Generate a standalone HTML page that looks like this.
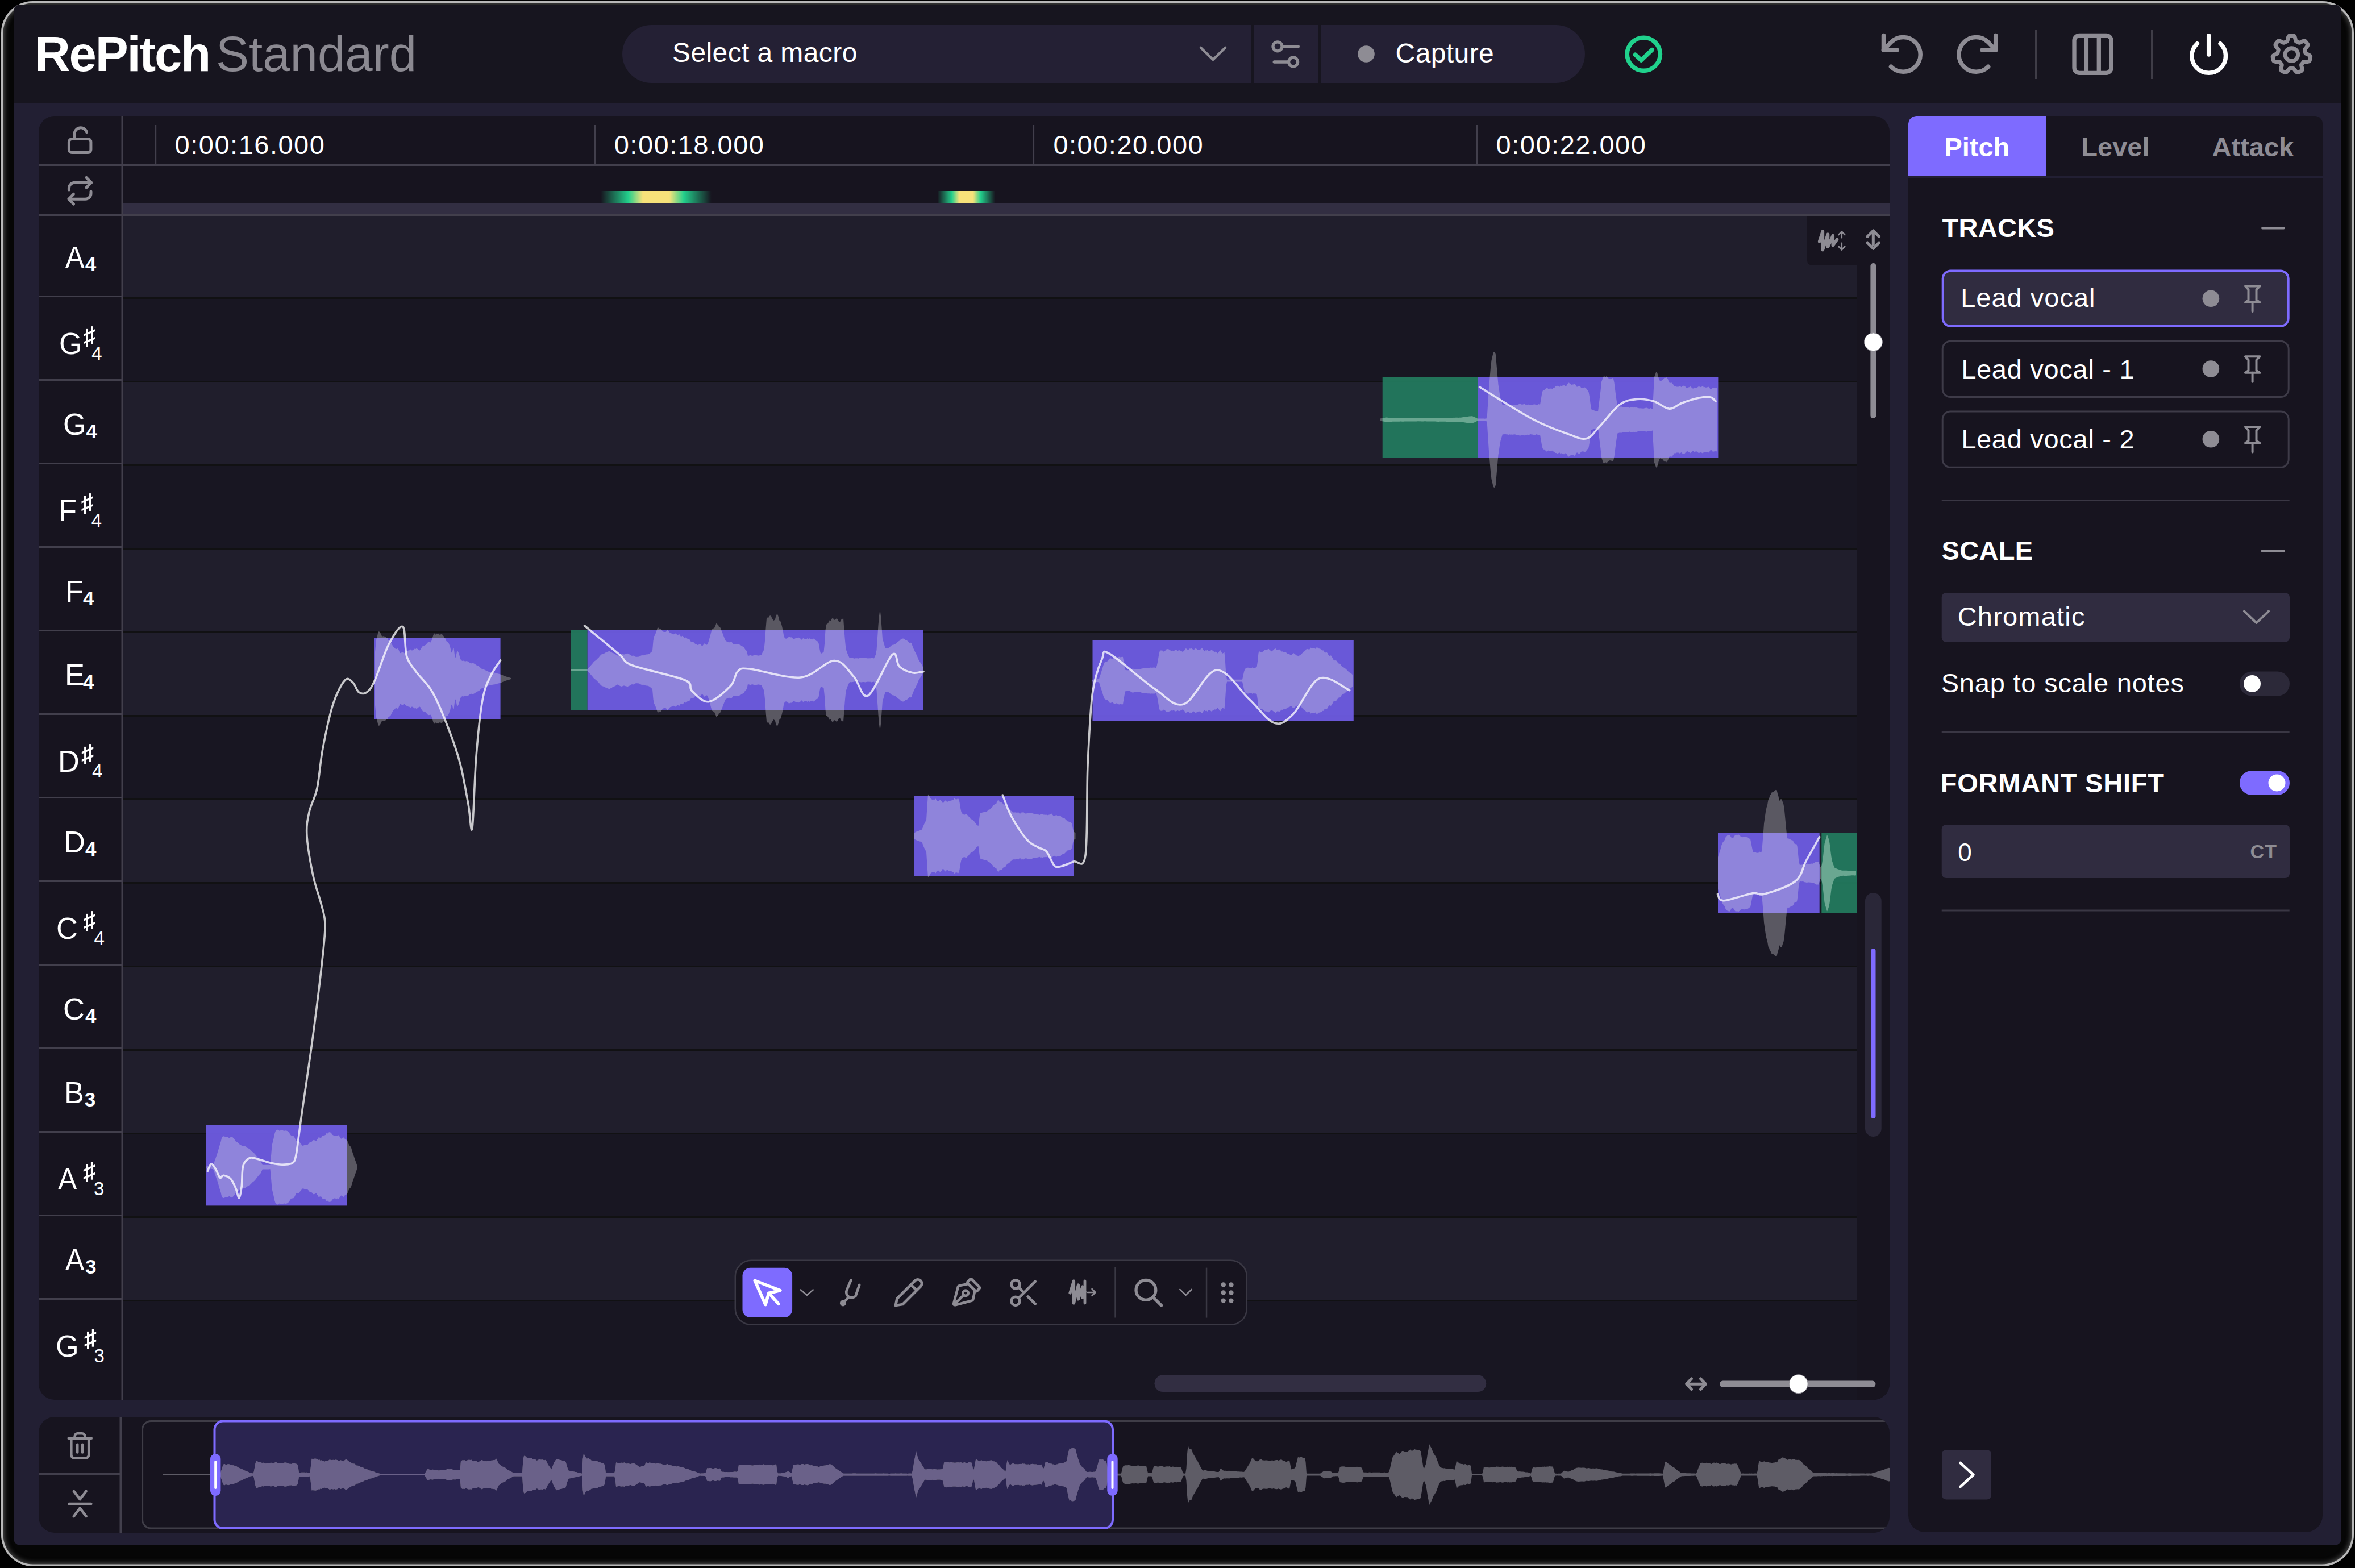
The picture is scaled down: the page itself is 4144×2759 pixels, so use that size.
<!DOCTYPE html><html><head><meta charset="utf-8"><title>RePitch Standard</title><style>
html,body{margin:0;padding:0;background:#000;width:4144px;height:2759px;overflow:hidden;font-family:"Liberation Sans", sans-serif}
.t{position:absolute;white-space:pre;font-family:"Liberation Sans", sans-serif}
svg{position:absolute;left:0;top:0}
</style></head><body>
<div style="position:absolute;left:2px;top:2px;width:4140px;height:2754px;border-radius:56px;background:#060606;box-shadow:inset 0 0 0 3.5px #b8b8b8, inset 0 0 10px 5px rgba(150,150,150,0.55)"></div>
<svg width="4144" height="2759" viewBox="0 0 4144 2759">
<rect x="24" y="8" width="4096" height="2711" rx="12" fill="#221f33" />
<path d="M24,20 a12,12 0 0 1 12,-12 H4108 a12,12 0 0 1 12,12 V182 H24 Z" fill="#17151f"/>
<path d="M1146,44 H2202 V146 H1146 A51,51 0 0 1 1146,44 Z" fill="#242034"/>
<rect x="2202" y="44" width="4" height="102" rx="0" fill="#17151f" />
<rect x="2206" y="44" width="114" height="102" rx="0" fill="#242034" />
<rect x="2320" y="44" width="4" height="102" rx="0" fill="#17151f" />
<path d="M2324,44 H2738 A51,51 0 0 1 2738,146 H2324 Z" fill="#242034"/>
<path d="M2113,84 L2134.5,105 L2156,84" fill="none" stroke="#8e8c94" stroke-width="4.5" stroke-linecap="round" stroke-linejoin="round"/>
<g fill="none" stroke="#8e8c94" stroke-width="5.3" stroke-linecap="round"><circle cx="2248" cy="81.8" r="8"/><line x1="2258.8" y1="81.8" x2="2284.3" y2="81.8"/><circle cx="2275.6" cy="109" r="8"/><line x1="2242.2" y1="109" x2="2265" y2="109"/></g>
<circle cx="2404" cy="95" r="14.8" fill="#8e8c94"/>
<g fill="none" stroke="#20d18c" stroke-width="7.6" stroke-linecap="round" stroke-linejoin="round"><circle cx="2892.3" cy="95.3" r="29.1"/><path d="M2877.6,96.3 L2888,106 L2907.1,87.7"/></g>
<path d="M3327.5,117.3 A30.3,30.3 0 1 0 3328,74 L3314.5,88" fill="none" stroke="#8e8c94" stroke-width="7.5" stroke-linecap="round" stroke-linejoin="round"/><path d="M3314.5,62.5 V88 H3338" fill="none" stroke="#8e8c94" stroke-width="7.5" stroke-linecap="round" stroke-linejoin="round"/>
<g transform="translate(6826.2,0) scale(-1,1)"><path d="M3327.5,117.3 A30.3,30.3 0 1 0 3328,74 L3314.5,88" fill="none" stroke="#8e8c94" stroke-width="7.5" stroke-linecap="round" stroke-linejoin="round"/><path d="M3314.5,62.5 V88 H3338" fill="none" stroke="#8e8c94" stroke-width="7.5" stroke-linecap="round" stroke-linejoin="round"/></g>
<rect x="3581" y="52" width="3.5" height="87" rx="0" fill="#3f3d47" />
<g fill="none" stroke="#8e8c94" stroke-width="7.3"><rect x="3650" y="62.5" width="65.2" height="65.8" rx="9"/><line x1="3671.4" y1="62" x2="3671.4" y2="128"/><line x1="3693.3" y1="62" x2="3693.3" y2="128"/></g>
<rect x="3785" y="52" width="3.5" height="87" rx="0" fill="#3f3d47" />
<g fill="none" stroke="#ffffff" stroke-width="7.5" stroke-linecap="round"><path d="M3866.3,76.8 A29.8,29.8 0 1 0 3907.1,76.8"/><line x1="3886.7" y1="62.8" x2="3886.7" y2="96"/></g>
<path d="M4032.40,62.50 L4033.65,62.52 L4034.90,62.59 L4036.15,62.74 L4037.29,63.57 L4038.20,65.33 L4038.85,67.73 L4039.33,70.12 L4039.83,71.92 L4040.50,72.84 L4041.35,73.19 L4042.20,73.54 L4043.03,73.93 L4043.85,74.34 L4044.65,74.78 L4045.45,75.23 L4046.60,75.18 L4048.31,74.44 L4050.48,73.33 L4052.76,72.34 L4054.71,71.96 L4056.07,72.33 L4056.96,73.21 L4057.79,74.15 L4058.59,75.11 L4059.35,76.11 L4060.08,77.13 L4060.74,78.19 L4060.81,79.60 L4059.99,81.42 L4058.53,83.42 L4056.95,85.29 L4055.86,86.79 L4055.56,87.90 L4055.81,88.78 L4056.07,89.66 L4056.29,90.55 L4056.47,91.45 L4056.63,92.35 L4056.78,93.25 L4057.53,94.12 L4059.17,95.00 L4061.40,96.00 L4063.59,97.17 L4065.11,98.45 L4065.66,99.75 L4065.53,100.99 L4065.32,102.23 L4065.06,103.45 L4064.76,104.67 L4064.41,105.87 L4063.99,107.05 L4062.93,107.98 L4061.01,108.48 L4058.53,108.58 L4056.09,108.52 L4054.22,108.60 L4053.17,109.05 L4052.64,109.80 L4052.11,110.55 L4051.55,111.28 L4050.97,111.98 L4050.36,112.66 L4049.75,113.35 L4049.54,114.47 L4049.87,116.31 L4050.48,118.67 L4050.93,121.11 L4050.88,123.10 L4050.21,124.34 L4049.15,125.01 L4048.05,125.62 L4046.94,126.18 L4045.80,126.70 L4044.64,127.18 L4043.45,127.59 L4042.07,127.34 L4040.48,126.15 L4038.85,124.27 L4037.38,122.32 L4036.16,120.92 L4035.15,120.38 L4034.23,120.43 L4033.32,120.48 L4032.40,120.50 L4031.48,120.48 L4030.57,120.43 L4029.65,120.38 L4028.64,120.92 L4027.42,122.32 L4025.95,124.27 L4024.32,126.15 L4022.73,127.34 L4021.35,127.59 L4020.16,127.18 L4019.00,126.70 L4017.86,126.18 L4016.75,125.62 L4015.65,125.01 L4014.59,124.34 L4013.92,123.10 L4013.87,121.11 L4014.32,118.67 L4014.93,116.31 L4015.26,114.47 L4015.05,113.35 L4014.44,112.66 L4013.83,111.98 L4013.25,111.28 L4012.69,110.55 L4012.16,109.80 L4011.63,109.05 L4010.58,108.60 L4008.71,108.52 L4006.27,108.58 L4003.79,108.48 L4001.87,107.98 L4000.81,107.05 L4000.39,105.87 L4000.04,104.67 L3999.74,103.45 L3999.48,102.23 L3999.27,100.99 L3999.14,99.75 L3999.69,98.45 L4001.21,97.17 L4003.40,96.00 L4005.63,95.00 L4007.27,94.12 L4008.02,93.25 L4008.17,92.35 L4008.33,91.45 L4008.51,90.55 L4008.73,89.66 L4008.99,88.78 L4009.24,87.90 L4008.94,86.79 L4007.85,85.29 L4006.27,83.42 L4004.81,81.42 L4003.99,79.60 L4004.06,78.19 L4004.72,77.13 L4005.45,76.11 L4006.21,75.11 L4007.01,74.15 L4007.84,73.21 L4008.73,72.33 L4010.09,71.96 L4012.04,72.34 L4014.32,73.33 L4016.49,74.44 L4018.20,75.18 L4019.35,75.23 L4020.15,74.78 L4020.95,74.34 L4021.77,73.93 L4022.60,73.54 L4023.45,73.19 L4024.30,72.84 L4024.97,71.92 L4025.47,70.12 L4025.95,67.73 L4026.60,65.33 L4027.51,63.57 L4028.65,62.74 L4029.90,62.59 L4031.15,62.52 L4032.40,62.50Z" fill="none" stroke="#8e8c94" stroke-width="7" stroke-linejoin="round"/>
<circle cx="4032.4" cy="96" r="11.3" fill="none" stroke="#8e8c94" stroke-width="7"/>
<defs><clipPath id="ed"><rect x="68" y="204" width="3257" height="2259" rx="28"/></clipPath><clipPath id="grid"><rect x="217" y="380" width="3050" height="2083"/></clipPath></defs>
<g clip-path="url(#ed)">
<rect x="68" y="204" width="3257" height="2259" rx="0" fill="#17141f" />
<rect x="217" y="358" width="3108" height="18" rx="0" fill="#322e42" />
<rect x="217" y="380" width="3050" height="143" rx="0" fill="#201e2c" />
<rect x="217" y="523" width="3050" height="147" rx="0" fill="#181622" />
<rect x="217" y="523" width="3050" height="3" rx="0" fill="#111113" />
<rect x="68" y="520" width="146" height="3" rx="0" fill="#423f4c" />
<rect x="217" y="670" width="3050" height="147" rx="0" fill="#201e2c" />
<rect x="217" y="670" width="3050" height="3" rx="0" fill="#111113" />
<rect x="68" y="667" width="146" height="3" rx="0" fill="#423f4c" />
<rect x="217" y="817" width="3050" height="147" rx="0" fill="#181622" />
<rect x="217" y="817" width="3050" height="3" rx="0" fill="#111113" />
<rect x="68" y="814" width="146" height="3" rx="0" fill="#423f4c" />
<rect x="217" y="964" width="3050" height="147" rx="0" fill="#201e2c" />
<rect x="217" y="964" width="3050" height="3" rx="0" fill="#111113" />
<rect x="68" y="961" width="146" height="3" rx="0" fill="#423f4c" />
<rect x="217" y="1111" width="3050" height="147" rx="0" fill="#201e2c" />
<rect x="217" y="1111" width="3050" height="3" rx="0" fill="#111113" />
<rect x="68" y="1108" width="146" height="3" rx="0" fill="#423f4c" />
<rect x="217" y="1258" width="3050" height="147" rx="0" fill="#181622" />
<rect x="217" y="1258" width="3050" height="3" rx="0" fill="#111113" />
<rect x="68" y="1255" width="146" height="3" rx="0" fill="#423f4c" />
<rect x="217" y="1405" width="3050" height="147" rx="0" fill="#201e2c" />
<rect x="217" y="1405" width="3050" height="3" rx="0" fill="#111113" />
<rect x="68" y="1402" width="146" height="3" rx="0" fill="#423f4c" />
<rect x="217" y="1552" width="3050" height="147" rx="0" fill="#181622" />
<rect x="217" y="1552" width="3050" height="3" rx="0" fill="#111113" />
<rect x="68" y="1549" width="146" height="3" rx="0" fill="#423f4c" />
<rect x="217" y="1699" width="3050" height="147" rx="0" fill="#201e2c" />
<rect x="217" y="1699" width="3050" height="3" rx="0" fill="#111113" />
<rect x="68" y="1696" width="146" height="3" rx="0" fill="#423f4c" />
<rect x="217" y="1846" width="3050" height="147" rx="0" fill="#201e2c" />
<rect x="217" y="1846" width="3050" height="3" rx="0" fill="#111113" />
<rect x="68" y="1843" width="146" height="3" rx="0" fill="#423f4c" />
<rect x="217" y="1993" width="3050" height="147" rx="0" fill="#181622" />
<rect x="217" y="1993" width="3050" height="3" rx="0" fill="#111113" />
<rect x="68" y="1990" width="146" height="3" rx="0" fill="#423f4c" />
<rect x="217" y="2140" width="3050" height="147" rx="0" fill="#201e2c" />
<rect x="217" y="2140" width="3050" height="3" rx="0" fill="#111113" />
<rect x="68" y="2137" width="146" height="3" rx="0" fill="#423f4c" />
<rect x="217" y="2287" width="3050" height="176" rx="0" fill="#181622" />
<rect x="217" y="2287" width="3050" height="3" rx="0" fill="#111113" />
<rect x="68" y="2284" width="146" height="3" rx="0" fill="#423f4c" />
<rect x="3267" y="380" width="58" height="2083" rx="0" fill="#17141f" />
<path d="M3180,380 H3325 V466.6 H3188 A8,8 0 0 1 3180,458.6 Z" fill="#17141f"/>
<rect x="68" y="288.5" width="3257" height="3.5" rx="0" fill="#423f4c" />
<rect x="68" y="376" width="3257" height="4" rx="0" fill="#423f4c" />
<rect x="213.5" y="204" width="3.5" height="2259" rx="0" fill="#423f4c" />
<rect x="272.2" y="220" width="3" height="70" rx="0" fill="#423f4c" />
<rect x="1045.0" y="220" width="3" height="70" rx="0" fill="#423f4c" />
<rect x="1817.1" y="220" width="3" height="70" rx="0" fill="#423f4c" />
<rect x="2597.1" y="220" width="3" height="70" rx="0" fill="#423f4c" />
<defs><linearGradient id="mk" x1="0" x2="1"><stop offset="0" stop-color="#17141f"/><stop offset="0.25" stop-color="#23cf8c"/><stop offset="0.38" stop-color="#f7e27a"/><stop offset="0.62" stop-color="#f7e27a"/><stop offset="0.75" stop-color="#23cf8c"/><stop offset="1" stop-color="#17141f"/></linearGradient></defs>
<rect x="1057" y="336" width="195" height="22" rx="0" fill="url(#mk)" />
<rect x="1649.5" y="336" width="101.5" height="22" rx="0" fill="url(#mk)" />
<g fill="none" stroke="#8e8c94" stroke-width="5" stroke-linecap="round" stroke-linejoin="round"><rect x="121.4" y="244.5" width="38.5" height="24" rx="5"/><path d="M131,244 V236 A11,11 0 0 1 152.5,232.5"/><path d="M121.4,334 V331 A10,10 0 0 1 131.4,321.2 H160.5"/><path d="M152,312.5 L160.5,321.2 L152,330"/><path d="M160,337 V340 A10,10 0 0 1 150,350.3 H121"/><path d="M129.5,341.5 L121,350.3 L129.5,359"/></g>
<g fill="none" stroke="#8e8c94" stroke-linecap="round" stroke-linejoin="round"><path d="M3201.6,424.8 L3207.4,406.9 L3207.4,439.7 L3216.5,412.1 L3216.5,434.5 L3225.3,414.6 L3225.3,431.7 L3232.5,421.5" stroke-width="5.5"/><path d="M3240.8,418.2 V407.7 M3235.3,413.2 L3240.8,407.5 L3246.3,413.2 M3240.8,427.9 V439.2 M3235.3,433.7 L3240.8,439.5 L3246.3,433.7" stroke-width="2.6"/><path d="M3296.3,411.6 V430.3 M3286,416.3 L3296.3,406 L3306.5,416.3 M3286,427 L3296.3,437.3 L3306.5,427" stroke-width="5"/></g>
<rect x="3291.4" y="463" width="10" height="273" rx="5" fill="#8e8c94" />
<circle cx="3296.4" cy="601.8" r="16" fill="#fff" stroke="#8e8c94" stroke-width="1"/>
<rect x="3282" y="1571" width="28.7" height="429" rx="14.35" fill="#2a2738" />
<rect x="3292.5" y="1669" width="8" height="299" rx="4" fill="#7e6bff" />
<g clip-path="url(#grid)">
<path d="M363.0,2052.7 L364.5,2052.3 L366.0,2051.9 L367.5,2051.6 L369.0,2051.1 L370.5,2050.8 L372.0,2050.5 L373.5,2050.3 L375.0,2049.9 L376.5,2046.1 L378.0,2041.9 L379.5,2037.8 L381.0,2033.5 L382.5,2029.1 L384.0,2024.1 L385.5,2019.0 L387.0,2013.8 L388.5,2009.1 L390.0,2002.8 L391.5,2000.0 L393.0,1999.2 L394.5,1999.4 L396.0,2000.1 L397.5,2000.9 L399.0,2000.3 L400.5,2000.3 L402.0,2001.5 L403.5,2002.9 L405.0,2001.6 L406.5,2000.0 L408.0,2000.1 L409.5,2001.3 L411.0,2002.7 L412.5,2004.5 L414.0,2007.5 L415.5,2009.0 L417.0,2009.6 L418.5,2010.1 L420.0,2012.1 L421.5,2013.4 L423.0,2014.2 L424.5,2015.2 L426.0,2016.4 L427.5,2017.0 L429.0,2016.4 L430.5,2016.4 L432.0,2017.3 L433.5,2018.9 L435.0,2019.7 L436.5,2020.3 L438.0,2021.0 L439.5,2021.8 L441.0,2023.7 L442.5,2024.9 L444.0,2026.8 L445.5,2027.6 L447.0,2029.0 L448.5,2030.4 L450.0,2032.2 L451.5,2034.3 L453.0,2036.1 L454.5,2038.1 L456.0,2039.6 L457.5,2041.6 L459.0,2043.2 L460.5,2046.7 L462.0,2049.9 L463.5,2049.8 L465.0,2049.8 L466.5,2049.7 L468.0,2049.8 L469.5,2049.7 L471.0,2049.7 L472.5,2049.7 L474.0,2049.9 L475.5,2049.9 L477.0,2033.9 L478.5,2015.5 L480.0,2009.1 L481.5,2003.0 L483.0,1995.5 L484.5,1991.0 L486.0,1988.5 L487.5,1988.4 L489.0,1987.4 L490.5,1988.5 L492.0,1990.0 L493.5,1989.0 L495.0,1988.9 L496.5,1987.6 L498.0,1989.3 L499.5,1989.5 L501.0,1989.7 L502.5,1989.3 L504.0,1989.4 L505.5,1989.9 L507.0,1991.1 L508.5,1992.4 L510.0,1995.0 L511.5,1997.3 L513.0,1998.6 L514.5,1998.8 L516.0,1998.6 L517.5,2000.1 L519.0,2002.7 L520.5,2006.4 L522.0,2008.2 L523.5,2008.2 L525.0,2007.6 L526.5,2008.6 L528.0,2010.6 L529.5,2012.7 L531.0,2014.3 L532.5,2016.0 L534.0,2015.6 L535.5,2015.1 L537.0,2014.2 L538.5,2014.4 L540.0,2014.8 L541.5,2013.9 L543.0,2012.5 L544.5,2010.5 L546.0,2009.1 L547.5,2009.4 L549.0,2008.6 L550.5,2006.8 L552.0,2005.7 L553.5,2006.3 L555.0,2007.8 L556.5,2008.0 L558.0,2005.1 L559.5,2003.2 L561.0,2000.5 L562.5,2001.8 L564.0,2001.9 L565.5,2001.5 L567.0,1998.7 L568.5,1997.5 L570.0,1998.3 L571.5,1997.5 L573.0,1996.7 L574.5,1993.7 L576.0,1994.9 L577.5,1992.7 L579.0,1992.6 L580.5,1991.6 L582.0,1993.3 L583.5,1994.4 L585.0,1996.8 L586.5,1997.6 L588.0,1999.1 L589.5,1997.6 L591.0,1998.6 L592.5,1997.9 L594.0,1998.7 L595.5,1997.2 L597.0,1999.1 L598.5,2001.3 L600.0,2003.8 L601.5,2003.2 L603.0,2001.9 L604.5,2001.3 L606.0,2002.8 L607.5,2005.1 L609.0,2005.4 L610.5,2005.7 L612.0,2008.9 L613.5,2012.9 L615.0,2015.6 L616.5,2016.9 L618.0,2019.4 L619.5,2024.8 L621.0,2029.7 L622.5,2033.8 L624.0,2038.3 L625.5,2042.4 L627.0,2046.8 L628.5,2051.2 L628.5,2056.0 L627.0,2060.4 L625.5,2064.8 L624.0,2068.9 L622.5,2073.4 L621.0,2077.5 L619.5,2082.4 L618.0,2087.8 L616.5,2090.3 L615.0,2091.6 L613.5,2094.3 L612.0,2098.3 L610.5,2101.5 L609.0,2101.8 L607.5,2102.1 L606.0,2104.4 L604.5,2105.9 L603.0,2105.3 L601.5,2104.0 L600.0,2103.4 L598.5,2105.9 L597.0,2108.1 L595.5,2110.0 L594.0,2108.5 L592.5,2109.3 L591.0,2108.6 L589.5,2109.6 L588.0,2108.1 L586.5,2109.6 L585.0,2110.4 L583.5,2112.8 L582.0,2113.9 L580.5,2115.6 L579.0,2114.6 L577.5,2114.5 L576.0,2112.3 L574.5,2113.5 L573.0,2110.5 L571.5,2109.7 L570.0,2108.9 L568.5,2109.7 L567.0,2108.5 L565.5,2105.7 L564.0,2105.3 L562.5,2105.4 L561.0,2106.7 L559.5,2104.0 L558.0,2102.1 L556.5,2099.2 L555.0,2099.4 L553.5,2100.9 L552.0,2101.5 L550.5,2100.4 L549.0,2098.6 L547.5,2097.8 L546.0,2098.1 L544.5,2096.7 L543.0,2094.7 L541.5,2093.3 L540.0,2092.4 L538.5,2092.8 L537.0,2093.0 L535.5,2092.1 L534.0,2091.6 L532.5,2091.2 L531.0,2092.9 L529.5,2094.5 L528.0,2096.6 L526.5,2098.6 L525.0,2099.6 L523.5,2099.0 L522.0,2099.0 L520.5,2100.8 L519.0,2104.5 L517.5,2107.1 L516.0,2108.6 L514.5,2108.4 L513.0,2108.6 L511.5,2109.9 L510.0,2112.2 L508.5,2114.8 L507.0,2116.1 L505.5,2117.3 L504.0,2117.8 L502.5,2117.9 L501.0,2117.5 L499.5,2117.7 L498.0,2117.9 L496.5,2119.6 L495.0,2118.3 L493.5,2118.2 L492.0,2117.2 L490.5,2118.7 L489.0,2119.8 L487.5,2118.8 L486.0,2118.7 L484.5,2116.2 L483.0,2111.7 L481.5,2104.2 L480.0,2098.1 L478.5,2091.7 L477.0,2073.3 L475.5,2057.3 L474.0,2057.3 L472.5,2057.5 L471.0,2057.5 L469.5,2057.5 L468.0,2057.4 L466.5,2057.5 L465.0,2057.4 L463.5,2057.4 L462.0,2057.3 L460.5,2060.5 L459.0,2064.0 L457.5,2065.6 L456.0,2067.6 L454.5,2069.1 L453.0,2071.1 L451.5,2072.9 L450.0,2075.0 L448.5,2076.8 L447.0,2078.2 L445.5,2079.6 L444.0,2080.4 L442.5,2082.3 L441.0,2083.5 L439.5,2085.4 L438.0,2086.2 L436.5,2086.9 L435.0,2087.5 L433.5,2088.3 L432.0,2089.9 L430.5,2090.8 L429.0,2090.8 L427.5,2090.2 L426.0,2090.8 L424.5,2092.0 L423.0,2093.0 L421.5,2093.8 L420.0,2095.1 L418.5,2097.1 L417.0,2097.6 L415.5,2098.2 L414.0,2099.7 L412.5,2102.7 L411.0,2104.5 L409.5,2105.9 L408.0,2107.1 L406.5,2107.2 L405.0,2105.6 L403.5,2104.3 L402.0,2105.7 L400.5,2106.9 L399.0,2106.9 L397.5,2106.3 L396.0,2107.1 L394.5,2107.8 L393.0,2108.0 L391.5,2107.2 L390.0,2104.4 L388.5,2098.1 L387.0,2093.4 L385.5,2088.2 L384.0,2083.1 L382.5,2078.1 L381.0,2073.7 L379.5,2069.4 L378.0,2065.3 L376.5,2061.1 L375.0,2057.3 L373.5,2056.9 L372.0,2056.7 L370.5,2056.4 L369.0,2056.1 L367.5,2055.6 L366.0,2055.3 L364.5,2054.9 L363.0,2054.5 Z" fill="#5a5862"/>
<g opacity="0.92">
<rect x="362.8" y="1979.6" width="247.59999999999997" height="141.80000000000018" rx="0" fill="#705de7" />
<clipPath id="n1"><rect x="362.8" y="1979.6" width="247.59999999999997" height="141.80000000000018"/></clipPath>
<path d="M363.0,2052.7 L364.5,2052.3 L366.0,2051.9 L367.5,2051.6 L369.0,2051.1 L370.5,2050.8 L372.0,2050.5 L373.5,2050.3 L375.0,2049.9 L376.5,2046.1 L378.0,2041.9 L379.5,2037.8 L381.0,2033.5 L382.5,2029.1 L384.0,2024.1 L385.5,2019.0 L387.0,2013.8 L388.5,2009.1 L390.0,2002.8 L391.5,2000.0 L393.0,1999.2 L394.5,1999.4 L396.0,2000.1 L397.5,2000.9 L399.0,2000.3 L400.5,2000.3 L402.0,2001.5 L403.5,2002.9 L405.0,2001.6 L406.5,2000.0 L408.0,2000.1 L409.5,2001.3 L411.0,2002.7 L412.5,2004.5 L414.0,2007.5 L415.5,2009.0 L417.0,2009.6 L418.5,2010.1 L420.0,2012.1 L421.5,2013.4 L423.0,2014.2 L424.5,2015.2 L426.0,2016.4 L427.5,2017.0 L429.0,2016.4 L430.5,2016.4 L432.0,2017.3 L433.5,2018.9 L435.0,2019.7 L436.5,2020.3 L438.0,2021.0 L439.5,2021.8 L441.0,2023.7 L442.5,2024.9 L444.0,2026.8 L445.5,2027.6 L447.0,2029.0 L448.5,2030.4 L450.0,2032.2 L451.5,2034.3 L453.0,2036.1 L454.5,2038.1 L456.0,2039.6 L457.5,2041.6 L459.0,2043.2 L460.5,2046.7 L462.0,2049.9 L463.5,2049.8 L465.0,2049.8 L466.5,2049.7 L468.0,2049.8 L469.5,2049.7 L471.0,2049.7 L472.5,2049.7 L474.0,2049.9 L475.5,2049.9 L477.0,2033.9 L478.5,2015.5 L480.0,2009.1 L481.5,2003.0 L483.0,1995.5 L484.5,1991.0 L486.0,1988.5 L487.5,1988.4 L489.0,1987.4 L490.5,1988.5 L492.0,1990.0 L493.5,1989.0 L495.0,1988.9 L496.5,1987.6 L498.0,1989.3 L499.5,1989.5 L501.0,1989.7 L502.5,1989.3 L504.0,1989.4 L505.5,1989.9 L507.0,1991.1 L508.5,1992.4 L510.0,1995.0 L511.5,1997.3 L513.0,1998.6 L514.5,1998.8 L516.0,1998.6 L517.5,2000.1 L519.0,2002.7 L520.5,2006.4 L522.0,2008.2 L523.5,2008.2 L525.0,2007.6 L526.5,2008.6 L528.0,2010.6 L529.5,2012.7 L531.0,2014.3 L532.5,2016.0 L534.0,2015.6 L535.5,2015.1 L537.0,2014.2 L538.5,2014.4 L540.0,2014.8 L541.5,2013.9 L543.0,2012.5 L544.5,2010.5 L546.0,2009.1 L547.5,2009.4 L549.0,2008.6 L550.5,2006.8 L552.0,2005.7 L553.5,2006.3 L555.0,2007.8 L556.5,2008.0 L558.0,2005.1 L559.5,2003.2 L561.0,2000.5 L562.5,2001.8 L564.0,2001.9 L565.5,2001.5 L567.0,1998.7 L568.5,1997.5 L570.0,1998.3 L571.5,1997.5 L573.0,1996.7 L574.5,1993.7 L576.0,1994.9 L577.5,1992.7 L579.0,1992.6 L580.5,1991.6 L582.0,1993.3 L583.5,1994.4 L585.0,1996.8 L586.5,1997.6 L588.0,1999.1 L589.5,1997.6 L591.0,1998.6 L592.5,1997.9 L594.0,1998.7 L595.5,1997.2 L597.0,1999.1 L598.5,2001.3 L600.0,2003.8 L601.5,2003.2 L603.0,2001.9 L604.5,2001.3 L606.0,2002.8 L607.5,2005.1 L609.0,2005.4 L610.5,2005.7 L612.0,2008.9 L613.5,2012.9 L615.0,2015.6 L616.5,2016.9 L618.0,2019.4 L619.5,2024.8 L621.0,2029.7 L622.5,2033.8 L624.0,2038.3 L625.5,2042.4 L627.0,2046.8 L628.5,2051.2 L628.5,2056.0 L627.0,2060.4 L625.5,2064.8 L624.0,2068.9 L622.5,2073.4 L621.0,2077.5 L619.5,2082.4 L618.0,2087.8 L616.5,2090.3 L615.0,2091.6 L613.5,2094.3 L612.0,2098.3 L610.5,2101.5 L609.0,2101.8 L607.5,2102.1 L606.0,2104.4 L604.5,2105.9 L603.0,2105.3 L601.5,2104.0 L600.0,2103.4 L598.5,2105.9 L597.0,2108.1 L595.5,2110.0 L594.0,2108.5 L592.5,2109.3 L591.0,2108.6 L589.5,2109.6 L588.0,2108.1 L586.5,2109.6 L585.0,2110.4 L583.5,2112.8 L582.0,2113.9 L580.5,2115.6 L579.0,2114.6 L577.5,2114.5 L576.0,2112.3 L574.5,2113.5 L573.0,2110.5 L571.5,2109.7 L570.0,2108.9 L568.5,2109.7 L567.0,2108.5 L565.5,2105.7 L564.0,2105.3 L562.5,2105.4 L561.0,2106.7 L559.5,2104.0 L558.0,2102.1 L556.5,2099.2 L555.0,2099.4 L553.5,2100.9 L552.0,2101.5 L550.5,2100.4 L549.0,2098.6 L547.5,2097.8 L546.0,2098.1 L544.5,2096.7 L543.0,2094.7 L541.5,2093.3 L540.0,2092.4 L538.5,2092.8 L537.0,2093.0 L535.5,2092.1 L534.0,2091.6 L532.5,2091.2 L531.0,2092.9 L529.5,2094.5 L528.0,2096.6 L526.5,2098.6 L525.0,2099.6 L523.5,2099.0 L522.0,2099.0 L520.5,2100.8 L519.0,2104.5 L517.5,2107.1 L516.0,2108.6 L514.5,2108.4 L513.0,2108.6 L511.5,2109.9 L510.0,2112.2 L508.5,2114.8 L507.0,2116.1 L505.5,2117.3 L504.0,2117.8 L502.5,2117.9 L501.0,2117.5 L499.5,2117.7 L498.0,2117.9 L496.5,2119.6 L495.0,2118.3 L493.5,2118.2 L492.0,2117.2 L490.5,2118.7 L489.0,2119.8 L487.5,2118.8 L486.0,2118.7 L484.5,2116.2 L483.0,2111.7 L481.5,2104.2 L480.0,2098.1 L478.5,2091.7 L477.0,2073.3 L475.5,2057.3 L474.0,2057.3 L472.5,2057.5 L471.0,2057.5 L469.5,2057.5 L468.0,2057.4 L466.5,2057.5 L465.0,2057.4 L463.5,2057.4 L462.0,2057.3 L460.5,2060.5 L459.0,2064.0 L457.5,2065.6 L456.0,2067.6 L454.5,2069.1 L453.0,2071.1 L451.5,2072.9 L450.0,2075.0 L448.5,2076.8 L447.0,2078.2 L445.5,2079.6 L444.0,2080.4 L442.5,2082.3 L441.0,2083.5 L439.5,2085.4 L438.0,2086.2 L436.5,2086.9 L435.0,2087.5 L433.5,2088.3 L432.0,2089.9 L430.5,2090.8 L429.0,2090.8 L427.5,2090.2 L426.0,2090.8 L424.5,2092.0 L423.0,2093.0 L421.5,2093.8 L420.0,2095.1 L418.5,2097.1 L417.0,2097.6 L415.5,2098.2 L414.0,2099.7 L412.5,2102.7 L411.0,2104.5 L409.5,2105.9 L408.0,2107.1 L406.5,2107.2 L405.0,2105.6 L403.5,2104.3 L402.0,2105.7 L400.5,2106.9 L399.0,2106.9 L397.5,2106.3 L396.0,2107.1 L394.5,2107.8 L393.0,2108.0 L391.5,2107.2 L390.0,2104.4 L388.5,2098.1 L387.0,2093.4 L385.5,2088.2 L384.0,2083.1 L382.5,2078.1 L381.0,2073.7 L379.5,2069.4 L378.0,2065.3 L376.5,2061.1 L375.0,2057.3 L373.5,2056.9 L372.0,2056.7 L370.5,2056.4 L369.0,2056.1 L367.5,2055.6 L366.0,2055.3 L364.5,2054.9 L363.0,2054.5 Z" fill="#9488e6" clip-path="url(#n1)"/>
</g>
<path d="M659.0,1156.7 L660.5,1142.2 L662.0,1125.7 L663.5,1121.2 L665.0,1113.9 L666.5,1111.0 L668.0,1111.8 L669.5,1114.1 L671.0,1117.4 L672.5,1120.0 L674.0,1119.3 L675.5,1119.3 L677.0,1119.9 L678.5,1120.4 L680.0,1122.0 L681.5,1122.0 L683.0,1125.8 L684.5,1126.6 L686.0,1128.1 L687.5,1129.2 L689.0,1132.4 L690.5,1135.3 L692.0,1137.9 L693.5,1139.0 L695.0,1140.7 L696.5,1142.2 L698.0,1141.8 L699.5,1141.0 L701.0,1142.3 L702.5,1146.0 L704.0,1149.1 L705.5,1149.2 L707.0,1147.7 L708.5,1147.8 L710.0,1147.8 L711.5,1149.4 L713.0,1147.9 L714.5,1147.5 L716.0,1144.9 L717.5,1145.1 L719.0,1144.4 L720.5,1144.3 L722.0,1142.3 L723.5,1144.0 L725.0,1144.6 L726.5,1144.1 L728.0,1142.8 L729.5,1141.6 L731.0,1142.3 L732.5,1141.0 L734.0,1141.5 L735.5,1142.5 L737.0,1144.0 L738.5,1144.4 L740.0,1143.2 L741.5,1140.1 L743.0,1138.0 L744.5,1135.7 L746.0,1136.2 L747.5,1135.5 L749.0,1134.8 L750.5,1133.1 L752.0,1131.5 L753.5,1129.4 L755.0,1130.0 L756.5,1129.8 L758.0,1130.5 L759.5,1127.1 L761.0,1121.9 L762.5,1117.2 L764.0,1114.0 L765.5,1116.5 L767.0,1116.5 L768.5,1114.8 L770.0,1115.6 L771.5,1114.8 L773.0,1116.7 L774.5,1116.6 L776.0,1116.2 L777.5,1115.2 L779.0,1117.8 L780.5,1118.9 L782.0,1121.9 L783.5,1123.2 L785.0,1127.4 L786.5,1129.3 L788.0,1129.0 L789.5,1131.6 L791.0,1135.6 L792.5,1140.0 L794.0,1147.6 L795.5,1148.9 L797.0,1141.8 L798.5,1139.9 L800.0,1152.1 L801.5,1157.8 L803.0,1151.7 L804.5,1144.3 L806.0,1146.7 L807.5,1150.1 L809.0,1155.6 L810.5,1160.3 L812.0,1162.1 L813.5,1163.1 L815.0,1162.5 L816.5,1162.8 L818.0,1163.4 L819.5,1163.5 L821.0,1163.1 L822.5,1163.5 L824.0,1164.0 L825.5,1165.4 L827.0,1166.3 L828.5,1167.3 L830.0,1167.3 L831.5,1166.8 L833.0,1167.1 L834.5,1167.7 L836.0,1168.7 L837.5,1169.8 L839.0,1170.7 L840.5,1171.5 L842.0,1172.0 L843.5,1173.1 L845.0,1174.6 L846.5,1176.0 L848.0,1176.9 L849.5,1177.4 L851.0,1177.7 L852.5,1178.6 L854.0,1179.3 L855.5,1180.0 L857.0,1180.7 L858.5,1181.3 L860.0,1182.0 L861.5,1182.5 L863.0,1182.4 L864.5,1182.8 L866.0,1183.1 L867.5,1183.5 L869.0,1183.5 L870.5,1183.7 L872.0,1184.0 L873.5,1184.7 L875.0,1184.9 L876.5,1185.5 L878.0,1185.7 L879.5,1186.2 L881.0,1186.7 L882.5,1187.0 L884.0,1187.8 L885.5,1188.4 L887.0,1189.1 L888.5,1189.6 L890.0,1190.2 L891.5,1190.8 L893.0,1191.2 L894.5,1191.7 L896.0,1192.1 L897.5,1192.6 L899.0,1193.1 L899.0,1194.9 L897.5,1195.4 L896.0,1195.9 L894.5,1196.3 L893.0,1196.8 L891.5,1197.2 L890.0,1197.8 L888.5,1198.4 L887.0,1198.9 L885.5,1199.6 L884.0,1200.2 L882.5,1201.0 L881.0,1201.3 L879.5,1201.8 L878.0,1202.3 L876.5,1202.5 L875.0,1203.1 L873.5,1203.3 L872.0,1204.0 L870.5,1204.3 L869.0,1204.5 L867.5,1204.5 L866.0,1204.9 L864.5,1205.2 L863.0,1205.6 L861.5,1205.5 L860.0,1206.0 L858.5,1206.7 L857.0,1207.3 L855.5,1208.0 L854.0,1208.7 L852.5,1209.4 L851.0,1210.3 L849.5,1210.6 L848.0,1211.1 L846.5,1212.0 L845.0,1213.4 L843.5,1214.9 L842.0,1216.0 L840.5,1216.5 L839.0,1217.3 L837.5,1218.2 L836.0,1219.3 L834.5,1220.3 L833.0,1220.9 L831.5,1221.2 L830.0,1220.7 L828.5,1220.7 L827.0,1221.7 L825.5,1222.6 L824.0,1224.0 L822.5,1224.5 L821.0,1224.9 L819.5,1224.5 L818.0,1224.6 L816.5,1225.2 L815.0,1225.5 L813.5,1224.9 L812.0,1225.9 L810.5,1227.7 L809.0,1232.4 L807.5,1237.9 L806.0,1241.3 L804.5,1243.7 L803.0,1236.3 L801.5,1230.2 L800.0,1235.9 L798.5,1248.1 L797.0,1246.2 L795.5,1239.1 L794.0,1240.4 L792.5,1248.0 L791.0,1252.4 L789.5,1256.4 L788.0,1259.0 L786.5,1258.7 L785.0,1260.6 L783.5,1264.8 L782.0,1266.1 L780.5,1269.1 L779.0,1270.2 L777.5,1272.8 L776.0,1271.8 L774.5,1271.4 L773.0,1271.3 L771.5,1273.2 L770.0,1272.4 L768.5,1273.2 L767.0,1271.5 L765.5,1271.5 L764.0,1274.0 L762.5,1270.8 L761.0,1266.1 L759.5,1260.9 L758.0,1257.5 L756.5,1258.2 L755.0,1258.0 L753.5,1258.6 L752.0,1256.5 L750.5,1254.9 L749.0,1253.2 L747.5,1252.5 L746.0,1251.8 L744.5,1252.3 L743.0,1250.0 L741.5,1247.9 L740.0,1244.8 L738.5,1243.6 L737.0,1244.0 L735.5,1245.5 L734.0,1246.5 L732.5,1247.0 L731.0,1245.7 L729.5,1246.4 L728.0,1245.2 L726.5,1243.9 L725.0,1243.4 L723.5,1244.0 L722.0,1245.7 L720.5,1243.7 L719.0,1243.6 L717.5,1242.9 L716.0,1243.1 L714.5,1240.5 L713.0,1240.1 L711.5,1238.6 L710.0,1240.2 L708.5,1240.2 L707.0,1240.3 L705.5,1238.8 L704.0,1238.9 L702.5,1242.0 L701.0,1245.7 L699.5,1247.0 L698.0,1246.2 L696.5,1245.8 L695.0,1247.3 L693.5,1249.0 L692.0,1250.1 L690.5,1252.7 L689.0,1255.6 L687.5,1258.8 L686.0,1259.9 L684.5,1261.4 L683.0,1262.2 L681.5,1266.0 L680.0,1266.0 L678.5,1267.6 L677.0,1268.1 L675.5,1268.7 L674.0,1268.7 L672.5,1268.0 L671.0,1270.6 L669.5,1273.9 L668.0,1276.2 L666.5,1277.0 L665.0,1274.1 L663.5,1266.8 L662.0,1262.3 L660.5,1245.8 L659.0,1231.3 Z" fill="#5a5862"/>
<g opacity="0.92">
<rect x="658" y="1123" width="222.60000000000002" height="142" rx="0" fill="#705de7" />
<clipPath id="n2"><rect x="658" y="1123" width="222.60000000000002" height="142"/></clipPath>
<path d="M659.0,1156.7 L660.5,1142.2 L662.0,1125.7 L663.5,1121.2 L665.0,1113.9 L666.5,1111.0 L668.0,1111.8 L669.5,1114.1 L671.0,1117.4 L672.5,1120.0 L674.0,1119.3 L675.5,1119.3 L677.0,1119.9 L678.5,1120.4 L680.0,1122.0 L681.5,1122.0 L683.0,1125.8 L684.5,1126.6 L686.0,1128.1 L687.5,1129.2 L689.0,1132.4 L690.5,1135.3 L692.0,1137.9 L693.5,1139.0 L695.0,1140.7 L696.5,1142.2 L698.0,1141.8 L699.5,1141.0 L701.0,1142.3 L702.5,1146.0 L704.0,1149.1 L705.5,1149.2 L707.0,1147.7 L708.5,1147.8 L710.0,1147.8 L711.5,1149.4 L713.0,1147.9 L714.5,1147.5 L716.0,1144.9 L717.5,1145.1 L719.0,1144.4 L720.5,1144.3 L722.0,1142.3 L723.5,1144.0 L725.0,1144.6 L726.5,1144.1 L728.0,1142.8 L729.5,1141.6 L731.0,1142.3 L732.5,1141.0 L734.0,1141.5 L735.5,1142.5 L737.0,1144.0 L738.5,1144.4 L740.0,1143.2 L741.5,1140.1 L743.0,1138.0 L744.5,1135.7 L746.0,1136.2 L747.5,1135.5 L749.0,1134.8 L750.5,1133.1 L752.0,1131.5 L753.5,1129.4 L755.0,1130.0 L756.5,1129.8 L758.0,1130.5 L759.5,1127.1 L761.0,1121.9 L762.5,1117.2 L764.0,1114.0 L765.5,1116.5 L767.0,1116.5 L768.5,1114.8 L770.0,1115.6 L771.5,1114.8 L773.0,1116.7 L774.5,1116.6 L776.0,1116.2 L777.5,1115.2 L779.0,1117.8 L780.5,1118.9 L782.0,1121.9 L783.5,1123.2 L785.0,1127.4 L786.5,1129.3 L788.0,1129.0 L789.5,1131.6 L791.0,1135.6 L792.5,1140.0 L794.0,1147.6 L795.5,1148.9 L797.0,1141.8 L798.5,1139.9 L800.0,1152.1 L801.5,1157.8 L803.0,1151.7 L804.5,1144.3 L806.0,1146.7 L807.5,1150.1 L809.0,1155.6 L810.5,1160.3 L812.0,1162.1 L813.5,1163.1 L815.0,1162.5 L816.5,1162.8 L818.0,1163.4 L819.5,1163.5 L821.0,1163.1 L822.5,1163.5 L824.0,1164.0 L825.5,1165.4 L827.0,1166.3 L828.5,1167.3 L830.0,1167.3 L831.5,1166.8 L833.0,1167.1 L834.5,1167.7 L836.0,1168.7 L837.5,1169.8 L839.0,1170.7 L840.5,1171.5 L842.0,1172.0 L843.5,1173.1 L845.0,1174.6 L846.5,1176.0 L848.0,1176.9 L849.5,1177.4 L851.0,1177.7 L852.5,1178.6 L854.0,1179.3 L855.5,1180.0 L857.0,1180.7 L858.5,1181.3 L860.0,1182.0 L861.5,1182.5 L863.0,1182.4 L864.5,1182.8 L866.0,1183.1 L867.5,1183.5 L869.0,1183.5 L870.5,1183.7 L872.0,1184.0 L873.5,1184.7 L875.0,1184.9 L876.5,1185.5 L878.0,1185.7 L879.5,1186.2 L881.0,1186.7 L882.5,1187.0 L884.0,1187.8 L885.5,1188.4 L887.0,1189.1 L888.5,1189.6 L890.0,1190.2 L891.5,1190.8 L893.0,1191.2 L894.5,1191.7 L896.0,1192.1 L897.5,1192.6 L899.0,1193.1 L899.0,1194.9 L897.5,1195.4 L896.0,1195.9 L894.5,1196.3 L893.0,1196.8 L891.5,1197.2 L890.0,1197.8 L888.5,1198.4 L887.0,1198.9 L885.5,1199.6 L884.0,1200.2 L882.5,1201.0 L881.0,1201.3 L879.5,1201.8 L878.0,1202.3 L876.5,1202.5 L875.0,1203.1 L873.5,1203.3 L872.0,1204.0 L870.5,1204.3 L869.0,1204.5 L867.5,1204.5 L866.0,1204.9 L864.5,1205.2 L863.0,1205.6 L861.5,1205.5 L860.0,1206.0 L858.5,1206.7 L857.0,1207.3 L855.5,1208.0 L854.0,1208.7 L852.5,1209.4 L851.0,1210.3 L849.5,1210.6 L848.0,1211.1 L846.5,1212.0 L845.0,1213.4 L843.5,1214.9 L842.0,1216.0 L840.5,1216.5 L839.0,1217.3 L837.5,1218.2 L836.0,1219.3 L834.5,1220.3 L833.0,1220.9 L831.5,1221.2 L830.0,1220.7 L828.5,1220.7 L827.0,1221.7 L825.5,1222.6 L824.0,1224.0 L822.5,1224.5 L821.0,1224.9 L819.5,1224.5 L818.0,1224.6 L816.5,1225.2 L815.0,1225.5 L813.5,1224.9 L812.0,1225.9 L810.5,1227.7 L809.0,1232.4 L807.5,1237.9 L806.0,1241.3 L804.5,1243.7 L803.0,1236.3 L801.5,1230.2 L800.0,1235.9 L798.5,1248.1 L797.0,1246.2 L795.5,1239.1 L794.0,1240.4 L792.5,1248.0 L791.0,1252.4 L789.5,1256.4 L788.0,1259.0 L786.5,1258.7 L785.0,1260.6 L783.5,1264.8 L782.0,1266.1 L780.5,1269.1 L779.0,1270.2 L777.5,1272.8 L776.0,1271.8 L774.5,1271.4 L773.0,1271.3 L771.5,1273.2 L770.0,1272.4 L768.5,1273.2 L767.0,1271.5 L765.5,1271.5 L764.0,1274.0 L762.5,1270.8 L761.0,1266.1 L759.5,1260.9 L758.0,1257.5 L756.5,1258.2 L755.0,1258.0 L753.5,1258.6 L752.0,1256.5 L750.5,1254.9 L749.0,1253.2 L747.5,1252.5 L746.0,1251.8 L744.5,1252.3 L743.0,1250.0 L741.5,1247.9 L740.0,1244.8 L738.5,1243.6 L737.0,1244.0 L735.5,1245.5 L734.0,1246.5 L732.5,1247.0 L731.0,1245.7 L729.5,1246.4 L728.0,1245.2 L726.5,1243.9 L725.0,1243.4 L723.5,1244.0 L722.0,1245.7 L720.5,1243.7 L719.0,1243.6 L717.5,1242.9 L716.0,1243.1 L714.5,1240.5 L713.0,1240.1 L711.5,1238.6 L710.0,1240.2 L708.5,1240.2 L707.0,1240.3 L705.5,1238.8 L704.0,1238.9 L702.5,1242.0 L701.0,1245.7 L699.5,1247.0 L698.0,1246.2 L696.5,1245.8 L695.0,1247.3 L693.5,1249.0 L692.0,1250.1 L690.5,1252.7 L689.0,1255.6 L687.5,1258.8 L686.0,1259.9 L684.5,1261.4 L683.0,1262.2 L681.5,1266.0 L680.0,1266.0 L678.5,1267.6 L677.0,1268.1 L675.5,1268.7 L674.0,1268.7 L672.5,1268.0 L671.0,1270.6 L669.5,1273.9 L668.0,1276.2 L666.5,1277.0 L665.0,1274.1 L663.5,1266.8 L662.0,1262.3 L660.5,1245.8 L659.0,1231.3 Z" fill="#9488e6" clip-path="url(#n2)"/>
</g>
<path d="M1004.0,1177.2 L1005.5,1177.1 L1007.0,1177.1 L1008.5,1177.0 L1010.0,1177.0 L1011.5,1177.0 L1013.0,1177.1 L1014.5,1177.2 L1016.0,1177.2 L1017.5,1177.1 L1019.0,1177.0 L1020.5,1177.1 L1022.0,1177.1 L1023.5,1177.2 L1025.0,1177.1 L1026.5,1177.1 L1028.0,1177.1 L1029.5,1177.1 L1031.0,1177.1 L1032.5,1177.1 L1034.0,1177.1 L1035.5,1175.6 L1037.0,1174.0 L1038.5,1172.2 L1040.0,1170.5 L1041.5,1168.8 L1043.0,1167.1 L1044.5,1165.0 L1046.0,1163.5 L1047.5,1162.5 L1049.0,1161.2 L1050.5,1159.9 L1052.0,1158.2 L1053.5,1156.9 L1055.0,1155.0 L1056.5,1153.2 L1058.0,1151.8 L1059.5,1150.7 L1061.0,1150.5 L1062.5,1149.7 L1064.0,1149.5 L1065.5,1148.3 L1067.0,1147.9 L1068.5,1147.1 L1070.0,1146.4 L1071.5,1145.7 L1073.0,1145.3 L1074.5,1147.0 L1076.0,1147.2 L1077.5,1148.7 L1079.0,1149.1 L1080.5,1150.1 L1082.0,1150.7 L1083.5,1151.5 L1085.0,1153.1 L1086.5,1153.5 L1088.0,1152.9 L1089.5,1152.0 L1091.0,1151.0 L1092.5,1150.5 L1094.0,1150.0 L1095.5,1150.7 L1097.0,1151.5 L1098.5,1151.4 L1100.0,1151.0 L1101.5,1150.4 L1103.0,1150.2 L1104.5,1149.8 L1106.0,1150.8 L1107.5,1151.3 L1109.0,1152.7 L1110.5,1153.2 L1112.0,1154.1 L1113.5,1153.6 L1115.0,1153.8 L1116.5,1154.5 L1118.0,1155.4 L1119.5,1155.9 L1121.0,1155.7 L1122.5,1155.7 L1124.0,1155.4 L1125.5,1155.0 L1127.0,1154.0 L1128.5,1153.3 L1130.0,1153.0 L1131.5,1153.2 L1133.0,1153.0 L1134.5,1152.3 L1136.0,1151.8 L1137.5,1151.6 L1139.0,1151.3 L1140.5,1151.5 L1142.0,1150.2 L1143.5,1149.9 L1145.0,1148.0 L1146.5,1146.9 L1148.0,1144.9 L1149.5,1127.4 L1151.0,1119.4 L1152.5,1117.8 L1154.0,1113.5 L1155.5,1109.3 L1157.0,1104.4 L1158.5,1104.6 L1160.0,1106.1 L1161.5,1105.9 L1163.0,1105.9 L1164.5,1108.8 L1166.0,1110.5 L1167.5,1111.8 L1169.0,1112.0 L1170.5,1111.9 L1172.0,1111.7 L1173.5,1109.3 L1175.0,1108.3 L1176.5,1110.3 L1178.0,1112.6 L1179.5,1113.9 L1181.0,1114.3 L1182.5,1114.9 L1184.0,1115.7 L1185.5,1116.2 L1187.0,1114.9 L1188.5,1114.6 L1190.0,1115.6 L1191.5,1117.0 L1193.0,1117.7 L1194.5,1115.4 L1196.0,1116.8 L1197.5,1119.3 L1199.0,1120.1 L1200.5,1118.8 L1202.0,1119.4 L1203.5,1121.4 L1205.0,1122.6 L1206.5,1121.4 L1208.0,1122.8 L1209.5,1123.7 L1211.0,1124.4 L1212.5,1124.1 L1214.0,1126.1 L1215.5,1128.8 L1217.0,1130.1 L1218.5,1129.1 L1220.0,1129.7 L1221.5,1131.0 L1223.0,1132.8 L1224.5,1133.3 L1226.0,1133.6 L1227.5,1135.0 L1229.0,1134.4 L1230.5,1133.7 L1232.0,1133.3 L1233.5,1134.8 L1235.0,1136.2 L1236.5,1136.1 L1238.0,1134.0 L1239.5,1132.2 L1241.0,1132.7 L1242.5,1134.5 L1244.0,1134.6 L1245.5,1132.8 L1247.0,1128.0 L1248.5,1122.8 L1250.0,1117.5 L1251.5,1111.7 L1253.0,1107.3 L1254.5,1107.0 L1256.0,1105.1 L1257.5,1104.2 L1259.0,1100.8 L1260.5,1096.5 L1262.0,1098.9 L1263.5,1098.1 L1265.0,1102.9 L1266.5,1103.0 L1268.0,1105.3 L1269.5,1109.3 L1271.0,1113.1 L1272.5,1117.1 L1274.0,1121.1 L1275.5,1124.9 L1277.0,1127.7 L1278.5,1128.6 L1280.0,1130.0 L1281.5,1130.0 L1283.0,1130.4 L1284.5,1129.5 L1286.0,1128.9 L1287.5,1129.7 L1289.0,1131.5 L1290.5,1133.5 L1292.0,1133.1 L1293.5,1133.8 L1295.0,1133.6 L1296.5,1133.0 L1298.0,1133.2 L1299.5,1133.4 L1301.0,1134.6 L1302.5,1134.3 L1304.0,1136.0 L1305.5,1136.6 L1307.0,1137.8 L1308.5,1138.3 L1310.0,1140.8 L1311.5,1142.9 L1313.0,1144.3 L1314.5,1147.0 L1316.0,1154.2 L1317.5,1153.8 L1319.0,1153.3 L1320.5,1152.8 L1322.0,1153.2 L1323.5,1154.2 L1325.0,1153.4 L1326.5,1153.0 L1328.0,1152.1 L1329.5,1152.2 L1331.0,1152.9 L1332.5,1153.3 L1334.0,1153.8 L1335.5,1153.2 L1337.0,1153.3 L1338.5,1152.4 L1340.0,1152.4 L1341.5,1148.5 L1343.0,1146.3 L1344.5,1142.6 L1346.0,1127.6 L1347.5,1105.9 L1349.0,1087.7 L1350.5,1086.6 L1352.0,1087.6 L1353.5,1083.7 L1355.0,1083.4 L1356.5,1082.8 L1358.0,1086.9 L1359.5,1089.3 L1361.0,1092.0 L1362.5,1091.3 L1364.0,1089.4 L1365.5,1083.6 L1367.0,1080.7 L1368.5,1081.5 L1370.0,1086.1 L1371.5,1092.0 L1373.0,1092.5 L1374.5,1096.5 L1376.0,1101.9 L1377.5,1108.6 L1379.0,1117.4 L1380.5,1121.9 L1382.0,1123.6 L1383.5,1123.7 L1385.0,1123.2 L1386.5,1122.6 L1388.0,1120.2 L1389.5,1120.7 L1391.0,1121.5 L1392.5,1121.3 L1394.0,1122.7 L1395.5,1123.6 L1397.0,1124.4 L1398.5,1123.7 L1400.0,1122.9 L1401.5,1122.6 L1403.0,1122.8 L1404.5,1121.4 L1406.0,1122.1 L1407.5,1122.2 L1409.0,1124.6 L1410.5,1125.8 L1412.0,1124.0 L1413.5,1123.1 L1415.0,1123.5 L1416.5,1125.4 L1418.0,1124.1 L1419.5,1124.1 L1421.0,1122.9 L1422.5,1125.2 L1424.0,1123.1 L1425.5,1124.0 L1427.0,1124.4 L1428.5,1124.6 L1430.0,1125.2 L1431.5,1123.5 L1433.0,1124.7 L1434.5,1125.6 L1436.0,1127.4 L1437.5,1128.6 L1439.0,1128.5 L1440.5,1131.7 L1442.0,1140.6 L1443.5,1148.1 L1445.0,1150.3 L1446.5,1148.4 L1448.0,1148.5 L1449.5,1147.2 L1451.0,1132.4 L1452.5,1108.5 L1454.0,1098.4 L1455.5,1098.8 L1457.0,1095.9 L1458.5,1095.1 L1460.0,1090.7 L1461.5,1093.1 L1463.0,1089.6 L1464.5,1088.0 L1466.0,1088.0 L1467.5,1090.4 L1469.0,1090.7 L1470.5,1089.8 L1472.0,1088.1 L1473.5,1088.9 L1475.0,1092.5 L1476.5,1094.2 L1478.0,1094.5 L1479.5,1091.9 L1481.0,1088.7 L1482.5,1089.0 L1484.0,1087.5 L1485.5,1109.0 L1487.0,1127.0 L1488.5,1142.4 L1490.0,1145.9 L1491.5,1150.6 L1493.0,1154.1 L1494.5,1157.1 L1496.0,1158.1 L1497.5,1157.4 L1499.0,1157.8 L1500.5,1158.1 L1502.0,1158.2 L1503.5,1158.7 L1505.0,1157.9 L1506.5,1158.7 L1508.0,1158.0 L1509.5,1158.7 L1511.0,1158.4 L1512.5,1158.1 L1514.0,1157.8 L1515.5,1157.4 L1517.0,1157.7 L1518.5,1158.0 L1520.0,1157.9 L1521.5,1157.7 L1523.0,1157.6 L1524.5,1157.9 L1526.0,1158.6 L1527.5,1158.0 L1529.0,1158.5 L1530.5,1158.3 L1532.0,1158.2 L1533.5,1157.5 L1535.0,1157.9 L1536.5,1157.9 L1538.0,1158.4 L1539.5,1154.7 L1541.0,1152.3 L1542.5,1143.4 L1544.0,1122.2 L1545.5,1099.7 L1547.0,1083.5 L1548.5,1072.5 L1550.0,1084.2 L1551.5,1104.2 L1553.0,1124.4 L1554.5,1129.1 L1556.0,1134.3 L1557.5,1139.4 L1559.0,1141.0 L1560.5,1140.6 L1562.0,1140.7 L1563.5,1140.0 L1565.0,1139.3 L1566.5,1137.8 L1568.0,1136.1 L1569.5,1135.6 L1571.0,1134.6 L1572.5,1134.5 L1574.0,1133.6 L1575.5,1133.2 L1577.0,1131.5 L1578.5,1130.4 L1580.0,1128.8 L1581.5,1128.2 L1583.0,1127.2 L1584.5,1125.5 L1586.0,1125.1 L1587.5,1123.7 L1589.0,1123.5 L1590.5,1123.7 L1592.0,1124.2 L1593.5,1126.4 L1595.0,1126.1 L1596.5,1127.6 L1598.0,1128.7 L1599.5,1130.9 L1601.0,1131.1 L1602.5,1130.8 L1604.0,1131.7 L1605.5,1136.3 L1607.0,1140.5 L1608.5,1142.9 L1610.0,1146.7 L1611.5,1149.3 L1613.0,1152.8 L1614.5,1156.1 L1616.0,1160.0 L1617.5,1162.8 L1619.0,1164.9 L1620.5,1167.1 L1622.0,1169.6 L1623.5,1172.4 L1625.0,1175.2 L1625.0,1182.8 L1623.5,1185.6 L1622.0,1188.4 L1620.5,1190.9 L1619.0,1193.1 L1617.5,1195.2 L1616.0,1198.0 L1614.5,1201.9 L1613.0,1205.2 L1611.5,1208.7 L1610.0,1211.3 L1608.5,1215.1 L1607.0,1217.5 L1605.5,1221.7 L1604.0,1226.3 L1602.5,1227.2 L1601.0,1226.9 L1599.5,1227.1 L1598.0,1229.3 L1596.5,1230.4 L1595.0,1231.9 L1593.5,1231.6 L1592.0,1233.8 L1590.5,1234.3 L1589.0,1234.5 L1587.5,1234.3 L1586.0,1232.9 L1584.5,1232.5 L1583.0,1230.8 L1581.5,1229.8 L1580.0,1229.2 L1578.5,1227.6 L1577.0,1226.5 L1575.5,1224.8 L1574.0,1224.4 L1572.5,1223.5 L1571.0,1223.4 L1569.5,1222.4 L1568.0,1221.9 L1566.5,1220.2 L1565.0,1218.7 L1563.5,1218.0 L1562.0,1217.3 L1560.5,1217.4 L1559.0,1217.0 L1557.5,1218.6 L1556.0,1223.7 L1554.5,1228.9 L1553.0,1233.6 L1551.5,1253.8 L1550.0,1273.8 L1548.5,1285.5 L1547.0,1274.5 L1545.5,1258.3 L1544.0,1235.8 L1542.5,1214.6 L1541.0,1205.7 L1539.5,1203.3 L1538.0,1199.6 L1536.5,1200.1 L1535.0,1200.1 L1533.5,1200.5 L1532.0,1199.8 L1530.5,1199.7 L1529.0,1199.5 L1527.5,1200.0 L1526.0,1199.4 L1524.5,1200.1 L1523.0,1200.4 L1521.5,1200.3 L1520.0,1200.1 L1518.5,1200.0 L1517.0,1200.3 L1515.5,1200.6 L1514.0,1200.2 L1512.5,1199.9 L1511.0,1199.6 L1509.5,1199.3 L1508.0,1200.0 L1506.5,1199.3 L1505.0,1200.1 L1503.5,1199.3 L1502.0,1199.8 L1500.5,1199.9 L1499.0,1200.2 L1497.5,1200.6 L1496.0,1199.9 L1494.5,1200.9 L1493.0,1203.9 L1491.5,1207.4 L1490.0,1212.1 L1488.5,1215.6 L1487.0,1231.0 L1485.5,1249.0 L1484.0,1270.5 L1482.5,1269.0 L1481.0,1269.3 L1479.5,1266.1 L1478.0,1263.5 L1476.5,1263.8 L1475.0,1265.5 L1473.5,1269.1 L1472.0,1269.9 L1470.5,1268.2 L1469.0,1267.3 L1467.5,1267.6 L1466.0,1270.0 L1464.5,1270.0 L1463.0,1268.4 L1461.5,1264.9 L1460.0,1267.3 L1458.5,1262.9 L1457.0,1262.1 L1455.5,1259.2 L1454.0,1259.6 L1452.5,1249.5 L1451.0,1225.6 L1449.5,1210.8 L1448.0,1209.5 L1446.5,1209.6 L1445.0,1207.7 L1443.5,1209.9 L1442.0,1217.4 L1440.5,1226.3 L1439.0,1229.5 L1437.5,1229.4 L1436.0,1230.6 L1434.5,1232.4 L1433.0,1233.3 L1431.5,1234.5 L1430.0,1232.8 L1428.5,1233.4 L1427.0,1233.6 L1425.5,1234.0 L1424.0,1234.9 L1422.5,1232.8 L1421.0,1235.1 L1419.5,1233.9 L1418.0,1233.9 L1416.5,1232.6 L1415.0,1234.5 L1413.5,1234.9 L1412.0,1234.0 L1410.5,1232.2 L1409.0,1233.4 L1407.5,1235.8 L1406.0,1235.9 L1404.5,1236.6 L1403.0,1235.2 L1401.5,1235.4 L1400.0,1235.1 L1398.5,1234.3 L1397.0,1233.6 L1395.5,1234.4 L1394.0,1235.3 L1392.5,1236.7 L1391.0,1236.5 L1389.5,1237.3 L1388.0,1237.8 L1386.5,1235.4 L1385.0,1234.8 L1383.5,1234.3 L1382.0,1234.4 L1380.5,1236.1 L1379.0,1240.6 L1377.5,1249.4 L1376.0,1256.1 L1374.5,1261.5 L1373.0,1265.5 L1371.5,1266.0 L1370.0,1271.9 L1368.5,1276.5 L1367.0,1277.3 L1365.5,1274.4 L1364.0,1268.6 L1362.5,1266.7 L1361.0,1266.0 L1359.5,1268.7 L1358.0,1271.1 L1356.5,1275.2 L1355.0,1274.6 L1353.5,1274.3 L1352.0,1270.4 L1350.5,1271.4 L1349.0,1270.3 L1347.5,1252.1 L1346.0,1230.4 L1344.5,1215.4 L1343.0,1211.7 L1341.5,1209.5 L1340.0,1205.6 L1338.5,1205.6 L1337.0,1204.7 L1335.5,1204.8 L1334.0,1204.2 L1332.5,1204.7 L1331.0,1205.1 L1329.5,1205.8 L1328.0,1205.9 L1326.5,1205.0 L1325.0,1204.6 L1323.5,1203.8 L1322.0,1204.8 L1320.5,1205.2 L1319.0,1204.7 L1317.5,1204.2 L1316.0,1203.8 L1314.5,1211.0 L1313.0,1213.7 L1311.5,1215.1 L1310.0,1217.2 L1308.5,1219.7 L1307.0,1220.2 L1305.5,1221.4 L1304.0,1222.0 L1302.5,1223.7 L1301.0,1223.4 L1299.5,1224.6 L1298.0,1224.8 L1296.5,1225.0 L1295.0,1224.4 L1293.5,1224.2 L1292.0,1224.9 L1290.5,1224.5 L1289.0,1226.5 L1287.5,1228.3 L1286.0,1229.1 L1284.5,1228.5 L1283.0,1227.6 L1281.5,1228.0 L1280.0,1228.0 L1278.5,1229.4 L1277.0,1230.3 L1275.5,1233.1 L1274.0,1236.9 L1272.5,1240.9 L1271.0,1244.9 L1269.5,1248.7 L1268.0,1252.7 L1266.5,1255.0 L1265.0,1255.1 L1263.5,1259.9 L1262.0,1259.1 L1260.5,1261.5 L1259.0,1257.2 L1257.5,1253.8 L1256.0,1252.9 L1254.5,1251.0 L1253.0,1250.7 L1251.5,1246.3 L1250.0,1240.5 L1248.5,1235.2 L1247.0,1230.0 L1245.5,1225.2 L1244.0,1223.4 L1242.5,1223.5 L1241.0,1225.3 L1239.5,1225.8 L1238.0,1224.0 L1236.5,1221.9 L1235.0,1221.8 L1233.5,1223.2 L1232.0,1224.7 L1230.5,1224.3 L1229.0,1223.6 L1227.5,1223.0 L1226.0,1224.4 L1224.5,1224.7 L1223.0,1225.2 L1221.5,1227.0 L1220.0,1228.3 L1218.5,1228.9 L1217.0,1227.9 L1215.5,1229.2 L1214.0,1231.9 L1212.5,1233.9 L1211.0,1233.6 L1209.5,1234.3 L1208.0,1235.2 L1206.5,1236.6 L1205.0,1235.4 L1203.5,1236.6 L1202.0,1238.6 L1200.5,1239.2 L1199.0,1237.9 L1197.5,1238.7 L1196.0,1241.2 L1194.5,1242.6 L1193.0,1240.3 L1191.5,1241.0 L1190.0,1242.4 L1188.5,1243.4 L1187.0,1243.1 L1185.5,1241.8 L1184.0,1242.3 L1182.5,1243.1 L1181.0,1243.7 L1179.5,1244.1 L1178.0,1245.4 L1176.5,1247.7 L1175.0,1249.7 L1173.5,1248.7 L1172.0,1246.3 L1170.5,1246.1 L1169.0,1246.0 L1167.5,1246.2 L1166.0,1247.5 L1164.5,1249.2 L1163.0,1252.1 L1161.5,1252.1 L1160.0,1251.9 L1158.5,1253.4 L1157.0,1253.6 L1155.5,1248.7 L1154.0,1244.5 L1152.5,1240.2 L1151.0,1238.6 L1149.5,1230.6 L1148.0,1213.1 L1146.5,1211.1 L1145.0,1210.0 L1143.5,1208.1 L1142.0,1207.8 L1140.5,1206.5 L1139.0,1206.7 L1137.5,1206.4 L1136.0,1206.2 L1134.5,1205.7 L1133.0,1205.0 L1131.5,1204.8 L1130.0,1205.0 L1128.5,1204.7 L1127.0,1204.0 L1125.5,1203.0 L1124.0,1202.6 L1122.5,1202.3 L1121.0,1202.3 L1119.5,1202.1 L1118.0,1202.6 L1116.5,1203.5 L1115.0,1204.2 L1113.5,1204.4 L1112.0,1203.9 L1110.5,1204.8 L1109.0,1205.3 L1107.5,1206.7 L1106.0,1207.2 L1104.5,1208.2 L1103.0,1207.8 L1101.5,1207.6 L1100.0,1207.0 L1098.5,1206.6 L1097.0,1206.5 L1095.5,1207.3 L1094.0,1208.0 L1092.5,1207.5 L1091.0,1207.0 L1089.5,1206.0 L1088.0,1205.1 L1086.5,1204.5 L1085.0,1204.9 L1083.5,1206.5 L1082.0,1207.3 L1080.5,1207.9 L1079.0,1208.9 L1077.5,1209.3 L1076.0,1210.8 L1074.5,1211.0 L1073.0,1212.7 L1071.5,1212.3 L1070.0,1211.6 L1068.5,1210.9 L1067.0,1210.1 L1065.5,1209.7 L1064.0,1208.5 L1062.5,1208.3 L1061.0,1207.5 L1059.5,1207.3 L1058.0,1206.2 L1056.5,1204.8 L1055.0,1203.0 L1053.5,1201.1 L1052.0,1199.8 L1050.5,1198.1 L1049.0,1196.8 L1047.5,1195.5 L1046.0,1194.5 L1044.5,1193.0 L1043.0,1190.9 L1041.5,1189.2 L1040.0,1187.5 L1038.5,1185.8 L1037.0,1184.0 L1035.5,1182.4 L1034.0,1180.9 L1032.5,1180.9 L1031.0,1180.9 L1029.5,1180.9 L1028.0,1180.9 L1026.5,1180.9 L1025.0,1180.9 L1023.5,1180.8 L1022.0,1180.9 L1020.5,1180.9 L1019.0,1181.0 L1017.5,1180.9 L1016.0,1180.8 L1014.5,1180.8 L1013.0,1180.9 L1011.5,1181.0 L1010.0,1181.0 L1008.5,1181.0 L1007.0,1180.9 L1005.5,1180.9 L1004.0,1180.8 Z" fill="#5a5862"/>
<g opacity="0.92">
<rect x="1004.4" y="1108" width="29.199999999999932" height="142" rx="0" fill="#237c5f" />
<clipPath id="n3"><rect x="1004.4" y="1108" width="29.199999999999932" height="142"/></clipPath>
<path d="M1004.0,1177.2 L1005.5,1177.1 L1007.0,1177.1 L1008.5,1177.0 L1010.0,1177.0 L1011.5,1177.0 L1013.0,1177.1 L1014.5,1177.2 L1016.0,1177.2 L1017.5,1177.1 L1019.0,1177.0 L1020.5,1177.1 L1022.0,1177.1 L1023.5,1177.2 L1025.0,1177.1 L1026.5,1177.1 L1028.0,1177.1 L1029.5,1177.1 L1031.0,1177.1 L1032.5,1177.1 L1034.0,1177.1 L1035.5,1175.6 L1037.0,1174.0 L1038.5,1172.2 L1040.0,1170.5 L1041.5,1168.8 L1043.0,1167.1 L1044.5,1165.0 L1046.0,1163.5 L1047.5,1162.5 L1049.0,1161.2 L1050.5,1159.9 L1052.0,1158.2 L1053.5,1156.9 L1055.0,1155.0 L1056.5,1153.2 L1058.0,1151.8 L1059.5,1150.7 L1061.0,1150.5 L1062.5,1149.7 L1064.0,1149.5 L1065.5,1148.3 L1067.0,1147.9 L1068.5,1147.1 L1070.0,1146.4 L1071.5,1145.7 L1073.0,1145.3 L1074.5,1147.0 L1076.0,1147.2 L1077.5,1148.7 L1079.0,1149.1 L1080.5,1150.1 L1082.0,1150.7 L1083.5,1151.5 L1085.0,1153.1 L1086.5,1153.5 L1088.0,1152.9 L1089.5,1152.0 L1091.0,1151.0 L1092.5,1150.5 L1094.0,1150.0 L1095.5,1150.7 L1097.0,1151.5 L1098.5,1151.4 L1100.0,1151.0 L1101.5,1150.4 L1103.0,1150.2 L1104.5,1149.8 L1106.0,1150.8 L1107.5,1151.3 L1109.0,1152.7 L1110.5,1153.2 L1112.0,1154.1 L1113.5,1153.6 L1115.0,1153.8 L1116.5,1154.5 L1118.0,1155.4 L1119.5,1155.9 L1121.0,1155.7 L1122.5,1155.7 L1124.0,1155.4 L1125.5,1155.0 L1127.0,1154.0 L1128.5,1153.3 L1130.0,1153.0 L1131.5,1153.2 L1133.0,1153.0 L1134.5,1152.3 L1136.0,1151.8 L1137.5,1151.6 L1139.0,1151.3 L1140.5,1151.5 L1142.0,1150.2 L1143.5,1149.9 L1145.0,1148.0 L1146.5,1146.9 L1148.0,1144.9 L1149.5,1127.4 L1151.0,1119.4 L1152.5,1117.8 L1154.0,1113.5 L1155.5,1109.3 L1157.0,1104.4 L1158.5,1104.6 L1160.0,1106.1 L1161.5,1105.9 L1163.0,1105.9 L1164.5,1108.8 L1166.0,1110.5 L1167.5,1111.8 L1169.0,1112.0 L1170.5,1111.9 L1172.0,1111.7 L1173.5,1109.3 L1175.0,1108.3 L1176.5,1110.3 L1178.0,1112.6 L1179.5,1113.9 L1181.0,1114.3 L1182.5,1114.9 L1184.0,1115.7 L1185.5,1116.2 L1187.0,1114.9 L1188.5,1114.6 L1190.0,1115.6 L1191.5,1117.0 L1193.0,1117.7 L1194.5,1115.4 L1196.0,1116.8 L1197.5,1119.3 L1199.0,1120.1 L1200.5,1118.8 L1202.0,1119.4 L1203.5,1121.4 L1205.0,1122.6 L1206.5,1121.4 L1208.0,1122.8 L1209.5,1123.7 L1211.0,1124.4 L1212.5,1124.1 L1214.0,1126.1 L1215.5,1128.8 L1217.0,1130.1 L1218.5,1129.1 L1220.0,1129.7 L1221.5,1131.0 L1223.0,1132.8 L1224.5,1133.3 L1226.0,1133.6 L1227.5,1135.0 L1229.0,1134.4 L1230.5,1133.7 L1232.0,1133.3 L1233.5,1134.8 L1235.0,1136.2 L1236.5,1136.1 L1238.0,1134.0 L1239.5,1132.2 L1241.0,1132.7 L1242.5,1134.5 L1244.0,1134.6 L1245.5,1132.8 L1247.0,1128.0 L1248.5,1122.8 L1250.0,1117.5 L1251.5,1111.7 L1253.0,1107.3 L1254.5,1107.0 L1256.0,1105.1 L1257.5,1104.2 L1259.0,1100.8 L1260.5,1096.5 L1262.0,1098.9 L1263.5,1098.1 L1265.0,1102.9 L1266.5,1103.0 L1268.0,1105.3 L1269.5,1109.3 L1271.0,1113.1 L1272.5,1117.1 L1274.0,1121.1 L1275.5,1124.9 L1277.0,1127.7 L1278.5,1128.6 L1280.0,1130.0 L1281.5,1130.0 L1283.0,1130.4 L1284.5,1129.5 L1286.0,1128.9 L1287.5,1129.7 L1289.0,1131.5 L1290.5,1133.5 L1292.0,1133.1 L1293.5,1133.8 L1295.0,1133.6 L1296.5,1133.0 L1298.0,1133.2 L1299.5,1133.4 L1301.0,1134.6 L1302.5,1134.3 L1304.0,1136.0 L1305.5,1136.6 L1307.0,1137.8 L1308.5,1138.3 L1310.0,1140.8 L1311.5,1142.9 L1313.0,1144.3 L1314.5,1147.0 L1316.0,1154.2 L1317.5,1153.8 L1319.0,1153.3 L1320.5,1152.8 L1322.0,1153.2 L1323.5,1154.2 L1325.0,1153.4 L1326.5,1153.0 L1328.0,1152.1 L1329.5,1152.2 L1331.0,1152.9 L1332.5,1153.3 L1334.0,1153.8 L1335.5,1153.2 L1337.0,1153.3 L1338.5,1152.4 L1340.0,1152.4 L1341.5,1148.5 L1343.0,1146.3 L1344.5,1142.6 L1346.0,1127.6 L1347.5,1105.9 L1349.0,1087.7 L1350.5,1086.6 L1352.0,1087.6 L1353.5,1083.7 L1355.0,1083.4 L1356.5,1082.8 L1358.0,1086.9 L1359.5,1089.3 L1361.0,1092.0 L1362.5,1091.3 L1364.0,1089.4 L1365.5,1083.6 L1367.0,1080.7 L1368.5,1081.5 L1370.0,1086.1 L1371.5,1092.0 L1373.0,1092.5 L1374.5,1096.5 L1376.0,1101.9 L1377.5,1108.6 L1379.0,1117.4 L1380.5,1121.9 L1382.0,1123.6 L1383.5,1123.7 L1385.0,1123.2 L1386.5,1122.6 L1388.0,1120.2 L1389.5,1120.7 L1391.0,1121.5 L1392.5,1121.3 L1394.0,1122.7 L1395.5,1123.6 L1397.0,1124.4 L1398.5,1123.7 L1400.0,1122.9 L1401.5,1122.6 L1403.0,1122.8 L1404.5,1121.4 L1406.0,1122.1 L1407.5,1122.2 L1409.0,1124.6 L1410.5,1125.8 L1412.0,1124.0 L1413.5,1123.1 L1415.0,1123.5 L1416.5,1125.4 L1418.0,1124.1 L1419.5,1124.1 L1421.0,1122.9 L1422.5,1125.2 L1424.0,1123.1 L1425.5,1124.0 L1427.0,1124.4 L1428.5,1124.6 L1430.0,1125.2 L1431.5,1123.5 L1433.0,1124.7 L1434.5,1125.6 L1436.0,1127.4 L1437.5,1128.6 L1439.0,1128.5 L1440.5,1131.7 L1442.0,1140.6 L1443.5,1148.1 L1445.0,1150.3 L1446.5,1148.4 L1448.0,1148.5 L1449.5,1147.2 L1451.0,1132.4 L1452.5,1108.5 L1454.0,1098.4 L1455.5,1098.8 L1457.0,1095.9 L1458.5,1095.1 L1460.0,1090.7 L1461.5,1093.1 L1463.0,1089.6 L1464.5,1088.0 L1466.0,1088.0 L1467.5,1090.4 L1469.0,1090.7 L1470.5,1089.8 L1472.0,1088.1 L1473.5,1088.9 L1475.0,1092.5 L1476.5,1094.2 L1478.0,1094.5 L1479.5,1091.9 L1481.0,1088.7 L1482.5,1089.0 L1484.0,1087.5 L1485.5,1109.0 L1487.0,1127.0 L1488.5,1142.4 L1490.0,1145.9 L1491.5,1150.6 L1493.0,1154.1 L1494.5,1157.1 L1496.0,1158.1 L1497.5,1157.4 L1499.0,1157.8 L1500.5,1158.1 L1502.0,1158.2 L1503.5,1158.7 L1505.0,1157.9 L1506.5,1158.7 L1508.0,1158.0 L1509.5,1158.7 L1511.0,1158.4 L1512.5,1158.1 L1514.0,1157.8 L1515.5,1157.4 L1517.0,1157.7 L1518.5,1158.0 L1520.0,1157.9 L1521.5,1157.7 L1523.0,1157.6 L1524.5,1157.9 L1526.0,1158.6 L1527.5,1158.0 L1529.0,1158.5 L1530.5,1158.3 L1532.0,1158.2 L1533.5,1157.5 L1535.0,1157.9 L1536.5,1157.9 L1538.0,1158.4 L1539.5,1154.7 L1541.0,1152.3 L1542.5,1143.4 L1544.0,1122.2 L1545.5,1099.7 L1547.0,1083.5 L1548.5,1072.5 L1550.0,1084.2 L1551.5,1104.2 L1553.0,1124.4 L1554.5,1129.1 L1556.0,1134.3 L1557.5,1139.4 L1559.0,1141.0 L1560.5,1140.6 L1562.0,1140.7 L1563.5,1140.0 L1565.0,1139.3 L1566.5,1137.8 L1568.0,1136.1 L1569.5,1135.6 L1571.0,1134.6 L1572.5,1134.5 L1574.0,1133.6 L1575.5,1133.2 L1577.0,1131.5 L1578.5,1130.4 L1580.0,1128.8 L1581.5,1128.2 L1583.0,1127.2 L1584.5,1125.5 L1586.0,1125.1 L1587.5,1123.7 L1589.0,1123.5 L1590.5,1123.7 L1592.0,1124.2 L1593.5,1126.4 L1595.0,1126.1 L1596.5,1127.6 L1598.0,1128.7 L1599.5,1130.9 L1601.0,1131.1 L1602.5,1130.8 L1604.0,1131.7 L1605.5,1136.3 L1607.0,1140.5 L1608.5,1142.9 L1610.0,1146.7 L1611.5,1149.3 L1613.0,1152.8 L1614.5,1156.1 L1616.0,1160.0 L1617.5,1162.8 L1619.0,1164.9 L1620.5,1167.1 L1622.0,1169.6 L1623.5,1172.4 L1625.0,1175.2 L1625.0,1182.8 L1623.5,1185.6 L1622.0,1188.4 L1620.5,1190.9 L1619.0,1193.1 L1617.5,1195.2 L1616.0,1198.0 L1614.5,1201.9 L1613.0,1205.2 L1611.5,1208.7 L1610.0,1211.3 L1608.5,1215.1 L1607.0,1217.5 L1605.5,1221.7 L1604.0,1226.3 L1602.5,1227.2 L1601.0,1226.9 L1599.5,1227.1 L1598.0,1229.3 L1596.5,1230.4 L1595.0,1231.9 L1593.5,1231.6 L1592.0,1233.8 L1590.5,1234.3 L1589.0,1234.5 L1587.5,1234.3 L1586.0,1232.9 L1584.5,1232.5 L1583.0,1230.8 L1581.5,1229.8 L1580.0,1229.2 L1578.5,1227.6 L1577.0,1226.5 L1575.5,1224.8 L1574.0,1224.4 L1572.5,1223.5 L1571.0,1223.4 L1569.5,1222.4 L1568.0,1221.9 L1566.5,1220.2 L1565.0,1218.7 L1563.5,1218.0 L1562.0,1217.3 L1560.5,1217.4 L1559.0,1217.0 L1557.5,1218.6 L1556.0,1223.7 L1554.5,1228.9 L1553.0,1233.6 L1551.5,1253.8 L1550.0,1273.8 L1548.5,1285.5 L1547.0,1274.5 L1545.5,1258.3 L1544.0,1235.8 L1542.5,1214.6 L1541.0,1205.7 L1539.5,1203.3 L1538.0,1199.6 L1536.5,1200.1 L1535.0,1200.1 L1533.5,1200.5 L1532.0,1199.8 L1530.5,1199.7 L1529.0,1199.5 L1527.5,1200.0 L1526.0,1199.4 L1524.5,1200.1 L1523.0,1200.4 L1521.5,1200.3 L1520.0,1200.1 L1518.5,1200.0 L1517.0,1200.3 L1515.5,1200.6 L1514.0,1200.2 L1512.5,1199.9 L1511.0,1199.6 L1509.5,1199.3 L1508.0,1200.0 L1506.5,1199.3 L1505.0,1200.1 L1503.5,1199.3 L1502.0,1199.8 L1500.5,1199.9 L1499.0,1200.2 L1497.5,1200.6 L1496.0,1199.9 L1494.5,1200.9 L1493.0,1203.9 L1491.5,1207.4 L1490.0,1212.1 L1488.5,1215.6 L1487.0,1231.0 L1485.5,1249.0 L1484.0,1270.5 L1482.5,1269.0 L1481.0,1269.3 L1479.5,1266.1 L1478.0,1263.5 L1476.5,1263.8 L1475.0,1265.5 L1473.5,1269.1 L1472.0,1269.9 L1470.5,1268.2 L1469.0,1267.3 L1467.5,1267.6 L1466.0,1270.0 L1464.5,1270.0 L1463.0,1268.4 L1461.5,1264.9 L1460.0,1267.3 L1458.5,1262.9 L1457.0,1262.1 L1455.5,1259.2 L1454.0,1259.6 L1452.5,1249.5 L1451.0,1225.6 L1449.5,1210.8 L1448.0,1209.5 L1446.5,1209.6 L1445.0,1207.7 L1443.5,1209.9 L1442.0,1217.4 L1440.5,1226.3 L1439.0,1229.5 L1437.5,1229.4 L1436.0,1230.6 L1434.5,1232.4 L1433.0,1233.3 L1431.5,1234.5 L1430.0,1232.8 L1428.5,1233.4 L1427.0,1233.6 L1425.5,1234.0 L1424.0,1234.9 L1422.5,1232.8 L1421.0,1235.1 L1419.5,1233.9 L1418.0,1233.9 L1416.5,1232.6 L1415.0,1234.5 L1413.5,1234.9 L1412.0,1234.0 L1410.5,1232.2 L1409.0,1233.4 L1407.5,1235.8 L1406.0,1235.9 L1404.5,1236.6 L1403.0,1235.2 L1401.5,1235.4 L1400.0,1235.1 L1398.5,1234.3 L1397.0,1233.6 L1395.5,1234.4 L1394.0,1235.3 L1392.5,1236.7 L1391.0,1236.5 L1389.5,1237.3 L1388.0,1237.8 L1386.5,1235.4 L1385.0,1234.8 L1383.5,1234.3 L1382.0,1234.4 L1380.5,1236.1 L1379.0,1240.6 L1377.5,1249.4 L1376.0,1256.1 L1374.5,1261.5 L1373.0,1265.5 L1371.5,1266.0 L1370.0,1271.9 L1368.5,1276.5 L1367.0,1277.3 L1365.5,1274.4 L1364.0,1268.6 L1362.5,1266.7 L1361.0,1266.0 L1359.5,1268.7 L1358.0,1271.1 L1356.5,1275.2 L1355.0,1274.6 L1353.5,1274.3 L1352.0,1270.4 L1350.5,1271.4 L1349.0,1270.3 L1347.5,1252.1 L1346.0,1230.4 L1344.5,1215.4 L1343.0,1211.7 L1341.5,1209.5 L1340.0,1205.6 L1338.5,1205.6 L1337.0,1204.7 L1335.5,1204.8 L1334.0,1204.2 L1332.5,1204.7 L1331.0,1205.1 L1329.5,1205.8 L1328.0,1205.9 L1326.5,1205.0 L1325.0,1204.6 L1323.5,1203.8 L1322.0,1204.8 L1320.5,1205.2 L1319.0,1204.7 L1317.5,1204.2 L1316.0,1203.8 L1314.5,1211.0 L1313.0,1213.7 L1311.5,1215.1 L1310.0,1217.2 L1308.5,1219.7 L1307.0,1220.2 L1305.5,1221.4 L1304.0,1222.0 L1302.5,1223.7 L1301.0,1223.4 L1299.5,1224.6 L1298.0,1224.8 L1296.5,1225.0 L1295.0,1224.4 L1293.5,1224.2 L1292.0,1224.9 L1290.5,1224.5 L1289.0,1226.5 L1287.5,1228.3 L1286.0,1229.1 L1284.5,1228.5 L1283.0,1227.6 L1281.5,1228.0 L1280.0,1228.0 L1278.5,1229.4 L1277.0,1230.3 L1275.5,1233.1 L1274.0,1236.9 L1272.5,1240.9 L1271.0,1244.9 L1269.5,1248.7 L1268.0,1252.7 L1266.5,1255.0 L1265.0,1255.1 L1263.5,1259.9 L1262.0,1259.1 L1260.5,1261.5 L1259.0,1257.2 L1257.5,1253.8 L1256.0,1252.9 L1254.5,1251.0 L1253.0,1250.7 L1251.5,1246.3 L1250.0,1240.5 L1248.5,1235.2 L1247.0,1230.0 L1245.5,1225.2 L1244.0,1223.4 L1242.5,1223.5 L1241.0,1225.3 L1239.5,1225.8 L1238.0,1224.0 L1236.5,1221.9 L1235.0,1221.8 L1233.5,1223.2 L1232.0,1224.7 L1230.5,1224.3 L1229.0,1223.6 L1227.5,1223.0 L1226.0,1224.4 L1224.5,1224.7 L1223.0,1225.2 L1221.5,1227.0 L1220.0,1228.3 L1218.5,1228.9 L1217.0,1227.9 L1215.5,1229.2 L1214.0,1231.9 L1212.5,1233.9 L1211.0,1233.6 L1209.5,1234.3 L1208.0,1235.2 L1206.5,1236.6 L1205.0,1235.4 L1203.5,1236.6 L1202.0,1238.6 L1200.5,1239.2 L1199.0,1237.9 L1197.5,1238.7 L1196.0,1241.2 L1194.5,1242.6 L1193.0,1240.3 L1191.5,1241.0 L1190.0,1242.4 L1188.5,1243.4 L1187.0,1243.1 L1185.5,1241.8 L1184.0,1242.3 L1182.5,1243.1 L1181.0,1243.7 L1179.5,1244.1 L1178.0,1245.4 L1176.5,1247.7 L1175.0,1249.7 L1173.5,1248.7 L1172.0,1246.3 L1170.5,1246.1 L1169.0,1246.0 L1167.5,1246.2 L1166.0,1247.5 L1164.5,1249.2 L1163.0,1252.1 L1161.5,1252.1 L1160.0,1251.9 L1158.5,1253.4 L1157.0,1253.6 L1155.5,1248.7 L1154.0,1244.5 L1152.5,1240.2 L1151.0,1238.6 L1149.5,1230.6 L1148.0,1213.1 L1146.5,1211.1 L1145.0,1210.0 L1143.5,1208.1 L1142.0,1207.8 L1140.5,1206.5 L1139.0,1206.7 L1137.5,1206.4 L1136.0,1206.2 L1134.5,1205.7 L1133.0,1205.0 L1131.5,1204.8 L1130.0,1205.0 L1128.5,1204.7 L1127.0,1204.0 L1125.5,1203.0 L1124.0,1202.6 L1122.5,1202.3 L1121.0,1202.3 L1119.5,1202.1 L1118.0,1202.6 L1116.5,1203.5 L1115.0,1204.2 L1113.5,1204.4 L1112.0,1203.9 L1110.5,1204.8 L1109.0,1205.3 L1107.5,1206.7 L1106.0,1207.2 L1104.5,1208.2 L1103.0,1207.8 L1101.5,1207.6 L1100.0,1207.0 L1098.5,1206.6 L1097.0,1206.5 L1095.5,1207.3 L1094.0,1208.0 L1092.5,1207.5 L1091.0,1207.0 L1089.5,1206.0 L1088.0,1205.1 L1086.5,1204.5 L1085.0,1204.9 L1083.5,1206.5 L1082.0,1207.3 L1080.5,1207.9 L1079.0,1208.9 L1077.5,1209.3 L1076.0,1210.8 L1074.5,1211.0 L1073.0,1212.7 L1071.5,1212.3 L1070.0,1211.6 L1068.5,1210.9 L1067.0,1210.1 L1065.5,1209.7 L1064.0,1208.5 L1062.5,1208.3 L1061.0,1207.5 L1059.5,1207.3 L1058.0,1206.2 L1056.5,1204.8 L1055.0,1203.0 L1053.5,1201.1 L1052.0,1199.8 L1050.5,1198.1 L1049.0,1196.8 L1047.5,1195.5 L1046.0,1194.5 L1044.5,1193.0 L1043.0,1190.9 L1041.5,1189.2 L1040.0,1187.5 L1038.5,1185.8 L1037.0,1184.0 L1035.5,1182.4 L1034.0,1180.9 L1032.5,1180.9 L1031.0,1180.9 L1029.5,1180.9 L1028.0,1180.9 L1026.5,1180.9 L1025.0,1180.9 L1023.5,1180.8 L1022.0,1180.9 L1020.5,1180.9 L1019.0,1181.0 L1017.5,1180.9 L1016.0,1180.8 L1014.5,1180.8 L1013.0,1180.9 L1011.5,1181.0 L1010.0,1181.0 L1008.5,1181.0 L1007.0,1180.9 L1005.5,1180.9 L1004.0,1180.8 Z" fill="#6cae95" clip-path="url(#n3)"/>
<rect x="1033.6" y="1108" width="590.4000000000001" height="142" rx="0" fill="#705de7" />
<clipPath id="n4"><rect x="1033.6" y="1108" width="590.4000000000001" height="142"/></clipPath>
<path d="M1004.0,1177.2 L1005.5,1177.1 L1007.0,1177.1 L1008.5,1177.0 L1010.0,1177.0 L1011.5,1177.0 L1013.0,1177.1 L1014.5,1177.2 L1016.0,1177.2 L1017.5,1177.1 L1019.0,1177.0 L1020.5,1177.1 L1022.0,1177.1 L1023.5,1177.2 L1025.0,1177.1 L1026.5,1177.1 L1028.0,1177.1 L1029.5,1177.1 L1031.0,1177.1 L1032.5,1177.1 L1034.0,1177.1 L1035.5,1175.6 L1037.0,1174.0 L1038.5,1172.2 L1040.0,1170.5 L1041.5,1168.8 L1043.0,1167.1 L1044.5,1165.0 L1046.0,1163.5 L1047.5,1162.5 L1049.0,1161.2 L1050.5,1159.9 L1052.0,1158.2 L1053.5,1156.9 L1055.0,1155.0 L1056.5,1153.2 L1058.0,1151.8 L1059.5,1150.7 L1061.0,1150.5 L1062.5,1149.7 L1064.0,1149.5 L1065.5,1148.3 L1067.0,1147.9 L1068.5,1147.1 L1070.0,1146.4 L1071.5,1145.7 L1073.0,1145.3 L1074.5,1147.0 L1076.0,1147.2 L1077.5,1148.7 L1079.0,1149.1 L1080.5,1150.1 L1082.0,1150.7 L1083.5,1151.5 L1085.0,1153.1 L1086.5,1153.5 L1088.0,1152.9 L1089.5,1152.0 L1091.0,1151.0 L1092.5,1150.5 L1094.0,1150.0 L1095.5,1150.7 L1097.0,1151.5 L1098.5,1151.4 L1100.0,1151.0 L1101.5,1150.4 L1103.0,1150.2 L1104.5,1149.8 L1106.0,1150.8 L1107.5,1151.3 L1109.0,1152.7 L1110.5,1153.2 L1112.0,1154.1 L1113.5,1153.6 L1115.0,1153.8 L1116.5,1154.5 L1118.0,1155.4 L1119.5,1155.9 L1121.0,1155.7 L1122.5,1155.7 L1124.0,1155.4 L1125.5,1155.0 L1127.0,1154.0 L1128.5,1153.3 L1130.0,1153.0 L1131.5,1153.2 L1133.0,1153.0 L1134.5,1152.3 L1136.0,1151.8 L1137.5,1151.6 L1139.0,1151.3 L1140.5,1151.5 L1142.0,1150.2 L1143.5,1149.9 L1145.0,1148.0 L1146.5,1146.9 L1148.0,1144.9 L1149.5,1127.4 L1151.0,1119.4 L1152.5,1117.8 L1154.0,1113.5 L1155.5,1109.3 L1157.0,1104.4 L1158.5,1104.6 L1160.0,1106.1 L1161.5,1105.9 L1163.0,1105.9 L1164.5,1108.8 L1166.0,1110.5 L1167.5,1111.8 L1169.0,1112.0 L1170.5,1111.9 L1172.0,1111.7 L1173.5,1109.3 L1175.0,1108.3 L1176.5,1110.3 L1178.0,1112.6 L1179.5,1113.9 L1181.0,1114.3 L1182.5,1114.9 L1184.0,1115.7 L1185.5,1116.2 L1187.0,1114.9 L1188.5,1114.6 L1190.0,1115.6 L1191.5,1117.0 L1193.0,1117.7 L1194.5,1115.4 L1196.0,1116.8 L1197.5,1119.3 L1199.0,1120.1 L1200.5,1118.8 L1202.0,1119.4 L1203.5,1121.4 L1205.0,1122.6 L1206.5,1121.4 L1208.0,1122.8 L1209.5,1123.7 L1211.0,1124.4 L1212.5,1124.1 L1214.0,1126.1 L1215.5,1128.8 L1217.0,1130.1 L1218.5,1129.1 L1220.0,1129.7 L1221.5,1131.0 L1223.0,1132.8 L1224.5,1133.3 L1226.0,1133.6 L1227.5,1135.0 L1229.0,1134.4 L1230.5,1133.7 L1232.0,1133.3 L1233.5,1134.8 L1235.0,1136.2 L1236.5,1136.1 L1238.0,1134.0 L1239.5,1132.2 L1241.0,1132.7 L1242.5,1134.5 L1244.0,1134.6 L1245.5,1132.8 L1247.0,1128.0 L1248.5,1122.8 L1250.0,1117.5 L1251.5,1111.7 L1253.0,1107.3 L1254.5,1107.0 L1256.0,1105.1 L1257.5,1104.2 L1259.0,1100.8 L1260.5,1096.5 L1262.0,1098.9 L1263.5,1098.1 L1265.0,1102.9 L1266.5,1103.0 L1268.0,1105.3 L1269.5,1109.3 L1271.0,1113.1 L1272.5,1117.1 L1274.0,1121.1 L1275.5,1124.9 L1277.0,1127.7 L1278.5,1128.6 L1280.0,1130.0 L1281.5,1130.0 L1283.0,1130.4 L1284.5,1129.5 L1286.0,1128.9 L1287.5,1129.7 L1289.0,1131.5 L1290.5,1133.5 L1292.0,1133.1 L1293.5,1133.8 L1295.0,1133.6 L1296.5,1133.0 L1298.0,1133.2 L1299.5,1133.4 L1301.0,1134.6 L1302.5,1134.3 L1304.0,1136.0 L1305.5,1136.6 L1307.0,1137.8 L1308.5,1138.3 L1310.0,1140.8 L1311.5,1142.9 L1313.0,1144.3 L1314.5,1147.0 L1316.0,1154.2 L1317.5,1153.8 L1319.0,1153.3 L1320.5,1152.8 L1322.0,1153.2 L1323.5,1154.2 L1325.0,1153.4 L1326.5,1153.0 L1328.0,1152.1 L1329.5,1152.2 L1331.0,1152.9 L1332.5,1153.3 L1334.0,1153.8 L1335.5,1153.2 L1337.0,1153.3 L1338.5,1152.4 L1340.0,1152.4 L1341.5,1148.5 L1343.0,1146.3 L1344.5,1142.6 L1346.0,1127.6 L1347.5,1105.9 L1349.0,1087.7 L1350.5,1086.6 L1352.0,1087.6 L1353.5,1083.7 L1355.0,1083.4 L1356.5,1082.8 L1358.0,1086.9 L1359.5,1089.3 L1361.0,1092.0 L1362.5,1091.3 L1364.0,1089.4 L1365.5,1083.6 L1367.0,1080.7 L1368.5,1081.5 L1370.0,1086.1 L1371.5,1092.0 L1373.0,1092.5 L1374.5,1096.5 L1376.0,1101.9 L1377.5,1108.6 L1379.0,1117.4 L1380.5,1121.9 L1382.0,1123.6 L1383.5,1123.7 L1385.0,1123.2 L1386.5,1122.6 L1388.0,1120.2 L1389.5,1120.7 L1391.0,1121.5 L1392.5,1121.3 L1394.0,1122.7 L1395.5,1123.6 L1397.0,1124.4 L1398.5,1123.7 L1400.0,1122.9 L1401.5,1122.6 L1403.0,1122.8 L1404.5,1121.4 L1406.0,1122.1 L1407.5,1122.2 L1409.0,1124.6 L1410.5,1125.8 L1412.0,1124.0 L1413.5,1123.1 L1415.0,1123.5 L1416.5,1125.4 L1418.0,1124.1 L1419.5,1124.1 L1421.0,1122.9 L1422.5,1125.2 L1424.0,1123.1 L1425.5,1124.0 L1427.0,1124.4 L1428.5,1124.6 L1430.0,1125.2 L1431.5,1123.5 L1433.0,1124.7 L1434.5,1125.6 L1436.0,1127.4 L1437.5,1128.6 L1439.0,1128.5 L1440.5,1131.7 L1442.0,1140.6 L1443.5,1148.1 L1445.0,1150.3 L1446.5,1148.4 L1448.0,1148.5 L1449.5,1147.2 L1451.0,1132.4 L1452.5,1108.5 L1454.0,1098.4 L1455.5,1098.8 L1457.0,1095.9 L1458.5,1095.1 L1460.0,1090.7 L1461.5,1093.1 L1463.0,1089.6 L1464.5,1088.0 L1466.0,1088.0 L1467.5,1090.4 L1469.0,1090.7 L1470.5,1089.8 L1472.0,1088.1 L1473.5,1088.9 L1475.0,1092.5 L1476.5,1094.2 L1478.0,1094.5 L1479.5,1091.9 L1481.0,1088.7 L1482.5,1089.0 L1484.0,1087.5 L1485.5,1109.0 L1487.0,1127.0 L1488.5,1142.4 L1490.0,1145.9 L1491.5,1150.6 L1493.0,1154.1 L1494.5,1157.1 L1496.0,1158.1 L1497.5,1157.4 L1499.0,1157.8 L1500.5,1158.1 L1502.0,1158.2 L1503.5,1158.7 L1505.0,1157.9 L1506.5,1158.7 L1508.0,1158.0 L1509.5,1158.7 L1511.0,1158.4 L1512.5,1158.1 L1514.0,1157.8 L1515.5,1157.4 L1517.0,1157.7 L1518.5,1158.0 L1520.0,1157.9 L1521.5,1157.7 L1523.0,1157.6 L1524.5,1157.9 L1526.0,1158.6 L1527.5,1158.0 L1529.0,1158.5 L1530.5,1158.3 L1532.0,1158.2 L1533.5,1157.5 L1535.0,1157.9 L1536.5,1157.9 L1538.0,1158.4 L1539.5,1154.7 L1541.0,1152.3 L1542.5,1143.4 L1544.0,1122.2 L1545.5,1099.7 L1547.0,1083.5 L1548.5,1072.5 L1550.0,1084.2 L1551.5,1104.2 L1553.0,1124.4 L1554.5,1129.1 L1556.0,1134.3 L1557.5,1139.4 L1559.0,1141.0 L1560.5,1140.6 L1562.0,1140.7 L1563.5,1140.0 L1565.0,1139.3 L1566.5,1137.8 L1568.0,1136.1 L1569.5,1135.6 L1571.0,1134.6 L1572.5,1134.5 L1574.0,1133.6 L1575.5,1133.2 L1577.0,1131.5 L1578.5,1130.4 L1580.0,1128.8 L1581.5,1128.2 L1583.0,1127.2 L1584.5,1125.5 L1586.0,1125.1 L1587.5,1123.7 L1589.0,1123.5 L1590.5,1123.7 L1592.0,1124.2 L1593.5,1126.4 L1595.0,1126.1 L1596.5,1127.6 L1598.0,1128.7 L1599.5,1130.9 L1601.0,1131.1 L1602.5,1130.8 L1604.0,1131.7 L1605.5,1136.3 L1607.0,1140.5 L1608.5,1142.9 L1610.0,1146.7 L1611.5,1149.3 L1613.0,1152.8 L1614.5,1156.1 L1616.0,1160.0 L1617.5,1162.8 L1619.0,1164.9 L1620.5,1167.1 L1622.0,1169.6 L1623.5,1172.4 L1625.0,1175.2 L1625.0,1182.8 L1623.5,1185.6 L1622.0,1188.4 L1620.5,1190.9 L1619.0,1193.1 L1617.5,1195.2 L1616.0,1198.0 L1614.5,1201.9 L1613.0,1205.2 L1611.5,1208.7 L1610.0,1211.3 L1608.5,1215.1 L1607.0,1217.5 L1605.5,1221.7 L1604.0,1226.3 L1602.5,1227.2 L1601.0,1226.9 L1599.5,1227.1 L1598.0,1229.3 L1596.5,1230.4 L1595.0,1231.9 L1593.5,1231.6 L1592.0,1233.8 L1590.5,1234.3 L1589.0,1234.5 L1587.5,1234.3 L1586.0,1232.9 L1584.5,1232.5 L1583.0,1230.8 L1581.5,1229.8 L1580.0,1229.2 L1578.5,1227.6 L1577.0,1226.5 L1575.5,1224.8 L1574.0,1224.4 L1572.5,1223.5 L1571.0,1223.4 L1569.5,1222.4 L1568.0,1221.9 L1566.5,1220.2 L1565.0,1218.7 L1563.5,1218.0 L1562.0,1217.3 L1560.5,1217.4 L1559.0,1217.0 L1557.5,1218.6 L1556.0,1223.7 L1554.5,1228.9 L1553.0,1233.6 L1551.5,1253.8 L1550.0,1273.8 L1548.5,1285.5 L1547.0,1274.5 L1545.5,1258.3 L1544.0,1235.8 L1542.5,1214.6 L1541.0,1205.7 L1539.5,1203.3 L1538.0,1199.6 L1536.5,1200.1 L1535.0,1200.1 L1533.5,1200.5 L1532.0,1199.8 L1530.5,1199.7 L1529.0,1199.5 L1527.5,1200.0 L1526.0,1199.4 L1524.5,1200.1 L1523.0,1200.4 L1521.5,1200.3 L1520.0,1200.1 L1518.5,1200.0 L1517.0,1200.3 L1515.5,1200.6 L1514.0,1200.2 L1512.5,1199.9 L1511.0,1199.6 L1509.5,1199.3 L1508.0,1200.0 L1506.5,1199.3 L1505.0,1200.1 L1503.5,1199.3 L1502.0,1199.8 L1500.5,1199.9 L1499.0,1200.2 L1497.5,1200.6 L1496.0,1199.9 L1494.5,1200.9 L1493.0,1203.9 L1491.5,1207.4 L1490.0,1212.1 L1488.5,1215.6 L1487.0,1231.0 L1485.5,1249.0 L1484.0,1270.5 L1482.5,1269.0 L1481.0,1269.3 L1479.5,1266.1 L1478.0,1263.5 L1476.5,1263.8 L1475.0,1265.5 L1473.5,1269.1 L1472.0,1269.9 L1470.5,1268.2 L1469.0,1267.3 L1467.5,1267.6 L1466.0,1270.0 L1464.5,1270.0 L1463.0,1268.4 L1461.5,1264.9 L1460.0,1267.3 L1458.5,1262.9 L1457.0,1262.1 L1455.5,1259.2 L1454.0,1259.6 L1452.5,1249.5 L1451.0,1225.6 L1449.5,1210.8 L1448.0,1209.5 L1446.5,1209.6 L1445.0,1207.7 L1443.5,1209.9 L1442.0,1217.4 L1440.5,1226.3 L1439.0,1229.5 L1437.5,1229.4 L1436.0,1230.6 L1434.5,1232.4 L1433.0,1233.3 L1431.5,1234.5 L1430.0,1232.8 L1428.5,1233.4 L1427.0,1233.6 L1425.5,1234.0 L1424.0,1234.9 L1422.5,1232.8 L1421.0,1235.1 L1419.5,1233.9 L1418.0,1233.9 L1416.5,1232.6 L1415.0,1234.5 L1413.5,1234.9 L1412.0,1234.0 L1410.5,1232.2 L1409.0,1233.4 L1407.5,1235.8 L1406.0,1235.9 L1404.5,1236.6 L1403.0,1235.2 L1401.5,1235.4 L1400.0,1235.1 L1398.5,1234.3 L1397.0,1233.6 L1395.5,1234.4 L1394.0,1235.3 L1392.5,1236.7 L1391.0,1236.5 L1389.5,1237.3 L1388.0,1237.8 L1386.5,1235.4 L1385.0,1234.8 L1383.5,1234.3 L1382.0,1234.4 L1380.5,1236.1 L1379.0,1240.6 L1377.5,1249.4 L1376.0,1256.1 L1374.5,1261.5 L1373.0,1265.5 L1371.5,1266.0 L1370.0,1271.9 L1368.5,1276.5 L1367.0,1277.3 L1365.5,1274.4 L1364.0,1268.6 L1362.5,1266.7 L1361.0,1266.0 L1359.5,1268.7 L1358.0,1271.1 L1356.5,1275.2 L1355.0,1274.6 L1353.5,1274.3 L1352.0,1270.4 L1350.5,1271.4 L1349.0,1270.3 L1347.5,1252.1 L1346.0,1230.4 L1344.5,1215.4 L1343.0,1211.7 L1341.5,1209.5 L1340.0,1205.6 L1338.5,1205.6 L1337.0,1204.7 L1335.5,1204.8 L1334.0,1204.2 L1332.5,1204.7 L1331.0,1205.1 L1329.5,1205.8 L1328.0,1205.9 L1326.5,1205.0 L1325.0,1204.6 L1323.5,1203.8 L1322.0,1204.8 L1320.5,1205.2 L1319.0,1204.7 L1317.5,1204.2 L1316.0,1203.8 L1314.5,1211.0 L1313.0,1213.7 L1311.5,1215.1 L1310.0,1217.2 L1308.5,1219.7 L1307.0,1220.2 L1305.5,1221.4 L1304.0,1222.0 L1302.5,1223.7 L1301.0,1223.4 L1299.5,1224.6 L1298.0,1224.8 L1296.5,1225.0 L1295.0,1224.4 L1293.5,1224.2 L1292.0,1224.9 L1290.5,1224.5 L1289.0,1226.5 L1287.5,1228.3 L1286.0,1229.1 L1284.5,1228.5 L1283.0,1227.6 L1281.5,1228.0 L1280.0,1228.0 L1278.5,1229.4 L1277.0,1230.3 L1275.5,1233.1 L1274.0,1236.9 L1272.5,1240.9 L1271.0,1244.9 L1269.5,1248.7 L1268.0,1252.7 L1266.5,1255.0 L1265.0,1255.1 L1263.5,1259.9 L1262.0,1259.1 L1260.5,1261.5 L1259.0,1257.2 L1257.5,1253.8 L1256.0,1252.9 L1254.5,1251.0 L1253.0,1250.7 L1251.5,1246.3 L1250.0,1240.5 L1248.5,1235.2 L1247.0,1230.0 L1245.5,1225.2 L1244.0,1223.4 L1242.5,1223.5 L1241.0,1225.3 L1239.5,1225.8 L1238.0,1224.0 L1236.5,1221.9 L1235.0,1221.8 L1233.5,1223.2 L1232.0,1224.7 L1230.5,1224.3 L1229.0,1223.6 L1227.5,1223.0 L1226.0,1224.4 L1224.5,1224.7 L1223.0,1225.2 L1221.5,1227.0 L1220.0,1228.3 L1218.5,1228.9 L1217.0,1227.9 L1215.5,1229.2 L1214.0,1231.9 L1212.5,1233.9 L1211.0,1233.6 L1209.5,1234.3 L1208.0,1235.2 L1206.5,1236.6 L1205.0,1235.4 L1203.5,1236.6 L1202.0,1238.6 L1200.5,1239.2 L1199.0,1237.9 L1197.5,1238.7 L1196.0,1241.2 L1194.5,1242.6 L1193.0,1240.3 L1191.5,1241.0 L1190.0,1242.4 L1188.5,1243.4 L1187.0,1243.1 L1185.5,1241.8 L1184.0,1242.3 L1182.5,1243.1 L1181.0,1243.7 L1179.5,1244.1 L1178.0,1245.4 L1176.5,1247.7 L1175.0,1249.7 L1173.5,1248.7 L1172.0,1246.3 L1170.5,1246.1 L1169.0,1246.0 L1167.5,1246.2 L1166.0,1247.5 L1164.5,1249.2 L1163.0,1252.1 L1161.5,1252.1 L1160.0,1251.9 L1158.5,1253.4 L1157.0,1253.6 L1155.5,1248.7 L1154.0,1244.5 L1152.5,1240.2 L1151.0,1238.6 L1149.5,1230.6 L1148.0,1213.1 L1146.5,1211.1 L1145.0,1210.0 L1143.5,1208.1 L1142.0,1207.8 L1140.5,1206.5 L1139.0,1206.7 L1137.5,1206.4 L1136.0,1206.2 L1134.5,1205.7 L1133.0,1205.0 L1131.5,1204.8 L1130.0,1205.0 L1128.5,1204.7 L1127.0,1204.0 L1125.5,1203.0 L1124.0,1202.6 L1122.5,1202.3 L1121.0,1202.3 L1119.5,1202.1 L1118.0,1202.6 L1116.5,1203.5 L1115.0,1204.2 L1113.5,1204.4 L1112.0,1203.9 L1110.5,1204.8 L1109.0,1205.3 L1107.5,1206.7 L1106.0,1207.2 L1104.5,1208.2 L1103.0,1207.8 L1101.5,1207.6 L1100.0,1207.0 L1098.5,1206.6 L1097.0,1206.5 L1095.5,1207.3 L1094.0,1208.0 L1092.5,1207.5 L1091.0,1207.0 L1089.5,1206.0 L1088.0,1205.1 L1086.5,1204.5 L1085.0,1204.9 L1083.5,1206.5 L1082.0,1207.3 L1080.5,1207.9 L1079.0,1208.9 L1077.5,1209.3 L1076.0,1210.8 L1074.5,1211.0 L1073.0,1212.7 L1071.5,1212.3 L1070.0,1211.6 L1068.5,1210.9 L1067.0,1210.1 L1065.5,1209.7 L1064.0,1208.5 L1062.5,1208.3 L1061.0,1207.5 L1059.5,1207.3 L1058.0,1206.2 L1056.5,1204.8 L1055.0,1203.0 L1053.5,1201.1 L1052.0,1199.8 L1050.5,1198.1 L1049.0,1196.8 L1047.5,1195.5 L1046.0,1194.5 L1044.5,1193.0 L1043.0,1190.9 L1041.5,1189.2 L1040.0,1187.5 L1038.5,1185.8 L1037.0,1184.0 L1035.5,1182.4 L1034.0,1180.9 L1032.5,1180.9 L1031.0,1180.9 L1029.5,1180.9 L1028.0,1180.9 L1026.5,1180.9 L1025.0,1180.9 L1023.5,1180.8 L1022.0,1180.9 L1020.5,1180.9 L1019.0,1181.0 L1017.5,1180.9 L1016.0,1180.8 L1014.5,1180.8 L1013.0,1180.9 L1011.5,1181.0 L1010.0,1181.0 L1008.5,1181.0 L1007.0,1180.9 L1005.5,1180.9 L1004.0,1180.8 Z" fill="#9488e6" clip-path="url(#n4)"/>
</g>
<path d="M1609.0,1465.5 L1610.5,1464.5 L1612.0,1463.6 L1613.5,1463.0 L1615.0,1462.5 L1616.5,1461.9 L1618.0,1461.3 L1619.5,1460.9 L1621.0,1460.4 L1622.5,1459.1 L1624.0,1455.4 L1625.5,1451.5 L1627.0,1448.4 L1628.5,1445.4 L1630.0,1442.8 L1631.5,1419.3 L1633.0,1397.4 L1634.5,1399.4 L1636.0,1402.0 L1637.5,1405.0 L1639.0,1406.3 L1640.5,1407.1 L1642.0,1407.1 L1643.5,1406.5 L1645.0,1406.9 L1646.5,1405.3 L1648.0,1408.4 L1649.5,1409.7 L1651.0,1410.1 L1652.5,1408.7 L1654.0,1407.8 L1655.5,1408.0 L1657.0,1409.9 L1658.5,1412.4 L1660.0,1413.0 L1661.5,1410.1 L1663.0,1407.9 L1664.5,1409.4 L1666.0,1410.6 L1667.5,1410.7 L1669.0,1409.8 L1670.5,1409.4 L1672.0,1409.6 L1673.5,1407.9 L1675.0,1408.6 L1676.5,1407.2 L1678.0,1407.4 L1679.5,1404.2 L1681.0,1406.2 L1682.5,1405.9 L1684.0,1406.6 L1685.5,1404.5 L1687.0,1406.4 L1688.5,1411.5 L1690.0,1421.4 L1691.5,1428.4 L1693.0,1431.5 L1694.5,1432.1 L1696.0,1433.6 L1697.5,1433.4 L1699.0,1432.7 L1700.5,1432.4 L1702.0,1434.1 L1703.5,1434.9 L1705.0,1437.6 L1706.5,1438.6 L1708.0,1441.1 L1709.5,1441.6 L1711.0,1442.6 L1712.5,1443.5 L1714.0,1445.0 L1715.5,1447.0 L1717.0,1449.1 L1718.5,1450.9 L1720.0,1452.0 L1721.5,1453.4 L1723.0,1442.1 L1724.5,1431.1 L1726.0,1430.7 L1727.5,1429.9 L1729.0,1429.4 L1730.5,1429.3 L1732.0,1428.3 L1733.5,1428.8 L1735.0,1428.8 L1736.5,1428.3 L1738.0,1426.2 L1739.5,1424.7 L1741.0,1424.7 L1742.5,1423.3 L1744.0,1421.6 L1745.5,1420.2 L1747.0,1419.0 L1748.5,1416.5 L1750.0,1415.4 L1751.5,1413.9 L1753.0,1414.5 L1754.5,1410.4 L1756.0,1408.1 L1757.5,1408.0 L1759.0,1411.2 L1760.5,1411.2 L1762.0,1410.9 L1763.5,1411.5 L1765.0,1414.9 L1766.5,1415.4 L1768.0,1415.7 L1769.5,1416.9 L1771.0,1419.5 L1772.5,1421.9 L1774.0,1422.0 L1775.5,1423.9 L1777.0,1423.9 L1778.5,1426.4 L1780.0,1427.1 L1781.5,1429.0 L1783.0,1429.2 L1784.5,1430.3 L1786.0,1429.1 L1787.5,1430.3 L1789.0,1429.6 L1790.5,1429.8 L1792.0,1429.1 L1793.5,1431.2 L1795.0,1431.4 L1796.5,1430.9 L1798.0,1429.0 L1799.5,1429.6 L1801.0,1429.0 L1802.5,1430.6 L1804.0,1431.2 L1805.5,1431.8 L1807.0,1431.0 L1808.5,1430.2 L1810.0,1429.9 L1811.5,1430.0 L1813.0,1430.2 L1814.5,1430.4 L1816.0,1430.7 L1817.5,1431.6 L1819.0,1431.8 L1820.5,1432.8 L1822.0,1432.0 L1823.5,1432.7 L1825.0,1432.5 L1826.5,1433.8 L1828.0,1433.1 L1829.5,1433.9 L1831.0,1432.5 L1832.5,1433.1 L1834.0,1432.3 L1835.5,1432.7 L1837.0,1433.7 L1838.5,1432.9 L1840.0,1434.0 L1841.5,1433.4 L1843.0,1434.4 L1844.5,1433.4 L1846.0,1433.7 L1847.5,1432.7 L1849.0,1432.4 L1850.5,1431.5 L1852.0,1433.6 L1853.5,1435.2 L1855.0,1436.2 L1856.5,1434.8 L1858.0,1434.4 L1859.5,1434.3 L1861.0,1435.9 L1862.5,1435.3 L1864.0,1435.2 L1865.5,1434.5 L1867.0,1436.4 L1868.5,1438.2 L1870.0,1438.7 L1871.5,1439.1 L1873.0,1439.6 L1874.5,1441.2 L1876.0,1442.8 L1877.5,1444.1 L1879.0,1445.6 L1880.5,1445.5 L1882.0,1446.9 L1883.5,1446.4 L1885.0,1447.6 L1886.5,1450.3 L1888.0,1458.6 L1889.5,1463.7 L1891.0,1464.6 L1892.5,1465.7 L1892.5,1476.0 L1891.0,1477.1 L1889.5,1478.0 L1888.0,1483.1 L1886.5,1491.4 L1885.0,1494.1 L1883.5,1495.3 L1882.0,1494.8 L1880.5,1496.2 L1879.0,1496.1 L1877.5,1497.6 L1876.0,1498.9 L1874.5,1500.5 L1873.0,1502.1 L1871.5,1502.6 L1870.0,1503.0 L1868.5,1503.5 L1867.0,1505.3 L1865.5,1507.2 L1864.0,1506.5 L1862.5,1506.4 L1861.0,1505.8 L1859.5,1507.4 L1858.0,1507.3 L1856.5,1506.9 L1855.0,1505.5 L1853.5,1506.5 L1852.0,1508.1 L1850.5,1510.2 L1849.0,1509.3 L1847.5,1509.0 L1846.0,1508.0 L1844.5,1508.3 L1843.0,1507.3 L1841.5,1508.3 L1840.0,1507.7 L1838.5,1508.8 L1837.0,1508.0 L1835.5,1509.0 L1834.0,1509.4 L1832.5,1508.6 L1831.0,1509.2 L1829.5,1507.8 L1828.0,1508.6 L1826.5,1507.9 L1825.0,1509.2 L1823.5,1509.0 L1822.0,1509.7 L1820.5,1508.9 L1819.0,1509.9 L1817.5,1510.1 L1816.0,1511.0 L1814.5,1511.3 L1813.0,1511.5 L1811.5,1511.7 L1810.0,1511.8 L1808.5,1511.5 L1807.0,1510.7 L1805.5,1509.9 L1804.0,1510.5 L1802.5,1511.1 L1801.0,1512.7 L1799.5,1512.1 L1798.0,1512.7 L1796.5,1510.8 L1795.0,1510.3 L1793.5,1510.5 L1792.0,1512.6 L1790.5,1511.9 L1789.0,1512.1 L1787.5,1511.4 L1786.0,1512.6 L1784.5,1511.4 L1783.0,1512.5 L1781.5,1512.7 L1780.0,1514.6 L1778.5,1515.3 L1777.0,1517.8 L1775.5,1517.8 L1774.0,1519.7 L1772.5,1519.8 L1771.0,1522.2 L1769.5,1524.8 L1768.0,1526.0 L1766.5,1526.3 L1765.0,1526.8 L1763.5,1530.2 L1762.0,1530.8 L1760.5,1530.5 L1759.0,1530.5 L1757.5,1533.7 L1756.0,1533.6 L1754.5,1531.3 L1753.0,1527.2 L1751.5,1527.8 L1750.0,1526.3 L1748.5,1525.2 L1747.0,1522.7 L1745.5,1521.5 L1744.0,1520.1 L1742.5,1518.4 L1741.0,1517.0 L1739.5,1517.0 L1738.0,1515.5 L1736.5,1513.4 L1735.0,1512.9 L1733.5,1512.9 L1732.0,1513.4 L1730.5,1512.4 L1729.0,1512.3 L1727.5,1511.8 L1726.0,1511.0 L1724.5,1510.6 L1723.0,1499.6 L1721.5,1488.3 L1720.0,1489.7 L1718.5,1490.8 L1717.0,1492.6 L1715.5,1494.7 L1714.0,1496.7 L1712.5,1498.2 L1711.0,1499.1 L1709.5,1500.1 L1708.0,1500.6 L1706.5,1503.1 L1705.0,1504.1 L1703.5,1506.8 L1702.0,1507.6 L1700.5,1509.3 L1699.0,1509.0 L1697.5,1508.3 L1696.0,1508.1 L1694.5,1509.6 L1693.0,1510.2 L1691.5,1513.3 L1690.0,1520.3 L1688.5,1530.2 L1687.0,1535.3 L1685.5,1537.2 L1684.0,1535.1 L1682.5,1535.8 L1681.0,1535.5 L1679.5,1537.5 L1678.0,1534.3 L1676.5,1534.5 L1675.0,1533.1 L1673.5,1533.8 L1672.0,1532.1 L1670.5,1532.3 L1669.0,1531.9 L1667.5,1531.0 L1666.0,1531.1 L1664.5,1532.3 L1663.0,1533.8 L1661.5,1531.6 L1660.0,1528.7 L1658.5,1529.3 L1657.0,1531.8 L1655.5,1533.7 L1654.0,1533.9 L1652.5,1533.0 L1651.0,1531.6 L1649.5,1532.0 L1648.0,1533.3 L1646.5,1536.4 L1645.0,1534.8 L1643.5,1535.2 L1642.0,1534.6 L1640.5,1534.6 L1639.0,1535.4 L1637.5,1536.7 L1636.0,1539.7 L1634.5,1542.3 L1633.0,1544.3 L1631.5,1522.4 L1630.0,1498.9 L1628.5,1496.3 L1627.0,1493.3 L1625.5,1490.2 L1624.0,1486.3 L1622.5,1482.6 L1621.0,1481.3 L1619.5,1480.8 L1618.0,1480.4 L1616.5,1479.8 L1615.0,1479.2 L1613.5,1478.7 L1612.0,1478.1 L1610.5,1477.2 L1609.0,1476.2 Z" fill="#5a5862"/>
<g opacity="0.92">
<rect x="1609" y="1400" width="280.70000000000005" height="141.70000000000005" rx="0" fill="#705de7" />
<clipPath id="n5"><rect x="1609" y="1400" width="280.70000000000005" height="141.70000000000005"/></clipPath>
<path d="M1609.0,1465.5 L1610.5,1464.5 L1612.0,1463.6 L1613.5,1463.0 L1615.0,1462.5 L1616.5,1461.9 L1618.0,1461.3 L1619.5,1460.9 L1621.0,1460.4 L1622.5,1459.1 L1624.0,1455.4 L1625.5,1451.5 L1627.0,1448.4 L1628.5,1445.4 L1630.0,1442.8 L1631.5,1419.3 L1633.0,1397.4 L1634.5,1399.4 L1636.0,1402.0 L1637.5,1405.0 L1639.0,1406.3 L1640.5,1407.1 L1642.0,1407.1 L1643.5,1406.5 L1645.0,1406.9 L1646.5,1405.3 L1648.0,1408.4 L1649.5,1409.7 L1651.0,1410.1 L1652.5,1408.7 L1654.0,1407.8 L1655.5,1408.0 L1657.0,1409.9 L1658.5,1412.4 L1660.0,1413.0 L1661.5,1410.1 L1663.0,1407.9 L1664.5,1409.4 L1666.0,1410.6 L1667.5,1410.7 L1669.0,1409.8 L1670.5,1409.4 L1672.0,1409.6 L1673.5,1407.9 L1675.0,1408.6 L1676.5,1407.2 L1678.0,1407.4 L1679.5,1404.2 L1681.0,1406.2 L1682.5,1405.9 L1684.0,1406.6 L1685.5,1404.5 L1687.0,1406.4 L1688.5,1411.5 L1690.0,1421.4 L1691.5,1428.4 L1693.0,1431.5 L1694.5,1432.1 L1696.0,1433.6 L1697.5,1433.4 L1699.0,1432.7 L1700.5,1432.4 L1702.0,1434.1 L1703.5,1434.9 L1705.0,1437.6 L1706.5,1438.6 L1708.0,1441.1 L1709.5,1441.6 L1711.0,1442.6 L1712.5,1443.5 L1714.0,1445.0 L1715.5,1447.0 L1717.0,1449.1 L1718.5,1450.9 L1720.0,1452.0 L1721.5,1453.4 L1723.0,1442.1 L1724.5,1431.1 L1726.0,1430.7 L1727.5,1429.9 L1729.0,1429.4 L1730.5,1429.3 L1732.0,1428.3 L1733.5,1428.8 L1735.0,1428.8 L1736.5,1428.3 L1738.0,1426.2 L1739.5,1424.7 L1741.0,1424.7 L1742.5,1423.3 L1744.0,1421.6 L1745.5,1420.2 L1747.0,1419.0 L1748.5,1416.5 L1750.0,1415.4 L1751.5,1413.9 L1753.0,1414.5 L1754.5,1410.4 L1756.0,1408.1 L1757.5,1408.0 L1759.0,1411.2 L1760.5,1411.2 L1762.0,1410.9 L1763.5,1411.5 L1765.0,1414.9 L1766.5,1415.4 L1768.0,1415.7 L1769.5,1416.9 L1771.0,1419.5 L1772.5,1421.9 L1774.0,1422.0 L1775.5,1423.9 L1777.0,1423.9 L1778.5,1426.4 L1780.0,1427.1 L1781.5,1429.0 L1783.0,1429.2 L1784.5,1430.3 L1786.0,1429.1 L1787.5,1430.3 L1789.0,1429.6 L1790.5,1429.8 L1792.0,1429.1 L1793.5,1431.2 L1795.0,1431.4 L1796.5,1430.9 L1798.0,1429.0 L1799.5,1429.6 L1801.0,1429.0 L1802.5,1430.6 L1804.0,1431.2 L1805.5,1431.8 L1807.0,1431.0 L1808.5,1430.2 L1810.0,1429.9 L1811.5,1430.0 L1813.0,1430.2 L1814.5,1430.4 L1816.0,1430.7 L1817.5,1431.6 L1819.0,1431.8 L1820.5,1432.8 L1822.0,1432.0 L1823.5,1432.7 L1825.0,1432.5 L1826.5,1433.8 L1828.0,1433.1 L1829.5,1433.9 L1831.0,1432.5 L1832.5,1433.1 L1834.0,1432.3 L1835.5,1432.7 L1837.0,1433.7 L1838.5,1432.9 L1840.0,1434.0 L1841.5,1433.4 L1843.0,1434.4 L1844.5,1433.4 L1846.0,1433.7 L1847.5,1432.7 L1849.0,1432.4 L1850.5,1431.5 L1852.0,1433.6 L1853.5,1435.2 L1855.0,1436.2 L1856.5,1434.8 L1858.0,1434.4 L1859.5,1434.3 L1861.0,1435.9 L1862.5,1435.3 L1864.0,1435.2 L1865.5,1434.5 L1867.0,1436.4 L1868.5,1438.2 L1870.0,1438.7 L1871.5,1439.1 L1873.0,1439.6 L1874.5,1441.2 L1876.0,1442.8 L1877.5,1444.1 L1879.0,1445.6 L1880.5,1445.5 L1882.0,1446.9 L1883.5,1446.4 L1885.0,1447.6 L1886.5,1450.3 L1888.0,1458.6 L1889.5,1463.7 L1891.0,1464.6 L1892.5,1465.7 L1892.5,1476.0 L1891.0,1477.1 L1889.5,1478.0 L1888.0,1483.1 L1886.5,1491.4 L1885.0,1494.1 L1883.5,1495.3 L1882.0,1494.8 L1880.5,1496.2 L1879.0,1496.1 L1877.5,1497.6 L1876.0,1498.9 L1874.5,1500.5 L1873.0,1502.1 L1871.5,1502.6 L1870.0,1503.0 L1868.5,1503.5 L1867.0,1505.3 L1865.5,1507.2 L1864.0,1506.5 L1862.5,1506.4 L1861.0,1505.8 L1859.5,1507.4 L1858.0,1507.3 L1856.5,1506.9 L1855.0,1505.5 L1853.5,1506.5 L1852.0,1508.1 L1850.5,1510.2 L1849.0,1509.3 L1847.5,1509.0 L1846.0,1508.0 L1844.5,1508.3 L1843.0,1507.3 L1841.5,1508.3 L1840.0,1507.7 L1838.5,1508.8 L1837.0,1508.0 L1835.5,1509.0 L1834.0,1509.4 L1832.5,1508.6 L1831.0,1509.2 L1829.5,1507.8 L1828.0,1508.6 L1826.5,1507.9 L1825.0,1509.2 L1823.5,1509.0 L1822.0,1509.7 L1820.5,1508.9 L1819.0,1509.9 L1817.5,1510.1 L1816.0,1511.0 L1814.5,1511.3 L1813.0,1511.5 L1811.5,1511.7 L1810.0,1511.8 L1808.5,1511.5 L1807.0,1510.7 L1805.5,1509.9 L1804.0,1510.5 L1802.5,1511.1 L1801.0,1512.7 L1799.5,1512.1 L1798.0,1512.7 L1796.5,1510.8 L1795.0,1510.3 L1793.5,1510.5 L1792.0,1512.6 L1790.5,1511.9 L1789.0,1512.1 L1787.5,1511.4 L1786.0,1512.6 L1784.5,1511.4 L1783.0,1512.5 L1781.5,1512.7 L1780.0,1514.6 L1778.5,1515.3 L1777.0,1517.8 L1775.5,1517.8 L1774.0,1519.7 L1772.5,1519.8 L1771.0,1522.2 L1769.5,1524.8 L1768.0,1526.0 L1766.5,1526.3 L1765.0,1526.8 L1763.5,1530.2 L1762.0,1530.8 L1760.5,1530.5 L1759.0,1530.5 L1757.5,1533.7 L1756.0,1533.6 L1754.5,1531.3 L1753.0,1527.2 L1751.5,1527.8 L1750.0,1526.3 L1748.5,1525.2 L1747.0,1522.7 L1745.5,1521.5 L1744.0,1520.1 L1742.5,1518.4 L1741.0,1517.0 L1739.5,1517.0 L1738.0,1515.5 L1736.5,1513.4 L1735.0,1512.9 L1733.5,1512.9 L1732.0,1513.4 L1730.5,1512.4 L1729.0,1512.3 L1727.5,1511.8 L1726.0,1511.0 L1724.5,1510.6 L1723.0,1499.6 L1721.5,1488.3 L1720.0,1489.7 L1718.5,1490.8 L1717.0,1492.6 L1715.5,1494.7 L1714.0,1496.7 L1712.5,1498.2 L1711.0,1499.1 L1709.5,1500.1 L1708.0,1500.6 L1706.5,1503.1 L1705.0,1504.1 L1703.5,1506.8 L1702.0,1507.6 L1700.5,1509.3 L1699.0,1509.0 L1697.5,1508.3 L1696.0,1508.1 L1694.5,1509.6 L1693.0,1510.2 L1691.5,1513.3 L1690.0,1520.3 L1688.5,1530.2 L1687.0,1535.3 L1685.5,1537.2 L1684.0,1535.1 L1682.5,1535.8 L1681.0,1535.5 L1679.5,1537.5 L1678.0,1534.3 L1676.5,1534.5 L1675.0,1533.1 L1673.5,1533.8 L1672.0,1532.1 L1670.5,1532.3 L1669.0,1531.9 L1667.5,1531.0 L1666.0,1531.1 L1664.5,1532.3 L1663.0,1533.8 L1661.5,1531.6 L1660.0,1528.7 L1658.5,1529.3 L1657.0,1531.8 L1655.5,1533.7 L1654.0,1533.9 L1652.5,1533.0 L1651.0,1531.6 L1649.5,1532.0 L1648.0,1533.3 L1646.5,1536.4 L1645.0,1534.8 L1643.5,1535.2 L1642.0,1534.6 L1640.5,1534.6 L1639.0,1535.4 L1637.5,1536.7 L1636.0,1539.7 L1634.5,1542.3 L1633.0,1544.3 L1631.5,1522.4 L1630.0,1498.9 L1628.5,1496.3 L1627.0,1493.3 L1625.5,1490.2 L1624.0,1486.3 L1622.5,1482.6 L1621.0,1481.3 L1619.5,1480.8 L1618.0,1480.4 L1616.5,1479.8 L1615.0,1479.2 L1613.5,1478.7 L1612.0,1478.1 L1610.5,1477.2 L1609.0,1476.2 Z" fill="#9488e6" clip-path="url(#n5)"/>
</g>
<path d="M1922.0,1195.9 L1923.5,1195.7 L1925.0,1195.5 L1926.5,1195.3 L1928.0,1195.2 L1929.5,1195.2 L1931.0,1195.1 L1932.5,1194.9 L1934.0,1194.6 L1935.5,1189.6 L1937.0,1185.3 L1938.5,1180.5 L1940.0,1175.6 L1941.5,1170.8 L1943.0,1166.4 L1944.5,1164.8 L1946.0,1164.2 L1947.5,1164.2 L1949.0,1163.2 L1950.5,1161.1 L1952.0,1159.3 L1953.5,1158.2 L1955.0,1158.5 L1956.5,1159.4 L1958.0,1159.4 L1959.5,1157.7 L1961.0,1156.4 L1962.5,1156.7 L1964.0,1157.4 L1965.5,1158.1 L1967.0,1156.3 L1968.5,1155.9 L1970.0,1155.6 L1971.5,1156.5 L1973.0,1156.2 L1974.5,1155.4 L1976.0,1156.1 L1977.5,1165.6 L1979.0,1173.7 L1980.5,1179.1 L1982.0,1178.9 L1983.5,1179.6 L1985.0,1179.2 L1986.5,1179.4 L1988.0,1179.1 L1989.5,1178.4 L1991.0,1177.4 L1992.5,1176.7 L1994.0,1176.8 L1995.5,1177.0 L1997.0,1177.4 L1998.5,1177.8 L2000.0,1177.9 L2001.5,1177.4 L2003.0,1177.4 L2004.5,1177.8 L2006.0,1177.6 L2007.5,1177.2 L2009.0,1176.3 L2010.5,1176.2 L2012.0,1175.4 L2013.5,1175.6 L2015.0,1176.0 L2016.5,1176.1 L2018.0,1175.5 L2019.5,1175.0 L2021.0,1174.9 L2022.5,1175.0 L2024.0,1174.5 L2025.5,1175.0 L2027.0,1174.8 L2028.5,1174.7 L2030.0,1174.6 L2031.5,1174.6 L2033.0,1175.3 L2034.5,1175.1 L2036.0,1170.1 L2037.5,1162.4 L2039.0,1153.3 L2040.5,1146.5 L2042.0,1144.6 L2043.5,1144.5 L2045.0,1144.6 L2046.5,1145.3 L2048.0,1147.0 L2049.5,1145.8 L2051.0,1144.2 L2052.5,1142.4 L2054.0,1142.1 L2055.5,1142.6 L2057.0,1142.6 L2058.5,1144.7 L2060.0,1144.2 L2061.5,1145.3 L2063.0,1144.5 L2064.5,1145.8 L2066.0,1145.0 L2067.5,1144.2 L2069.0,1143.4 L2070.5,1144.1 L2072.0,1145.4 L2073.5,1144.5 L2075.0,1144.5 L2076.5,1143.7 L2078.0,1146.0 L2079.5,1146.0 L2081.0,1147.0 L2082.5,1146.1 L2084.0,1144.8 L2085.5,1141.8 L2087.0,1140.9 L2088.5,1142.2 L2090.0,1143.2 L2091.5,1143.1 L2093.0,1141.2 L2094.5,1141.5 L2096.0,1140.5 L2097.5,1141.8 L2099.0,1142.5 L2100.5,1143.8 L2102.0,1142.3 L2103.5,1141.1 L2105.0,1141.3 L2106.5,1142.8 L2108.0,1143.2 L2109.5,1143.5 L2111.0,1143.5 L2112.5,1142.6 L2114.0,1141.3 L2115.5,1140.5 L2117.0,1143.3 L2118.5,1144.7 L2120.0,1146.3 L2121.5,1144.0 L2123.0,1144.9 L2124.5,1143.3 L2126.0,1145.6 L2127.5,1145.4 L2129.0,1145.5 L2130.5,1144.5 L2132.0,1143.1 L2133.5,1144.6 L2135.0,1145.8 L2136.5,1146.7 L2138.0,1146.9 L2139.5,1146.2 L2141.0,1148.1 L2142.5,1149.4 L2144.0,1148.2 L2145.5,1146.0 L2147.0,1143.7 L2148.5,1145.5 L2150.0,1148.4 L2151.5,1149.7 L2153.0,1148.8 L2154.5,1147.2 L2156.0,1164.4 L2157.5,1188.2 L2159.0,1195.8 L2160.5,1195.8 L2162.0,1195.7 L2163.5,1195.7 L2165.0,1195.6 L2166.5,1195.7 L2168.0,1195.7 L2169.5,1195.7 L2171.0,1195.6 L2172.5,1195.7 L2174.0,1195.7 L2175.5,1195.7 L2177.0,1195.7 L2178.5,1195.8 L2180.0,1195.8 L2181.5,1195.7 L2183.0,1195.7 L2184.5,1195.7 L2186.0,1195.7 L2187.5,1189.1 L2189.0,1181.9 L2190.5,1177.4 L2192.0,1176.1 L2193.5,1176.1 L2195.0,1174.8 L2196.5,1174.8 L2198.0,1175.3 L2199.5,1176.0 L2201.0,1175.6 L2202.5,1175.3 L2204.0,1174.3 L2205.5,1175.2 L2207.0,1175.0 L2208.5,1174.9 L2210.0,1174.6 L2211.5,1173.8 L2213.0,1163.8 L2214.5,1149.1 L2216.0,1145.6 L2217.5,1148.1 L2219.0,1147.7 L2220.5,1148.3 L2222.0,1146.5 L2223.5,1145.5 L2225.0,1143.8 L2226.5,1143.6 L2228.0,1143.8 L2229.5,1142.6 L2231.0,1142.7 L2232.5,1141.7 L2234.0,1143.4 L2235.5,1144.5 L2237.0,1146.4 L2238.5,1144.9 L2240.0,1144.5 L2241.5,1142.6 L2243.0,1142.1 L2244.5,1141.0 L2246.0,1142.9 L2247.5,1143.7 L2249.0,1144.1 L2250.5,1141.7 L2252.0,1143.6 L2253.5,1144.6 L2255.0,1146.5 L2256.5,1146.2 L2258.0,1146.9 L2259.5,1147.8 L2261.0,1147.8 L2262.5,1147.5 L2264.0,1149.0 L2265.5,1150.3 L2267.0,1151.0 L2268.5,1150.5 L2270.0,1152.1 L2271.5,1153.0 L2273.0,1152.0 L2274.5,1150.2 L2276.0,1148.9 L2277.5,1149.9 L2279.0,1151.6 L2280.5,1152.1 L2282.0,1153.7 L2283.5,1153.8 L2285.0,1155.2 L2286.5,1153.3 L2288.0,1152.7 L2289.5,1151.9 L2291.0,1149.8 L2292.5,1148.2 L2294.0,1146.6 L2295.5,1146.0 L2297.0,1144.4 L2298.5,1142.6 L2300.0,1141.7 L2301.5,1142.5 L2303.0,1142.5 L2304.5,1142.4 L2306.0,1139.6 L2307.5,1140.2 L2309.0,1140.6 L2310.5,1140.1 L2312.0,1141.0 L2313.5,1140.9 L2315.0,1141.8 L2316.5,1139.2 L2318.0,1139.5 L2319.5,1139.8 L2321.0,1141.6 L2322.5,1140.7 L2324.0,1142.6 L2325.5,1143.0 L2327.0,1144.4 L2328.5,1144.3 L2330.0,1146.5 L2331.5,1148.3 L2333.0,1148.3 L2334.5,1147.7 L2336.0,1149.2 L2337.5,1152.2 L2339.0,1154.1 L2340.5,1153.7 L2342.0,1153.2 L2343.5,1155.4 L2345.0,1158.0 L2346.5,1160.9 L2348.0,1161.9 L2349.5,1162.3 L2351.0,1161.9 L2352.5,1163.8 L2354.0,1165.9 L2355.5,1167.6 L2357.0,1167.6 L2358.5,1168.8 L2360.0,1170.9 L2361.5,1173.1 L2363.0,1173.4 L2364.5,1174.4 L2366.0,1175.3 L2367.5,1176.6 L2369.0,1178.1 L2370.5,1179.1 L2372.0,1181.0 L2373.5,1182.3 L2375.0,1183.4 L2376.5,1184.2 L2378.0,1185.2 L2379.5,1186.7 L2381.0,1188.5 L2381.0,1206.7 L2379.5,1208.5 L2378.0,1210.0 L2376.5,1211.0 L2375.0,1211.8 L2373.5,1212.9 L2372.0,1214.2 L2370.5,1216.1 L2369.0,1217.1 L2367.5,1218.6 L2366.0,1219.9 L2364.5,1220.8 L2363.0,1221.8 L2361.5,1222.1 L2360.0,1224.3 L2358.5,1226.4 L2357.0,1227.6 L2355.5,1227.6 L2354.0,1229.3 L2352.5,1231.4 L2351.0,1233.3 L2349.5,1232.9 L2348.0,1233.3 L2346.5,1234.3 L2345.0,1237.2 L2343.5,1239.8 L2342.0,1242.0 L2340.5,1241.5 L2339.0,1241.1 L2337.5,1243.0 L2336.0,1246.0 L2334.5,1247.5 L2333.0,1246.9 L2331.5,1246.9 L2330.0,1248.7 L2328.5,1250.9 L2327.0,1250.8 L2325.5,1252.2 L2324.0,1252.6 L2322.5,1254.5 L2321.0,1253.6 L2319.5,1255.4 L2318.0,1255.7 L2316.5,1256.0 L2315.0,1253.4 L2313.5,1254.3 L2312.0,1254.2 L2310.5,1255.1 L2309.0,1254.6 L2307.5,1255.0 L2306.0,1255.6 L2304.5,1252.8 L2303.0,1252.7 L2301.5,1252.7 L2300.0,1253.5 L2298.5,1252.6 L2297.0,1250.8 L2295.5,1249.2 L2294.0,1248.6 L2292.5,1247.0 L2291.0,1245.4 L2289.5,1243.3 L2288.0,1242.5 L2286.5,1241.9 L2285.0,1240.0 L2283.5,1241.4 L2282.0,1241.5 L2280.5,1243.1 L2279.0,1243.6 L2277.5,1245.3 L2276.0,1246.3 L2274.5,1245.0 L2273.0,1243.2 L2271.5,1242.2 L2270.0,1243.1 L2268.5,1244.7 L2267.0,1244.2 L2265.5,1244.9 L2264.0,1246.2 L2262.5,1247.7 L2261.0,1247.4 L2259.5,1247.4 L2258.0,1248.3 L2256.5,1249.0 L2255.0,1248.7 L2253.5,1250.6 L2252.0,1251.6 L2250.5,1253.5 L2249.0,1251.1 L2247.5,1251.5 L2246.0,1252.3 L2244.5,1254.2 L2243.0,1253.1 L2241.5,1252.6 L2240.0,1250.7 L2238.5,1250.3 L2237.0,1248.8 L2235.5,1250.7 L2234.0,1251.8 L2232.5,1253.5 L2231.0,1252.5 L2229.5,1252.6 L2228.0,1251.4 L2226.5,1251.6 L2225.0,1251.4 L2223.5,1249.7 L2222.0,1248.7 L2220.5,1246.9 L2219.0,1247.5 L2217.5,1247.1 L2216.0,1249.6 L2214.5,1246.1 L2213.0,1231.4 L2211.5,1221.4 L2210.0,1220.6 L2208.5,1220.3 L2207.0,1220.2 L2205.5,1220.0 L2204.0,1220.9 L2202.5,1219.9 L2201.0,1219.6 L2199.5,1219.2 L2198.0,1219.9 L2196.5,1220.4 L2195.0,1220.4 L2193.5,1219.1 L2192.0,1219.1 L2190.5,1217.8 L2189.0,1213.3 L2187.5,1206.1 L2186.0,1199.5 L2184.5,1199.5 L2183.0,1199.5 L2181.5,1199.5 L2180.0,1199.4 L2178.5,1199.4 L2177.0,1199.5 L2175.5,1199.5 L2174.0,1199.5 L2172.5,1199.5 L2171.0,1199.6 L2169.5,1199.5 L2168.0,1199.5 L2166.5,1199.5 L2165.0,1199.6 L2163.5,1199.5 L2162.0,1199.5 L2160.5,1199.4 L2159.0,1199.4 L2157.5,1207.0 L2156.0,1230.8 L2154.5,1248.0 L2153.0,1246.4 L2151.5,1245.5 L2150.0,1246.8 L2148.5,1249.7 L2147.0,1251.5 L2145.5,1249.2 L2144.0,1247.0 L2142.5,1245.8 L2141.0,1247.1 L2139.5,1249.0 L2138.0,1248.3 L2136.5,1248.5 L2135.0,1249.4 L2133.5,1250.6 L2132.0,1252.1 L2130.5,1250.7 L2129.0,1249.7 L2127.5,1249.8 L2126.0,1249.6 L2124.5,1251.9 L2123.0,1250.3 L2121.5,1251.2 L2120.0,1248.9 L2118.5,1250.5 L2117.0,1251.9 L2115.5,1254.7 L2114.0,1253.9 L2112.5,1252.6 L2111.0,1251.7 L2109.5,1251.7 L2108.0,1252.0 L2106.5,1252.4 L2105.0,1253.9 L2103.5,1254.1 L2102.0,1252.9 L2100.5,1251.4 L2099.0,1252.7 L2097.5,1253.4 L2096.0,1254.7 L2094.5,1253.7 L2093.0,1254.0 L2091.5,1252.1 L2090.0,1252.0 L2088.5,1253.0 L2087.0,1254.3 L2085.5,1253.4 L2084.0,1250.4 L2082.5,1249.1 L2081.0,1248.2 L2079.5,1249.2 L2078.0,1249.2 L2076.5,1251.5 L2075.0,1250.7 L2073.5,1250.7 L2072.0,1249.8 L2070.5,1251.1 L2069.0,1251.8 L2067.5,1251.0 L2066.0,1250.2 L2064.5,1249.4 L2063.0,1250.7 L2061.5,1249.9 L2060.0,1251.0 L2058.5,1250.5 L2057.0,1252.6 L2055.5,1252.6 L2054.0,1253.1 L2052.5,1252.8 L2051.0,1251.0 L2049.5,1249.4 L2048.0,1248.2 L2046.5,1249.9 L2045.0,1250.6 L2043.5,1250.7 L2042.0,1250.6 L2040.5,1248.7 L2039.0,1241.9 L2037.5,1232.8 L2036.0,1225.1 L2034.5,1220.1 L2033.0,1219.9 L2031.5,1220.6 L2030.0,1220.6 L2028.5,1220.5 L2027.0,1220.4 L2025.5,1220.2 L2024.0,1220.7 L2022.5,1220.2 L2021.0,1220.3 L2019.5,1220.2 L2018.0,1219.7 L2016.5,1219.1 L2015.0,1219.2 L2013.5,1219.6 L2012.0,1219.8 L2010.5,1219.0 L2009.0,1218.9 L2007.5,1218.0 L2006.0,1217.6 L2004.5,1217.4 L2003.0,1217.8 L2001.5,1217.8 L2000.0,1217.3 L1998.5,1217.4 L1997.0,1217.8 L1995.5,1218.2 L1994.0,1218.4 L1992.5,1218.5 L1991.0,1217.8 L1989.5,1216.8 L1988.0,1216.1 L1986.5,1215.8 L1985.0,1216.0 L1983.5,1215.6 L1982.0,1216.3 L1980.5,1216.1 L1979.0,1221.5 L1977.5,1229.6 L1976.0,1239.1 L1974.5,1239.8 L1973.0,1239.0 L1971.5,1238.7 L1970.0,1239.6 L1968.5,1239.3 L1967.0,1238.9 L1965.5,1237.1 L1964.0,1237.8 L1962.5,1238.5 L1961.0,1238.8 L1959.5,1237.5 L1958.0,1235.8 L1956.5,1235.8 L1955.0,1236.7 L1953.5,1237.0 L1952.0,1235.9 L1950.5,1234.1 L1949.0,1232.0 L1947.5,1231.0 L1946.0,1231.0 L1944.5,1230.4 L1943.0,1228.8 L1941.5,1224.4 L1940.0,1219.6 L1938.5,1214.7 L1937.0,1209.9 L1935.5,1205.6 L1934.0,1200.6 L1932.5,1200.3 L1931.0,1200.1 L1929.5,1200.0 L1928.0,1200.0 L1926.5,1199.9 L1925.0,1199.7 L1923.5,1199.5 L1922.0,1199.3 Z" fill="#5a5862"/>
<g opacity="0.92">
<rect x="1922.5" y="1126.4" width="459.3000000000002" height="142.39999999999986" rx="0" fill="#705de7" />
<clipPath id="n6"><rect x="1922.5" y="1126.4" width="459.3000000000002" height="142.39999999999986"/></clipPath>
<path d="M1922.0,1195.9 L1923.5,1195.7 L1925.0,1195.5 L1926.5,1195.3 L1928.0,1195.2 L1929.5,1195.2 L1931.0,1195.1 L1932.5,1194.9 L1934.0,1194.6 L1935.5,1189.6 L1937.0,1185.3 L1938.5,1180.5 L1940.0,1175.6 L1941.5,1170.8 L1943.0,1166.4 L1944.5,1164.8 L1946.0,1164.2 L1947.5,1164.2 L1949.0,1163.2 L1950.5,1161.1 L1952.0,1159.3 L1953.5,1158.2 L1955.0,1158.5 L1956.5,1159.4 L1958.0,1159.4 L1959.5,1157.7 L1961.0,1156.4 L1962.5,1156.7 L1964.0,1157.4 L1965.5,1158.1 L1967.0,1156.3 L1968.5,1155.9 L1970.0,1155.6 L1971.5,1156.5 L1973.0,1156.2 L1974.5,1155.4 L1976.0,1156.1 L1977.5,1165.6 L1979.0,1173.7 L1980.5,1179.1 L1982.0,1178.9 L1983.5,1179.6 L1985.0,1179.2 L1986.5,1179.4 L1988.0,1179.1 L1989.5,1178.4 L1991.0,1177.4 L1992.5,1176.7 L1994.0,1176.8 L1995.5,1177.0 L1997.0,1177.4 L1998.5,1177.8 L2000.0,1177.9 L2001.5,1177.4 L2003.0,1177.4 L2004.5,1177.8 L2006.0,1177.6 L2007.5,1177.2 L2009.0,1176.3 L2010.5,1176.2 L2012.0,1175.4 L2013.5,1175.6 L2015.0,1176.0 L2016.5,1176.1 L2018.0,1175.5 L2019.5,1175.0 L2021.0,1174.9 L2022.5,1175.0 L2024.0,1174.5 L2025.5,1175.0 L2027.0,1174.8 L2028.5,1174.7 L2030.0,1174.6 L2031.5,1174.6 L2033.0,1175.3 L2034.5,1175.1 L2036.0,1170.1 L2037.5,1162.4 L2039.0,1153.3 L2040.5,1146.5 L2042.0,1144.6 L2043.5,1144.5 L2045.0,1144.6 L2046.5,1145.3 L2048.0,1147.0 L2049.5,1145.8 L2051.0,1144.2 L2052.5,1142.4 L2054.0,1142.1 L2055.5,1142.6 L2057.0,1142.6 L2058.5,1144.7 L2060.0,1144.2 L2061.5,1145.3 L2063.0,1144.5 L2064.5,1145.8 L2066.0,1145.0 L2067.5,1144.2 L2069.0,1143.4 L2070.5,1144.1 L2072.0,1145.4 L2073.5,1144.5 L2075.0,1144.5 L2076.5,1143.7 L2078.0,1146.0 L2079.5,1146.0 L2081.0,1147.0 L2082.5,1146.1 L2084.0,1144.8 L2085.5,1141.8 L2087.0,1140.9 L2088.5,1142.2 L2090.0,1143.2 L2091.5,1143.1 L2093.0,1141.2 L2094.5,1141.5 L2096.0,1140.5 L2097.5,1141.8 L2099.0,1142.5 L2100.5,1143.8 L2102.0,1142.3 L2103.5,1141.1 L2105.0,1141.3 L2106.5,1142.8 L2108.0,1143.2 L2109.5,1143.5 L2111.0,1143.5 L2112.5,1142.6 L2114.0,1141.3 L2115.5,1140.5 L2117.0,1143.3 L2118.5,1144.7 L2120.0,1146.3 L2121.5,1144.0 L2123.0,1144.9 L2124.5,1143.3 L2126.0,1145.6 L2127.5,1145.4 L2129.0,1145.5 L2130.5,1144.5 L2132.0,1143.1 L2133.5,1144.6 L2135.0,1145.8 L2136.5,1146.7 L2138.0,1146.9 L2139.5,1146.2 L2141.0,1148.1 L2142.5,1149.4 L2144.0,1148.2 L2145.5,1146.0 L2147.0,1143.7 L2148.5,1145.5 L2150.0,1148.4 L2151.5,1149.7 L2153.0,1148.8 L2154.5,1147.2 L2156.0,1164.4 L2157.5,1188.2 L2159.0,1195.8 L2160.5,1195.8 L2162.0,1195.7 L2163.5,1195.7 L2165.0,1195.6 L2166.5,1195.7 L2168.0,1195.7 L2169.5,1195.7 L2171.0,1195.6 L2172.5,1195.7 L2174.0,1195.7 L2175.5,1195.7 L2177.0,1195.7 L2178.5,1195.8 L2180.0,1195.8 L2181.5,1195.7 L2183.0,1195.7 L2184.5,1195.7 L2186.0,1195.7 L2187.5,1189.1 L2189.0,1181.9 L2190.5,1177.4 L2192.0,1176.1 L2193.5,1176.1 L2195.0,1174.8 L2196.5,1174.8 L2198.0,1175.3 L2199.5,1176.0 L2201.0,1175.6 L2202.5,1175.3 L2204.0,1174.3 L2205.5,1175.2 L2207.0,1175.0 L2208.5,1174.9 L2210.0,1174.6 L2211.5,1173.8 L2213.0,1163.8 L2214.5,1149.1 L2216.0,1145.6 L2217.5,1148.1 L2219.0,1147.7 L2220.5,1148.3 L2222.0,1146.5 L2223.5,1145.5 L2225.0,1143.8 L2226.5,1143.6 L2228.0,1143.8 L2229.5,1142.6 L2231.0,1142.7 L2232.5,1141.7 L2234.0,1143.4 L2235.5,1144.5 L2237.0,1146.4 L2238.5,1144.9 L2240.0,1144.5 L2241.5,1142.6 L2243.0,1142.1 L2244.5,1141.0 L2246.0,1142.9 L2247.5,1143.7 L2249.0,1144.1 L2250.5,1141.7 L2252.0,1143.6 L2253.5,1144.6 L2255.0,1146.5 L2256.5,1146.2 L2258.0,1146.9 L2259.5,1147.8 L2261.0,1147.8 L2262.5,1147.5 L2264.0,1149.0 L2265.5,1150.3 L2267.0,1151.0 L2268.5,1150.5 L2270.0,1152.1 L2271.5,1153.0 L2273.0,1152.0 L2274.5,1150.2 L2276.0,1148.9 L2277.5,1149.9 L2279.0,1151.6 L2280.5,1152.1 L2282.0,1153.7 L2283.5,1153.8 L2285.0,1155.2 L2286.5,1153.3 L2288.0,1152.7 L2289.5,1151.9 L2291.0,1149.8 L2292.5,1148.2 L2294.0,1146.6 L2295.5,1146.0 L2297.0,1144.4 L2298.5,1142.6 L2300.0,1141.7 L2301.5,1142.5 L2303.0,1142.5 L2304.5,1142.4 L2306.0,1139.6 L2307.5,1140.2 L2309.0,1140.6 L2310.5,1140.1 L2312.0,1141.0 L2313.5,1140.9 L2315.0,1141.8 L2316.5,1139.2 L2318.0,1139.5 L2319.5,1139.8 L2321.0,1141.6 L2322.5,1140.7 L2324.0,1142.6 L2325.5,1143.0 L2327.0,1144.4 L2328.5,1144.3 L2330.0,1146.5 L2331.5,1148.3 L2333.0,1148.3 L2334.5,1147.7 L2336.0,1149.2 L2337.5,1152.2 L2339.0,1154.1 L2340.5,1153.7 L2342.0,1153.2 L2343.5,1155.4 L2345.0,1158.0 L2346.5,1160.9 L2348.0,1161.9 L2349.5,1162.3 L2351.0,1161.9 L2352.5,1163.8 L2354.0,1165.9 L2355.5,1167.6 L2357.0,1167.6 L2358.5,1168.8 L2360.0,1170.9 L2361.5,1173.1 L2363.0,1173.4 L2364.5,1174.4 L2366.0,1175.3 L2367.5,1176.6 L2369.0,1178.1 L2370.5,1179.1 L2372.0,1181.0 L2373.5,1182.3 L2375.0,1183.4 L2376.5,1184.2 L2378.0,1185.2 L2379.5,1186.7 L2381.0,1188.5 L2381.0,1206.7 L2379.5,1208.5 L2378.0,1210.0 L2376.5,1211.0 L2375.0,1211.8 L2373.5,1212.9 L2372.0,1214.2 L2370.5,1216.1 L2369.0,1217.1 L2367.5,1218.6 L2366.0,1219.9 L2364.5,1220.8 L2363.0,1221.8 L2361.5,1222.1 L2360.0,1224.3 L2358.5,1226.4 L2357.0,1227.6 L2355.5,1227.6 L2354.0,1229.3 L2352.5,1231.4 L2351.0,1233.3 L2349.5,1232.9 L2348.0,1233.3 L2346.5,1234.3 L2345.0,1237.2 L2343.5,1239.8 L2342.0,1242.0 L2340.5,1241.5 L2339.0,1241.1 L2337.5,1243.0 L2336.0,1246.0 L2334.5,1247.5 L2333.0,1246.9 L2331.5,1246.9 L2330.0,1248.7 L2328.5,1250.9 L2327.0,1250.8 L2325.5,1252.2 L2324.0,1252.6 L2322.5,1254.5 L2321.0,1253.6 L2319.5,1255.4 L2318.0,1255.7 L2316.5,1256.0 L2315.0,1253.4 L2313.5,1254.3 L2312.0,1254.2 L2310.5,1255.1 L2309.0,1254.6 L2307.5,1255.0 L2306.0,1255.6 L2304.5,1252.8 L2303.0,1252.7 L2301.5,1252.7 L2300.0,1253.5 L2298.5,1252.6 L2297.0,1250.8 L2295.5,1249.2 L2294.0,1248.6 L2292.5,1247.0 L2291.0,1245.4 L2289.5,1243.3 L2288.0,1242.5 L2286.5,1241.9 L2285.0,1240.0 L2283.5,1241.4 L2282.0,1241.5 L2280.5,1243.1 L2279.0,1243.6 L2277.5,1245.3 L2276.0,1246.3 L2274.5,1245.0 L2273.0,1243.2 L2271.5,1242.2 L2270.0,1243.1 L2268.5,1244.7 L2267.0,1244.2 L2265.5,1244.9 L2264.0,1246.2 L2262.5,1247.7 L2261.0,1247.4 L2259.5,1247.4 L2258.0,1248.3 L2256.5,1249.0 L2255.0,1248.7 L2253.5,1250.6 L2252.0,1251.6 L2250.5,1253.5 L2249.0,1251.1 L2247.5,1251.5 L2246.0,1252.3 L2244.5,1254.2 L2243.0,1253.1 L2241.5,1252.6 L2240.0,1250.7 L2238.5,1250.3 L2237.0,1248.8 L2235.5,1250.7 L2234.0,1251.8 L2232.5,1253.5 L2231.0,1252.5 L2229.5,1252.6 L2228.0,1251.4 L2226.5,1251.6 L2225.0,1251.4 L2223.5,1249.7 L2222.0,1248.7 L2220.5,1246.9 L2219.0,1247.5 L2217.5,1247.1 L2216.0,1249.6 L2214.5,1246.1 L2213.0,1231.4 L2211.5,1221.4 L2210.0,1220.6 L2208.5,1220.3 L2207.0,1220.2 L2205.5,1220.0 L2204.0,1220.9 L2202.5,1219.9 L2201.0,1219.6 L2199.5,1219.2 L2198.0,1219.9 L2196.5,1220.4 L2195.0,1220.4 L2193.5,1219.1 L2192.0,1219.1 L2190.5,1217.8 L2189.0,1213.3 L2187.5,1206.1 L2186.0,1199.5 L2184.5,1199.5 L2183.0,1199.5 L2181.5,1199.5 L2180.0,1199.4 L2178.5,1199.4 L2177.0,1199.5 L2175.5,1199.5 L2174.0,1199.5 L2172.5,1199.5 L2171.0,1199.6 L2169.5,1199.5 L2168.0,1199.5 L2166.5,1199.5 L2165.0,1199.6 L2163.5,1199.5 L2162.0,1199.5 L2160.5,1199.4 L2159.0,1199.4 L2157.5,1207.0 L2156.0,1230.8 L2154.5,1248.0 L2153.0,1246.4 L2151.5,1245.5 L2150.0,1246.8 L2148.5,1249.7 L2147.0,1251.5 L2145.5,1249.2 L2144.0,1247.0 L2142.5,1245.8 L2141.0,1247.1 L2139.5,1249.0 L2138.0,1248.3 L2136.5,1248.5 L2135.0,1249.4 L2133.5,1250.6 L2132.0,1252.1 L2130.5,1250.7 L2129.0,1249.7 L2127.5,1249.8 L2126.0,1249.6 L2124.5,1251.9 L2123.0,1250.3 L2121.5,1251.2 L2120.0,1248.9 L2118.5,1250.5 L2117.0,1251.9 L2115.5,1254.7 L2114.0,1253.9 L2112.5,1252.6 L2111.0,1251.7 L2109.5,1251.7 L2108.0,1252.0 L2106.5,1252.4 L2105.0,1253.9 L2103.5,1254.1 L2102.0,1252.9 L2100.5,1251.4 L2099.0,1252.7 L2097.5,1253.4 L2096.0,1254.7 L2094.5,1253.7 L2093.0,1254.0 L2091.5,1252.1 L2090.0,1252.0 L2088.5,1253.0 L2087.0,1254.3 L2085.5,1253.4 L2084.0,1250.4 L2082.5,1249.1 L2081.0,1248.2 L2079.5,1249.2 L2078.0,1249.2 L2076.5,1251.5 L2075.0,1250.7 L2073.5,1250.7 L2072.0,1249.8 L2070.5,1251.1 L2069.0,1251.8 L2067.5,1251.0 L2066.0,1250.2 L2064.5,1249.4 L2063.0,1250.7 L2061.5,1249.9 L2060.0,1251.0 L2058.5,1250.5 L2057.0,1252.6 L2055.5,1252.6 L2054.0,1253.1 L2052.5,1252.8 L2051.0,1251.0 L2049.5,1249.4 L2048.0,1248.2 L2046.5,1249.9 L2045.0,1250.6 L2043.5,1250.7 L2042.0,1250.6 L2040.5,1248.7 L2039.0,1241.9 L2037.5,1232.8 L2036.0,1225.1 L2034.5,1220.1 L2033.0,1219.9 L2031.5,1220.6 L2030.0,1220.6 L2028.5,1220.5 L2027.0,1220.4 L2025.5,1220.2 L2024.0,1220.7 L2022.5,1220.2 L2021.0,1220.3 L2019.5,1220.2 L2018.0,1219.7 L2016.5,1219.1 L2015.0,1219.2 L2013.5,1219.6 L2012.0,1219.8 L2010.5,1219.0 L2009.0,1218.9 L2007.5,1218.0 L2006.0,1217.6 L2004.5,1217.4 L2003.0,1217.8 L2001.5,1217.8 L2000.0,1217.3 L1998.5,1217.4 L1997.0,1217.8 L1995.5,1218.2 L1994.0,1218.4 L1992.5,1218.5 L1991.0,1217.8 L1989.5,1216.8 L1988.0,1216.1 L1986.5,1215.8 L1985.0,1216.0 L1983.5,1215.6 L1982.0,1216.3 L1980.5,1216.1 L1979.0,1221.5 L1977.5,1229.6 L1976.0,1239.1 L1974.5,1239.8 L1973.0,1239.0 L1971.5,1238.7 L1970.0,1239.6 L1968.5,1239.3 L1967.0,1238.9 L1965.5,1237.1 L1964.0,1237.8 L1962.5,1238.5 L1961.0,1238.8 L1959.5,1237.5 L1958.0,1235.8 L1956.5,1235.8 L1955.0,1236.7 L1953.5,1237.0 L1952.0,1235.9 L1950.5,1234.1 L1949.0,1232.0 L1947.5,1231.0 L1946.0,1231.0 L1944.5,1230.4 L1943.0,1228.8 L1941.5,1224.4 L1940.0,1219.6 L1938.5,1214.7 L1937.0,1209.9 L1935.5,1205.6 L1934.0,1200.6 L1932.5,1200.3 L1931.0,1200.1 L1929.5,1200.0 L1928.0,1200.0 L1926.5,1199.9 L1925.0,1199.7 L1923.5,1199.5 L1922.0,1199.3 Z" fill="#9488e6" clip-path="url(#n6)"/>
</g>
<path d="M2428.0,736.6 L2429.5,736.3 L2431.0,736.1 L2432.5,735.7 L2434.0,735.5 L2435.5,735.3 L2437.0,735.1 L2438.5,734.8 L2440.0,734.6 L2441.5,734.8 L2443.0,734.9 L2444.5,735.1 L2446.0,735.0 L2447.5,735.1 L2449.0,735.1 L2450.5,735.2 L2452.0,735.2 L2453.5,735.3 L2455.0,735.3 L2456.5,735.3 L2458.0,735.2 L2459.5,735.3 L2461.0,735.3 L2462.5,735.3 L2464.0,735.4 L2465.5,735.4 L2467.0,735.3 L2468.5,735.3 L2470.0,735.3 L2471.5,735.4 L2473.0,735.4 L2474.5,735.4 L2476.0,735.5 L2477.5,735.4 L2479.0,735.4 L2480.5,735.5 L2482.0,735.5 L2483.5,735.6 L2485.0,735.5 L2486.5,735.5 L2488.0,735.6 L2489.5,735.5 L2491.0,735.5 L2492.5,735.6 L2494.0,735.7 L2495.5,735.7 L2497.0,735.7 L2498.5,735.6 L2500.0,735.7 L2501.5,735.6 L2503.0,735.6 L2504.5,735.6 L2506.0,735.7 L2507.5,735.7 L2509.0,735.7 L2510.5,735.5 L2512.0,735.5 L2513.5,735.4 L2515.0,735.5 L2516.5,735.5 L2518.0,735.5 L2519.5,735.4 L2521.0,735.4 L2522.5,735.4 L2524.0,735.5 L2525.5,735.4 L2527.0,735.3 L2528.5,735.2 L2530.0,735.1 L2531.5,735.1 L2533.0,735.3 L2534.5,735.2 L2536.0,735.2 L2537.5,735.2 L2539.0,735.2 L2540.5,735.2 L2542.0,735.2 L2543.5,735.2 L2545.0,735.1 L2546.5,735.0 L2548.0,735.0 L2549.5,735.0 L2551.0,735.0 L2552.5,735.0 L2554.0,735.0 L2555.5,735.0 L2557.0,735.0 L2558.5,734.8 L2560.0,734.9 L2561.5,734.7 L2563.0,734.8 L2564.5,734.8 L2566.0,734.9 L2567.5,734.8 L2569.0,734.8 L2570.5,734.7 L2572.0,734.6 L2573.5,734.3 L2575.0,734.0 L2576.5,733.7 L2578.0,733.4 L2579.5,733.2 L2581.0,733.1 L2582.5,732.9 L2584.0,732.8 L2585.5,732.4 L2587.0,732.4 L2588.5,732.2 L2590.0,732.2 L2591.5,732.6 L2593.0,733.2 L2594.5,733.8 L2596.0,734.5 L2597.5,735.2 L2599.0,736.1 L2600.5,736.7 L2602.0,736.6 L2603.5,736.6 L2605.0,736.6 L2606.5,736.6 L2608.0,736.6 L2609.5,736.5 L2611.0,736.6 L2612.5,736.7 L2614.0,736.6 L2615.5,736.6 L2617.0,728.9 L2618.5,705.9 L2620.0,682.6 L2621.5,664.5 L2623.0,647.1 L2624.5,634.1 L2626.0,627.7 L2627.5,620.9 L2629.0,619.1 L2630.5,619.5 L2632.0,624.0 L2633.5,642.4 L2635.0,659.7 L2636.5,676.4 L2638.0,686.3 L2639.5,697.0 L2641.0,703.5 L2642.5,708.1 L2644.0,713.1 L2645.5,712.7 L2647.0,713.0 L2648.5,712.8 L2650.0,713.0 L2651.5,712.3 L2653.0,712.7 L2654.5,712.1 L2656.0,712.8 L2657.5,712.2 L2659.0,712.6 L2660.5,712.3 L2662.0,712.3 L2663.5,712.5 L2665.0,712.8 L2666.5,712.4 L2668.0,712.0 L2669.5,712.0 L2671.0,712.0 L2672.5,711.3 L2674.0,710.4 L2675.5,710.6 L2677.0,711.7 L2678.5,711.5 L2680.0,711.7 L2681.5,710.6 L2683.0,711.1 L2684.5,711.9 L2686.0,711.8 L2687.5,712.3 L2689.0,711.4 L2690.5,712.3 L2692.0,712.2 L2693.5,713.0 L2695.0,712.5 L2696.5,712.4 L2698.0,711.7 L2699.5,711.4 L2701.0,711.5 L2702.5,712.2 L2704.0,712.9 L2705.5,712.2 L2707.0,711.1 L2708.5,711.4 L2710.0,711.8 L2711.5,703.3 L2713.0,693.9 L2714.5,687.9 L2716.0,686.2 L2717.5,686.2 L2719.0,684.4 L2720.5,684.0 L2722.0,682.0 L2723.5,683.3 L2725.0,684.8 L2726.5,683.8 L2728.0,684.1 L2729.5,683.0 L2731.0,684.2 L2732.5,683.7 L2734.0,681.9 L2735.5,682.0 L2737.0,680.1 L2738.5,680.1 L2740.0,678.4 L2741.5,679.8 L2743.0,679.7 L2744.5,680.7 L2746.0,678.0 L2747.5,679.8 L2749.0,678.2 L2750.5,678.9 L2752.0,677.5 L2753.5,678.8 L2755.0,679.7 L2756.5,678.7 L2758.0,676.0 L2759.5,673.7 L2761.0,673.5 L2762.5,675.5 L2764.0,675.8 L2765.5,677.0 L2767.0,676.6 L2768.5,676.4 L2770.0,674.9 L2771.5,675.6 L2773.0,678.1 L2774.5,680.5 L2776.0,680.4 L2777.5,679.0 L2779.0,679.0 L2780.5,679.3 L2782.0,681.9 L2783.5,682.5 L2785.0,682.8 L2786.5,682.5 L2788.0,681.6 L2789.5,681.9 L2791.0,683.1 L2792.5,686.0 L2794.0,687.1 L2795.5,689.4 L2797.0,697.8 L2798.5,709.1 L2800.0,719.9 L2801.5,721.1 L2803.0,721.4 L2804.5,721.9 L2806.0,722.5 L2807.5,723.0 L2809.0,723.1 L2810.5,723.7 L2812.0,724.0 L2813.5,711.9 L2815.0,699.3 L2816.5,687.5 L2818.0,672.0 L2819.5,667.9 L2821.0,662.4 L2822.5,663.7 L2824.0,661.7 L2825.5,663.8 L2827.0,661.6 L2828.5,663.7 L2830.0,665.5 L2831.5,666.1 L2833.0,667.2 L2834.5,666.1 L2836.0,666.4 L2837.5,665.0 L2839.0,666.5 L2840.5,673.1 L2842.0,684.8 L2843.5,697.0 L2845.0,706.9 L2846.5,714.7 L2848.0,714.9 L2849.5,715.4 L2851.0,715.6 L2852.5,715.5 L2854.0,715.5 L2855.5,716.2 L2857.0,716.3 L2858.5,716.5 L2860.0,716.4 L2861.5,716.5 L2863.0,716.7 L2864.5,717.0 L2866.0,717.1 L2867.5,717.6 L2869.0,716.9 L2870.5,716.7 L2872.0,716.6 L2873.5,716.7 L2875.0,717.2 L2876.5,716.7 L2878.0,717.2 L2879.5,716.9 L2881.0,717.6 L2882.5,717.9 L2884.0,718.3 L2885.5,718.4 L2887.0,718.2 L2888.5,718.5 L2890.0,718.6 L2891.5,719.0 L2893.0,718.5 L2894.5,718.1 L2896.0,717.8 L2897.5,717.5 L2899.0,718.1 L2900.5,718.8 L2902.0,718.9 L2903.5,718.7 L2905.0,718.1 L2906.5,718.9 L2908.0,719.4 L2909.5,692.1 L2911.0,663.3 L2912.5,659.5 L2914.0,655.0 L2915.5,653.5 L2917.0,658.8 L2918.5,664.4 L2920.0,668.7 L2921.5,670.8 L2923.0,670.3 L2924.5,669.1 L2926.0,668.7 L2927.5,666.2 L2929.0,664.5 L2930.5,664.9 L2932.0,663.3 L2933.5,665.7 L2935.0,667.1 L2936.5,671.8 L2938.0,673.8 L2939.5,673.7 L2941.0,673.0 L2942.5,674.4 L2944.0,676.1 L2945.5,678.6 L2947.0,680.0 L2948.5,679.5 L2950.0,680.4 L2951.5,680.5 L2953.0,680.9 L2954.5,679.2 L2956.0,679.5 L2957.5,680.2 L2959.0,681.2 L2960.5,678.9 L2962.0,678.9 L2963.5,678.3 L2965.0,679.6 L2966.5,681.5 L2968.0,682.4 L2969.5,683.0 L2971.0,681.5 L2972.5,681.3 L2974.0,679.6 L2975.5,680.9 L2977.0,682.1 L2978.5,683.4 L2980.0,683.5 L2981.5,681.7 L2983.0,682.5 L2984.5,682.3 L2986.0,682.7 L2987.5,681.1 L2989.0,679.9 L2990.5,680.2 L2992.0,681.3 L2993.5,680.5 L2995.0,680.3 L2996.5,679.0 L2998.0,681.5 L2999.5,681.1 L3001.0,681.7 L3002.5,681.7 L3004.0,681.4 L3005.5,680.8 L3007.0,680.7 L3008.5,682.8 L3010.0,685.6 L3011.5,684.9 L3013.0,683.2 L3014.5,681.6 L3016.0,682.7 L3017.5,682.4 L3019.0,683.3 L3020.5,682.4 L3022.0,685.1 L3022.0,791.9 L3020.5,794.6 L3019.0,793.7 L3017.5,794.6 L3016.0,794.3 L3014.5,795.4 L3013.0,793.8 L3011.5,792.1 L3010.0,791.4 L3008.5,794.2 L3007.0,796.3 L3005.5,796.2 L3004.0,795.6 L3002.5,795.3 L3001.0,795.3 L2999.5,795.9 L2998.0,795.5 L2996.5,798.0 L2995.0,796.7 L2993.5,796.5 L2992.0,795.7 L2990.5,796.8 L2989.0,797.1 L2987.5,795.9 L2986.0,794.3 L2984.5,794.7 L2983.0,794.5 L2981.5,795.3 L2980.0,793.5 L2978.5,793.6 L2977.0,794.9 L2975.5,796.1 L2974.0,797.4 L2972.5,795.7 L2971.0,795.5 L2969.5,794.0 L2968.0,794.6 L2966.5,795.5 L2965.0,797.4 L2963.5,798.7 L2962.0,798.1 L2960.5,798.1 L2959.0,795.8 L2957.5,796.8 L2956.0,797.5 L2954.5,797.8 L2953.0,796.1 L2951.5,796.5 L2950.0,796.6 L2948.5,797.5 L2947.0,797.0 L2945.5,798.4 L2944.0,800.9 L2942.5,802.6 L2941.0,804.0 L2939.5,803.3 L2938.0,803.2 L2936.5,805.2 L2935.0,809.9 L2933.5,811.3 L2932.0,813.7 L2930.5,812.1 L2929.0,812.5 L2927.5,810.8 L2926.0,808.3 L2924.5,807.9 L2923.0,806.7 L2921.5,806.2 L2920.0,808.3 L2918.5,812.6 L2917.0,818.2 L2915.5,823.5 L2914.0,822.0 L2912.5,817.5 L2911.0,813.7 L2909.5,784.9 L2908.0,757.6 L2906.5,758.1 L2905.0,758.9 L2903.5,758.3 L2902.0,758.1 L2900.5,758.2 L2899.0,758.9 L2897.5,759.5 L2896.0,759.2 L2894.5,758.9 L2893.0,758.5 L2891.5,758.0 L2890.0,758.4 L2888.5,758.5 L2887.0,758.8 L2885.5,758.6 L2884.0,758.7 L2882.5,759.1 L2881.0,759.4 L2879.5,760.1 L2878.0,759.8 L2876.5,760.3 L2875.0,759.8 L2873.5,760.3 L2872.0,760.4 L2870.5,760.3 L2869.0,760.1 L2867.5,759.4 L2866.0,759.9 L2864.5,760.0 L2863.0,760.3 L2861.5,760.5 L2860.0,760.6 L2858.5,760.5 L2857.0,760.7 L2855.5,760.8 L2854.0,761.5 L2852.5,761.5 L2851.0,761.4 L2849.5,761.6 L2848.0,762.1 L2846.5,762.3 L2845.0,770.1 L2843.5,780.0 L2842.0,792.2 L2840.5,803.9 L2839.0,810.5 L2837.5,812.0 L2836.0,810.6 L2834.5,810.9 L2833.0,809.8 L2831.5,810.9 L2830.0,811.5 L2828.5,813.3 L2827.0,815.4 L2825.5,813.2 L2824.0,815.3 L2822.5,813.3 L2821.0,814.6 L2819.5,809.1 L2818.0,805.0 L2816.5,789.5 L2815.0,777.7 L2813.5,765.1 L2812.0,753.0 L2810.5,753.3 L2809.0,753.9 L2807.5,754.0 L2806.0,754.5 L2804.5,755.1 L2803.0,755.6 L2801.5,755.9 L2800.0,757.1 L2798.5,767.9 L2797.0,779.2 L2795.5,787.6 L2794.0,789.9 L2792.5,791.0 L2791.0,793.9 L2789.5,795.1 L2788.0,795.4 L2786.5,794.5 L2785.0,794.2 L2783.5,794.5 L2782.0,795.1 L2780.5,797.7 L2779.0,798.0 L2777.5,798.0 L2776.0,796.6 L2774.5,796.5 L2773.0,798.9 L2771.5,801.4 L2770.0,802.1 L2768.5,800.6 L2767.0,800.4 L2765.5,800.0 L2764.0,801.2 L2762.5,801.5 L2761.0,803.5 L2759.5,803.3 L2758.0,801.0 L2756.5,798.3 L2755.0,797.3 L2753.5,798.2 L2752.0,799.5 L2750.5,798.1 L2749.0,798.8 L2747.5,797.2 L2746.0,799.0 L2744.5,796.3 L2743.0,797.3 L2741.5,797.2 L2740.0,798.6 L2738.5,796.9 L2737.0,796.9 L2735.5,795.0 L2734.0,795.1 L2732.5,793.3 L2731.0,792.8 L2729.5,794.0 L2728.0,792.9 L2726.5,793.2 L2725.0,792.2 L2723.5,793.7 L2722.0,795.0 L2720.5,793.0 L2719.0,792.6 L2717.5,790.8 L2716.0,790.8 L2714.5,789.1 L2713.0,783.1 L2711.5,773.7 L2710.0,765.2 L2708.5,765.6 L2707.0,765.9 L2705.5,764.8 L2704.0,764.1 L2702.5,764.8 L2701.0,765.5 L2699.5,765.6 L2698.0,765.3 L2696.5,764.6 L2695.0,764.5 L2693.5,764.0 L2692.0,764.8 L2690.5,764.7 L2689.0,765.6 L2687.5,764.7 L2686.0,765.2 L2684.5,765.1 L2683.0,765.9 L2681.5,766.4 L2680.0,765.3 L2678.5,765.5 L2677.0,765.3 L2675.5,766.4 L2674.0,766.6 L2672.5,765.7 L2671.0,765.0 L2669.5,765.0 L2668.0,765.0 L2666.5,764.6 L2665.0,764.2 L2663.5,764.5 L2662.0,764.7 L2660.5,764.7 L2659.0,764.4 L2657.5,764.8 L2656.0,764.2 L2654.5,764.9 L2653.0,764.3 L2651.5,764.7 L2650.0,764.0 L2648.5,764.2 L2647.0,764.0 L2645.5,764.3 L2644.0,763.9 L2642.5,768.9 L2641.0,773.5 L2639.5,780.0 L2638.0,790.7 L2636.5,800.6 L2635.0,817.3 L2633.5,834.6 L2632.0,853.0 L2630.5,857.5 L2629.0,857.9 L2627.5,856.1 L2626.0,849.3 L2624.5,842.9 L2623.0,829.9 L2621.5,812.5 L2620.0,794.4 L2618.5,771.1 L2617.0,748.1 L2615.5,740.4 L2614.0,740.4 L2612.5,740.3 L2611.0,740.4 L2609.5,740.5 L2608.0,740.4 L2606.5,740.4 L2605.0,740.4 L2603.5,740.4 L2602.0,740.4 L2600.5,740.3 L2599.0,740.9 L2597.5,741.8 L2596.0,742.5 L2594.5,743.2 L2593.0,743.8 L2591.5,744.4 L2590.0,744.8 L2588.5,744.8 L2587.0,744.6 L2585.5,744.6 L2584.0,744.2 L2582.5,744.1 L2581.0,743.9 L2579.5,743.8 L2578.0,743.6 L2576.5,743.3 L2575.0,743.0 L2573.5,742.7 L2572.0,742.4 L2570.5,742.3 L2569.0,742.2 L2567.5,742.2 L2566.0,742.1 L2564.5,742.2 L2563.0,742.2 L2561.5,742.3 L2560.0,742.1 L2558.5,742.2 L2557.0,742.0 L2555.5,742.0 L2554.0,742.0 L2552.5,742.0 L2551.0,742.0 L2549.5,742.0 L2548.0,742.0 L2546.5,742.0 L2545.0,741.9 L2543.5,741.8 L2542.0,741.8 L2540.5,741.8 L2539.0,741.8 L2537.5,741.8 L2536.0,741.8 L2534.5,741.8 L2533.0,741.7 L2531.5,741.9 L2530.0,741.9 L2528.5,741.8 L2527.0,741.7 L2525.5,741.6 L2524.0,741.5 L2522.5,741.6 L2521.0,741.6 L2519.5,741.6 L2518.0,741.5 L2516.5,741.5 L2515.0,741.5 L2513.5,741.6 L2512.0,741.5 L2510.5,741.5 L2509.0,741.3 L2507.5,741.3 L2506.0,741.3 L2504.5,741.4 L2503.0,741.4 L2501.5,741.4 L2500.0,741.3 L2498.5,741.4 L2497.0,741.3 L2495.5,741.3 L2494.0,741.3 L2492.5,741.4 L2491.0,741.5 L2489.5,741.5 L2488.0,741.4 L2486.5,741.5 L2485.0,741.5 L2483.5,741.4 L2482.0,741.5 L2480.5,741.5 L2479.0,741.6 L2477.5,741.6 L2476.0,741.5 L2474.5,741.6 L2473.0,741.6 L2471.5,741.6 L2470.0,741.7 L2468.5,741.7 L2467.0,741.7 L2465.5,741.6 L2464.0,741.6 L2462.5,741.7 L2461.0,741.7 L2459.5,741.7 L2458.0,741.8 L2456.5,741.7 L2455.0,741.7 L2453.5,741.7 L2452.0,741.8 L2450.5,741.8 L2449.0,741.9 L2447.5,741.9 L2446.0,742.0 L2444.5,741.9 L2443.0,742.1 L2441.5,742.2 L2440.0,742.4 L2438.5,742.2 L2437.0,741.9 L2435.5,741.7 L2434.0,741.5 L2432.5,741.3 L2431.0,740.9 L2429.5,740.7 L2428.0,740.4 Z" fill="#5a5862"/>
<g opacity="0.92">
<rect x="2432.7" y="664" width="168.0" height="142" rx="0" fill="#237c5f" />
<clipPath id="n7"><rect x="2432.7" y="664" width="168.0" height="142"/></clipPath>
<path d="M2428.0,736.6 L2429.5,736.3 L2431.0,736.1 L2432.5,735.7 L2434.0,735.5 L2435.5,735.3 L2437.0,735.1 L2438.5,734.8 L2440.0,734.6 L2441.5,734.8 L2443.0,734.9 L2444.5,735.1 L2446.0,735.0 L2447.5,735.1 L2449.0,735.1 L2450.5,735.2 L2452.0,735.2 L2453.5,735.3 L2455.0,735.3 L2456.5,735.3 L2458.0,735.2 L2459.5,735.3 L2461.0,735.3 L2462.5,735.3 L2464.0,735.4 L2465.5,735.4 L2467.0,735.3 L2468.5,735.3 L2470.0,735.3 L2471.5,735.4 L2473.0,735.4 L2474.5,735.4 L2476.0,735.5 L2477.5,735.4 L2479.0,735.4 L2480.5,735.5 L2482.0,735.5 L2483.5,735.6 L2485.0,735.5 L2486.5,735.5 L2488.0,735.6 L2489.5,735.5 L2491.0,735.5 L2492.5,735.6 L2494.0,735.7 L2495.5,735.7 L2497.0,735.7 L2498.5,735.6 L2500.0,735.7 L2501.5,735.6 L2503.0,735.6 L2504.5,735.6 L2506.0,735.7 L2507.5,735.7 L2509.0,735.7 L2510.5,735.5 L2512.0,735.5 L2513.5,735.4 L2515.0,735.5 L2516.5,735.5 L2518.0,735.5 L2519.5,735.4 L2521.0,735.4 L2522.5,735.4 L2524.0,735.5 L2525.5,735.4 L2527.0,735.3 L2528.5,735.2 L2530.0,735.1 L2531.5,735.1 L2533.0,735.3 L2534.5,735.2 L2536.0,735.2 L2537.5,735.2 L2539.0,735.2 L2540.5,735.2 L2542.0,735.2 L2543.5,735.2 L2545.0,735.1 L2546.5,735.0 L2548.0,735.0 L2549.5,735.0 L2551.0,735.0 L2552.5,735.0 L2554.0,735.0 L2555.5,735.0 L2557.0,735.0 L2558.5,734.8 L2560.0,734.9 L2561.5,734.7 L2563.0,734.8 L2564.5,734.8 L2566.0,734.9 L2567.5,734.8 L2569.0,734.8 L2570.5,734.7 L2572.0,734.6 L2573.5,734.3 L2575.0,734.0 L2576.5,733.7 L2578.0,733.4 L2579.5,733.2 L2581.0,733.1 L2582.5,732.9 L2584.0,732.8 L2585.5,732.4 L2587.0,732.4 L2588.5,732.2 L2590.0,732.2 L2591.5,732.6 L2593.0,733.2 L2594.5,733.8 L2596.0,734.5 L2597.5,735.2 L2599.0,736.1 L2600.5,736.7 L2602.0,736.6 L2603.5,736.6 L2605.0,736.6 L2606.5,736.6 L2608.0,736.6 L2609.5,736.5 L2611.0,736.6 L2612.5,736.7 L2614.0,736.6 L2615.5,736.6 L2617.0,728.9 L2618.5,705.9 L2620.0,682.6 L2621.5,664.5 L2623.0,647.1 L2624.5,634.1 L2626.0,627.7 L2627.5,620.9 L2629.0,619.1 L2630.5,619.5 L2632.0,624.0 L2633.5,642.4 L2635.0,659.7 L2636.5,676.4 L2638.0,686.3 L2639.5,697.0 L2641.0,703.5 L2642.5,708.1 L2644.0,713.1 L2645.5,712.7 L2647.0,713.0 L2648.5,712.8 L2650.0,713.0 L2651.5,712.3 L2653.0,712.7 L2654.5,712.1 L2656.0,712.8 L2657.5,712.2 L2659.0,712.6 L2660.5,712.3 L2662.0,712.3 L2663.5,712.5 L2665.0,712.8 L2666.5,712.4 L2668.0,712.0 L2669.5,712.0 L2671.0,712.0 L2672.5,711.3 L2674.0,710.4 L2675.5,710.6 L2677.0,711.7 L2678.5,711.5 L2680.0,711.7 L2681.5,710.6 L2683.0,711.1 L2684.5,711.9 L2686.0,711.8 L2687.5,712.3 L2689.0,711.4 L2690.5,712.3 L2692.0,712.2 L2693.5,713.0 L2695.0,712.5 L2696.5,712.4 L2698.0,711.7 L2699.5,711.4 L2701.0,711.5 L2702.5,712.2 L2704.0,712.9 L2705.5,712.2 L2707.0,711.1 L2708.5,711.4 L2710.0,711.8 L2711.5,703.3 L2713.0,693.9 L2714.5,687.9 L2716.0,686.2 L2717.5,686.2 L2719.0,684.4 L2720.5,684.0 L2722.0,682.0 L2723.5,683.3 L2725.0,684.8 L2726.5,683.8 L2728.0,684.1 L2729.5,683.0 L2731.0,684.2 L2732.5,683.7 L2734.0,681.9 L2735.5,682.0 L2737.0,680.1 L2738.5,680.1 L2740.0,678.4 L2741.5,679.8 L2743.0,679.7 L2744.5,680.7 L2746.0,678.0 L2747.5,679.8 L2749.0,678.2 L2750.5,678.9 L2752.0,677.5 L2753.5,678.8 L2755.0,679.7 L2756.5,678.7 L2758.0,676.0 L2759.5,673.7 L2761.0,673.5 L2762.5,675.5 L2764.0,675.8 L2765.5,677.0 L2767.0,676.6 L2768.5,676.4 L2770.0,674.9 L2771.5,675.6 L2773.0,678.1 L2774.5,680.5 L2776.0,680.4 L2777.5,679.0 L2779.0,679.0 L2780.5,679.3 L2782.0,681.9 L2783.5,682.5 L2785.0,682.8 L2786.5,682.5 L2788.0,681.6 L2789.5,681.9 L2791.0,683.1 L2792.5,686.0 L2794.0,687.1 L2795.5,689.4 L2797.0,697.8 L2798.5,709.1 L2800.0,719.9 L2801.5,721.1 L2803.0,721.4 L2804.5,721.9 L2806.0,722.5 L2807.5,723.0 L2809.0,723.1 L2810.5,723.7 L2812.0,724.0 L2813.5,711.9 L2815.0,699.3 L2816.5,687.5 L2818.0,672.0 L2819.5,667.9 L2821.0,662.4 L2822.5,663.7 L2824.0,661.7 L2825.5,663.8 L2827.0,661.6 L2828.5,663.7 L2830.0,665.5 L2831.5,666.1 L2833.0,667.2 L2834.5,666.1 L2836.0,666.4 L2837.5,665.0 L2839.0,666.5 L2840.5,673.1 L2842.0,684.8 L2843.5,697.0 L2845.0,706.9 L2846.5,714.7 L2848.0,714.9 L2849.5,715.4 L2851.0,715.6 L2852.5,715.5 L2854.0,715.5 L2855.5,716.2 L2857.0,716.3 L2858.5,716.5 L2860.0,716.4 L2861.5,716.5 L2863.0,716.7 L2864.5,717.0 L2866.0,717.1 L2867.5,717.6 L2869.0,716.9 L2870.5,716.7 L2872.0,716.6 L2873.5,716.7 L2875.0,717.2 L2876.5,716.7 L2878.0,717.2 L2879.5,716.9 L2881.0,717.6 L2882.5,717.9 L2884.0,718.3 L2885.5,718.4 L2887.0,718.2 L2888.5,718.5 L2890.0,718.6 L2891.5,719.0 L2893.0,718.5 L2894.5,718.1 L2896.0,717.8 L2897.5,717.5 L2899.0,718.1 L2900.5,718.8 L2902.0,718.9 L2903.5,718.7 L2905.0,718.1 L2906.5,718.9 L2908.0,719.4 L2909.5,692.1 L2911.0,663.3 L2912.5,659.5 L2914.0,655.0 L2915.5,653.5 L2917.0,658.8 L2918.5,664.4 L2920.0,668.7 L2921.5,670.8 L2923.0,670.3 L2924.5,669.1 L2926.0,668.7 L2927.5,666.2 L2929.0,664.5 L2930.5,664.9 L2932.0,663.3 L2933.5,665.7 L2935.0,667.1 L2936.5,671.8 L2938.0,673.8 L2939.5,673.7 L2941.0,673.0 L2942.5,674.4 L2944.0,676.1 L2945.5,678.6 L2947.0,680.0 L2948.5,679.5 L2950.0,680.4 L2951.5,680.5 L2953.0,680.9 L2954.5,679.2 L2956.0,679.5 L2957.5,680.2 L2959.0,681.2 L2960.5,678.9 L2962.0,678.9 L2963.5,678.3 L2965.0,679.6 L2966.5,681.5 L2968.0,682.4 L2969.5,683.0 L2971.0,681.5 L2972.5,681.3 L2974.0,679.6 L2975.5,680.9 L2977.0,682.1 L2978.5,683.4 L2980.0,683.5 L2981.5,681.7 L2983.0,682.5 L2984.5,682.3 L2986.0,682.7 L2987.5,681.1 L2989.0,679.9 L2990.5,680.2 L2992.0,681.3 L2993.5,680.5 L2995.0,680.3 L2996.5,679.0 L2998.0,681.5 L2999.5,681.1 L3001.0,681.7 L3002.5,681.7 L3004.0,681.4 L3005.5,680.8 L3007.0,680.7 L3008.5,682.8 L3010.0,685.6 L3011.5,684.9 L3013.0,683.2 L3014.5,681.6 L3016.0,682.7 L3017.5,682.4 L3019.0,683.3 L3020.5,682.4 L3022.0,685.1 L3022.0,791.9 L3020.5,794.6 L3019.0,793.7 L3017.5,794.6 L3016.0,794.3 L3014.5,795.4 L3013.0,793.8 L3011.5,792.1 L3010.0,791.4 L3008.5,794.2 L3007.0,796.3 L3005.5,796.2 L3004.0,795.6 L3002.5,795.3 L3001.0,795.3 L2999.5,795.9 L2998.0,795.5 L2996.5,798.0 L2995.0,796.7 L2993.5,796.5 L2992.0,795.7 L2990.5,796.8 L2989.0,797.1 L2987.5,795.9 L2986.0,794.3 L2984.5,794.7 L2983.0,794.5 L2981.5,795.3 L2980.0,793.5 L2978.5,793.6 L2977.0,794.9 L2975.5,796.1 L2974.0,797.4 L2972.5,795.7 L2971.0,795.5 L2969.5,794.0 L2968.0,794.6 L2966.5,795.5 L2965.0,797.4 L2963.5,798.7 L2962.0,798.1 L2960.5,798.1 L2959.0,795.8 L2957.5,796.8 L2956.0,797.5 L2954.5,797.8 L2953.0,796.1 L2951.5,796.5 L2950.0,796.6 L2948.5,797.5 L2947.0,797.0 L2945.5,798.4 L2944.0,800.9 L2942.5,802.6 L2941.0,804.0 L2939.5,803.3 L2938.0,803.2 L2936.5,805.2 L2935.0,809.9 L2933.5,811.3 L2932.0,813.7 L2930.5,812.1 L2929.0,812.5 L2927.5,810.8 L2926.0,808.3 L2924.5,807.9 L2923.0,806.7 L2921.5,806.2 L2920.0,808.3 L2918.5,812.6 L2917.0,818.2 L2915.5,823.5 L2914.0,822.0 L2912.5,817.5 L2911.0,813.7 L2909.5,784.9 L2908.0,757.6 L2906.5,758.1 L2905.0,758.9 L2903.5,758.3 L2902.0,758.1 L2900.5,758.2 L2899.0,758.9 L2897.5,759.5 L2896.0,759.2 L2894.5,758.9 L2893.0,758.5 L2891.5,758.0 L2890.0,758.4 L2888.5,758.5 L2887.0,758.8 L2885.5,758.6 L2884.0,758.7 L2882.5,759.1 L2881.0,759.4 L2879.5,760.1 L2878.0,759.8 L2876.5,760.3 L2875.0,759.8 L2873.5,760.3 L2872.0,760.4 L2870.5,760.3 L2869.0,760.1 L2867.5,759.4 L2866.0,759.9 L2864.5,760.0 L2863.0,760.3 L2861.5,760.5 L2860.0,760.6 L2858.5,760.5 L2857.0,760.7 L2855.5,760.8 L2854.0,761.5 L2852.5,761.5 L2851.0,761.4 L2849.5,761.6 L2848.0,762.1 L2846.5,762.3 L2845.0,770.1 L2843.5,780.0 L2842.0,792.2 L2840.5,803.9 L2839.0,810.5 L2837.5,812.0 L2836.0,810.6 L2834.5,810.9 L2833.0,809.8 L2831.5,810.9 L2830.0,811.5 L2828.5,813.3 L2827.0,815.4 L2825.5,813.2 L2824.0,815.3 L2822.5,813.3 L2821.0,814.6 L2819.5,809.1 L2818.0,805.0 L2816.5,789.5 L2815.0,777.7 L2813.5,765.1 L2812.0,753.0 L2810.5,753.3 L2809.0,753.9 L2807.5,754.0 L2806.0,754.5 L2804.5,755.1 L2803.0,755.6 L2801.5,755.9 L2800.0,757.1 L2798.5,767.9 L2797.0,779.2 L2795.5,787.6 L2794.0,789.9 L2792.5,791.0 L2791.0,793.9 L2789.5,795.1 L2788.0,795.4 L2786.5,794.5 L2785.0,794.2 L2783.5,794.5 L2782.0,795.1 L2780.5,797.7 L2779.0,798.0 L2777.5,798.0 L2776.0,796.6 L2774.5,796.5 L2773.0,798.9 L2771.5,801.4 L2770.0,802.1 L2768.5,800.6 L2767.0,800.4 L2765.5,800.0 L2764.0,801.2 L2762.5,801.5 L2761.0,803.5 L2759.5,803.3 L2758.0,801.0 L2756.5,798.3 L2755.0,797.3 L2753.5,798.2 L2752.0,799.5 L2750.5,798.1 L2749.0,798.8 L2747.5,797.2 L2746.0,799.0 L2744.5,796.3 L2743.0,797.3 L2741.5,797.2 L2740.0,798.6 L2738.5,796.9 L2737.0,796.9 L2735.5,795.0 L2734.0,795.1 L2732.5,793.3 L2731.0,792.8 L2729.5,794.0 L2728.0,792.9 L2726.5,793.2 L2725.0,792.2 L2723.5,793.7 L2722.0,795.0 L2720.5,793.0 L2719.0,792.6 L2717.5,790.8 L2716.0,790.8 L2714.5,789.1 L2713.0,783.1 L2711.5,773.7 L2710.0,765.2 L2708.5,765.6 L2707.0,765.9 L2705.5,764.8 L2704.0,764.1 L2702.5,764.8 L2701.0,765.5 L2699.5,765.6 L2698.0,765.3 L2696.5,764.6 L2695.0,764.5 L2693.5,764.0 L2692.0,764.8 L2690.5,764.7 L2689.0,765.6 L2687.5,764.7 L2686.0,765.2 L2684.5,765.1 L2683.0,765.9 L2681.5,766.4 L2680.0,765.3 L2678.5,765.5 L2677.0,765.3 L2675.5,766.4 L2674.0,766.6 L2672.5,765.7 L2671.0,765.0 L2669.5,765.0 L2668.0,765.0 L2666.5,764.6 L2665.0,764.2 L2663.5,764.5 L2662.0,764.7 L2660.5,764.7 L2659.0,764.4 L2657.5,764.8 L2656.0,764.2 L2654.5,764.9 L2653.0,764.3 L2651.5,764.7 L2650.0,764.0 L2648.5,764.2 L2647.0,764.0 L2645.5,764.3 L2644.0,763.9 L2642.5,768.9 L2641.0,773.5 L2639.5,780.0 L2638.0,790.7 L2636.5,800.6 L2635.0,817.3 L2633.5,834.6 L2632.0,853.0 L2630.5,857.5 L2629.0,857.9 L2627.5,856.1 L2626.0,849.3 L2624.5,842.9 L2623.0,829.9 L2621.5,812.5 L2620.0,794.4 L2618.5,771.1 L2617.0,748.1 L2615.5,740.4 L2614.0,740.4 L2612.5,740.3 L2611.0,740.4 L2609.5,740.5 L2608.0,740.4 L2606.5,740.4 L2605.0,740.4 L2603.5,740.4 L2602.0,740.4 L2600.5,740.3 L2599.0,740.9 L2597.5,741.8 L2596.0,742.5 L2594.5,743.2 L2593.0,743.8 L2591.5,744.4 L2590.0,744.8 L2588.5,744.8 L2587.0,744.6 L2585.5,744.6 L2584.0,744.2 L2582.5,744.1 L2581.0,743.9 L2579.5,743.8 L2578.0,743.6 L2576.5,743.3 L2575.0,743.0 L2573.5,742.7 L2572.0,742.4 L2570.5,742.3 L2569.0,742.2 L2567.5,742.2 L2566.0,742.1 L2564.5,742.2 L2563.0,742.2 L2561.5,742.3 L2560.0,742.1 L2558.5,742.2 L2557.0,742.0 L2555.5,742.0 L2554.0,742.0 L2552.5,742.0 L2551.0,742.0 L2549.5,742.0 L2548.0,742.0 L2546.5,742.0 L2545.0,741.9 L2543.5,741.8 L2542.0,741.8 L2540.5,741.8 L2539.0,741.8 L2537.5,741.8 L2536.0,741.8 L2534.5,741.8 L2533.0,741.7 L2531.5,741.9 L2530.0,741.9 L2528.5,741.8 L2527.0,741.7 L2525.5,741.6 L2524.0,741.5 L2522.5,741.6 L2521.0,741.6 L2519.5,741.6 L2518.0,741.5 L2516.5,741.5 L2515.0,741.5 L2513.5,741.6 L2512.0,741.5 L2510.5,741.5 L2509.0,741.3 L2507.5,741.3 L2506.0,741.3 L2504.5,741.4 L2503.0,741.4 L2501.5,741.4 L2500.0,741.3 L2498.5,741.4 L2497.0,741.3 L2495.5,741.3 L2494.0,741.3 L2492.5,741.4 L2491.0,741.5 L2489.5,741.5 L2488.0,741.4 L2486.5,741.5 L2485.0,741.5 L2483.5,741.4 L2482.0,741.5 L2480.5,741.5 L2479.0,741.6 L2477.5,741.6 L2476.0,741.5 L2474.5,741.6 L2473.0,741.6 L2471.5,741.6 L2470.0,741.7 L2468.5,741.7 L2467.0,741.7 L2465.5,741.6 L2464.0,741.6 L2462.5,741.7 L2461.0,741.7 L2459.5,741.7 L2458.0,741.8 L2456.5,741.7 L2455.0,741.7 L2453.5,741.7 L2452.0,741.8 L2450.5,741.8 L2449.0,741.9 L2447.5,741.9 L2446.0,742.0 L2444.5,741.9 L2443.0,742.1 L2441.5,742.2 L2440.0,742.4 L2438.5,742.2 L2437.0,741.9 L2435.5,741.7 L2434.0,741.5 L2432.5,741.3 L2431.0,740.9 L2429.5,740.7 L2428.0,740.4 Z" fill="#6cae95" clip-path="url(#n7)"/>
<rect x="2600.7" y="664" width="422.7000000000003" height="142" rx="0" fill="#705de7" />
<clipPath id="n8"><rect x="2600.7" y="664" width="422.7000000000003" height="142"/></clipPath>
<path d="M2428.0,736.6 L2429.5,736.3 L2431.0,736.1 L2432.5,735.7 L2434.0,735.5 L2435.5,735.3 L2437.0,735.1 L2438.5,734.8 L2440.0,734.6 L2441.5,734.8 L2443.0,734.9 L2444.5,735.1 L2446.0,735.0 L2447.5,735.1 L2449.0,735.1 L2450.5,735.2 L2452.0,735.2 L2453.5,735.3 L2455.0,735.3 L2456.5,735.3 L2458.0,735.2 L2459.5,735.3 L2461.0,735.3 L2462.5,735.3 L2464.0,735.4 L2465.5,735.4 L2467.0,735.3 L2468.5,735.3 L2470.0,735.3 L2471.5,735.4 L2473.0,735.4 L2474.5,735.4 L2476.0,735.5 L2477.5,735.4 L2479.0,735.4 L2480.5,735.5 L2482.0,735.5 L2483.5,735.6 L2485.0,735.5 L2486.5,735.5 L2488.0,735.6 L2489.5,735.5 L2491.0,735.5 L2492.5,735.6 L2494.0,735.7 L2495.5,735.7 L2497.0,735.7 L2498.5,735.6 L2500.0,735.7 L2501.5,735.6 L2503.0,735.6 L2504.5,735.6 L2506.0,735.7 L2507.5,735.7 L2509.0,735.7 L2510.5,735.5 L2512.0,735.5 L2513.5,735.4 L2515.0,735.5 L2516.5,735.5 L2518.0,735.5 L2519.5,735.4 L2521.0,735.4 L2522.5,735.4 L2524.0,735.5 L2525.5,735.4 L2527.0,735.3 L2528.5,735.2 L2530.0,735.1 L2531.5,735.1 L2533.0,735.3 L2534.5,735.2 L2536.0,735.2 L2537.5,735.2 L2539.0,735.2 L2540.5,735.2 L2542.0,735.2 L2543.5,735.2 L2545.0,735.1 L2546.5,735.0 L2548.0,735.0 L2549.5,735.0 L2551.0,735.0 L2552.5,735.0 L2554.0,735.0 L2555.5,735.0 L2557.0,735.0 L2558.5,734.8 L2560.0,734.9 L2561.5,734.7 L2563.0,734.8 L2564.5,734.8 L2566.0,734.9 L2567.5,734.8 L2569.0,734.8 L2570.5,734.7 L2572.0,734.6 L2573.5,734.3 L2575.0,734.0 L2576.5,733.7 L2578.0,733.4 L2579.5,733.2 L2581.0,733.1 L2582.5,732.9 L2584.0,732.8 L2585.5,732.4 L2587.0,732.4 L2588.5,732.2 L2590.0,732.2 L2591.5,732.6 L2593.0,733.2 L2594.5,733.8 L2596.0,734.5 L2597.5,735.2 L2599.0,736.1 L2600.5,736.7 L2602.0,736.6 L2603.5,736.6 L2605.0,736.6 L2606.5,736.6 L2608.0,736.6 L2609.5,736.5 L2611.0,736.6 L2612.5,736.7 L2614.0,736.6 L2615.5,736.6 L2617.0,728.9 L2618.5,705.9 L2620.0,682.6 L2621.5,664.5 L2623.0,647.1 L2624.5,634.1 L2626.0,627.7 L2627.5,620.9 L2629.0,619.1 L2630.5,619.5 L2632.0,624.0 L2633.5,642.4 L2635.0,659.7 L2636.5,676.4 L2638.0,686.3 L2639.5,697.0 L2641.0,703.5 L2642.5,708.1 L2644.0,713.1 L2645.5,712.7 L2647.0,713.0 L2648.5,712.8 L2650.0,713.0 L2651.5,712.3 L2653.0,712.7 L2654.5,712.1 L2656.0,712.8 L2657.5,712.2 L2659.0,712.6 L2660.5,712.3 L2662.0,712.3 L2663.5,712.5 L2665.0,712.8 L2666.5,712.4 L2668.0,712.0 L2669.5,712.0 L2671.0,712.0 L2672.5,711.3 L2674.0,710.4 L2675.5,710.6 L2677.0,711.7 L2678.5,711.5 L2680.0,711.7 L2681.5,710.6 L2683.0,711.1 L2684.5,711.9 L2686.0,711.8 L2687.5,712.3 L2689.0,711.4 L2690.5,712.3 L2692.0,712.2 L2693.5,713.0 L2695.0,712.5 L2696.5,712.4 L2698.0,711.7 L2699.5,711.4 L2701.0,711.5 L2702.5,712.2 L2704.0,712.9 L2705.5,712.2 L2707.0,711.1 L2708.5,711.4 L2710.0,711.8 L2711.5,703.3 L2713.0,693.9 L2714.5,687.9 L2716.0,686.2 L2717.5,686.2 L2719.0,684.4 L2720.5,684.0 L2722.0,682.0 L2723.5,683.3 L2725.0,684.8 L2726.5,683.8 L2728.0,684.1 L2729.5,683.0 L2731.0,684.2 L2732.5,683.7 L2734.0,681.9 L2735.5,682.0 L2737.0,680.1 L2738.5,680.1 L2740.0,678.4 L2741.5,679.8 L2743.0,679.7 L2744.5,680.7 L2746.0,678.0 L2747.5,679.8 L2749.0,678.2 L2750.5,678.9 L2752.0,677.5 L2753.5,678.8 L2755.0,679.7 L2756.5,678.7 L2758.0,676.0 L2759.5,673.7 L2761.0,673.5 L2762.5,675.5 L2764.0,675.8 L2765.5,677.0 L2767.0,676.6 L2768.5,676.4 L2770.0,674.9 L2771.5,675.6 L2773.0,678.1 L2774.5,680.5 L2776.0,680.4 L2777.5,679.0 L2779.0,679.0 L2780.5,679.3 L2782.0,681.9 L2783.5,682.5 L2785.0,682.8 L2786.5,682.5 L2788.0,681.6 L2789.5,681.9 L2791.0,683.1 L2792.5,686.0 L2794.0,687.1 L2795.5,689.4 L2797.0,697.8 L2798.5,709.1 L2800.0,719.9 L2801.5,721.1 L2803.0,721.4 L2804.5,721.9 L2806.0,722.5 L2807.5,723.0 L2809.0,723.1 L2810.5,723.7 L2812.0,724.0 L2813.5,711.9 L2815.0,699.3 L2816.5,687.5 L2818.0,672.0 L2819.5,667.9 L2821.0,662.4 L2822.5,663.7 L2824.0,661.7 L2825.5,663.8 L2827.0,661.6 L2828.5,663.7 L2830.0,665.5 L2831.5,666.1 L2833.0,667.2 L2834.5,666.1 L2836.0,666.4 L2837.5,665.0 L2839.0,666.5 L2840.5,673.1 L2842.0,684.8 L2843.5,697.0 L2845.0,706.9 L2846.5,714.7 L2848.0,714.9 L2849.5,715.4 L2851.0,715.6 L2852.5,715.5 L2854.0,715.5 L2855.5,716.2 L2857.0,716.3 L2858.5,716.5 L2860.0,716.4 L2861.5,716.5 L2863.0,716.7 L2864.5,717.0 L2866.0,717.1 L2867.5,717.6 L2869.0,716.9 L2870.5,716.7 L2872.0,716.6 L2873.5,716.7 L2875.0,717.2 L2876.5,716.7 L2878.0,717.2 L2879.5,716.9 L2881.0,717.6 L2882.5,717.9 L2884.0,718.3 L2885.5,718.4 L2887.0,718.2 L2888.5,718.5 L2890.0,718.6 L2891.5,719.0 L2893.0,718.5 L2894.5,718.1 L2896.0,717.8 L2897.5,717.5 L2899.0,718.1 L2900.5,718.8 L2902.0,718.9 L2903.5,718.7 L2905.0,718.1 L2906.5,718.9 L2908.0,719.4 L2909.5,692.1 L2911.0,663.3 L2912.5,659.5 L2914.0,655.0 L2915.5,653.5 L2917.0,658.8 L2918.5,664.4 L2920.0,668.7 L2921.5,670.8 L2923.0,670.3 L2924.5,669.1 L2926.0,668.7 L2927.5,666.2 L2929.0,664.5 L2930.5,664.9 L2932.0,663.3 L2933.5,665.7 L2935.0,667.1 L2936.5,671.8 L2938.0,673.8 L2939.5,673.7 L2941.0,673.0 L2942.5,674.4 L2944.0,676.1 L2945.5,678.6 L2947.0,680.0 L2948.5,679.5 L2950.0,680.4 L2951.5,680.5 L2953.0,680.9 L2954.5,679.2 L2956.0,679.5 L2957.5,680.2 L2959.0,681.2 L2960.5,678.9 L2962.0,678.9 L2963.5,678.3 L2965.0,679.6 L2966.5,681.5 L2968.0,682.4 L2969.5,683.0 L2971.0,681.5 L2972.5,681.3 L2974.0,679.6 L2975.5,680.9 L2977.0,682.1 L2978.5,683.4 L2980.0,683.5 L2981.5,681.7 L2983.0,682.5 L2984.5,682.3 L2986.0,682.7 L2987.5,681.1 L2989.0,679.9 L2990.5,680.2 L2992.0,681.3 L2993.5,680.5 L2995.0,680.3 L2996.5,679.0 L2998.0,681.5 L2999.5,681.1 L3001.0,681.7 L3002.5,681.7 L3004.0,681.4 L3005.5,680.8 L3007.0,680.7 L3008.5,682.8 L3010.0,685.6 L3011.5,684.9 L3013.0,683.2 L3014.5,681.6 L3016.0,682.7 L3017.5,682.4 L3019.0,683.3 L3020.5,682.4 L3022.0,685.1 L3022.0,791.9 L3020.5,794.6 L3019.0,793.7 L3017.5,794.6 L3016.0,794.3 L3014.5,795.4 L3013.0,793.8 L3011.5,792.1 L3010.0,791.4 L3008.5,794.2 L3007.0,796.3 L3005.5,796.2 L3004.0,795.6 L3002.5,795.3 L3001.0,795.3 L2999.5,795.9 L2998.0,795.5 L2996.5,798.0 L2995.0,796.7 L2993.5,796.5 L2992.0,795.7 L2990.5,796.8 L2989.0,797.1 L2987.5,795.9 L2986.0,794.3 L2984.5,794.7 L2983.0,794.5 L2981.5,795.3 L2980.0,793.5 L2978.5,793.6 L2977.0,794.9 L2975.5,796.1 L2974.0,797.4 L2972.5,795.7 L2971.0,795.5 L2969.5,794.0 L2968.0,794.6 L2966.5,795.5 L2965.0,797.4 L2963.5,798.7 L2962.0,798.1 L2960.5,798.1 L2959.0,795.8 L2957.5,796.8 L2956.0,797.5 L2954.5,797.8 L2953.0,796.1 L2951.5,796.5 L2950.0,796.6 L2948.5,797.5 L2947.0,797.0 L2945.5,798.4 L2944.0,800.9 L2942.5,802.6 L2941.0,804.0 L2939.5,803.3 L2938.0,803.2 L2936.5,805.2 L2935.0,809.9 L2933.5,811.3 L2932.0,813.7 L2930.5,812.1 L2929.0,812.5 L2927.5,810.8 L2926.0,808.3 L2924.5,807.9 L2923.0,806.7 L2921.5,806.2 L2920.0,808.3 L2918.5,812.6 L2917.0,818.2 L2915.5,823.5 L2914.0,822.0 L2912.5,817.5 L2911.0,813.7 L2909.5,784.9 L2908.0,757.6 L2906.5,758.1 L2905.0,758.9 L2903.5,758.3 L2902.0,758.1 L2900.5,758.2 L2899.0,758.9 L2897.5,759.5 L2896.0,759.2 L2894.5,758.9 L2893.0,758.5 L2891.5,758.0 L2890.0,758.4 L2888.5,758.5 L2887.0,758.8 L2885.5,758.6 L2884.0,758.7 L2882.5,759.1 L2881.0,759.4 L2879.5,760.1 L2878.0,759.8 L2876.5,760.3 L2875.0,759.8 L2873.5,760.3 L2872.0,760.4 L2870.5,760.3 L2869.0,760.1 L2867.5,759.4 L2866.0,759.9 L2864.5,760.0 L2863.0,760.3 L2861.5,760.5 L2860.0,760.6 L2858.5,760.5 L2857.0,760.7 L2855.5,760.8 L2854.0,761.5 L2852.5,761.5 L2851.0,761.4 L2849.5,761.6 L2848.0,762.1 L2846.5,762.3 L2845.0,770.1 L2843.5,780.0 L2842.0,792.2 L2840.5,803.9 L2839.0,810.5 L2837.5,812.0 L2836.0,810.6 L2834.5,810.9 L2833.0,809.8 L2831.5,810.9 L2830.0,811.5 L2828.5,813.3 L2827.0,815.4 L2825.5,813.2 L2824.0,815.3 L2822.5,813.3 L2821.0,814.6 L2819.5,809.1 L2818.0,805.0 L2816.5,789.5 L2815.0,777.7 L2813.5,765.1 L2812.0,753.0 L2810.5,753.3 L2809.0,753.9 L2807.5,754.0 L2806.0,754.5 L2804.5,755.1 L2803.0,755.6 L2801.5,755.9 L2800.0,757.1 L2798.5,767.9 L2797.0,779.2 L2795.5,787.6 L2794.0,789.9 L2792.5,791.0 L2791.0,793.9 L2789.5,795.1 L2788.0,795.4 L2786.5,794.5 L2785.0,794.2 L2783.5,794.5 L2782.0,795.1 L2780.5,797.7 L2779.0,798.0 L2777.5,798.0 L2776.0,796.6 L2774.5,796.5 L2773.0,798.9 L2771.5,801.4 L2770.0,802.1 L2768.5,800.6 L2767.0,800.4 L2765.5,800.0 L2764.0,801.2 L2762.5,801.5 L2761.0,803.5 L2759.5,803.3 L2758.0,801.0 L2756.5,798.3 L2755.0,797.3 L2753.5,798.2 L2752.0,799.5 L2750.5,798.1 L2749.0,798.8 L2747.5,797.2 L2746.0,799.0 L2744.5,796.3 L2743.0,797.3 L2741.5,797.2 L2740.0,798.6 L2738.5,796.9 L2737.0,796.9 L2735.5,795.0 L2734.0,795.1 L2732.5,793.3 L2731.0,792.8 L2729.5,794.0 L2728.0,792.9 L2726.5,793.2 L2725.0,792.2 L2723.5,793.7 L2722.0,795.0 L2720.5,793.0 L2719.0,792.6 L2717.5,790.8 L2716.0,790.8 L2714.5,789.1 L2713.0,783.1 L2711.5,773.7 L2710.0,765.2 L2708.5,765.6 L2707.0,765.9 L2705.5,764.8 L2704.0,764.1 L2702.5,764.8 L2701.0,765.5 L2699.5,765.6 L2698.0,765.3 L2696.5,764.6 L2695.0,764.5 L2693.5,764.0 L2692.0,764.8 L2690.5,764.7 L2689.0,765.6 L2687.5,764.7 L2686.0,765.2 L2684.5,765.1 L2683.0,765.9 L2681.5,766.4 L2680.0,765.3 L2678.5,765.5 L2677.0,765.3 L2675.5,766.4 L2674.0,766.6 L2672.5,765.7 L2671.0,765.0 L2669.5,765.0 L2668.0,765.0 L2666.5,764.6 L2665.0,764.2 L2663.5,764.5 L2662.0,764.7 L2660.5,764.7 L2659.0,764.4 L2657.5,764.8 L2656.0,764.2 L2654.5,764.9 L2653.0,764.3 L2651.5,764.7 L2650.0,764.0 L2648.5,764.2 L2647.0,764.0 L2645.5,764.3 L2644.0,763.9 L2642.5,768.9 L2641.0,773.5 L2639.5,780.0 L2638.0,790.7 L2636.5,800.6 L2635.0,817.3 L2633.5,834.6 L2632.0,853.0 L2630.5,857.5 L2629.0,857.9 L2627.5,856.1 L2626.0,849.3 L2624.5,842.9 L2623.0,829.9 L2621.5,812.5 L2620.0,794.4 L2618.5,771.1 L2617.0,748.1 L2615.5,740.4 L2614.0,740.4 L2612.5,740.3 L2611.0,740.4 L2609.5,740.5 L2608.0,740.4 L2606.5,740.4 L2605.0,740.4 L2603.5,740.4 L2602.0,740.4 L2600.5,740.3 L2599.0,740.9 L2597.5,741.8 L2596.0,742.5 L2594.5,743.2 L2593.0,743.8 L2591.5,744.4 L2590.0,744.8 L2588.5,744.8 L2587.0,744.6 L2585.5,744.6 L2584.0,744.2 L2582.5,744.1 L2581.0,743.9 L2579.5,743.8 L2578.0,743.6 L2576.5,743.3 L2575.0,743.0 L2573.5,742.7 L2572.0,742.4 L2570.5,742.3 L2569.0,742.2 L2567.5,742.2 L2566.0,742.1 L2564.5,742.2 L2563.0,742.2 L2561.5,742.3 L2560.0,742.1 L2558.5,742.2 L2557.0,742.0 L2555.5,742.0 L2554.0,742.0 L2552.5,742.0 L2551.0,742.0 L2549.5,742.0 L2548.0,742.0 L2546.5,742.0 L2545.0,741.9 L2543.5,741.8 L2542.0,741.8 L2540.5,741.8 L2539.0,741.8 L2537.5,741.8 L2536.0,741.8 L2534.5,741.8 L2533.0,741.7 L2531.5,741.9 L2530.0,741.9 L2528.5,741.8 L2527.0,741.7 L2525.5,741.6 L2524.0,741.5 L2522.5,741.6 L2521.0,741.6 L2519.5,741.6 L2518.0,741.5 L2516.5,741.5 L2515.0,741.5 L2513.5,741.6 L2512.0,741.5 L2510.5,741.5 L2509.0,741.3 L2507.5,741.3 L2506.0,741.3 L2504.5,741.4 L2503.0,741.4 L2501.5,741.4 L2500.0,741.3 L2498.5,741.4 L2497.0,741.3 L2495.5,741.3 L2494.0,741.3 L2492.5,741.4 L2491.0,741.5 L2489.5,741.5 L2488.0,741.4 L2486.5,741.5 L2485.0,741.5 L2483.5,741.4 L2482.0,741.5 L2480.5,741.5 L2479.0,741.6 L2477.5,741.6 L2476.0,741.5 L2474.5,741.6 L2473.0,741.6 L2471.5,741.6 L2470.0,741.7 L2468.5,741.7 L2467.0,741.7 L2465.5,741.6 L2464.0,741.6 L2462.5,741.7 L2461.0,741.7 L2459.5,741.7 L2458.0,741.8 L2456.5,741.7 L2455.0,741.7 L2453.5,741.7 L2452.0,741.8 L2450.5,741.8 L2449.0,741.9 L2447.5,741.9 L2446.0,742.0 L2444.5,741.9 L2443.0,742.1 L2441.5,742.2 L2440.0,742.4 L2438.5,742.2 L2437.0,741.9 L2435.5,741.7 L2434.0,741.5 L2432.5,741.3 L2431.0,740.9 L2429.5,740.7 L2428.0,740.4 Z" fill="#9488e6" clip-path="url(#n8)"/>
</g>
<path d="M3023.0,1508.4 L3024.5,1503.3 L3026.0,1499.3 L3027.5,1494.2 L3029.0,1488.2 L3030.5,1484.1 L3032.0,1481.4 L3033.5,1480.0 L3035.0,1477.7 L3036.5,1473.2 L3038.0,1471.7 L3039.5,1470.0 L3041.0,1470.1 L3042.5,1468.2 L3044.0,1469.7 L3045.5,1471.9 L3047.0,1474.3 L3048.5,1474.7 L3050.0,1474.5 L3051.5,1471.2 L3053.0,1470.0 L3054.5,1468.0 L3056.0,1469.6 L3057.5,1469.1 L3059.0,1468.3 L3060.5,1469.6 L3062.0,1470.2 L3063.5,1473.3 L3065.0,1472.3 L3066.5,1473.2 L3068.0,1472.4 L3069.5,1472.4 L3071.0,1472.6 L3072.5,1472.7 L3074.0,1473.2 L3075.5,1473.5 L3077.0,1474.6 L3078.5,1475.8 L3080.0,1476.3 L3081.5,1483.9 L3083.0,1491.4 L3084.5,1498.6 L3086.0,1499.6 L3087.5,1499.9 L3089.0,1499.2 L3090.5,1500.5 L3092.0,1500.7 L3093.5,1500.6 L3095.0,1500.2 L3096.5,1498.6 L3098.0,1499.4 L3099.5,1500.1 L3101.0,1488.5 L3102.5,1470.1 L3104.0,1449.3 L3105.5,1438.8 L3107.0,1428.3 L3108.5,1421.1 L3110.0,1416.2 L3111.5,1407.2 L3113.0,1404.9 L3114.5,1399.3 L3116.0,1398.0 L3117.5,1394.4 L3119.0,1394.0 L3120.5,1393.6 L3122.0,1392.3 L3123.5,1390.7 L3125.0,1389.8 L3126.5,1390.1 L3128.0,1396.7 L3129.5,1401.4 L3131.0,1409.6 L3132.5,1407.2 L3134.0,1406.0 L3135.5,1406.9 L3137.0,1411.6 L3138.5,1415.8 L3140.0,1425.7 L3141.5,1441.5 L3143.0,1457.5 L3144.5,1472.6 L3146.0,1476.0 L3147.5,1475.5 L3149.0,1476.2 L3150.5,1477.0 L3152.0,1478.5 L3153.5,1477.6 L3155.0,1479.6 L3156.5,1481.9 L3158.0,1485.1 L3159.5,1485.3 L3161.0,1484.7 L3162.5,1488.7 L3164.0,1502.2 L3165.5,1517.1 L3167.0,1521.9 L3168.5,1521.7 L3170.0,1521.4 L3171.5,1521.5 L3173.0,1521.4 L3174.5,1521.0 L3176.0,1520.1 L3177.5,1520.1 L3179.0,1519.7 L3180.5,1519.8 L3182.0,1520.0 L3183.5,1520.0 L3185.0,1519.9 L3186.5,1519.8 L3188.0,1519.5 L3189.5,1519.7 L3191.0,1518.9 L3192.5,1518.4 L3194.0,1517.2 L3195.5,1516.2 L3197.0,1516.2 L3198.5,1516.2 L3200.0,1516.2 L3201.5,1520.8 L3203.0,1525.4 L3204.5,1526.5 L3206.0,1520.5 L3207.5,1511.6 L3209.0,1498.4 L3210.5,1484.7 L3212.0,1478.9 L3213.5,1474.4 L3215.0,1468.8 L3216.5,1472.2 L3218.0,1476.5 L3219.5,1483.5 L3221.0,1495.7 L3222.5,1507.6 L3224.0,1515.3 L3225.5,1519.4 L3227.0,1523.9 L3228.5,1526.9 L3230.0,1527.6 L3231.5,1528.3 L3233.0,1529.0 L3234.5,1529.5 L3236.0,1530.0 L3237.5,1530.4 L3239.0,1531.0 L3240.5,1531.6 L3242.0,1531.7 L3243.5,1531.8 L3245.0,1531.7 L3246.5,1531.7 L3248.0,1531.7 L3249.5,1531.7 L3251.0,1531.9 L3252.5,1531.9 L3254.0,1531.9 L3255.5,1532.0 L3257.0,1532.2 L3258.5,1532.4 L3260.0,1532.4 L3261.5,1532.3 L3263.0,1532.2 L3264.5,1532.2 L3266.0,1532.4 L3266.0,1540.2 L3264.5,1540.4 L3263.0,1540.4 L3261.5,1540.3 L3260.0,1540.2 L3258.5,1540.2 L3257.0,1540.4 L3255.5,1540.6 L3254.0,1540.7 L3252.5,1540.7 L3251.0,1540.7 L3249.5,1540.9 L3248.0,1540.9 L3246.5,1540.9 L3245.0,1540.9 L3243.5,1540.8 L3242.0,1540.9 L3240.5,1541.0 L3239.0,1541.6 L3237.5,1542.2 L3236.0,1542.6 L3234.5,1543.1 L3233.0,1543.6 L3231.5,1544.3 L3230.0,1545.0 L3228.5,1545.7 L3227.0,1548.7 L3225.5,1553.2 L3224.0,1557.3 L3222.5,1565.0 L3221.0,1576.9 L3219.5,1589.1 L3218.0,1596.1 L3216.5,1600.4 L3215.0,1603.8 L3213.5,1598.2 L3212.0,1593.7 L3210.5,1587.9 L3209.0,1574.2 L3207.5,1561.0 L3206.0,1552.1 L3204.5,1546.1 L3203.0,1547.2 L3201.5,1551.8 L3200.0,1556.4 L3198.5,1556.4 L3197.0,1556.4 L3195.5,1556.4 L3194.0,1555.4 L3192.5,1554.2 L3191.0,1553.7 L3189.5,1552.9 L3188.0,1553.1 L3186.5,1552.8 L3185.0,1552.7 L3183.5,1552.6 L3182.0,1552.6 L3180.5,1552.8 L3179.0,1552.9 L3177.5,1552.5 L3176.0,1552.5 L3174.5,1551.6 L3173.0,1551.2 L3171.5,1551.1 L3170.0,1551.2 L3168.5,1550.9 L3167.0,1550.7 L3165.5,1555.5 L3164.0,1570.4 L3162.5,1583.9 L3161.0,1587.9 L3159.5,1587.3 L3158.0,1587.5 L3156.5,1590.7 L3155.0,1593.0 L3153.5,1595.0 L3152.0,1594.1 L3150.5,1595.6 L3149.0,1596.4 L3147.5,1597.1 L3146.0,1596.6 L3144.5,1600.0 L3143.0,1615.1 L3141.5,1631.1 L3140.0,1646.9 L3138.5,1656.8 L3137.0,1661.0 L3135.5,1665.7 L3134.0,1666.6 L3132.5,1665.4 L3131.0,1663.0 L3129.5,1671.2 L3128.0,1675.9 L3126.5,1682.5 L3125.0,1682.8 L3123.5,1681.9 L3122.0,1680.3 L3120.5,1679.0 L3119.0,1678.6 L3117.5,1678.2 L3116.0,1674.6 L3114.5,1673.3 L3113.0,1667.7 L3111.5,1665.4 L3110.0,1656.4 L3108.5,1651.5 L3107.0,1644.3 L3105.5,1633.8 L3104.0,1623.3 L3102.5,1602.5 L3101.0,1584.1 L3099.5,1572.5 L3098.0,1573.2 L3096.5,1574.0 L3095.0,1572.4 L3093.5,1572.0 L3092.0,1571.9 L3090.5,1572.1 L3089.0,1573.4 L3087.5,1572.7 L3086.0,1573.0 L3084.5,1574.0 L3083.0,1581.2 L3081.5,1588.7 L3080.0,1596.3 L3078.5,1596.8 L3077.0,1598.0 L3075.5,1599.1 L3074.0,1599.4 L3072.5,1599.9 L3071.0,1600.0 L3069.5,1600.2 L3068.0,1600.2 L3066.5,1599.4 L3065.0,1600.3 L3063.5,1599.3 L3062.0,1602.4 L3060.5,1603.0 L3059.0,1604.3 L3057.5,1603.5 L3056.0,1603.0 L3054.5,1604.6 L3053.0,1602.6 L3051.5,1601.4 L3050.0,1598.1 L3048.5,1597.9 L3047.0,1598.3 L3045.5,1600.7 L3044.0,1602.9 L3042.5,1604.4 L3041.0,1602.5 L3039.5,1602.6 L3038.0,1600.9 L3036.5,1599.4 L3035.0,1594.9 L3033.5,1592.6 L3032.0,1591.2 L3030.5,1588.5 L3029.0,1584.4 L3027.5,1578.4 L3026.0,1573.3 L3024.5,1569.3 L3023.0,1564.2 Z" fill="#5a5862"/>
<g opacity="0.92">
<rect x="3023" y="1465.6" width="178.69999999999982" height="141.4000000000001" rx="0" fill="#705de7" />
<clipPath id="n9"><rect x="3023" y="1465.6" width="178.69999999999982" height="141.4000000000001"/></clipPath>
<path d="M3023.0,1508.4 L3024.5,1503.3 L3026.0,1499.3 L3027.5,1494.2 L3029.0,1488.2 L3030.5,1484.1 L3032.0,1481.4 L3033.5,1480.0 L3035.0,1477.7 L3036.5,1473.2 L3038.0,1471.7 L3039.5,1470.0 L3041.0,1470.1 L3042.5,1468.2 L3044.0,1469.7 L3045.5,1471.9 L3047.0,1474.3 L3048.5,1474.7 L3050.0,1474.5 L3051.5,1471.2 L3053.0,1470.0 L3054.5,1468.0 L3056.0,1469.6 L3057.5,1469.1 L3059.0,1468.3 L3060.5,1469.6 L3062.0,1470.2 L3063.5,1473.3 L3065.0,1472.3 L3066.5,1473.2 L3068.0,1472.4 L3069.5,1472.4 L3071.0,1472.6 L3072.5,1472.7 L3074.0,1473.2 L3075.5,1473.5 L3077.0,1474.6 L3078.5,1475.8 L3080.0,1476.3 L3081.5,1483.9 L3083.0,1491.4 L3084.5,1498.6 L3086.0,1499.6 L3087.5,1499.9 L3089.0,1499.2 L3090.5,1500.5 L3092.0,1500.7 L3093.5,1500.6 L3095.0,1500.2 L3096.5,1498.6 L3098.0,1499.4 L3099.5,1500.1 L3101.0,1488.5 L3102.5,1470.1 L3104.0,1449.3 L3105.5,1438.8 L3107.0,1428.3 L3108.5,1421.1 L3110.0,1416.2 L3111.5,1407.2 L3113.0,1404.9 L3114.5,1399.3 L3116.0,1398.0 L3117.5,1394.4 L3119.0,1394.0 L3120.5,1393.6 L3122.0,1392.3 L3123.5,1390.7 L3125.0,1389.8 L3126.5,1390.1 L3128.0,1396.7 L3129.5,1401.4 L3131.0,1409.6 L3132.5,1407.2 L3134.0,1406.0 L3135.5,1406.9 L3137.0,1411.6 L3138.5,1415.8 L3140.0,1425.7 L3141.5,1441.5 L3143.0,1457.5 L3144.5,1472.6 L3146.0,1476.0 L3147.5,1475.5 L3149.0,1476.2 L3150.5,1477.0 L3152.0,1478.5 L3153.5,1477.6 L3155.0,1479.6 L3156.5,1481.9 L3158.0,1485.1 L3159.5,1485.3 L3161.0,1484.7 L3162.5,1488.7 L3164.0,1502.2 L3165.5,1517.1 L3167.0,1521.9 L3168.5,1521.7 L3170.0,1521.4 L3171.5,1521.5 L3173.0,1521.4 L3174.5,1521.0 L3176.0,1520.1 L3177.5,1520.1 L3179.0,1519.7 L3180.5,1519.8 L3182.0,1520.0 L3183.5,1520.0 L3185.0,1519.9 L3186.5,1519.8 L3188.0,1519.5 L3189.5,1519.7 L3191.0,1518.9 L3192.5,1518.4 L3194.0,1517.2 L3195.5,1516.2 L3197.0,1516.2 L3198.5,1516.2 L3200.0,1516.2 L3201.5,1520.8 L3203.0,1525.4 L3204.5,1526.5 L3206.0,1520.5 L3207.5,1511.6 L3209.0,1498.4 L3210.5,1484.7 L3212.0,1478.9 L3213.5,1474.4 L3215.0,1468.8 L3216.5,1472.2 L3218.0,1476.5 L3219.5,1483.5 L3221.0,1495.7 L3222.5,1507.6 L3224.0,1515.3 L3225.5,1519.4 L3227.0,1523.9 L3228.5,1526.9 L3230.0,1527.6 L3231.5,1528.3 L3233.0,1529.0 L3234.5,1529.5 L3236.0,1530.0 L3237.5,1530.4 L3239.0,1531.0 L3240.5,1531.6 L3242.0,1531.7 L3243.5,1531.8 L3245.0,1531.7 L3246.5,1531.7 L3248.0,1531.7 L3249.5,1531.7 L3251.0,1531.9 L3252.5,1531.9 L3254.0,1531.9 L3255.5,1532.0 L3257.0,1532.2 L3258.5,1532.4 L3260.0,1532.4 L3261.5,1532.3 L3263.0,1532.2 L3264.5,1532.2 L3266.0,1532.4 L3266.0,1540.2 L3264.5,1540.4 L3263.0,1540.4 L3261.5,1540.3 L3260.0,1540.2 L3258.5,1540.2 L3257.0,1540.4 L3255.5,1540.6 L3254.0,1540.7 L3252.5,1540.7 L3251.0,1540.7 L3249.5,1540.9 L3248.0,1540.9 L3246.5,1540.9 L3245.0,1540.9 L3243.5,1540.8 L3242.0,1540.9 L3240.5,1541.0 L3239.0,1541.6 L3237.5,1542.2 L3236.0,1542.6 L3234.5,1543.1 L3233.0,1543.6 L3231.5,1544.3 L3230.0,1545.0 L3228.5,1545.7 L3227.0,1548.7 L3225.5,1553.2 L3224.0,1557.3 L3222.5,1565.0 L3221.0,1576.9 L3219.5,1589.1 L3218.0,1596.1 L3216.5,1600.4 L3215.0,1603.8 L3213.5,1598.2 L3212.0,1593.7 L3210.5,1587.9 L3209.0,1574.2 L3207.5,1561.0 L3206.0,1552.1 L3204.5,1546.1 L3203.0,1547.2 L3201.5,1551.8 L3200.0,1556.4 L3198.5,1556.4 L3197.0,1556.4 L3195.5,1556.4 L3194.0,1555.4 L3192.5,1554.2 L3191.0,1553.7 L3189.5,1552.9 L3188.0,1553.1 L3186.5,1552.8 L3185.0,1552.7 L3183.5,1552.6 L3182.0,1552.6 L3180.5,1552.8 L3179.0,1552.9 L3177.5,1552.5 L3176.0,1552.5 L3174.5,1551.6 L3173.0,1551.2 L3171.5,1551.1 L3170.0,1551.2 L3168.5,1550.9 L3167.0,1550.7 L3165.5,1555.5 L3164.0,1570.4 L3162.5,1583.9 L3161.0,1587.9 L3159.5,1587.3 L3158.0,1587.5 L3156.5,1590.7 L3155.0,1593.0 L3153.5,1595.0 L3152.0,1594.1 L3150.5,1595.6 L3149.0,1596.4 L3147.5,1597.1 L3146.0,1596.6 L3144.5,1600.0 L3143.0,1615.1 L3141.5,1631.1 L3140.0,1646.9 L3138.5,1656.8 L3137.0,1661.0 L3135.5,1665.7 L3134.0,1666.6 L3132.5,1665.4 L3131.0,1663.0 L3129.5,1671.2 L3128.0,1675.9 L3126.5,1682.5 L3125.0,1682.8 L3123.5,1681.9 L3122.0,1680.3 L3120.5,1679.0 L3119.0,1678.6 L3117.5,1678.2 L3116.0,1674.6 L3114.5,1673.3 L3113.0,1667.7 L3111.5,1665.4 L3110.0,1656.4 L3108.5,1651.5 L3107.0,1644.3 L3105.5,1633.8 L3104.0,1623.3 L3102.5,1602.5 L3101.0,1584.1 L3099.5,1572.5 L3098.0,1573.2 L3096.5,1574.0 L3095.0,1572.4 L3093.5,1572.0 L3092.0,1571.9 L3090.5,1572.1 L3089.0,1573.4 L3087.5,1572.7 L3086.0,1573.0 L3084.5,1574.0 L3083.0,1581.2 L3081.5,1588.7 L3080.0,1596.3 L3078.5,1596.8 L3077.0,1598.0 L3075.5,1599.1 L3074.0,1599.4 L3072.5,1599.9 L3071.0,1600.0 L3069.5,1600.2 L3068.0,1600.2 L3066.5,1599.4 L3065.0,1600.3 L3063.5,1599.3 L3062.0,1602.4 L3060.5,1603.0 L3059.0,1604.3 L3057.5,1603.5 L3056.0,1603.0 L3054.5,1604.6 L3053.0,1602.6 L3051.5,1601.4 L3050.0,1598.1 L3048.5,1597.9 L3047.0,1598.3 L3045.5,1600.7 L3044.0,1602.9 L3042.5,1604.4 L3041.0,1602.5 L3039.5,1602.6 L3038.0,1600.9 L3036.5,1599.4 L3035.0,1594.9 L3033.5,1592.6 L3032.0,1591.2 L3030.5,1588.5 L3029.0,1584.4 L3027.5,1578.4 L3026.0,1573.3 L3024.5,1569.3 L3023.0,1564.2 Z" fill="#9488e6" clip-path="url(#n9)"/>
<rect x="3205.3" y="1465.6" width="61.69999999999982" height="141.4000000000001" rx="0" fill="#237c5f" />
<clipPath id="n10"><rect x="3205.3" y="1465.6" width="61.69999999999982" height="141.4000000000001"/></clipPath>
<path d="M3023.0,1508.4 L3024.5,1503.3 L3026.0,1499.3 L3027.5,1494.2 L3029.0,1488.2 L3030.5,1484.1 L3032.0,1481.4 L3033.5,1480.0 L3035.0,1477.7 L3036.5,1473.2 L3038.0,1471.7 L3039.5,1470.0 L3041.0,1470.1 L3042.5,1468.2 L3044.0,1469.7 L3045.5,1471.9 L3047.0,1474.3 L3048.5,1474.7 L3050.0,1474.5 L3051.5,1471.2 L3053.0,1470.0 L3054.5,1468.0 L3056.0,1469.6 L3057.5,1469.1 L3059.0,1468.3 L3060.5,1469.6 L3062.0,1470.2 L3063.5,1473.3 L3065.0,1472.3 L3066.5,1473.2 L3068.0,1472.4 L3069.5,1472.4 L3071.0,1472.6 L3072.5,1472.7 L3074.0,1473.2 L3075.5,1473.5 L3077.0,1474.6 L3078.5,1475.8 L3080.0,1476.3 L3081.5,1483.9 L3083.0,1491.4 L3084.5,1498.6 L3086.0,1499.6 L3087.5,1499.9 L3089.0,1499.2 L3090.5,1500.5 L3092.0,1500.7 L3093.5,1500.6 L3095.0,1500.2 L3096.5,1498.6 L3098.0,1499.4 L3099.5,1500.1 L3101.0,1488.5 L3102.5,1470.1 L3104.0,1449.3 L3105.5,1438.8 L3107.0,1428.3 L3108.5,1421.1 L3110.0,1416.2 L3111.5,1407.2 L3113.0,1404.9 L3114.5,1399.3 L3116.0,1398.0 L3117.5,1394.4 L3119.0,1394.0 L3120.5,1393.6 L3122.0,1392.3 L3123.5,1390.7 L3125.0,1389.8 L3126.5,1390.1 L3128.0,1396.7 L3129.5,1401.4 L3131.0,1409.6 L3132.5,1407.2 L3134.0,1406.0 L3135.5,1406.9 L3137.0,1411.6 L3138.5,1415.8 L3140.0,1425.7 L3141.5,1441.5 L3143.0,1457.5 L3144.5,1472.6 L3146.0,1476.0 L3147.5,1475.5 L3149.0,1476.2 L3150.5,1477.0 L3152.0,1478.5 L3153.5,1477.6 L3155.0,1479.6 L3156.5,1481.9 L3158.0,1485.1 L3159.5,1485.3 L3161.0,1484.7 L3162.5,1488.7 L3164.0,1502.2 L3165.5,1517.1 L3167.0,1521.9 L3168.5,1521.7 L3170.0,1521.4 L3171.5,1521.5 L3173.0,1521.4 L3174.5,1521.0 L3176.0,1520.1 L3177.5,1520.1 L3179.0,1519.7 L3180.5,1519.8 L3182.0,1520.0 L3183.5,1520.0 L3185.0,1519.9 L3186.5,1519.8 L3188.0,1519.5 L3189.5,1519.7 L3191.0,1518.9 L3192.5,1518.4 L3194.0,1517.2 L3195.5,1516.2 L3197.0,1516.2 L3198.5,1516.2 L3200.0,1516.2 L3201.5,1520.8 L3203.0,1525.4 L3204.5,1526.5 L3206.0,1520.5 L3207.5,1511.6 L3209.0,1498.4 L3210.5,1484.7 L3212.0,1478.9 L3213.5,1474.4 L3215.0,1468.8 L3216.5,1472.2 L3218.0,1476.5 L3219.5,1483.5 L3221.0,1495.7 L3222.5,1507.6 L3224.0,1515.3 L3225.5,1519.4 L3227.0,1523.9 L3228.5,1526.9 L3230.0,1527.6 L3231.5,1528.3 L3233.0,1529.0 L3234.5,1529.5 L3236.0,1530.0 L3237.5,1530.4 L3239.0,1531.0 L3240.5,1531.6 L3242.0,1531.7 L3243.5,1531.8 L3245.0,1531.7 L3246.5,1531.7 L3248.0,1531.7 L3249.5,1531.7 L3251.0,1531.9 L3252.5,1531.9 L3254.0,1531.9 L3255.5,1532.0 L3257.0,1532.2 L3258.5,1532.4 L3260.0,1532.4 L3261.5,1532.3 L3263.0,1532.2 L3264.5,1532.2 L3266.0,1532.4 L3266.0,1540.2 L3264.5,1540.4 L3263.0,1540.4 L3261.5,1540.3 L3260.0,1540.2 L3258.5,1540.2 L3257.0,1540.4 L3255.5,1540.6 L3254.0,1540.7 L3252.5,1540.7 L3251.0,1540.7 L3249.5,1540.9 L3248.0,1540.9 L3246.5,1540.9 L3245.0,1540.9 L3243.5,1540.8 L3242.0,1540.9 L3240.5,1541.0 L3239.0,1541.6 L3237.5,1542.2 L3236.0,1542.6 L3234.5,1543.1 L3233.0,1543.6 L3231.5,1544.3 L3230.0,1545.0 L3228.5,1545.7 L3227.0,1548.7 L3225.5,1553.2 L3224.0,1557.3 L3222.5,1565.0 L3221.0,1576.9 L3219.5,1589.1 L3218.0,1596.1 L3216.5,1600.4 L3215.0,1603.8 L3213.5,1598.2 L3212.0,1593.7 L3210.5,1587.9 L3209.0,1574.2 L3207.5,1561.0 L3206.0,1552.1 L3204.5,1546.1 L3203.0,1547.2 L3201.5,1551.8 L3200.0,1556.4 L3198.5,1556.4 L3197.0,1556.4 L3195.5,1556.4 L3194.0,1555.4 L3192.5,1554.2 L3191.0,1553.7 L3189.5,1552.9 L3188.0,1553.1 L3186.5,1552.8 L3185.0,1552.7 L3183.5,1552.6 L3182.0,1552.6 L3180.5,1552.8 L3179.0,1552.9 L3177.5,1552.5 L3176.0,1552.5 L3174.5,1551.6 L3173.0,1551.2 L3171.5,1551.1 L3170.0,1551.2 L3168.5,1550.9 L3167.0,1550.7 L3165.5,1555.5 L3164.0,1570.4 L3162.5,1583.9 L3161.0,1587.9 L3159.5,1587.3 L3158.0,1587.5 L3156.5,1590.7 L3155.0,1593.0 L3153.5,1595.0 L3152.0,1594.1 L3150.5,1595.6 L3149.0,1596.4 L3147.5,1597.1 L3146.0,1596.6 L3144.5,1600.0 L3143.0,1615.1 L3141.5,1631.1 L3140.0,1646.9 L3138.5,1656.8 L3137.0,1661.0 L3135.5,1665.7 L3134.0,1666.6 L3132.5,1665.4 L3131.0,1663.0 L3129.5,1671.2 L3128.0,1675.9 L3126.5,1682.5 L3125.0,1682.8 L3123.5,1681.9 L3122.0,1680.3 L3120.5,1679.0 L3119.0,1678.6 L3117.5,1678.2 L3116.0,1674.6 L3114.5,1673.3 L3113.0,1667.7 L3111.5,1665.4 L3110.0,1656.4 L3108.5,1651.5 L3107.0,1644.3 L3105.5,1633.8 L3104.0,1623.3 L3102.5,1602.5 L3101.0,1584.1 L3099.5,1572.5 L3098.0,1573.2 L3096.5,1574.0 L3095.0,1572.4 L3093.5,1572.0 L3092.0,1571.9 L3090.5,1572.1 L3089.0,1573.4 L3087.5,1572.7 L3086.0,1573.0 L3084.5,1574.0 L3083.0,1581.2 L3081.5,1588.7 L3080.0,1596.3 L3078.5,1596.8 L3077.0,1598.0 L3075.5,1599.1 L3074.0,1599.4 L3072.5,1599.9 L3071.0,1600.0 L3069.5,1600.2 L3068.0,1600.2 L3066.5,1599.4 L3065.0,1600.3 L3063.5,1599.3 L3062.0,1602.4 L3060.5,1603.0 L3059.0,1604.3 L3057.5,1603.5 L3056.0,1603.0 L3054.5,1604.6 L3053.0,1602.6 L3051.5,1601.4 L3050.0,1598.1 L3048.5,1597.9 L3047.0,1598.3 L3045.5,1600.7 L3044.0,1602.9 L3042.5,1604.4 L3041.0,1602.5 L3039.5,1602.6 L3038.0,1600.9 L3036.5,1599.4 L3035.0,1594.9 L3033.5,1592.6 L3032.0,1591.2 L3030.5,1588.5 L3029.0,1584.4 L3027.5,1578.4 L3026.0,1573.3 L3024.5,1569.3 L3023.0,1564.2 Z" fill="#6cae95" clip-path="url(#n10)"/>
</g>
<path d="M365.3,2060.6 C366.4,2058.5 369.4,2048.5 371.7,2047.9 C374.0,2047.3 376.8,2052.8 379.3,2056.8 C381.9,2060.8 384.7,2070.1 387.0,2072.0 C389.3,2073.9 390.1,2067.9 393.3,2068.3 C396.5,2068.7 402.4,2070.8 406.0,2074.6 C409.6,2078.4 412.6,2085.7 415.0,2091.2 C417.4,2096.7 419.0,2108.4 420.7,2107.8 C422.4,2107.2 424.0,2096.8 425.2,2087.4 C426.4,2078.1 425.4,2060.0 427.7,2051.7 C430.0,2043.4 434.9,2039.8 439.0,2037.7 C443.1,2035.6 445.6,2037.5 452.0,2039.0 C458.4,2040.5 470.0,2044.9 477.4,2046.6 C484.8,2048.3 490.4,2049.2 496.5,2049.2 C502.6,2049.2 510.3,2049.1 514.3,2046.6 C518.3,2044.0 518.8,2042.0 520.7,2033.9 C522.6,2025.8 524.1,2010.5 525.8,1998.2 C527.5,1985.9 526.8,1989.4 531.0,1960.0 C535.2,1930.6 544.6,1868.5 550.8,1822.0 C557.0,1775.5 564.5,1713.8 568.0,1681.0 C571.5,1648.2 572.5,1640.2 572.0,1625.0 C571.5,1609.8 568.5,1604.0 565.0,1590.0 C561.5,1576.0 555.2,1560.8 551.0,1541.0 C546.8,1521.2 541.2,1489.7 540.0,1471.0 C538.8,1452.3 541.0,1443.0 544.0,1429.0 C547.0,1415.0 554.0,1405.7 558.0,1387.0 C562.0,1368.3 563.3,1341.7 568.0,1317.0 C572.7,1292.3 579.5,1259.0 586.0,1239.0 C592.5,1219.0 601.2,1203.3 607.0,1197.0 C612.8,1190.7 616.9,1197.5 621.0,1201.0 C625.1,1204.5 627.4,1215.2 631.5,1218.0 C635.6,1220.8 640.8,1221.5 645.5,1218.0 C650.2,1214.5 653.2,1211.0 659.6,1197.0 C666.0,1183.0 675.8,1149.7 684.0,1134.0 C692.2,1118.3 703.4,1099.1 708.7,1102.6 C714.0,1106.1 711.7,1141.6 715.7,1155.0 C719.8,1168.4 725.5,1172.5 733.0,1183.0 C740.5,1193.5 751.7,1201.6 761.0,1218.0 C770.3,1234.4 780.8,1260.4 789.0,1281.5 C797.2,1302.6 804.2,1322.5 810.0,1344.7 C815.8,1367.0 820.5,1396.3 824.0,1415.0 C827.5,1433.7 828.7,1471.1 831.0,1457.0 C833.3,1442.9 835.0,1368.1 838.0,1330.6 C841.0,1293.1 844.8,1255.4 849.0,1232.0 C853.2,1208.6 857.7,1201.7 863.0,1190.0 C868.3,1178.3 877.7,1166.7 880.6,1162.0" fill="none" stroke="#ffffff" stroke-opacity="0.76" stroke-width="3.6" stroke-linecap="round" stroke-linejoin="round"/>
<path d="M1028.6,1101.0 C1032.2,1103.9 1042.9,1112.8 1050.0,1118.6 C1057.1,1124.4 1064.0,1130.2 1071.0,1136.0 C1078.0,1141.8 1084.9,1147.6 1092.0,1153.4 C1099.1,1159.2 1094.7,1163.8 1113.5,1171.0 C1132.3,1178.2 1187.5,1189.1 1204.8,1196.5 C1222.1,1203.9 1210.5,1209.2 1217.5,1215.6 C1224.5,1222.0 1235.7,1236.1 1247.0,1234.7 C1258.3,1233.3 1277.0,1215.8 1285.5,1207.0 C1294.0,1198.2 1292.4,1186.6 1298.0,1181.6 C1303.6,1176.6 1300.6,1175.3 1319.0,1177.0 C1337.4,1178.7 1383.8,1194.4 1408.6,1192.0 C1433.4,1189.6 1452.4,1162.8 1468.0,1162.5 C1483.6,1162.2 1492.1,1179.8 1502.0,1190.0 C1511.9,1200.2 1516.2,1230.3 1527.5,1224.0 C1538.8,1217.7 1560.8,1160.5 1570.0,1152.0 C1579.2,1143.5 1576.7,1167.7 1582.7,1173.0 C1588.7,1178.3 1599.0,1182.4 1606.0,1183.8 C1613.0,1185.2 1621.8,1182.0 1625.0,1181.6" fill="none" stroke="#ffffff" stroke-opacity="0.76" stroke-width="3.6" stroke-linecap="round" stroke-linejoin="round"/>
<path d="M1764.3,1399.0 C1766.9,1405.3 1772.8,1423.9 1780.0,1437.0 C1787.2,1450.1 1799.4,1468.7 1807.4,1477.8 C1815.4,1486.9 1822.1,1488.0 1827.8,1491.4 C1833.5,1494.8 1836.9,1492.8 1841.4,1498.0 C1845.9,1503.2 1850.9,1518.2 1855.0,1522.7 C1859.1,1527.2 1860.1,1525.8 1865.8,1524.7 C1871.5,1523.6 1881.6,1519.3 1889.0,1516.0 C1896.4,1512.7 1905.8,1533.2 1910.0,1505.0 C1914.2,1476.8 1911.9,1394.5 1914.0,1347.0 C1916.1,1299.5 1918.2,1251.2 1922.4,1220.0 C1926.6,1188.8 1933.9,1171.6 1939.0,1160.0 C1944.1,1148.4 1937.4,1141.8 1953.0,1150.6 C1968.6,1159.3 2010.8,1197.8 2032.5,1212.5 C2054.2,1227.2 2065.0,1244.6 2083.0,1239.0 C2101.0,1233.4 2121.5,1180.5 2140.7,1179.0 C2159.9,1177.5 2181.1,1214.5 2198.0,1230.0 C2214.9,1245.5 2229.1,1267.6 2242.0,1272.0 C2254.9,1276.4 2262.1,1269.6 2275.4,1256.6 C2288.7,1243.5 2305.1,1200.7 2321.7,1193.7 C2338.2,1186.7 2365.9,1211.2 2374.7,1214.7" fill="none" stroke="#ffffff" stroke-opacity="0.76" stroke-width="3.6" stroke-linecap="round" stroke-linejoin="round"/>
<path d="M2603.6,681.0 C2619.2,690.4 2670.9,723.7 2697.0,737.5 C2723.1,751.3 2744.2,758.3 2760.0,764.0 C2775.8,769.7 2782.8,773.8 2792.0,771.5 C2801.2,769.2 2805.3,759.9 2815.0,750.0 C2824.7,740.1 2839.2,719.9 2850.0,712.0 C2860.8,704.1 2870.0,703.5 2880.0,702.5 C2890.0,701.5 2900.4,703.2 2910.0,706.0 C2919.6,708.8 2929.3,718.8 2937.6,719.3 C2945.9,719.8 2951.3,712.2 2960.0,709.0 C2968.7,705.8 2981.7,701.7 2990.0,700.0 C2998.3,698.3 3005.2,698.0 3010.0,699.0 C3014.8,700.0 3017.5,704.8 3019.0,706.0" fill="none" stroke="#ffffff" stroke-opacity="0.76" stroke-width="3.6" stroke-linecap="round" stroke-linejoin="round"/>
<path d="M3022.5,1573.0 C3024.2,1575.0 3022.8,1584.9 3033.0,1584.7 C3043.2,1584.5 3071.8,1573.7 3083.8,1571.7 C3095.8,1569.8 3092.4,1576.5 3105.0,1573.0 C3117.6,1569.5 3147.1,1560.2 3159.3,1550.5 C3171.5,1540.8 3170.9,1528.0 3178.0,1515.0 C3185.1,1502.0 3197.8,1479.8 3201.7,1472.7" fill="none" stroke="#ffffff" stroke-opacity="0.76" stroke-width="3.6" stroke-linecap="round" stroke-linejoin="round"/>
</g>
<rect x="1293.8" y="2217.8" width="900" height="113" rx="28" fill="#17141f" stroke="#3a3844" stroke-width="2.5"/>
<rect x="1306.5" y="2230.8" width="87.6" height="87.3" rx="14" fill="#7e6bff" />
<g fill="none" stroke="#fff" stroke-width="5.5" stroke-linecap="round" stroke-linejoin="round"><path d="M1328.2,2253.2 L1372.9,2270.5 L1352.7,2275.5 L1346.9,2295.7 Z"/><path d="M1353,2275.5 L1370,2294.3"/></g>
<g fill="none" stroke="#8e8c94" stroke-linecap="round" stroke-linejoin="round"><path d="M1409,2269.5 L1419.8,2279 L1430.7,2269.5" stroke-width="2.6"/><path d="M2076.3,2268.9 L2086.5,2278.7 L2096.8,2268.9" stroke-width="2.6"/><path d="M1497.5,2252.4 L1490,2270 A9.5,9.5 0 0 0 1505.5,2280.5 L1512.2,2261" stroke-width="4.6"/><path d="M1493,2283 L1484,2292.5" stroke-width="4.6"/><circle cx="1483.4" cy="2292.9" r="5.5" fill="#8e8c94" stroke="none"/><path d="M1576,2297 L1578.5,2285 L1610,2253.5 A7,7 0 0 1 1620,2263.5 L1588.5,2295 Z M1603,2260.5 L1613,2270.5" stroke-width="4.8"/><g transform="translate(1673.5,2245) scale(2.33) translate(0,24) scale(1,-1)"><path d="M15.707 21.293a1 1 0 0 1-1.414 0l-1.586-1.586a1 1 0 0 1 0-1.414l5.586-5.586a1 1 0 0 1 1.414 0l1.586 1.586a1 1 0 0 1 0 1.414z" stroke-width="2.05"/><path d="m18 13-1.375-6.874a1 1 0 0 0-.746-.776L3.235 2.028a1 1 0 0 0-1.207 1.207L5.35 15.879a1 1 0 0 0 .776.746L13 18" stroke-width="1.95"/><path d="m2.3 2.3 7.286 7.286" stroke-width="1.95"/><circle cx="11" cy="11" r="2" stroke-width="1.95"/></g><g transform="translate(1772.2,2244.9) scale(2.47)"><circle cx="6" cy="6" r="3" stroke-width="1.95"/><path d="M8.12 8.12 12 12" stroke-width="1.95"/><path d="M20 4 8.12 15.88" stroke-width="1.95"/><circle cx="6" cy="18" r="3" stroke-width="1.95"/><path d="M14.8 14.8 20 20" stroke-width="1.95"/></g><path d="M1883,2275 L1889.5,2254 L1889.5,2293 L1897.5,2261 L1897.5,2286 L1905,2264 L1905,2283 L1909,2273" stroke-width="5.2"/><path d="M1909,2254 V2293" stroke-width="4.8"/><path d="M1914,2274 H1927 M1921.5,2268 L1927.5,2274 L1921.5,2280" stroke-width="2.6"/><circle cx="2016.4" cy="2269.9" r="17.4" stroke-width="5.3"/><path d="M2029,2282.5 L2043.6,2297" stroke-width="5.3"/></g>
<rect x="1961.3" y="2230" width="2.5" height="88.5" rx="0" fill="#3a3844" />
<rect x="2121.8" y="2230.6" width="2.5" height="88" rx="0" fill="#3a3844" />
<circle cx="2152.7" cy="2260.5" r="4.2" fill="#8e8c94"/>
<circle cx="2152.7" cy="2274.5" r="4.2" fill="#8e8c94"/>
<circle cx="2152.7" cy="2288.6" r="4.2" fill="#8e8c94"/>
<circle cx="2166.4" cy="2260.5" r="4.2" fill="#8e8c94"/>
<circle cx="2166.4" cy="2274.5" r="4.2" fill="#8e8c94"/>
<circle cx="2166.4" cy="2288.6" r="4.2" fill="#8e8c94"/>
<rect x="2031.5" y="2419.6" width="583.7" height="29.4" rx="14.7" fill="#322e42" />
<path d="M2969,2435.2 H3000 M2976.5,2426 L2967.5,2435.2 L2976.5,2444.5 M2992.5,2426 L3001.5,2435.2 L2992.5,2444.5" fill="none" stroke="#8e8c94" stroke-width="5" stroke-linecap="round" stroke-linejoin="round"/>
<rect x="3026" y="2429.5" width="274.5" height="11.5" rx="5.75" fill="#8e8c94" />
<circle cx="3164.7" cy="2435.2" r="16.5" fill="#fff" stroke="#8e8c94" stroke-width="1"/>
</g>
<defs><clipPath id="ov"><rect x="68" y="2493" width="3257" height="204" rx="28"/></clipPath></defs>
<g clip-path="url(#ov)">
<rect x="68" y="2493" width="3257" height="204" rx="0" fill="#17141f" />
<rect x="210.5" y="2493" width="3.5" height="204" rx="0" fill="#423f4c" />
<rect x="68" y="2591.5" width="143" height="3.5" rx="0" fill="#423f4c" />
<rect x="250.6" y="2500.4" width="3300" height="188.6" rx="15" fill="none" stroke="#3f3d47" stroke-width="3"/>
<rect x="377.5" y="2500.4" width="1580.5" height="188.6" rx="15" fill="#2a2450" />
<path d="M286.0,2593.6 L287.5,2593.6 L289.0,2593.6 L290.5,2593.6 L292.0,2593.6 L293.5,2593.6 L295.0,2593.6 L296.5,2593.6 L298.0,2593.6 L299.5,2593.6 L301.0,2593.6 L302.5,2593.6 L304.0,2593.6 L305.5,2593.6 L307.0,2593.6 L308.5,2593.6 L310.0,2593.6 L311.5,2593.6 L313.0,2593.6 L314.5,2593.6 L316.0,2593.6 L317.5,2593.6 L319.0,2593.6 L320.5,2593.6 L322.0,2593.6 L323.5,2593.6 L325.0,2593.6 L326.5,2593.6 L328.0,2593.6 L329.5,2593.6 L331.0,2593.6 L332.5,2593.6 L334.0,2593.6 L335.5,2593.6 L337.0,2593.6 L338.5,2593.6 L340.0,2593.6 L341.5,2593.6 L343.0,2593.6 L344.5,2593.6 L346.0,2593.6 L347.5,2593.6 L349.0,2593.6 L350.5,2593.6 L352.0,2593.6 L353.5,2593.6 L355.0,2593.6 L356.5,2593.6 L358.0,2593.6 L359.5,2593.6 L361.0,2593.6 L362.5,2593.6 L364.0,2593.6 L365.5,2593.6 L367.0,2593.6 L368.5,2593.6 L370.0,2593.6 L371.5,2593.6 L373.0,2593.4 L374.5,2593.2 L376.0,2593.1 L377.5,2592.9 L379.0,2592.8 L380.5,2592.6 L382.0,2592.4 L383.5,2592.2 L385.0,2592.1 L386.5,2591.9 L388.0,2591.7 L389.5,2586.9 L391.0,2582.6 L392.5,2577.8 L394.0,2576.1 L395.5,2576.0 L397.0,2577.2 L398.5,2577.0 L400.0,2576.7 L401.5,2575.8 L403.0,2576.5 L404.5,2576.6 L406.0,2577.6 L407.5,2577.6 L409.0,2578.3 L410.5,2578.2 L412.0,2578.7 L413.5,2579.3 L415.0,2580.0 L416.5,2580.3 L418.0,2581.3 L419.5,2582.3 L421.0,2583.1 L422.5,2583.7 L424.0,2584.0 L425.5,2584.7 L427.0,2585.5 L428.5,2586.1 L430.0,2587.2 L431.5,2587.7 L433.0,2588.5 L434.5,2588.9 L436.0,2589.4 L437.5,2590.2 L439.0,2591.1 L440.5,2591.7 L442.0,2592.0 L443.5,2592.3 L445.0,2592.5 L446.5,2590.3 L448.0,2582.7 L449.5,2574.6 L451.0,2571.1 L452.5,2571.0 L454.0,2572.0 L455.5,2572.1 L457.0,2572.2 L458.5,2573.1 L460.0,2573.7 L461.5,2574.1 L463.0,2573.6 L464.5,2574.2 L466.0,2574.7 L467.5,2575.2 L469.0,2574.9 L470.5,2574.5 L472.0,2574.6 L473.5,2574.5 L475.0,2574.3 L476.5,2573.5 L478.0,2574.1 L479.5,2574.6 L481.0,2575.2 L482.5,2574.2 L484.0,2573.2 L485.5,2572.6 L487.0,2573.6 L488.5,2574.6 L490.0,2574.9 L491.5,2574.9 L493.0,2574.2 L494.5,2574.3 L496.0,2574.2 L497.5,2574.6 L499.0,2574.4 L500.5,2573.6 L502.0,2573.6 L503.5,2573.5 L505.0,2574.1 L506.5,2574.6 L508.0,2575.4 L509.5,2575.7 L511.0,2575.7 L512.5,2575.9 L514.0,2575.3 L515.5,2575.1 L517.0,2575.0 L518.5,2575.1 L520.0,2575.5 L521.5,2575.8 L523.0,2576.6 L524.5,2579.9 L526.0,2590.9 L527.5,2590.9 L529.0,2590.9 L530.5,2590.8 L532.0,2590.7 L533.5,2590.7 L535.0,2590.7 L536.5,2590.8 L538.0,2591.0 L539.5,2590.8 L541.0,2590.9 L542.5,2591.0 L544.0,2591.4 L545.5,2591.6 L547.0,2579.5 L548.5,2566.8 L550.0,2567.1 L551.5,2566.9 L553.0,2566.6 L554.5,2566.9 L556.0,2566.5 L557.5,2567.7 L559.0,2568.0 L560.5,2568.9 L562.0,2568.1 L563.5,2569.9 L565.0,2569.3 L566.5,2569.9 L568.0,2570.4 L569.5,2571.1 L571.0,2572.0 L572.5,2571.0 L574.0,2571.0 L575.5,2571.0 L577.0,2570.3 L578.5,2569.4 L580.0,2568.3 L581.5,2568.8 L583.0,2569.1 L584.5,2569.2 L586.0,2568.7 L587.5,2568.9 L589.0,2569.1 L590.5,2568.5 L592.0,2568.7 L593.5,2568.9 L595.0,2570.4 L596.5,2570.3 L598.0,2570.3 L599.5,2569.2 L601.0,2570.0 L602.5,2570.3 L604.0,2571.4 L605.5,2570.2 L607.0,2569.0 L608.5,2567.8 L610.0,2567.8 L611.5,2569.4 L613.0,2570.7 L614.5,2571.8 L616.0,2572.4 L617.5,2573.3 L619.0,2574.4 L620.5,2575.3 L622.0,2575.5 L623.5,2575.5 L625.0,2576.4 L626.5,2577.7 L628.0,2578.9 L629.5,2578.7 L631.0,2579.1 L632.5,2579.6 L634.0,2580.8 L635.5,2581.4 L637.0,2581.8 L638.5,2581.9 L640.0,2583.1 L641.5,2583.9 L643.0,2585.1 L644.5,2585.0 L646.0,2585.5 L647.5,2585.8 L649.0,2586.6 L650.5,2587.4 L652.0,2587.7 L653.5,2587.9 L655.0,2588.1 L656.5,2588.7 L658.0,2589.6 L659.5,2590.1 L661.0,2590.9 L662.5,2591.2 L664.0,2591.7 L665.5,2592.1 L667.0,2592.6 L668.5,2593.1 L670.0,2593.6 L671.5,2593.6 L673.0,2593.6 L674.5,2593.6 L676.0,2593.6 L677.5,2593.6 L679.0,2593.6 L680.5,2593.6 L682.0,2593.6 L683.5,2593.6 L685.0,2593.6 L686.5,2593.6 L688.0,2593.6 L689.5,2593.6 L691.0,2593.6 L692.5,2593.6 L694.0,2593.6 L695.5,2593.6 L697.0,2593.6 L698.5,2593.6 L700.0,2593.6 L701.5,2593.6 L703.0,2593.6 L704.5,2593.6 L706.0,2593.6 L707.5,2593.6 L709.0,2593.6 L710.5,2593.6 L712.0,2593.6 L713.5,2593.6 L715.0,2593.6 L716.5,2593.6 L718.0,2593.6 L719.5,2593.6 L721.0,2593.6 L722.5,2593.6 L724.0,2593.6 L725.5,2593.6 L727.0,2593.6 L728.5,2593.6 L730.0,2593.6 L731.5,2593.6 L733.0,2593.6 L734.5,2593.6 L736.0,2593.6 L737.5,2593.6 L739.0,2593.6 L740.5,2593.6 L742.0,2593.6 L743.5,2593.6 L745.0,2593.6 L746.5,2593.6 L748.0,2592.0 L749.5,2589.6 L751.0,2586.9 L752.5,2584.8 L754.0,2585.1 L755.5,2585.7 L757.0,2586.2 L758.5,2586.0 L760.0,2585.9 L761.5,2585.8 L763.0,2586.1 L764.5,2586.3 L766.0,2586.6 L767.5,2586.6 L769.0,2586.6 L770.5,2587.0 L772.0,2587.4 L773.5,2587.3 L775.0,2587.0 L776.5,2586.9 L778.0,2586.7 L779.5,2586.7 L781.0,2586.4 L782.5,2586.6 L784.0,2586.3 L785.5,2585.8 L787.0,2585.1 L788.5,2584.9 L790.0,2585.3 L791.5,2585.3 L793.0,2585.1 L794.5,2585.0 L796.0,2585.6 L797.5,2586.2 L799.0,2585.9 L800.5,2586.0 L802.0,2585.9 L803.5,2586.3 L805.0,2586.3 L806.5,2586.5 L808.0,2586.8 L809.5,2586.9 L811.0,2570.6 L812.5,2570.1 L814.0,2569.3 L815.5,2569.6 L817.0,2569.1 L818.5,2570.0 L820.0,2570.5 L821.5,2570.2 L823.0,2569.1 L824.5,2568.7 L826.0,2568.7 L827.5,2568.9 L829.0,2568.5 L830.5,2569.3 L832.0,2570.7 L833.5,2571.2 L835.0,2570.5 L836.5,2570.1 L838.0,2570.4 L839.5,2571.9 L841.0,2572.0 L842.5,2572.6 L844.0,2571.3 L845.5,2570.2 L847.0,2568.9 L848.5,2569.2 L850.0,2569.9 L851.5,2570.7 L853.0,2571.3 L854.5,2570.9 L856.0,2571.4 L857.5,2570.4 L859.0,2571.0 L860.5,2570.5 L862.0,2570.6 L863.5,2570.4 L865.0,2569.4 L866.5,2569.7 L868.0,2569.0 L869.5,2569.6 L871.0,2568.8 L872.5,2568.0 L874.0,2566.5 L875.5,2571.2 L877.0,2575.1 L878.5,2576.2 L880.0,2577.4 L881.5,2578.8 L883.0,2579.8 L884.5,2580.7 L886.0,2581.1 L887.5,2581.4 L889.0,2582.4 L890.5,2583.8 L892.0,2585.2 L893.5,2586.4 L895.0,2587.1 L896.5,2587.8 L898.0,2588.4 L899.5,2589.3 L901.0,2590.2 L902.5,2591.2 L904.0,2591.7 L905.5,2591.8 L907.0,2591.8 L908.5,2591.7 L910.0,2591.8 L911.5,2591.7 L913.0,2591.8 L914.5,2591.8 L916.0,2591.7 L917.5,2591.7 L919.0,2591.6 L920.5,2568.4 L922.0,2561.7 L923.5,2561.8 L925.0,2562.8 L926.5,2564.3 L928.0,2566.1 L929.5,2565.9 L931.0,2565.9 L932.5,2565.3 L934.0,2565.6 L935.5,2565.8 L937.0,2567.0 L938.5,2567.4 L940.0,2567.5 L941.5,2567.6 L943.0,2568.8 L944.5,2570.1 L946.0,2569.6 L947.5,2568.4 L949.0,2567.8 L950.5,2568.2 L952.0,2568.6 L953.5,2568.4 L955.0,2568.2 L956.5,2569.1 L958.0,2569.5 L959.5,2568.8 L961.0,2570.0 L962.5,2573.2 L964.0,2576.6 L965.5,2578.7 L967.0,2580.8 L968.5,2583.1 L970.0,2585.8 L971.5,2582.4 L973.0,2578.4 L974.5,2574.3 L976.0,2572.0 L977.5,2569.4 L979.0,2567.3 L980.5,2567.0 L982.0,2567.7 L983.5,2568.1 L985.0,2568.9 L986.5,2569.1 L988.0,2569.5 L989.5,2569.9 L991.0,2571.0 L992.5,2570.5 L994.0,2570.8 L995.5,2572.3 L997.0,2577.8 L998.5,2582.4 L1000.0,2587.3 L1001.5,2587.8 L1003.0,2588.0 L1004.5,2588.1 L1006.0,2588.4 L1007.5,2588.8 L1009.0,2589.3 L1010.5,2589.6 L1012.0,2589.9 L1013.5,2590.1 L1015.0,2590.3 L1016.5,2590.9 L1018.0,2591.3 L1019.5,2591.8 L1021.0,2592.0 L1022.5,2592.4 L1024.0,2592.7 L1025.5,2567.3 L1027.0,2558.0 L1028.5,2560.0 L1030.0,2563.1 L1031.5,2565.7 L1033.0,2566.8 L1034.5,2565.7 L1036.0,2566.1 L1037.5,2567.3 L1039.0,2568.1 L1040.5,2569.7 L1042.0,2569.7 L1043.5,2570.4 L1045.0,2570.4 L1046.5,2571.1 L1048.0,2571.1 L1049.5,2570.5 L1051.0,2571.3 L1052.5,2571.7 L1054.0,2573.0 L1055.5,2572.9 L1057.0,2573.6 L1058.5,2573.9 L1060.0,2574.2 L1061.5,2574.9 L1063.0,2575.8 L1064.5,2580.2 L1066.0,2591.8 L1067.5,2591.7 L1069.0,2591.6 L1070.5,2591.7 L1072.0,2591.7 L1073.5,2591.7 L1075.0,2591.7 L1076.5,2591.8 L1078.0,2591.8 L1079.5,2591.8 L1081.0,2591.8 L1082.5,2587.3 L1084.0,2573.3 L1085.5,2573.8 L1087.0,2574.0 L1088.5,2574.8 L1090.0,2574.4 L1091.5,2573.9 L1093.0,2573.5 L1094.5,2574.2 L1096.0,2573.7 L1097.5,2573.8 L1099.0,2573.2 L1100.5,2574.6 L1102.0,2575.5 L1103.5,2575.2 L1105.0,2575.2 L1106.5,2575.0 L1108.0,2576.1 L1109.5,2576.1 L1111.0,2575.6 L1112.5,2575.2 L1114.0,2574.4 L1115.5,2575.3 L1117.0,2575.3 L1118.5,2576.5 L1120.0,2577.4 L1121.5,2578.4 L1123.0,2579.7 L1124.5,2580.6 L1126.0,2581.2 L1127.5,2580.7 L1129.0,2580.1 L1130.5,2579.7 L1132.0,2579.6 L1133.5,2580.2 L1135.0,2576.9 L1136.5,2573.5 L1138.0,2573.6 L1139.5,2574.5 L1141.0,2574.5 L1142.5,2573.6 L1144.0,2573.6 L1145.5,2574.4 L1147.0,2575.0 L1148.5,2574.5 L1150.0,2574.2 L1151.5,2574.5 L1153.0,2575.4 L1154.5,2575.2 L1156.0,2575.1 L1157.5,2574.1 L1159.0,2575.2 L1160.5,2575.4 L1162.0,2575.5 L1163.5,2575.8 L1165.0,2576.3 L1166.5,2577.4 L1168.0,2577.7 L1169.5,2578.0 L1171.0,2577.7 L1172.5,2576.8 L1174.0,2576.3 L1175.5,2576.3 L1177.0,2577.7 L1178.5,2577.9 L1180.0,2578.2 L1181.5,2578.4 L1183.0,2579.0 L1184.5,2579.7 L1186.0,2579.3 L1187.5,2579.8 L1189.0,2580.1 L1190.5,2580.5 L1192.0,2580.0 L1193.5,2580.1 L1195.0,2580.6 L1196.5,2581.0 L1198.0,2581.3 L1199.5,2581.3 L1201.0,2581.9 L1202.5,2582.2 L1204.0,2582.7 L1205.5,2583.5 L1207.0,2584.4 L1208.5,2585.0 L1210.0,2585.1 L1211.5,2585.2 L1213.0,2585.8 L1214.5,2586.7 L1216.0,2587.6 L1217.5,2588.2 L1219.0,2588.5 L1220.5,2588.8 L1222.0,2589.0 L1223.5,2589.6 L1225.0,2590.0 L1226.5,2590.7 L1228.0,2591.3 L1229.5,2592.0 L1231.0,2592.6 L1232.5,2592.7 L1234.0,2592.5 L1235.5,2592.4 L1237.0,2592.4 L1238.5,2592.3 L1240.0,2592.1 L1241.5,2591.8 L1243.0,2587.5 L1244.5,2583.1 L1246.0,2583.5 L1247.5,2583.2 L1249.0,2583.0 L1250.5,2582.9 L1252.0,2583.4 L1253.5,2584.1 L1255.0,2584.3 L1256.5,2583.9 L1258.0,2583.3 L1259.5,2583.1 L1261.0,2583.6 L1262.5,2584.1 L1264.0,2583.9 L1265.5,2583.9 L1267.0,2583.7 L1268.5,2587.1 L1270.0,2589.9 L1271.5,2589.8 L1273.0,2589.7 L1274.5,2590.0 L1276.0,2590.2 L1277.5,2590.1 L1279.0,2590.1 L1280.5,2590.2 L1282.0,2590.3 L1283.5,2590.2 L1285.0,2590.0 L1286.5,2589.9 L1288.0,2590.0 L1289.5,2589.9 L1291.0,2589.8 L1292.5,2589.6 L1294.0,2589.6 L1295.5,2589.7 L1297.0,2589.7 L1298.5,2586.6 L1300.0,2577.2 L1301.5,2578.1 L1303.0,2577.8 L1304.5,2577.3 L1306.0,2577.2 L1307.5,2577.4 L1309.0,2577.3 L1310.5,2577.4 L1312.0,2577.7 L1313.5,2577.7 L1315.0,2577.8 L1316.5,2577.1 L1318.0,2577.6 L1319.5,2577.4 L1321.0,2578.3 L1322.5,2578.4 L1324.0,2578.7 L1325.5,2578.4 L1327.0,2578.2 L1328.5,2577.1 L1330.0,2577.1 L1331.5,2577.5 L1333.0,2577.4 L1334.5,2577.3 L1336.0,2576.7 L1337.5,2577.4 L1339.0,2577.3 L1340.5,2577.1 L1342.0,2576.9 L1343.5,2576.6 L1345.0,2576.9 L1346.5,2577.5 L1348.0,2578.3 L1349.5,2577.8 L1351.0,2577.4 L1352.5,2577.6 L1354.0,2577.7 L1355.5,2577.5 L1357.0,2577.2 L1358.5,2578.2 L1360.0,2578.5 L1361.5,2578.3 L1363.0,2577.4 L1364.5,2576.8 L1366.0,2576.5 L1367.5,2588.7 L1369.0,2592.6 L1370.5,2592.6 L1372.0,2592.5 L1373.5,2592.4 L1375.0,2592.1 L1376.5,2592.0 L1378.0,2591.8 L1379.5,2591.6 L1381.0,2591.2 L1382.5,2590.6 L1384.0,2590.1 L1385.5,2589.3 L1387.0,2589.0 L1388.5,2589.6 L1390.0,2590.6 L1391.5,2591.2 L1393.0,2591.9 L1394.5,2584.7 L1396.0,2577.8 L1397.5,2577.3 L1399.0,2577.2 L1400.5,2577.3 L1402.0,2576.7 L1403.5,2576.8 L1405.0,2576.5 L1406.5,2577.4 L1408.0,2577.4 L1409.5,2576.7 L1411.0,2576.1 L1412.5,2576.1 L1414.0,2576.3 L1415.5,2577.1 L1417.0,2576.6 L1418.5,2576.6 L1420.0,2576.0 L1421.5,2575.9 L1423.0,2576.8 L1424.5,2577.6 L1426.0,2578.5 L1427.5,2578.1 L1429.0,2578.3 L1430.5,2578.9 L1432.0,2579.6 L1433.5,2580.0 L1435.0,2579.8 L1436.5,2580.3 L1438.0,2580.1 L1439.5,2581.3 L1441.0,2581.0 L1442.5,2580.7 L1444.0,2579.5 L1445.5,2579.3 L1447.0,2579.3 L1448.5,2578.9 L1450.0,2578.7 L1451.5,2578.4 L1453.0,2578.6 L1454.5,2577.8 L1456.0,2577.8 L1457.5,2577.3 L1459.0,2576.5 L1460.5,2576.2 L1462.0,2576.8 L1463.5,2578.0 L1465.0,2578.6 L1466.5,2580.0 L1468.0,2581.5 L1469.5,2583.1 L1471.0,2584.0 L1472.5,2584.9 L1474.0,2585.9 L1475.5,2586.9 L1477.0,2588.1 L1478.5,2588.9 L1480.0,2590.1 L1481.5,2590.9 L1483.0,2592.1 L1484.5,2592.7 L1486.0,2592.8 L1487.5,2592.7 L1489.0,2592.7 L1490.5,2592.7 L1492.0,2592.8 L1493.5,2592.8 L1495.0,2592.8 L1496.5,2592.8 L1498.0,2592.7 L1499.5,2592.7 L1501.0,2592.6 L1502.5,2592.6 L1504.0,2592.6 L1505.5,2592.6 L1507.0,2592.7 L1508.5,2592.8 L1510.0,2592.8 L1511.5,2592.8 L1513.0,2592.8 L1514.5,2592.8 L1516.0,2592.7 L1517.5,2592.8 L1519.0,2592.8 L1520.5,2592.8 L1522.0,2592.8 L1523.5,2592.8 L1525.0,2592.8 L1526.5,2592.8 L1528.0,2592.8 L1529.5,2592.7 L1531.0,2592.7 L1532.5,2592.8 L1534.0,2592.8 L1535.5,2592.8 L1537.0,2592.7 L1538.5,2592.7 L1540.0,2592.6 L1541.5,2592.6 L1543.0,2592.7 L1544.5,2592.7 L1546.0,2592.7 L1547.5,2592.7 L1549.0,2592.7 L1550.5,2592.8 L1552.0,2592.8 L1553.5,2592.7 L1555.0,2592.6 L1556.5,2592.7 L1558.0,2592.7 L1559.5,2592.7 L1561.0,2592.7 L1562.5,2592.8 L1564.0,2592.9 L1565.5,2592.9 L1567.0,2592.8 L1568.5,2592.7 L1570.0,2592.7 L1571.5,2592.7 L1573.0,2592.7 L1574.5,2592.7 L1576.0,2592.6 L1577.5,2592.7 L1579.0,2592.7 L1580.5,2592.8 L1582.0,2592.8 L1583.5,2592.7 L1585.0,2592.6 L1586.5,2592.6 L1588.0,2592.7 L1589.5,2592.8 L1591.0,2592.8 L1592.5,2592.8 L1594.0,2592.8 L1595.5,2592.8 L1597.0,2592.9 L1598.5,2592.8 L1600.0,2592.7 L1601.5,2592.6 L1603.0,2592.7 L1604.5,2592.7 L1606.0,2587.0 L1607.5,2577.9 L1609.0,2569.1 L1610.5,2561.8 L1612.0,2554.1 L1613.5,2559.5 L1615.0,2564.3 L1616.5,2568.7 L1618.0,2569.7 L1619.5,2572.8 L1621.0,2574.9 L1622.5,2577.9 L1624.0,2579.8 L1625.5,2582.6 L1627.0,2585.2 L1628.5,2585.6 L1630.0,2585.5 L1631.5,2585.2 L1633.0,2584.6 L1634.5,2584.7 L1636.0,2584.8 L1637.5,2585.0 L1639.0,2585.0 L1640.5,2585.4 L1642.0,2585.2 L1643.5,2585.1 L1645.0,2584.7 L1646.5,2585.2 L1648.0,2585.4 L1649.5,2585.7 L1651.0,2585.6 L1652.5,2585.8 L1654.0,2585.6 L1655.5,2585.3 L1657.0,2585.2 L1658.5,2585.0 L1660.0,2579.2 L1661.5,2572.5 L1663.0,2573.0 L1664.5,2572.5 L1666.0,2572.0 L1667.5,2572.8 L1669.0,2572.8 L1670.5,2573.5 L1672.0,2572.3 L1673.5,2572.9 L1675.0,2572.5 L1676.5,2573.6 L1678.0,2573.6 L1679.5,2573.8 L1681.0,2573.8 L1682.5,2573.5 L1684.0,2573.3 L1685.5,2573.2 L1687.0,2573.2 L1688.5,2573.5 L1690.0,2573.0 L1691.5,2573.2 L1693.0,2574.0 L1694.5,2573.8 L1696.0,2573.4 L1697.5,2573.1 L1699.0,2574.1 L1700.5,2575.1 L1702.0,2574.4 L1703.5,2573.5 L1705.0,2572.5 L1706.5,2572.8 L1708.0,2573.5 L1709.5,2573.4 L1711.0,2578.8 L1712.5,2587.0 L1714.0,2584.6 L1715.5,2576.5 L1717.0,2568.2 L1718.5,2568.0 L1720.0,2569.2 L1721.5,2570.0 L1723.0,2571.6 L1724.5,2570.2 L1726.0,2569.7 L1727.5,2569.4 L1729.0,2570.8 L1730.5,2570.6 L1732.0,2570.1 L1733.5,2570.5 L1735.0,2571.6 L1736.5,2571.2 L1738.0,2570.4 L1739.5,2570.1 L1741.0,2570.0 L1742.5,2569.8 L1744.0,2569.2 L1745.5,2569.9 L1747.0,2570.1 L1748.5,2571.5 L1750.0,2571.4 L1751.5,2572.5 L1753.0,2572.8 L1754.5,2574.8 L1756.0,2576.2 L1757.5,2577.5 L1759.0,2578.9 L1760.5,2580.9 L1762.0,2582.7 L1763.5,2583.9 L1765.0,2585.3 L1766.5,2586.7 L1768.0,2588.0 L1769.5,2589.4 L1771.0,2578.1 L1772.5,2569.3 L1774.0,2571.9 L1775.5,2575.9 L1777.0,2577.0 L1778.5,2577.1 L1780.0,2576.0 L1781.5,2575.2 L1783.0,2574.8 L1784.5,2575.9 L1786.0,2576.3 L1787.5,2576.4 L1789.0,2576.2 L1790.5,2576.5 L1792.0,2576.6 L1793.5,2575.9 L1795.0,2576.0 L1796.5,2575.7 L1798.0,2576.1 L1799.5,2575.3 L1801.0,2575.8 L1802.5,2575.5 L1804.0,2576.3 L1805.5,2576.8 L1807.0,2576.7 L1808.5,2576.8 L1810.0,2576.6 L1811.5,2577.1 L1813.0,2576.7 L1814.5,2576.0 L1816.0,2576.0 L1817.5,2575.4 L1819.0,2576.4 L1820.5,2576.4 L1822.0,2576.5 L1823.5,2576.6 L1825.0,2576.9 L1826.5,2577.0 L1828.0,2577.1 L1829.5,2577.1 L1831.0,2577.5 L1832.5,2576.7 L1834.0,2580.1 L1835.5,2584.9 L1837.0,2582.8 L1838.5,2577.0 L1840.0,2571.8 L1841.5,2572.1 L1843.0,2572.7 L1844.5,2573.3 L1846.0,2575.0 L1847.5,2574.6 L1849.0,2575.8 L1850.5,2575.6 L1852.0,2576.7 L1853.5,2576.4 L1855.0,2577.7 L1856.5,2577.5 L1858.0,2577.5 L1859.5,2576.6 L1861.0,2576.4 L1862.5,2575.6 L1864.0,2575.5 L1865.5,2574.5 L1867.0,2574.5 L1868.5,2574.0 L1870.0,2574.2 L1871.5,2573.9 L1873.0,2573.3 L1874.5,2573.1 L1876.0,2572.5 L1877.5,2568.7 L1879.0,2560.1 L1880.5,2553.5 L1882.0,2548.3 L1883.5,2549.7 L1885.0,2548.9 L1886.5,2547.3 L1888.0,2548.2 L1889.5,2547.8 L1891.0,2549.1 L1892.5,2549.4 L1894.0,2556.5 L1895.5,2561.3 L1897.0,2566.8 L1898.5,2570.6 L1900.0,2576.4 L1901.5,2578.2 L1903.0,2580.3 L1904.5,2581.3 L1906.0,2582.6 L1907.5,2583.8 L1909.0,2585.8 L1910.5,2588.0 L1912.0,2589.9 L1913.5,2590.1 L1915.0,2589.9 L1916.5,2589.8 L1918.0,2589.8 L1919.5,2589.8 L1921.0,2590.0 L1922.5,2590.0 L1924.0,2589.8 L1925.5,2589.8 L1927.0,2589.8 L1928.5,2588.2 L1930.0,2583.1 L1931.5,2577.8 L1933.0,2572.2 L1934.5,2568.1 L1936.0,2567.6 L1937.5,2568.7 L1939.0,2568.0 L1940.5,2567.8 L1942.0,2569.1 L1943.5,2570.7 L1945.0,2570.6 L1946.5,2570.9 L1948.0,2577.7 L1949.5,2589.0 L1951.0,2592.7 L1952.5,2592.8 L1954.0,2592.8 L1955.5,2592.7 L1957.0,2592.6 L1958.5,2592.6 L1960.0,2592.7 L1961.5,2592.6 L1963.0,2592.7 L1964.5,2592.7 L1966.0,2592.8 L1967.5,2592.8 L1969.0,2592.8 L1970.5,2592.8 L1972.0,2592.8 L1973.5,2590.5 L1975.0,2583.8 L1976.5,2579.5 L1978.0,2579.0 L1979.5,2578.3 L1981.0,2578.2 L1982.5,2578.2 L1984.0,2578.3 L1985.5,2577.9 L1987.0,2577.9 L1988.5,2578.4 L1990.0,2578.7 L1991.5,2579.0 L1993.0,2579.2 L1994.5,2578.9 L1996.0,2578.9 L1997.5,2579.2 L1999.0,2579.3 L2000.5,2579.0 L2002.0,2578.6 L2003.5,2578.6 L2005.0,2579.5 L2006.5,2579.6 L2008.0,2580.1 L2009.5,2580.0 L2011.0,2579.6 L2012.5,2579.8 L2014.0,2579.1 L2015.5,2579.2 L2017.0,2579.2 L2018.5,2585.7 L2020.0,2591.8 L2021.5,2591.8 L2023.0,2591.7 L2024.5,2591.8 L2026.0,2591.9 L2027.5,2590.0 L2029.0,2584.0 L2030.5,2579.5 L2032.0,2579.3 L2033.5,2579.2 L2035.0,2580.0 L2036.5,2580.5 L2038.0,2580.5 L2039.5,2580.4 L2041.0,2579.7 L2042.5,2579.9 L2044.0,2579.3 L2045.5,2580.0 L2047.0,2580.4 L2048.5,2581.2 L2050.0,2580.8 L2051.5,2580.4 L2053.0,2580.3 L2054.5,2580.3 L2056.0,2580.4 L2057.5,2580.0 L2059.0,2580.7 L2060.5,2580.9 L2062.0,2581.0 L2063.5,2580.5 L2065.0,2580.8 L2066.5,2581.3 L2068.0,2581.5 L2069.5,2581.4 L2071.0,2580.7 L2072.5,2581.4 L2074.0,2581.6 L2075.5,2581.8 L2077.0,2581.3 L2078.5,2582.6 L2080.0,2587.1 L2081.5,2591.4 L2083.0,2592.8 L2084.5,2592.7 L2086.0,2592.7 L2087.5,2583.7 L2089.0,2558.2 L2090.5,2543.6 L2092.0,2547.7 L2093.5,2549.3 L2095.0,2549.5 L2096.5,2549.9 L2098.0,2554.2 L2099.5,2558.0 L2101.0,2560.3 L2102.5,2562.7 L2104.0,2565.5 L2105.5,2568.9 L2107.0,2570.2 L2108.5,2573.2 L2110.0,2576.0 L2111.5,2579.7 L2113.0,2581.6 L2114.5,2584.7 L2116.0,2587.1 L2117.5,2587.4 L2119.0,2587.1 L2120.5,2587.0 L2122.0,2587.0 L2123.5,2587.5 L2125.0,2588.0 L2126.5,2588.3 L2128.0,2588.4 L2129.5,2588.5 L2131.0,2588.8 L2132.5,2588.7 L2134.0,2588.8 L2135.5,2588.7 L2137.0,2589.1 L2138.5,2589.4 L2140.0,2589.7 L2141.5,2589.9 L2143.0,2590.0 L2144.5,2590.1 L2146.0,2587.8 L2147.5,2583.9 L2149.0,2584.1 L2150.5,2586.2 L2152.0,2587.3 L2153.5,2587.6 L2155.0,2587.9 L2156.5,2587.8 L2158.0,2587.9 L2159.5,2587.9 L2161.0,2587.9 L2162.5,2587.8 L2164.0,2587.9 L2165.5,2588.3 L2167.0,2588.5 L2168.5,2588.6 L2170.0,2588.4 L2171.5,2588.7 L2173.0,2588.6 L2174.5,2588.8 L2176.0,2589.0 L2177.5,2589.2 L2179.0,2589.3 L2180.5,2589.3 L2182.0,2589.6 L2183.5,2589.5 L2185.0,2589.5 L2186.5,2589.7 L2188.0,2590.0 L2189.5,2589.6 L2191.0,2587.5 L2192.5,2585.0 L2194.0,2582.7 L2195.5,2580.2 L2197.0,2578.0 L2198.5,2575.8 L2200.0,2572.6 L2201.5,2569.4 L2203.0,2565.5 L2204.5,2565.6 L2206.0,2567.0 L2207.5,2568.7 L2209.0,2570.9 L2210.5,2570.8 L2212.0,2571.2 L2213.5,2571.0 L2215.0,2570.0 L2216.5,2568.4 L2218.0,2567.7 L2219.5,2567.8 L2221.0,2569.0 L2222.5,2569.8 L2224.0,2569.6 L2225.5,2569.7 L2227.0,2569.4 L2228.5,2569.5 L2230.0,2569.8 L2231.5,2569.7 L2233.0,2571.1 L2234.5,2570.4 L2236.0,2570.0 L2237.5,2569.7 L2239.0,2569.5 L2240.5,2570.3 L2242.0,2569.8 L2243.5,2569.7 L2245.0,2568.9 L2246.5,2569.0 L2248.0,2569.1 L2249.5,2569.9 L2251.0,2569.3 L2252.5,2569.1 L2254.0,2568.1 L2255.5,2568.6 L2257.0,2569.8 L2258.5,2570.0 L2260.0,2571.0 L2261.5,2571.0 L2263.0,2572.3 L2264.5,2571.8 L2266.0,2570.9 L2267.5,2569.9 L2269.0,2569.5 L2270.5,2577.5 L2272.0,2585.3 L2273.5,2585.2 L2275.0,2584.5 L2276.5,2584.1 L2278.0,2583.5 L2279.5,2581.7 L2281.0,2575.3 L2282.5,2569.5 L2284.0,2563.4 L2285.5,2565.0 L2287.0,2564.3 L2288.5,2563.5 L2290.0,2563.4 L2291.5,2564.6 L2293.0,2565.5 L2294.5,2565.4 L2296.0,2565.2 L2297.5,2572.2 L2299.0,2592.7 L2300.5,2592.7 L2302.0,2592.8 L2303.5,2592.7 L2305.0,2592.7 L2306.5,2592.8 L2308.0,2592.8 L2309.5,2592.8 L2311.0,2592.7 L2312.5,2592.7 L2314.0,2592.7 L2315.5,2592.8 L2317.0,2592.8 L2318.5,2592.8 L2320.0,2592.7 L2321.5,2592.8 L2323.0,2592.7 L2324.5,2591.7 L2326.0,2590.6 L2327.5,2589.7 L2329.0,2588.6 L2330.5,2588.0 L2332.0,2588.1 L2333.5,2588.3 L2335.0,2588.3 L2336.5,2588.5 L2338.0,2588.9 L2339.5,2588.9 L2341.0,2588.9 L2342.5,2589.5 L2344.0,2590.9 L2345.5,2591.8 L2347.0,2591.8 L2348.5,2591.7 L2350.0,2591.9 L2351.5,2591.9 L2353.0,2592.0 L2354.5,2591.9 L2356.0,2587.9 L2357.5,2582.2 L2359.0,2580.5 L2360.5,2580.6 L2362.0,2580.3 L2363.5,2580.4 L2365.0,2580.3 L2366.5,2580.7 L2368.0,2581.0 L2369.5,2581.7 L2371.0,2581.6 L2372.5,2581.4 L2374.0,2581.1 L2375.5,2581.1 L2377.0,2581.4 L2378.5,2581.3 L2380.0,2581.3 L2381.5,2581.3 L2383.0,2581.8 L2384.5,2581.7 L2386.0,2581.1 L2387.5,2580.8 L2389.0,2580.9 L2390.5,2581.2 L2392.0,2581.1 L2393.5,2581.5 L2395.0,2582.0 L2396.5,2583.3 L2398.0,2587.8 L2399.5,2590.8 L2401.0,2590.8 L2402.5,2590.7 L2404.0,2590.8 L2405.5,2590.9 L2407.0,2590.9 L2408.5,2590.7 L2410.0,2590.6 L2411.5,2590.8 L2413.0,2590.9 L2414.5,2590.9 L2416.0,2590.7 L2417.5,2590.8 L2419.0,2590.8 L2420.5,2590.8 L2422.0,2590.7 L2423.5,2590.7 L2425.0,2590.7 L2426.5,2590.8 L2428.0,2590.8 L2429.5,2590.9 L2431.0,2591.0 L2432.5,2590.9 L2434.0,2590.9 L2435.5,2590.7 L2437.0,2590.8 L2438.5,2590.9 L2440.0,2591.1 L2441.5,2591.1 L2443.0,2591.1 L2444.5,2589.1 L2446.0,2583.4 L2447.5,2576.6 L2449.0,2570.2 L2450.5,2564.2 L2452.0,2561.9 L2453.5,2560.0 L2455.0,2557.7 L2456.5,2555.9 L2458.0,2554.6 L2459.5,2556.6 L2461.0,2557.2 L2462.5,2558.2 L2464.0,2556.7 L2465.5,2555.7 L2467.0,2554.1 L2468.5,2553.2 L2470.0,2554.4 L2471.5,2555.1 L2473.0,2555.1 L2474.5,2555.0 L2476.0,2555.0 L2477.5,2554.9 L2479.0,2552.1 L2480.5,2551.3 L2482.0,2550.1 L2483.5,2552.4 L2485.0,2552.5 L2486.5,2552.2 L2488.0,2550.6 L2489.5,2550.0 L2491.0,2550.7 L2492.5,2550.7 L2494.0,2552.1 L2495.5,2551.9 L2497.0,2551.8 L2498.5,2551.8 L2500.0,2553.8 L2501.5,2562.8 L2503.0,2572.3 L2504.5,2581.9 L2506.0,2583.4 L2507.5,2580.2 L2509.0,2576.3 L2510.5,2568.3 L2512.0,2558.0 L2513.5,2550.2 L2515.0,2540.9 L2516.5,2544.2 L2518.0,2546.6 L2519.5,2549.2 L2521.0,2553.5 L2522.5,2557.1 L2524.0,2559.3 L2525.5,2561.6 L2527.0,2564.0 L2528.5,2568.1 L2530.0,2572.3 L2531.5,2576.0 L2533.0,2579.0 L2534.5,2581.6 L2536.0,2582.6 L2537.5,2582.8 L2539.0,2583.2 L2540.5,2583.4 L2542.0,2583.2 L2543.5,2583.8 L2545.0,2584.4 L2546.5,2584.5 L2548.0,2584.6 L2549.5,2584.4 L2551.0,2585.0 L2552.5,2584.6 L2554.0,2585.1 L2555.5,2584.9 L2557.0,2585.2 L2558.5,2585.2 L2560.0,2585.7 L2561.5,2578.6 L2563.0,2570.5 L2564.5,2571.7 L2566.0,2573.1 L2567.5,2574.6 L2569.0,2575.6 L2570.5,2575.7 L2572.0,2575.9 L2573.5,2576.0 L2575.0,2576.7 L2576.5,2576.8 L2578.0,2576.1 L2579.5,2576.5 L2581.0,2577.6 L2582.5,2578.6 L2584.0,2577.9 L2585.5,2577.4 L2587.0,2577.4 L2588.5,2581.6 L2590.0,2593.2 L2591.5,2593.1 L2593.0,2593.2 L2594.5,2593.2 L2596.0,2593.2 L2597.5,2593.2 L2599.0,2593.2 L2600.5,2593.3 L2602.0,2593.3 L2603.5,2593.3 L2605.0,2593.2 L2606.5,2593.2 L2608.0,2593.2 L2609.5,2590.2 L2611.0,2580.9 L2612.5,2580.9 L2614.0,2581.5 L2615.5,2581.8 L2617.0,2582.1 L2618.5,2582.0 L2620.0,2582.2 L2621.5,2582.3 L2623.0,2581.9 L2624.5,2581.7 L2626.0,2581.0 L2627.5,2581.2 L2629.0,2581.3 L2630.5,2581.4 L2632.0,2581.0 L2633.5,2580.5 L2635.0,2580.7 L2636.5,2580.7 L2638.0,2581.0 L2639.5,2581.2 L2641.0,2581.3 L2642.5,2580.7 L2644.0,2580.4 L2645.5,2580.8 L2647.0,2581.4 L2648.5,2581.6 L2650.0,2581.2 L2651.5,2581.1 L2653.0,2580.7 L2654.5,2581.2 L2656.0,2580.8 L2657.5,2581.0 L2659.0,2580.8 L2660.5,2581.1 L2662.0,2581.2 L2663.5,2581.5 L2665.0,2581.6 L2666.5,2581.9 L2668.0,2584.5 L2669.5,2587.8 L2671.0,2589.1 L2672.5,2589.2 L2674.0,2589.0 L2675.5,2589.2 L2677.0,2589.4 L2678.5,2589.6 L2680.0,2589.6 L2681.5,2589.8 L2683.0,2590.1 L2684.5,2590.4 L2686.0,2590.5 L2687.5,2590.6 L2689.0,2590.7 L2690.5,2591.2 L2692.0,2591.9 L2693.5,2592.8 L2695.0,2589.2 L2696.5,2583.5 L2698.0,2581.7 L2699.5,2581.8 L2701.0,2582.2 L2702.5,2582.2 L2704.0,2581.9 L2705.5,2581.7 L2707.0,2581.6 L2708.5,2581.9 L2710.0,2581.4 L2711.5,2581.3 L2713.0,2581.0 L2714.5,2580.8 L2716.0,2580.9 L2717.5,2580.6 L2719.0,2581.1 L2720.5,2580.5 L2722.0,2580.8 L2723.5,2580.6 L2725.0,2580.5 L2726.5,2579.9 L2728.0,2580.2 L2729.5,2580.3 L2731.0,2580.4 L2732.5,2580.5 L2734.0,2584.9 L2735.5,2590.9 L2737.0,2592.8 L2738.5,2592.8 L2740.0,2592.9 L2741.5,2592.8 L2743.0,2592.8 L2744.5,2592.7 L2746.0,2592.8 L2747.5,2592.2 L2749.0,2590.7 L2750.5,2589.1 L2752.0,2587.7 L2753.5,2588.0 L2755.0,2588.4 L2756.5,2588.9 L2758.0,2589.3 L2759.5,2589.6 L2761.0,2589.3 L2762.5,2588.5 L2764.0,2587.8 L2765.5,2587.1 L2767.0,2586.7 L2768.5,2585.9 L2770.0,2584.8 L2771.5,2583.9 L2773.0,2583.3 L2774.5,2582.8 L2776.0,2582.4 L2777.5,2582.3 L2779.0,2582.5 L2780.5,2582.2 L2782.0,2582.7 L2783.5,2582.4 L2785.0,2582.6 L2786.5,2582.5 L2788.0,2582.5 L2789.5,2583.0 L2791.0,2583.4 L2792.5,2583.7 L2794.0,2583.2 L2795.5,2583.1 L2797.0,2583.4 L2798.5,2583.8 L2800.0,2583.9 L2801.5,2583.7 L2803.0,2583.8 L2804.5,2583.8 L2806.0,2583.9 L2807.5,2583.7 L2809.0,2583.5 L2810.5,2583.6 L2812.0,2584.0 L2813.5,2584.4 L2815.0,2585.0 L2816.5,2585.3 L2818.0,2585.6 L2819.5,2585.6 L2821.0,2585.9 L2822.5,2586.3 L2824.0,2586.6 L2825.5,2586.8 L2827.0,2587.2 L2828.5,2587.3 L2830.0,2587.6 L2831.5,2587.9 L2833.0,2588.4 L2834.5,2588.8 L2836.0,2589.2 L2837.5,2589.3 L2839.0,2589.3 L2840.5,2589.6 L2842.0,2590.0 L2843.5,2590.4 L2845.0,2590.7 L2846.5,2591.1 L2848.0,2591.5 L2849.5,2591.6 L2851.0,2591.7 L2852.5,2592.0 L2854.0,2592.4 L2855.5,2592.7 L2857.0,2592.8 L2858.5,2592.7 L2860.0,2592.7 L2861.5,2592.8 L2863.0,2592.8 L2864.5,2592.8 L2866.0,2592.7 L2867.5,2592.7 L2869.0,2592.6 L2870.5,2592.5 L2872.0,2592.5 L2873.5,2592.5 L2875.0,2592.6 L2876.5,2592.6 L2878.0,2592.7 L2879.5,2592.6 L2881.0,2592.5 L2882.5,2592.4 L2884.0,2592.4 L2885.5,2592.4 L2887.0,2592.5 L2888.5,2592.5 L2890.0,2592.5 L2891.5,2592.5 L2893.0,2592.4 L2894.5,2592.4 L2896.0,2592.4 L2897.5,2592.5 L2899.0,2592.5 L2900.5,2592.5 L2902.0,2592.4 L2903.5,2592.3 L2905.0,2592.3 L2906.5,2592.4 L2908.0,2592.4 L2909.5,2592.4 L2911.0,2592.3 L2912.5,2592.3 L2914.0,2592.2 L2915.5,2592.2 L2917.0,2592.2 L2918.5,2592.2 L2920.0,2592.2 L2921.5,2592.4 L2923.0,2592.5 L2924.5,2592.7 L2926.0,2592.8 L2927.5,2585.4 L2929.0,2576.9 L2930.5,2571.7 L2932.0,2572.4 L2933.5,2573.5 L2935.0,2575.0 L2936.5,2576.1 L2938.0,2576.9 L2939.5,2578.0 L2941.0,2579.1 L2942.5,2580.6 L2944.0,2581.4 L2945.5,2582.0 L2947.0,2583.0 L2948.5,2584.3 L2950.0,2585.7 L2951.5,2586.9 L2953.0,2587.9 L2954.5,2588.8 L2956.0,2590.1 L2957.5,2591.2 L2959.0,2591.8 L2960.5,2591.9 L2962.0,2592.0 L2963.5,2592.0 L2965.0,2592.1 L2966.5,2592.1 L2968.0,2592.2 L2969.5,2592.2 L2971.0,2592.2 L2972.5,2592.2 L2974.0,2592.3 L2975.5,2592.4 L2977.0,2592.4 L2978.5,2592.4 L2980.0,2592.5 L2981.5,2592.6 L2983.0,2592.7 L2984.5,2592.8 L2986.0,2590.2 L2987.5,2585.9 L2989.0,2581.7 L2990.5,2578.6 L2992.0,2574.6 L2993.5,2574.8 L2995.0,2573.5 L2996.5,2574.2 L2998.0,2574.2 L2999.5,2574.4 L3001.0,2574.6 L3002.5,2573.7 L3004.0,2574.1 L3005.5,2574.4 L3007.0,2574.4 L3008.5,2575.0 L3010.0,2575.2 L3011.5,2576.1 L3013.0,2575.1 L3014.5,2573.9 L3016.0,2573.6 L3017.5,2574.1 L3019.0,2574.2 L3020.5,2573.6 L3022.0,2574.0 L3023.5,2574.8 L3025.0,2575.8 L3026.5,2575.9 L3028.0,2575.8 L3029.5,2575.0 L3031.0,2574.8 L3032.5,2575.1 L3034.0,2574.9 L3035.5,2575.0 L3037.0,2575.2 L3038.5,2575.9 L3040.0,2575.5 L3041.5,2575.5 L3043.0,2575.6 L3044.5,2576.6 L3046.0,2576.5 L3047.5,2576.5 L3049.0,2575.5 L3050.5,2575.7 L3052.0,2575.2 L3053.5,2575.6 L3055.0,2575.2 L3056.5,2575.7 L3058.0,2578.7 L3059.5,2582.7 L3061.0,2586.2 L3062.5,2589.4 L3064.0,2592.7 L3065.5,2592.7 L3067.0,2592.6 L3068.5,2592.7 L3070.0,2592.7 L3071.5,2592.8 L3073.0,2592.8 L3074.5,2592.7 L3076.0,2592.7 L3077.5,2592.7 L3079.0,2592.6 L3080.5,2592.7 L3082.0,2592.6 L3083.5,2592.7 L3085.0,2592.7 L3086.5,2592.7 L3088.0,2592.6 L3089.5,2592.6 L3091.0,2592.7 L3092.5,2589.0 L3094.0,2578.2 L3095.5,2569.9 L3097.0,2571.2 L3098.5,2572.2 L3100.0,2572.9 L3101.5,2572.5 L3103.0,2571.7 L3104.5,2571.3 L3106.0,2572.0 L3107.5,2572.7 L3109.0,2572.5 L3110.5,2572.5 L3112.0,2572.4 L3113.5,2573.5 L3115.0,2573.5 L3116.5,2573.9 L3118.0,2574.0 L3119.5,2573.9 L3121.0,2573.6 L3122.5,2573.6 L3124.0,2572.8 L3125.5,2573.2 L3127.0,2573.0 L3128.5,2570.3 L3130.0,2567.5 L3131.5,2567.8 L3133.0,2567.2 L3134.5,2565.6 L3136.0,2564.5 L3137.5,2564.4 L3139.0,2565.0 L3140.5,2565.1 L3142.0,2566.8 L3143.5,2567.6 L3145.0,2568.7 L3146.5,2568.5 L3148.0,2567.8 L3149.5,2567.8 L3151.0,2567.9 L3152.5,2568.5 L3154.0,2567.8 L3155.5,2567.0 L3157.0,2567.7 L3158.5,2567.9 L3160.0,2569.0 L3161.5,2568.7 L3163.0,2568.9 L3164.5,2568.8 L3166.0,2568.8 L3167.5,2570.0 L3169.0,2570.6 L3170.5,2572.6 L3172.0,2574.2 L3173.5,2576.4 L3175.0,2577.7 L3176.5,2578.5 L3178.0,2579.6 L3179.5,2581.1 L3181.0,2583.0 L3182.5,2584.5 L3184.0,2585.2 L3185.5,2586.5 L3187.0,2587.6 L3188.5,2589.4 L3190.0,2590.8 L3191.5,2591.8 L3193.0,2591.8 L3194.5,2591.8 L3196.0,2591.8 L3197.5,2591.8 L3199.0,2591.9 L3200.5,2591.9 L3202.0,2591.9 L3203.5,2591.8 L3205.0,2592.0 L3206.5,2592.0 L3208.0,2592.1 L3209.5,2592.1 L3211.0,2592.0 L3212.5,2592.1 L3214.0,2592.0 L3215.5,2592.2 L3217.0,2592.1 L3218.5,2592.1 L3220.0,2592.1 L3221.5,2592.2 L3223.0,2592.1 L3224.5,2592.0 L3226.0,2592.1 L3227.5,2592.1 L3229.0,2592.3 L3230.5,2592.2 L3232.0,2592.1 L3233.5,2592.2 L3235.0,2592.2 L3236.5,2592.3 L3238.0,2592.2 L3239.5,2592.3 L3241.0,2592.2 L3242.5,2592.3 L3244.0,2592.3 L3245.5,2592.3 L3247.0,2592.3 L3248.5,2592.4 L3250.0,2592.4 L3251.5,2592.4 L3253.0,2592.3 L3254.5,2592.2 L3256.0,2592.3 L3257.5,2592.3 L3259.0,2592.4 L3260.5,2592.4 L3262.0,2592.4 L3263.5,2592.4 L3265.0,2592.4 L3266.5,2592.4 L3268.0,2592.4 L3269.5,2592.4 L3271.0,2592.5 L3272.5,2592.5 L3274.0,2592.6 L3275.5,2592.6 L3277.0,2592.6 L3278.5,2592.6 L3280.0,2592.6 L3281.5,2592.7 L3283.0,2592.7 L3284.5,2592.6 L3286.0,2592.5 L3287.5,2592.5 L3289.0,2592.6 L3290.5,2592.6 L3292.0,2592.7 L3293.5,2592.6 L3295.0,2592.0 L3296.5,2591.6 L3298.0,2591.1 L3299.5,2590.8 L3301.0,2590.4 L3302.5,2589.9 L3304.0,2589.3 L3305.5,2588.8 L3307.0,2588.5 L3308.5,2588.1 L3310.0,2587.4 L3311.5,2587.0 L3313.0,2586.4 L3314.5,2586.2 L3316.0,2585.6 L3317.5,2585.0 L3319.0,2584.2 L3320.5,2583.3 L3322.0,2583.5 L3323.5,2582.8 L3325.0,2583.0 L3325.0,2606.2 L3323.5,2606.4 L3322.0,2605.7 L3320.5,2605.9 L3319.0,2605.0 L3317.5,2604.2 L3316.0,2603.6 L3314.5,2603.0 L3313.0,2602.8 L3311.5,2602.2 L3310.0,2601.8 L3308.5,2601.1 L3307.0,2600.7 L3305.5,2600.4 L3304.0,2599.9 L3302.5,2599.3 L3301.0,2598.8 L3299.5,2598.4 L3298.0,2598.1 L3296.5,2597.6 L3295.0,2597.2 L3293.5,2596.6 L3292.0,2596.5 L3290.5,2596.6 L3289.0,2596.6 L3287.5,2596.7 L3286.0,2596.7 L3284.5,2596.6 L3283.0,2596.5 L3281.5,2596.5 L3280.0,2596.6 L3278.5,2596.6 L3277.0,2596.6 L3275.5,2596.6 L3274.0,2596.6 L3272.5,2596.7 L3271.0,2596.7 L3269.5,2596.8 L3268.0,2596.8 L3266.5,2596.8 L3265.0,2596.8 L3263.5,2596.8 L3262.0,2596.8 L3260.5,2596.8 L3259.0,2596.8 L3257.5,2596.9 L3256.0,2596.9 L3254.5,2597.0 L3253.0,2596.9 L3251.5,2596.8 L3250.0,2596.8 L3248.5,2596.8 L3247.0,2596.9 L3245.5,2596.9 L3244.0,2596.9 L3242.5,2596.9 L3241.0,2597.0 L3239.5,2596.9 L3238.0,2597.0 L3236.5,2596.9 L3235.0,2597.0 L3233.5,2597.0 L3232.0,2597.1 L3230.5,2597.0 L3229.0,2596.9 L3227.5,2597.1 L3226.0,2597.1 L3224.5,2597.2 L3223.0,2597.1 L3221.5,2597.0 L3220.0,2597.1 L3218.5,2597.1 L3217.0,2597.1 L3215.5,2597.0 L3214.0,2597.2 L3212.5,2597.1 L3211.0,2597.2 L3209.5,2597.1 L3208.0,2597.1 L3206.5,2597.2 L3205.0,2597.2 L3203.5,2597.4 L3202.0,2597.3 L3200.5,2597.3 L3199.0,2597.3 L3197.5,2597.4 L3196.0,2597.4 L3194.5,2597.4 L3193.0,2597.4 L3191.5,2597.4 L3190.0,2598.4 L3188.5,2599.8 L3187.0,2601.6 L3185.5,2602.7 L3184.0,2604.0 L3182.5,2604.7 L3181.0,2606.2 L3179.5,2608.1 L3178.0,2609.6 L3176.5,2610.7 L3175.0,2611.5 L3173.5,2612.8 L3172.0,2615.0 L3170.5,2616.6 L3169.0,2618.6 L3167.5,2619.2 L3166.0,2620.4 L3164.5,2620.4 L3163.0,2620.3 L3161.5,2620.5 L3160.0,2620.2 L3158.5,2621.3 L3157.0,2621.5 L3155.5,2622.2 L3154.0,2621.4 L3152.5,2620.7 L3151.0,2621.3 L3149.5,2621.4 L3148.0,2621.4 L3146.5,2620.7 L3145.0,2620.5 L3143.5,2621.6 L3142.0,2622.4 L3140.5,2624.1 L3139.0,2624.2 L3137.5,2624.8 L3136.0,2624.7 L3134.5,2623.6 L3133.0,2622.0 L3131.5,2621.4 L3130.0,2621.7 L3128.5,2618.9 L3127.0,2616.2 L3125.5,2616.0 L3124.0,2616.4 L3122.5,2615.6 L3121.0,2615.6 L3119.5,2615.3 L3118.0,2615.2 L3116.5,2615.3 L3115.0,2615.7 L3113.5,2615.7 L3112.0,2616.8 L3110.5,2616.7 L3109.0,2616.7 L3107.5,2616.5 L3106.0,2617.2 L3104.5,2617.9 L3103.0,2617.5 L3101.5,2616.7 L3100.0,2616.3 L3098.5,2617.0 L3097.0,2618.0 L3095.5,2619.3 L3094.0,2611.0 L3092.5,2600.2 L3091.0,2596.5 L3089.5,2596.6 L3088.0,2596.6 L3086.5,2596.5 L3085.0,2596.5 L3083.5,2596.5 L3082.0,2596.6 L3080.5,2596.5 L3079.0,2596.6 L3077.5,2596.5 L3076.0,2596.5 L3074.5,2596.5 L3073.0,2596.4 L3071.5,2596.4 L3070.0,2596.5 L3068.5,2596.5 L3067.0,2596.6 L3065.5,2596.5 L3064.0,2596.5 L3062.5,2599.8 L3061.0,2603.0 L3059.5,2606.5 L3058.0,2610.5 L3056.5,2613.5 L3055.0,2614.0 L3053.5,2613.6 L3052.0,2614.0 L3050.5,2613.5 L3049.0,2613.7 L3047.5,2612.7 L3046.0,2612.7 L3044.5,2612.6 L3043.0,2613.6 L3041.5,2613.7 L3040.0,2613.7 L3038.5,2613.3 L3037.0,2614.0 L3035.5,2614.2 L3034.0,2614.3 L3032.5,2614.1 L3031.0,2614.4 L3029.5,2614.2 L3028.0,2613.4 L3026.5,2613.3 L3025.0,2613.4 L3023.5,2614.4 L3022.0,2615.2 L3020.5,2615.6 L3019.0,2615.0 L3017.5,2615.1 L3016.0,2615.6 L3014.5,2615.3 L3013.0,2614.1 L3011.5,2613.1 L3010.0,2614.0 L3008.5,2614.2 L3007.0,2614.8 L3005.5,2614.8 L3004.0,2615.1 L3002.5,2615.5 L3001.0,2614.6 L2999.5,2614.8 L2998.0,2615.0 L2996.5,2615.0 L2995.0,2615.7 L2993.5,2614.4 L2992.0,2614.6 L2990.5,2610.6 L2989.0,2607.5 L2987.5,2603.3 L2986.0,2599.0 L2984.5,2596.4 L2983.0,2596.5 L2981.5,2596.6 L2980.0,2596.7 L2978.5,2596.8 L2977.0,2596.8 L2975.5,2596.8 L2974.0,2596.9 L2972.5,2597.0 L2971.0,2597.0 L2969.5,2597.0 L2968.0,2597.0 L2966.5,2597.1 L2965.0,2597.1 L2963.5,2597.2 L2962.0,2597.2 L2960.5,2597.3 L2959.0,2597.4 L2957.5,2598.0 L2956.0,2599.1 L2954.5,2600.4 L2953.0,2601.3 L2951.5,2602.3 L2950.0,2603.5 L2948.5,2604.9 L2947.0,2606.2 L2945.5,2607.2 L2944.0,2607.8 L2942.5,2608.6 L2941.0,2610.1 L2939.5,2611.2 L2938.0,2612.3 L2936.5,2613.1 L2935.0,2614.2 L2933.5,2615.7 L2932.0,2616.8 L2930.5,2617.5 L2929.0,2612.3 L2927.5,2603.8 L2926.0,2596.4 L2924.5,2596.5 L2923.0,2596.7 L2921.5,2596.8 L2920.0,2597.0 L2918.5,2597.0 L2917.0,2597.0 L2915.5,2597.0 L2914.0,2597.0 L2912.5,2596.9 L2911.0,2596.9 L2909.5,2596.8 L2908.0,2596.8 L2906.5,2596.8 L2905.0,2596.9 L2903.5,2596.9 L2902.0,2596.8 L2900.5,2596.7 L2899.0,2596.7 L2897.5,2596.7 L2896.0,2596.8 L2894.5,2596.8 L2893.0,2596.8 L2891.5,2596.7 L2890.0,2596.7 L2888.5,2596.7 L2887.0,2596.7 L2885.5,2596.8 L2884.0,2596.8 L2882.5,2596.8 L2881.0,2596.7 L2879.5,2596.6 L2878.0,2596.5 L2876.5,2596.6 L2875.0,2596.6 L2873.5,2596.7 L2872.0,2596.7 L2870.5,2596.7 L2869.0,2596.6 L2867.5,2596.5 L2866.0,2596.5 L2864.5,2596.4 L2863.0,2596.4 L2861.5,2596.4 L2860.0,2596.5 L2858.5,2596.5 L2857.0,2596.4 L2855.5,2596.5 L2854.0,2596.8 L2852.5,2597.2 L2851.0,2597.5 L2849.5,2597.6 L2848.0,2597.7 L2846.5,2598.1 L2845.0,2598.5 L2843.5,2598.8 L2842.0,2599.2 L2840.5,2599.6 L2839.0,2599.9 L2837.5,2599.9 L2836.0,2600.0 L2834.5,2600.4 L2833.0,2600.8 L2831.5,2601.3 L2830.0,2601.6 L2828.5,2601.9 L2827.0,2602.0 L2825.5,2602.4 L2824.0,2602.6 L2822.5,2602.9 L2821.0,2603.3 L2819.5,2603.6 L2818.0,2603.6 L2816.5,2603.9 L2815.0,2604.2 L2813.5,2604.8 L2812.0,2605.2 L2810.5,2605.6 L2809.0,2605.7 L2807.5,2605.5 L2806.0,2605.3 L2804.5,2605.4 L2803.0,2605.4 L2801.5,2605.5 L2800.0,2605.3 L2798.5,2605.4 L2797.0,2605.8 L2795.5,2606.1 L2794.0,2606.0 L2792.5,2605.5 L2791.0,2605.8 L2789.5,2606.2 L2788.0,2606.7 L2786.5,2606.7 L2785.0,2606.6 L2783.5,2606.8 L2782.0,2606.5 L2780.5,2607.0 L2779.0,2606.7 L2777.5,2606.9 L2776.0,2606.8 L2774.5,2606.4 L2773.0,2605.9 L2771.5,2605.3 L2770.0,2604.4 L2768.5,2603.3 L2767.0,2602.5 L2765.5,2602.1 L2764.0,2601.4 L2762.5,2600.7 L2761.0,2599.9 L2759.5,2599.6 L2758.0,2599.9 L2756.5,2600.3 L2755.0,2600.8 L2753.5,2601.2 L2752.0,2601.5 L2750.5,2600.1 L2749.0,2598.5 L2747.5,2597.0 L2746.0,2596.4 L2744.5,2596.5 L2743.0,2596.4 L2741.5,2596.4 L2740.0,2596.3 L2738.5,2596.4 L2737.0,2596.4 L2735.5,2598.3 L2734.0,2604.3 L2732.5,2608.7 L2731.0,2608.8 L2729.5,2608.9 L2728.0,2609.0 L2726.5,2609.3 L2725.0,2608.7 L2723.5,2608.6 L2722.0,2608.4 L2720.5,2608.7 L2719.0,2608.1 L2717.5,2608.6 L2716.0,2608.3 L2714.5,2608.4 L2713.0,2608.2 L2711.5,2607.9 L2710.0,2607.8 L2708.5,2607.3 L2707.0,2607.6 L2705.5,2607.5 L2704.0,2607.3 L2702.5,2607.0 L2701.0,2607.0 L2699.5,2607.4 L2698.0,2607.5 L2696.5,2605.7 L2695.0,2600.0 L2693.5,2596.4 L2692.0,2597.3 L2690.5,2598.0 L2689.0,2598.5 L2687.5,2598.6 L2686.0,2598.7 L2684.5,2598.8 L2683.0,2599.1 L2681.5,2599.4 L2680.0,2599.6 L2678.5,2599.6 L2677.0,2599.8 L2675.5,2600.0 L2674.0,2600.2 L2672.5,2600.0 L2671.0,2600.1 L2669.5,2601.4 L2668.0,2604.7 L2666.5,2607.3 L2665.0,2607.6 L2663.5,2607.7 L2662.0,2608.0 L2660.5,2608.1 L2659.0,2608.4 L2657.5,2608.2 L2656.0,2608.4 L2654.5,2608.0 L2653.0,2608.5 L2651.5,2608.1 L2650.0,2608.0 L2648.5,2607.6 L2647.0,2607.8 L2645.5,2608.4 L2644.0,2608.8 L2642.5,2608.5 L2641.0,2607.9 L2639.5,2608.0 L2638.0,2608.2 L2636.5,2608.5 L2635.0,2608.5 L2633.5,2608.7 L2632.0,2608.2 L2630.5,2607.8 L2629.0,2607.9 L2627.5,2608.0 L2626.0,2608.2 L2624.5,2607.5 L2623.0,2607.3 L2621.5,2606.9 L2620.0,2607.0 L2618.5,2607.2 L2617.0,2607.1 L2615.5,2607.4 L2614.0,2607.7 L2612.5,2608.3 L2611.0,2608.3 L2609.5,2599.0 L2608.0,2596.0 L2606.5,2596.0 L2605.0,2596.0 L2603.5,2595.9 L2602.0,2595.9 L2600.5,2595.9 L2599.0,2596.0 L2597.5,2596.0 L2596.0,2596.0 L2594.5,2596.0 L2593.0,2596.0 L2591.5,2596.1 L2590.0,2596.0 L2588.5,2607.6 L2587.0,2611.8 L2585.5,2611.8 L2584.0,2611.3 L2582.5,2610.6 L2581.0,2611.6 L2579.5,2612.7 L2578.0,2613.1 L2576.5,2612.4 L2575.0,2612.5 L2573.5,2613.2 L2572.0,2613.3 L2570.5,2613.5 L2569.0,2613.6 L2567.5,2614.6 L2566.0,2616.1 L2564.5,2617.5 L2563.0,2618.7 L2561.5,2610.6 L2560.0,2603.5 L2558.5,2604.0 L2557.0,2604.0 L2555.5,2604.3 L2554.0,2604.1 L2552.5,2604.6 L2551.0,2604.2 L2549.5,2604.8 L2548.0,2604.6 L2546.5,2604.7 L2545.0,2604.8 L2543.5,2605.4 L2542.0,2606.0 L2540.5,2605.8 L2539.0,2606.0 L2537.5,2606.4 L2536.0,2606.6 L2534.5,2607.6 L2533.0,2610.2 L2531.5,2613.2 L2530.0,2616.9 L2528.5,2621.1 L2527.0,2625.2 L2525.5,2627.6 L2524.0,2629.9 L2522.5,2632.1 L2521.0,2635.7 L2519.5,2640.0 L2518.0,2642.6 L2516.5,2645.0 L2515.0,2648.3 L2513.5,2639.0 L2512.0,2631.2 L2510.5,2620.9 L2509.0,2612.9 L2507.5,2609.0 L2506.0,2605.8 L2504.5,2607.3 L2503.0,2616.9 L2501.5,2626.4 L2500.0,2635.4 L2498.5,2637.4 L2497.0,2637.4 L2495.5,2637.3 L2494.0,2637.1 L2492.5,2638.5 L2491.0,2638.5 L2489.5,2639.2 L2488.0,2638.6 L2486.5,2637.0 L2485.0,2636.7 L2483.5,2636.8 L2482.0,2639.1 L2480.5,2637.9 L2479.0,2637.1 L2477.5,2634.3 L2476.0,2634.2 L2474.5,2634.2 L2473.0,2634.1 L2471.5,2634.1 L2470.0,2634.8 L2468.5,2636.0 L2467.0,2635.1 L2465.5,2633.5 L2464.0,2632.5 L2462.5,2631.0 L2461.0,2632.0 L2459.5,2632.6 L2458.0,2634.6 L2456.5,2633.3 L2455.0,2631.5 L2453.5,2629.2 L2452.0,2627.3 L2450.5,2625.0 L2449.0,2619.0 L2447.5,2612.6 L2446.0,2605.8 L2444.5,2600.1 L2443.0,2598.1 L2441.5,2598.1 L2440.0,2598.1 L2438.5,2598.3 L2437.0,2598.4 L2435.5,2598.5 L2434.0,2598.3 L2432.5,2598.3 L2431.0,2598.2 L2429.5,2598.3 L2428.0,2598.4 L2426.5,2598.4 L2425.0,2598.5 L2423.5,2598.5 L2422.0,2598.5 L2420.5,2598.4 L2419.0,2598.4 L2417.5,2598.4 L2416.0,2598.5 L2414.5,2598.3 L2413.0,2598.3 L2411.5,2598.4 L2410.0,2598.6 L2408.5,2598.5 L2407.0,2598.3 L2405.5,2598.3 L2404.0,2598.4 L2402.5,2598.5 L2401.0,2598.4 L2399.5,2598.4 L2398.0,2601.4 L2396.5,2605.9 L2395.0,2607.2 L2393.5,2607.7 L2392.0,2608.1 L2390.5,2608.0 L2389.0,2608.3 L2387.5,2608.4 L2386.0,2608.1 L2384.5,2607.5 L2383.0,2607.4 L2381.5,2607.9 L2380.0,2607.9 L2378.5,2607.9 L2377.0,2607.8 L2375.5,2608.1 L2374.0,2608.1 L2372.5,2607.8 L2371.0,2607.6 L2369.5,2607.5 L2368.0,2608.2 L2366.5,2608.5 L2365.0,2608.9 L2363.5,2608.8 L2362.0,2608.9 L2360.5,2608.6 L2359.0,2608.7 L2357.5,2607.0 L2356.0,2601.3 L2354.5,2597.3 L2353.0,2597.2 L2351.5,2597.3 L2350.0,2597.3 L2348.5,2597.5 L2347.0,2597.4 L2345.5,2597.4 L2344.0,2598.3 L2342.5,2599.7 L2341.0,2600.3 L2339.5,2600.3 L2338.0,2600.3 L2336.5,2600.7 L2335.0,2600.9 L2333.5,2600.9 L2332.0,2601.1 L2330.5,2601.2 L2329.0,2600.6 L2327.5,2599.5 L2326.0,2598.6 L2324.5,2597.5 L2323.0,2596.5 L2321.5,2596.4 L2320.0,2596.5 L2318.5,2596.4 L2317.0,2596.4 L2315.5,2596.4 L2314.0,2596.5 L2312.5,2596.5 L2311.0,2596.5 L2309.5,2596.4 L2308.0,2596.4 L2306.5,2596.4 L2305.0,2596.5 L2303.5,2596.5 L2302.0,2596.4 L2300.5,2596.5 L2299.0,2596.5 L2297.5,2617.0 L2296.0,2624.0 L2294.5,2623.8 L2293.0,2623.7 L2291.5,2624.6 L2290.0,2625.8 L2288.5,2625.7 L2287.0,2624.9 L2285.5,2624.2 L2284.0,2625.8 L2282.5,2619.7 L2281.0,2613.9 L2279.5,2607.5 L2278.0,2605.7 L2276.5,2605.1 L2275.0,2604.7 L2273.5,2604.0 L2272.0,2603.9 L2270.5,2611.7 L2269.0,2619.7 L2267.5,2619.3 L2266.0,2618.3 L2264.5,2617.4 L2263.0,2616.9 L2261.5,2618.2 L2260.0,2618.2 L2258.5,2619.2 L2257.0,2619.4 L2255.5,2620.6 L2254.0,2621.1 L2252.5,2620.1 L2251.0,2619.9 L2249.5,2619.3 L2248.0,2620.1 L2246.5,2620.2 L2245.0,2620.3 L2243.5,2619.5 L2242.0,2619.4 L2240.5,2618.9 L2239.0,2619.7 L2237.5,2619.5 L2236.0,2619.2 L2234.5,2618.8 L2233.0,2618.1 L2231.5,2619.5 L2230.0,2619.4 L2228.5,2619.7 L2227.0,2619.8 L2225.5,2619.5 L2224.0,2619.6 L2222.5,2619.4 L2221.0,2620.2 L2219.5,2621.4 L2218.0,2621.5 L2216.5,2620.8 L2215.0,2619.2 L2213.5,2618.2 L2212.0,2618.0 L2210.5,2618.4 L2209.0,2618.3 L2207.5,2620.5 L2206.0,2622.2 L2204.5,2623.6 L2203.0,2623.7 L2201.5,2619.8 L2200.0,2616.6 L2198.5,2613.4 L2197.0,2611.2 L2195.5,2609.0 L2194.0,2606.5 L2192.5,2604.2 L2191.0,2601.7 L2189.5,2599.6 L2188.0,2599.2 L2186.5,2599.5 L2185.0,2599.7 L2183.5,2599.7 L2182.0,2599.6 L2180.5,2599.9 L2179.0,2599.9 L2177.5,2600.0 L2176.0,2600.2 L2174.5,2600.4 L2173.0,2600.6 L2171.5,2600.5 L2170.0,2600.8 L2168.5,2600.6 L2167.0,2600.7 L2165.5,2600.9 L2164.0,2601.3 L2162.5,2601.4 L2161.0,2601.3 L2159.5,2601.3 L2158.0,2601.3 L2156.5,2601.4 L2155.0,2601.3 L2153.5,2601.6 L2152.0,2601.9 L2150.5,2603.0 L2149.0,2605.1 L2147.5,2605.3 L2146.0,2601.4 L2144.5,2599.1 L2143.0,2599.2 L2141.5,2599.3 L2140.0,2599.5 L2138.5,2599.8 L2137.0,2600.1 L2135.5,2600.5 L2134.0,2600.4 L2132.5,2600.5 L2131.0,2600.4 L2129.5,2600.7 L2128.0,2600.8 L2126.5,2600.9 L2125.0,2601.2 L2123.5,2601.7 L2122.0,2602.2 L2120.5,2602.2 L2119.0,2602.1 L2117.5,2601.8 L2116.0,2602.1 L2114.5,2604.5 L2113.0,2607.6 L2111.5,2609.5 L2110.0,2613.2 L2108.5,2616.0 L2107.0,2619.0 L2105.5,2620.3 L2104.0,2623.7 L2102.5,2626.5 L2101.0,2628.9 L2099.5,2631.2 L2098.0,2635.0 L2096.5,2639.3 L2095.0,2639.7 L2093.5,2639.9 L2092.0,2641.5 L2090.5,2645.6 L2089.0,2631.0 L2087.5,2605.5 L2086.0,2596.5 L2084.5,2596.5 L2083.0,2596.4 L2081.5,2597.8 L2080.0,2602.1 L2078.5,2606.6 L2077.0,2607.9 L2075.5,2607.4 L2074.0,2607.6 L2072.5,2607.8 L2071.0,2608.5 L2069.5,2607.8 L2068.0,2607.7 L2066.5,2607.9 L2065.0,2608.4 L2063.5,2608.7 L2062.0,2608.2 L2060.5,2608.3 L2059.0,2608.5 L2057.5,2609.2 L2056.0,2608.8 L2054.5,2608.9 L2053.0,2608.9 L2051.5,2608.8 L2050.0,2608.4 L2048.5,2608.0 L2047.0,2608.8 L2045.5,2609.2 L2044.0,2609.9 L2042.5,2609.3 L2041.0,2609.5 L2039.5,2608.8 L2038.0,2608.7 L2036.5,2608.7 L2035.0,2609.2 L2033.5,2610.0 L2032.0,2609.9 L2030.5,2609.7 L2029.0,2605.2 L2027.5,2599.2 L2026.0,2597.3 L2024.5,2597.4 L2023.0,2597.5 L2021.5,2597.4 L2020.0,2597.4 L2018.5,2603.5 L2017.0,2610.0 L2015.5,2610.0 L2014.0,2610.1 L2012.5,2609.4 L2011.0,2609.6 L2009.5,2609.2 L2008.0,2609.1 L2006.5,2609.6 L2005.0,2609.7 L2003.5,2610.6 L2002.0,2610.6 L2000.5,2610.2 L1999.0,2609.9 L1997.5,2610.0 L1996.0,2610.3 L1994.5,2610.3 L1993.0,2610.0 L1991.5,2610.2 L1990.0,2610.5 L1988.5,2610.8 L1987.0,2611.3 L1985.5,2611.3 L1984.0,2610.9 L1982.5,2611.0 L1981.0,2611.0 L1979.5,2610.9 L1978.0,2610.2 L1976.5,2609.7 L1975.0,2605.4 L1973.5,2598.7 L1972.0,2596.4 L1970.5,2596.4 L1969.0,2596.4 L1967.5,2596.4 L1966.0,2596.4 L1964.5,2596.5 L1963.0,2596.5 L1961.5,2596.6 L1960.0,2596.5 L1958.5,2596.6 L1957.0,2596.6 L1955.5,2596.5 L1954.0,2596.4 L1952.5,2596.4 L1951.0,2596.5 L1949.5,2600.2 L1948.0,2611.5 L1946.5,2618.3 L1945.0,2618.6 L1943.5,2618.5 L1942.0,2620.1 L1940.5,2621.4 L1939.0,2621.2 L1937.5,2620.5 L1936.0,2621.6 L1934.5,2621.1 L1933.0,2617.0 L1931.5,2611.4 L1930.0,2606.1 L1928.5,2601.0 L1927.0,2599.4 L1925.5,2599.4 L1924.0,2599.4 L1922.5,2599.2 L1921.0,2599.2 L1919.5,2599.4 L1918.0,2599.4 L1916.5,2599.4 L1915.0,2599.3 L1913.5,2599.1 L1912.0,2599.3 L1910.5,2601.2 L1909.0,2603.4 L1907.5,2605.4 L1906.0,2606.6 L1904.5,2607.9 L1903.0,2608.9 L1901.5,2611.0 L1900.0,2612.8 L1898.5,2618.6 L1897.0,2622.4 L1895.5,2627.9 L1894.0,2632.7 L1892.5,2639.8 L1891.0,2640.1 L1889.5,2641.4 L1888.0,2641.0 L1886.5,2641.9 L1885.0,2640.3 L1883.5,2639.5 L1882.0,2640.9 L1880.5,2635.7 L1879.0,2629.1 L1877.5,2620.5 L1876.0,2616.7 L1874.5,2616.1 L1873.0,2615.9 L1871.5,2615.3 L1870.0,2615.0 L1868.5,2615.2 L1867.0,2614.7 L1865.5,2614.7 L1864.0,2613.7 L1862.5,2613.6 L1861.0,2612.8 L1859.5,2612.6 L1858.0,2611.7 L1856.5,2611.7 L1855.0,2611.5 L1853.5,2612.8 L1852.0,2612.5 L1850.5,2613.6 L1849.0,2613.4 L1847.5,2614.6 L1846.0,2614.2 L1844.5,2615.9 L1843.0,2616.5 L1841.5,2617.1 L1840.0,2617.4 L1838.5,2612.2 L1837.0,2606.4 L1835.5,2604.3 L1834.0,2609.1 L1832.5,2612.5 L1831.0,2611.7 L1829.5,2612.1 L1828.0,2612.1 L1826.5,2612.2 L1825.0,2612.3 L1823.5,2612.6 L1822.0,2612.7 L1820.5,2612.8 L1819.0,2612.8 L1817.5,2613.8 L1816.0,2613.2 L1814.5,2613.2 L1813.0,2612.5 L1811.5,2612.1 L1810.0,2612.6 L1808.5,2612.4 L1807.0,2612.5 L1805.5,2612.4 L1804.0,2612.9 L1802.5,2613.7 L1801.0,2613.4 L1799.5,2613.9 L1798.0,2613.1 L1796.5,2613.5 L1795.0,2613.2 L1793.5,2613.3 L1792.0,2612.6 L1790.5,2612.7 L1789.0,2613.0 L1787.5,2612.8 L1786.0,2612.9 L1784.5,2613.3 L1783.0,2614.4 L1781.5,2614.0 L1780.0,2613.2 L1778.5,2612.1 L1777.0,2612.2 L1775.5,2613.3 L1774.0,2617.3 L1772.5,2619.9 L1771.0,2611.1 L1769.5,2599.8 L1768.0,2601.2 L1766.5,2602.5 L1765.0,2603.9 L1763.5,2605.3 L1762.0,2606.5 L1760.5,2608.3 L1759.0,2610.3 L1757.5,2611.7 L1756.0,2613.0 L1754.5,2614.4 L1753.0,2616.4 L1751.5,2616.7 L1750.0,2617.8 L1748.5,2617.7 L1747.0,2619.1 L1745.5,2619.3 L1744.0,2620.0 L1742.5,2619.4 L1741.0,2619.2 L1739.5,2619.1 L1738.0,2618.8 L1736.5,2618.0 L1735.0,2617.6 L1733.5,2618.7 L1732.0,2619.1 L1730.5,2618.6 L1729.0,2618.4 L1727.5,2619.8 L1726.0,2619.5 L1724.5,2619.0 L1723.0,2617.6 L1721.5,2619.2 L1720.0,2620.0 L1718.5,2621.2 L1717.0,2621.0 L1715.5,2612.7 L1714.0,2604.6 L1712.5,2602.2 L1711.0,2610.4 L1709.5,2615.8 L1708.0,2615.7 L1706.5,2616.4 L1705.0,2616.7 L1703.5,2615.7 L1702.0,2614.8 L1700.5,2614.1 L1699.0,2615.1 L1697.5,2616.1 L1696.0,2615.8 L1694.5,2615.4 L1693.0,2615.2 L1691.5,2616.0 L1690.0,2616.2 L1688.5,2615.7 L1687.0,2616.0 L1685.5,2616.0 L1684.0,2615.9 L1682.5,2615.7 L1681.0,2615.4 L1679.5,2615.4 L1678.0,2615.6 L1676.5,2615.6 L1675.0,2616.7 L1673.5,2616.3 L1672.0,2616.9 L1670.5,2615.7 L1669.0,2616.4 L1667.5,2616.4 L1666.0,2617.2 L1664.5,2616.7 L1663.0,2616.2 L1661.5,2616.7 L1660.0,2610.0 L1658.5,2604.2 L1657.0,2604.0 L1655.5,2603.9 L1654.0,2603.6 L1652.5,2603.4 L1651.0,2603.6 L1649.5,2603.5 L1648.0,2603.8 L1646.5,2604.0 L1645.0,2604.5 L1643.5,2604.1 L1642.0,2604.0 L1640.5,2603.8 L1639.0,2604.2 L1637.5,2604.2 L1636.0,2604.4 L1634.5,2604.5 L1633.0,2604.6 L1631.5,2604.0 L1630.0,2603.7 L1628.5,2603.6 L1627.0,2604.0 L1625.5,2606.6 L1624.0,2609.4 L1622.5,2611.3 L1621.0,2614.3 L1619.5,2616.4 L1618.0,2619.5 L1616.5,2620.5 L1615.0,2624.9 L1613.5,2629.7 L1612.0,2635.1 L1610.5,2627.4 L1609.0,2620.1 L1607.5,2611.3 L1606.0,2602.2 L1604.5,2596.5 L1603.0,2596.5 L1601.5,2596.6 L1600.0,2596.5 L1598.5,2596.4 L1597.0,2596.3 L1595.5,2596.4 L1594.0,2596.4 L1592.5,2596.4 L1591.0,2596.4 L1589.5,2596.4 L1588.0,2596.5 L1586.5,2596.6 L1585.0,2596.6 L1583.5,2596.5 L1582.0,2596.4 L1580.5,2596.4 L1579.0,2596.5 L1577.5,2596.5 L1576.0,2596.6 L1574.5,2596.5 L1573.0,2596.5 L1571.5,2596.5 L1570.0,2596.5 L1568.5,2596.5 L1567.0,2596.4 L1565.5,2596.3 L1564.0,2596.3 L1562.5,2596.4 L1561.0,2596.5 L1559.5,2596.5 L1558.0,2596.5 L1556.5,2596.5 L1555.0,2596.6 L1553.5,2596.5 L1552.0,2596.4 L1550.5,2596.4 L1549.0,2596.5 L1547.5,2596.5 L1546.0,2596.5 L1544.5,2596.5 L1543.0,2596.5 L1541.5,2596.6 L1540.0,2596.6 L1538.5,2596.5 L1537.0,2596.5 L1535.5,2596.4 L1534.0,2596.4 L1532.5,2596.4 L1531.0,2596.5 L1529.5,2596.5 L1528.0,2596.4 L1526.5,2596.4 L1525.0,2596.4 L1523.5,2596.4 L1522.0,2596.4 L1520.5,2596.4 L1519.0,2596.4 L1517.5,2596.4 L1516.0,2596.5 L1514.5,2596.4 L1513.0,2596.4 L1511.5,2596.4 L1510.0,2596.4 L1508.5,2596.4 L1507.0,2596.5 L1505.5,2596.6 L1504.0,2596.6 L1502.5,2596.6 L1501.0,2596.6 L1499.5,2596.5 L1498.0,2596.5 L1496.5,2596.4 L1495.0,2596.4 L1493.5,2596.4 L1492.0,2596.4 L1490.5,2596.5 L1489.0,2596.5 L1487.5,2596.5 L1486.0,2596.4 L1484.5,2596.5 L1483.0,2597.1 L1481.5,2598.3 L1480.0,2599.1 L1478.5,2600.3 L1477.0,2601.1 L1475.5,2602.3 L1474.0,2603.3 L1472.5,2604.3 L1471.0,2605.2 L1469.5,2606.1 L1468.0,2607.7 L1466.5,2609.2 L1465.0,2610.6 L1463.5,2611.2 L1462.0,2612.4 L1460.5,2613.0 L1459.0,2612.7 L1457.5,2611.9 L1456.0,2611.4 L1454.5,2611.4 L1453.0,2610.6 L1451.5,2610.8 L1450.0,2610.5 L1448.5,2610.3 L1447.0,2609.9 L1445.5,2609.9 L1444.0,2609.7 L1442.5,2608.5 L1441.0,2608.2 L1439.5,2607.9 L1438.0,2609.1 L1436.5,2608.9 L1435.0,2609.4 L1433.5,2609.2 L1432.0,2609.6 L1430.5,2610.3 L1429.0,2610.9 L1427.5,2611.1 L1426.0,2610.7 L1424.5,2611.6 L1423.0,2612.4 L1421.5,2613.3 L1420.0,2613.2 L1418.5,2612.6 L1417.0,2612.6 L1415.5,2612.1 L1414.0,2612.9 L1412.5,2613.1 L1411.0,2613.1 L1409.5,2612.5 L1408.0,2611.8 L1406.5,2611.8 L1405.0,2612.7 L1403.5,2612.4 L1402.0,2612.5 L1400.5,2611.9 L1399.0,2612.0 L1397.5,2611.9 L1396.0,2611.4 L1394.5,2604.5 L1393.0,2597.3 L1391.5,2598.0 L1390.0,2598.6 L1388.5,2599.6 L1387.0,2600.2 L1385.5,2599.9 L1384.0,2599.1 L1382.5,2598.6 L1381.0,2598.0 L1379.5,2597.6 L1378.0,2597.4 L1376.5,2597.2 L1375.0,2597.1 L1373.5,2596.8 L1372.0,2596.7 L1370.5,2596.6 L1369.0,2596.6 L1367.5,2600.5 L1366.0,2612.7 L1364.5,2612.4 L1363.0,2611.8 L1361.5,2610.9 L1360.0,2610.7 L1358.5,2611.0 L1357.0,2612.0 L1355.5,2611.7 L1354.0,2611.5 L1352.5,2611.6 L1351.0,2611.8 L1349.5,2611.4 L1348.0,2610.9 L1346.5,2611.7 L1345.0,2612.3 L1343.5,2612.6 L1342.0,2612.3 L1340.5,2612.1 L1339.0,2611.9 L1337.5,2611.8 L1336.0,2612.5 L1334.5,2611.9 L1333.0,2611.8 L1331.5,2611.7 L1330.0,2612.1 L1328.5,2612.1 L1327.0,2611.0 L1325.5,2610.8 L1324.0,2610.5 L1322.5,2610.8 L1321.0,2610.9 L1319.5,2611.8 L1318.0,2611.6 L1316.5,2612.1 L1315.0,2611.4 L1313.5,2611.5 L1312.0,2611.5 L1310.5,2611.8 L1309.0,2611.9 L1307.5,2611.8 L1306.0,2612.0 L1304.5,2611.9 L1303.0,2611.4 L1301.5,2611.1 L1300.0,2612.0 L1298.5,2602.6 L1297.0,2599.5 L1295.5,2599.5 L1294.0,2599.6 L1292.5,2599.6 L1291.0,2599.4 L1289.5,2599.3 L1288.0,2599.2 L1286.5,2599.3 L1285.0,2599.2 L1283.5,2599.0 L1282.0,2598.9 L1280.5,2599.0 L1279.0,2599.1 L1277.5,2599.1 L1276.0,2599.0 L1274.5,2599.2 L1273.0,2599.5 L1271.5,2599.4 L1270.0,2599.3 L1268.5,2602.1 L1267.0,2605.5 L1265.5,2605.3 L1264.0,2605.3 L1262.5,2605.1 L1261.0,2605.6 L1259.5,2606.1 L1258.0,2605.9 L1256.5,2605.3 L1255.0,2604.9 L1253.5,2605.1 L1252.0,2605.8 L1250.5,2606.3 L1249.0,2606.2 L1247.5,2606.0 L1246.0,2605.7 L1244.5,2606.1 L1243.0,2601.7 L1241.5,2597.4 L1240.0,2597.1 L1238.5,2596.9 L1237.0,2596.8 L1235.5,2596.8 L1234.0,2596.7 L1232.5,2596.5 L1231.0,2596.6 L1229.5,2597.2 L1228.0,2597.9 L1226.5,2598.5 L1225.0,2599.2 L1223.5,2599.6 L1222.0,2600.2 L1220.5,2600.4 L1219.0,2600.7 L1217.5,2601.0 L1216.0,2601.6 L1214.5,2602.5 L1213.0,2603.4 L1211.5,2604.0 L1210.0,2604.1 L1208.5,2604.2 L1207.0,2604.8 L1205.5,2605.7 L1204.0,2606.5 L1202.5,2607.0 L1201.0,2607.3 L1199.5,2607.9 L1198.0,2607.9 L1196.5,2608.2 L1195.0,2608.6 L1193.5,2609.1 L1192.0,2609.2 L1190.5,2608.7 L1189.0,2609.1 L1187.5,2609.4 L1186.0,2609.9 L1184.5,2609.5 L1183.0,2610.2 L1181.5,2610.8 L1180.0,2611.0 L1178.5,2611.3 L1177.0,2611.5 L1175.5,2612.9 L1174.0,2612.9 L1172.5,2612.4 L1171.0,2611.5 L1169.5,2611.2 L1168.0,2611.5 L1166.5,2611.8 L1165.0,2612.9 L1163.5,2613.4 L1162.0,2613.7 L1160.5,2613.8 L1159.0,2614.0 L1157.5,2615.1 L1156.0,2614.1 L1154.5,2614.0 L1153.0,2613.8 L1151.5,2614.7 L1150.0,2615.0 L1148.5,2614.7 L1147.0,2614.2 L1145.5,2614.8 L1144.0,2615.6 L1142.5,2615.6 L1141.0,2614.7 L1139.5,2614.7 L1138.0,2615.6 L1136.5,2615.7 L1135.0,2612.3 L1133.5,2609.0 L1132.0,2609.6 L1130.5,2609.5 L1129.0,2609.1 L1127.5,2608.5 L1126.0,2608.0 L1124.5,2608.6 L1123.0,2609.5 L1121.5,2610.8 L1120.0,2611.8 L1118.5,2612.7 L1117.0,2613.9 L1115.5,2613.9 L1114.0,2614.8 L1112.5,2614.0 L1111.0,2613.6 L1109.5,2613.1 L1108.0,2613.1 L1106.5,2614.2 L1105.0,2614.0 L1103.5,2614.0 L1102.0,2613.7 L1100.5,2614.6 L1099.0,2616.0 L1097.5,2615.4 L1096.0,2615.5 L1094.5,2615.0 L1093.0,2615.7 L1091.5,2615.3 L1090.0,2614.8 L1088.5,2614.4 L1087.0,2615.2 L1085.5,2615.4 L1084.0,2615.9 L1082.5,2601.9 L1081.0,2597.4 L1079.5,2597.4 L1078.0,2597.4 L1076.5,2597.4 L1075.0,2597.5 L1073.5,2597.5 L1072.0,2597.5 L1070.5,2597.5 L1069.0,2597.6 L1067.5,2597.5 L1066.0,2597.4 L1064.5,2609.0 L1063.0,2613.4 L1061.5,2614.3 L1060.0,2615.0 L1058.5,2615.3 L1057.0,2615.6 L1055.5,2616.3 L1054.0,2616.2 L1052.5,2617.5 L1051.0,2617.9 L1049.5,2618.7 L1048.0,2618.1 L1046.5,2618.1 L1045.0,2618.8 L1043.5,2618.8 L1042.0,2619.5 L1040.5,2619.5 L1039.0,2621.1 L1037.5,2621.9 L1036.0,2623.1 L1034.5,2623.5 L1033.0,2622.4 L1031.5,2623.5 L1030.0,2626.1 L1028.5,2629.2 L1027.0,2631.2 L1025.5,2621.9 L1024.0,2596.5 L1022.5,2596.8 L1021.0,2597.2 L1019.5,2597.4 L1018.0,2597.9 L1016.5,2598.3 L1015.0,2598.9 L1013.5,2599.1 L1012.0,2599.3 L1010.5,2599.6 L1009.0,2599.9 L1007.5,2600.4 L1006.0,2600.8 L1004.5,2601.1 L1003.0,2601.2 L1001.5,2601.4 L1000.0,2601.9 L998.5,2606.8 L997.0,2611.4 L995.5,2616.9 L994.0,2618.4 L992.5,2618.7 L991.0,2618.2 L989.5,2619.3 L988.0,2619.7 L986.5,2620.1 L985.0,2620.3 L983.5,2621.1 L982.0,2621.5 L980.5,2622.2 L979.0,2621.9 L977.5,2619.8 L976.0,2617.2 L974.5,2614.9 L973.0,2610.8 L971.5,2606.8 L970.0,2603.4 L968.5,2606.1 L967.0,2608.4 L965.5,2610.5 L964.0,2612.6 L962.5,2616.0 L961.0,2619.2 L959.5,2620.4 L958.0,2619.7 L956.5,2620.1 L955.0,2621.0 L953.5,2620.8 L952.0,2620.6 L950.5,2621.0 L949.0,2621.4 L947.5,2620.8 L946.0,2619.6 L944.5,2619.1 L943.0,2620.4 L941.5,2621.6 L940.0,2621.7 L938.5,2621.8 L937.0,2622.2 L935.5,2623.4 L934.0,2623.6 L932.5,2623.9 L931.0,2623.3 L929.5,2623.3 L928.0,2623.1 L926.5,2624.9 L925.0,2626.4 L923.5,2627.4 L922.0,2627.5 L920.5,2620.8 L919.0,2597.6 L917.5,2597.5 L916.0,2597.5 L914.5,2597.4 L913.0,2597.4 L911.5,2597.5 L910.0,2597.4 L908.5,2597.5 L907.0,2597.4 L905.5,2597.4 L904.0,2597.5 L902.5,2598.0 L901.0,2599.0 L899.5,2599.9 L898.0,2600.8 L896.5,2601.4 L895.0,2602.1 L893.5,2602.8 L892.0,2604.0 L890.5,2605.4 L889.0,2606.8 L887.5,2607.8 L886.0,2608.1 L884.5,2608.5 L883.0,2609.4 L881.5,2610.4 L880.0,2611.8 L878.5,2613.0 L877.0,2614.1 L875.5,2618.0 L874.0,2622.7 L872.5,2621.2 L871.0,2620.4 L869.5,2619.6 L868.0,2620.2 L866.5,2619.5 L865.0,2619.8 L863.5,2618.8 L862.0,2618.6 L860.5,2618.7 L859.0,2618.2 L857.5,2618.8 L856.0,2617.8 L854.5,2618.3 L853.0,2617.9 L851.5,2618.5 L850.0,2619.3 L848.5,2620.0 L847.0,2620.3 L845.5,2619.0 L844.0,2617.9 L842.5,2616.6 L841.0,2617.2 L839.5,2617.3 L838.0,2618.8 L836.5,2619.1 L835.0,2618.7 L833.5,2618.0 L832.0,2618.5 L830.5,2619.9 L829.0,2620.7 L827.5,2620.3 L826.0,2620.5 L824.5,2620.5 L823.0,2620.1 L821.5,2619.0 L820.0,2618.7 L818.5,2619.2 L817.0,2620.1 L815.5,2619.6 L814.0,2619.9 L812.5,2619.1 L811.0,2618.6 L809.5,2602.3 L808.0,2602.4 L806.5,2602.7 L805.0,2602.9 L803.5,2602.9 L802.0,2603.3 L800.5,2603.2 L799.0,2603.3 L797.5,2603.0 L796.0,2603.6 L794.5,2604.2 L793.0,2604.1 L791.5,2603.9 L790.0,2603.9 L788.5,2604.3 L787.0,2604.1 L785.5,2603.4 L784.0,2602.9 L782.5,2602.6 L781.0,2602.8 L779.5,2602.5 L778.0,2602.5 L776.5,2602.3 L775.0,2602.2 L773.5,2601.9 L772.0,2601.8 L770.5,2602.2 L769.0,2602.6 L767.5,2602.6 L766.0,2602.6 L764.5,2602.9 L763.0,2603.1 L761.5,2603.4 L760.0,2603.3 L758.5,2603.2 L757.0,2603.0 L755.5,2603.5 L754.0,2604.1 L752.5,2604.4 L751.0,2602.3 L749.5,2599.6 L748.0,2597.2 L746.5,2595.6 L745.0,2595.6 L743.5,2595.6 L742.0,2595.6 L740.5,2595.6 L739.0,2595.6 L737.5,2595.6 L736.0,2595.6 L734.5,2595.6 L733.0,2595.6 L731.5,2595.6 L730.0,2595.6 L728.5,2595.6 L727.0,2595.6 L725.5,2595.6 L724.0,2595.6 L722.5,2595.6 L721.0,2595.6 L719.5,2595.6 L718.0,2595.6 L716.5,2595.6 L715.0,2595.6 L713.5,2595.6 L712.0,2595.6 L710.5,2595.6 L709.0,2595.6 L707.5,2595.6 L706.0,2595.6 L704.5,2595.6 L703.0,2595.6 L701.5,2595.6 L700.0,2595.6 L698.5,2595.6 L697.0,2595.6 L695.5,2595.6 L694.0,2595.6 L692.5,2595.6 L691.0,2595.6 L689.5,2595.6 L688.0,2595.6 L686.5,2595.6 L685.0,2595.6 L683.5,2595.6 L682.0,2595.6 L680.5,2595.6 L679.0,2595.6 L677.5,2595.6 L676.0,2595.6 L674.5,2595.6 L673.0,2595.6 L671.5,2595.6 L670.0,2595.6 L668.5,2596.1 L667.0,2596.6 L665.5,2597.1 L664.0,2597.5 L662.5,2598.0 L661.0,2598.3 L659.5,2599.1 L658.0,2599.6 L656.5,2600.5 L655.0,2601.1 L653.5,2601.3 L652.0,2601.5 L650.5,2601.8 L649.0,2602.6 L647.5,2603.4 L646.0,2603.7 L644.5,2604.2 L643.0,2604.1 L641.5,2605.3 L640.0,2606.1 L638.5,2607.3 L637.0,2607.4 L635.5,2607.8 L634.0,2608.4 L632.5,2609.6 L631.0,2610.1 L629.5,2610.5 L628.0,2610.3 L626.5,2611.5 L625.0,2612.8 L623.5,2613.7 L622.0,2613.7 L620.5,2613.9 L619.0,2614.8 L617.5,2615.9 L616.0,2616.8 L614.5,2617.4 L613.0,2618.5 L611.5,2619.8 L610.0,2621.4 L608.5,2621.4 L607.0,2620.2 L605.5,2619.0 L604.0,2617.8 L602.5,2618.9 L601.0,2619.2 L599.5,2620.0 L598.0,2618.9 L596.5,2618.9 L595.0,2618.8 L593.5,2620.3 L592.0,2620.5 L590.5,2620.7 L589.0,2620.1 L587.5,2620.3 L586.0,2620.5 L584.5,2620.0 L583.0,2620.1 L581.5,2620.4 L580.0,2620.9 L578.5,2619.8 L577.0,2618.9 L575.5,2618.2 L574.0,2618.2 L572.5,2618.2 L571.0,2617.2 L569.5,2618.1 L568.0,2618.8 L566.5,2619.3 L565.0,2619.9 L563.5,2619.3 L562.0,2621.1 L560.5,2620.3 L559.0,2621.2 L557.5,2621.5 L556.0,2622.7 L554.5,2622.3 L553.0,2622.6 L551.5,2622.3 L550.0,2622.1 L548.5,2622.4 L547.0,2609.7 L545.5,2597.6 L544.0,2597.8 L542.5,2598.2 L541.0,2598.3 L539.5,2598.4 L538.0,2598.2 L536.5,2598.4 L535.0,2598.5 L533.5,2598.5 L532.0,2598.5 L530.5,2598.4 L529.0,2598.3 L527.5,2598.3 L526.0,2598.3 L524.5,2609.3 L523.0,2612.6 L521.5,2613.4 L520.0,2613.7 L518.5,2614.1 L517.0,2614.2 L515.5,2614.1 L514.0,2613.9 L512.5,2613.3 L511.0,2613.5 L509.5,2613.5 L508.0,2613.8 L506.5,2614.6 L505.0,2615.1 L503.5,2615.7 L502.0,2615.6 L500.5,2615.6 L499.0,2614.8 L497.5,2614.6 L496.0,2615.0 L494.5,2614.9 L493.0,2615.0 L491.5,2614.3 L490.0,2614.3 L488.5,2614.6 L487.0,2615.6 L485.5,2616.6 L484.0,2616.0 L482.5,2615.0 L481.0,2614.0 L479.5,2614.6 L478.0,2615.1 L476.5,2615.7 L475.0,2614.9 L473.5,2614.7 L472.0,2614.6 L470.5,2614.7 L469.0,2614.3 L467.5,2614.0 L466.0,2614.5 L464.5,2615.0 L463.0,2615.6 L461.5,2615.1 L460.0,2615.5 L458.5,2616.1 L457.0,2617.0 L455.5,2617.1 L454.0,2617.2 L452.5,2618.2 L451.0,2618.1 L449.5,2614.6 L448.0,2606.5 L446.5,2598.9 L445.0,2596.7 L443.5,2596.9 L442.0,2597.2 L440.5,2597.5 L439.0,2598.1 L437.5,2599.0 L436.0,2599.8 L434.5,2600.3 L433.0,2600.7 L431.5,2601.5 L430.0,2602.0 L428.5,2603.1 L427.0,2603.7 L425.5,2604.5 L424.0,2605.2 L422.5,2605.5 L421.0,2606.1 L419.5,2606.9 L418.0,2607.9 L416.5,2608.9 L415.0,2609.2 L413.5,2609.9 L412.0,2610.5 L410.5,2611.0 L409.0,2610.9 L407.5,2611.6 L406.0,2611.6 L404.5,2612.6 L403.0,2612.7 L401.5,2613.4 L400.0,2612.5 L398.5,2612.2 L397.0,2612.0 L395.5,2613.2 L394.0,2613.1 L392.5,2611.4 L391.0,2606.6 L389.5,2602.3 L388.0,2597.5 L386.5,2597.3 L385.0,2597.1 L383.5,2597.0 L382.0,2596.8 L380.5,2596.6 L379.0,2596.4 L377.5,2596.3 L376.0,2596.1 L374.5,2596.0 L373.0,2595.8 L371.5,2595.6 L370.0,2595.6 L368.5,2595.6 L367.0,2595.6 L365.5,2595.6 L364.0,2595.6 L362.5,2595.6 L361.0,2595.6 L359.5,2595.6 L358.0,2595.6 L356.5,2595.6 L355.0,2595.6 L353.5,2595.6 L352.0,2595.6 L350.5,2595.6 L349.0,2595.6 L347.5,2595.6 L346.0,2595.6 L344.5,2595.6 L343.0,2595.6 L341.5,2595.6 L340.0,2595.6 L338.5,2595.6 L337.0,2595.6 L335.5,2595.6 L334.0,2595.6 L332.5,2595.6 L331.0,2595.6 L329.5,2595.6 L328.0,2595.6 L326.5,2595.6 L325.0,2595.6 L323.5,2595.6 L322.0,2595.6 L320.5,2595.6 L319.0,2595.6 L317.5,2595.6 L316.0,2595.6 L314.5,2595.6 L313.0,2595.6 L311.5,2595.6 L310.0,2595.6 L308.5,2595.6 L307.0,2595.6 L305.5,2595.6 L304.0,2595.6 L302.5,2595.6 L301.0,2595.6 L299.5,2595.6 L298.0,2595.6 L296.5,2595.6 L295.0,2595.6 L293.5,2595.6 L292.0,2595.6 L290.5,2595.6 L289.0,2595.6 L287.5,2595.6 L286.0,2595.6 Z" fill="#5e5c66"/>
<clipPath id="ovsel"><rect x="377.5" y="2500" width="1580.5" height="190"/></clipPath>
<path d="M286.0,2593.6 L287.5,2593.6 L289.0,2593.6 L290.5,2593.6 L292.0,2593.6 L293.5,2593.6 L295.0,2593.6 L296.5,2593.6 L298.0,2593.6 L299.5,2593.6 L301.0,2593.6 L302.5,2593.6 L304.0,2593.6 L305.5,2593.6 L307.0,2593.6 L308.5,2593.6 L310.0,2593.6 L311.5,2593.6 L313.0,2593.6 L314.5,2593.6 L316.0,2593.6 L317.5,2593.6 L319.0,2593.6 L320.5,2593.6 L322.0,2593.6 L323.5,2593.6 L325.0,2593.6 L326.5,2593.6 L328.0,2593.6 L329.5,2593.6 L331.0,2593.6 L332.5,2593.6 L334.0,2593.6 L335.5,2593.6 L337.0,2593.6 L338.5,2593.6 L340.0,2593.6 L341.5,2593.6 L343.0,2593.6 L344.5,2593.6 L346.0,2593.6 L347.5,2593.6 L349.0,2593.6 L350.5,2593.6 L352.0,2593.6 L353.5,2593.6 L355.0,2593.6 L356.5,2593.6 L358.0,2593.6 L359.5,2593.6 L361.0,2593.6 L362.5,2593.6 L364.0,2593.6 L365.5,2593.6 L367.0,2593.6 L368.5,2593.6 L370.0,2593.6 L371.5,2593.6 L373.0,2593.4 L374.5,2593.2 L376.0,2593.1 L377.5,2592.9 L379.0,2592.8 L380.5,2592.6 L382.0,2592.4 L383.5,2592.2 L385.0,2592.1 L386.5,2591.9 L388.0,2591.7 L389.5,2586.9 L391.0,2582.6 L392.5,2577.8 L394.0,2576.1 L395.5,2576.0 L397.0,2577.2 L398.5,2577.0 L400.0,2576.7 L401.5,2575.8 L403.0,2576.5 L404.5,2576.6 L406.0,2577.6 L407.5,2577.6 L409.0,2578.3 L410.5,2578.2 L412.0,2578.7 L413.5,2579.3 L415.0,2580.0 L416.5,2580.3 L418.0,2581.3 L419.5,2582.3 L421.0,2583.1 L422.5,2583.7 L424.0,2584.0 L425.5,2584.7 L427.0,2585.5 L428.5,2586.1 L430.0,2587.2 L431.5,2587.7 L433.0,2588.5 L434.5,2588.9 L436.0,2589.4 L437.5,2590.2 L439.0,2591.1 L440.5,2591.7 L442.0,2592.0 L443.5,2592.3 L445.0,2592.5 L446.5,2590.3 L448.0,2582.7 L449.5,2574.6 L451.0,2571.1 L452.5,2571.0 L454.0,2572.0 L455.5,2572.1 L457.0,2572.2 L458.5,2573.1 L460.0,2573.7 L461.5,2574.1 L463.0,2573.6 L464.5,2574.2 L466.0,2574.7 L467.5,2575.2 L469.0,2574.9 L470.5,2574.5 L472.0,2574.6 L473.5,2574.5 L475.0,2574.3 L476.5,2573.5 L478.0,2574.1 L479.5,2574.6 L481.0,2575.2 L482.5,2574.2 L484.0,2573.2 L485.5,2572.6 L487.0,2573.6 L488.5,2574.6 L490.0,2574.9 L491.5,2574.9 L493.0,2574.2 L494.5,2574.3 L496.0,2574.2 L497.5,2574.6 L499.0,2574.4 L500.5,2573.6 L502.0,2573.6 L503.5,2573.5 L505.0,2574.1 L506.5,2574.6 L508.0,2575.4 L509.5,2575.7 L511.0,2575.7 L512.5,2575.9 L514.0,2575.3 L515.5,2575.1 L517.0,2575.0 L518.5,2575.1 L520.0,2575.5 L521.5,2575.8 L523.0,2576.6 L524.5,2579.9 L526.0,2590.9 L527.5,2590.9 L529.0,2590.9 L530.5,2590.8 L532.0,2590.7 L533.5,2590.7 L535.0,2590.7 L536.5,2590.8 L538.0,2591.0 L539.5,2590.8 L541.0,2590.9 L542.5,2591.0 L544.0,2591.4 L545.5,2591.6 L547.0,2579.5 L548.5,2566.8 L550.0,2567.1 L551.5,2566.9 L553.0,2566.6 L554.5,2566.9 L556.0,2566.5 L557.5,2567.7 L559.0,2568.0 L560.5,2568.9 L562.0,2568.1 L563.5,2569.9 L565.0,2569.3 L566.5,2569.9 L568.0,2570.4 L569.5,2571.1 L571.0,2572.0 L572.5,2571.0 L574.0,2571.0 L575.5,2571.0 L577.0,2570.3 L578.5,2569.4 L580.0,2568.3 L581.5,2568.8 L583.0,2569.1 L584.5,2569.2 L586.0,2568.7 L587.5,2568.9 L589.0,2569.1 L590.5,2568.5 L592.0,2568.7 L593.5,2568.9 L595.0,2570.4 L596.5,2570.3 L598.0,2570.3 L599.5,2569.2 L601.0,2570.0 L602.5,2570.3 L604.0,2571.4 L605.5,2570.2 L607.0,2569.0 L608.5,2567.8 L610.0,2567.8 L611.5,2569.4 L613.0,2570.7 L614.5,2571.8 L616.0,2572.4 L617.5,2573.3 L619.0,2574.4 L620.5,2575.3 L622.0,2575.5 L623.5,2575.5 L625.0,2576.4 L626.5,2577.7 L628.0,2578.9 L629.5,2578.7 L631.0,2579.1 L632.5,2579.6 L634.0,2580.8 L635.5,2581.4 L637.0,2581.8 L638.5,2581.9 L640.0,2583.1 L641.5,2583.9 L643.0,2585.1 L644.5,2585.0 L646.0,2585.5 L647.5,2585.8 L649.0,2586.6 L650.5,2587.4 L652.0,2587.7 L653.5,2587.9 L655.0,2588.1 L656.5,2588.7 L658.0,2589.6 L659.5,2590.1 L661.0,2590.9 L662.5,2591.2 L664.0,2591.7 L665.5,2592.1 L667.0,2592.6 L668.5,2593.1 L670.0,2593.6 L671.5,2593.6 L673.0,2593.6 L674.5,2593.6 L676.0,2593.6 L677.5,2593.6 L679.0,2593.6 L680.5,2593.6 L682.0,2593.6 L683.5,2593.6 L685.0,2593.6 L686.5,2593.6 L688.0,2593.6 L689.5,2593.6 L691.0,2593.6 L692.5,2593.6 L694.0,2593.6 L695.5,2593.6 L697.0,2593.6 L698.5,2593.6 L700.0,2593.6 L701.5,2593.6 L703.0,2593.6 L704.5,2593.6 L706.0,2593.6 L707.5,2593.6 L709.0,2593.6 L710.5,2593.6 L712.0,2593.6 L713.5,2593.6 L715.0,2593.6 L716.5,2593.6 L718.0,2593.6 L719.5,2593.6 L721.0,2593.6 L722.5,2593.6 L724.0,2593.6 L725.5,2593.6 L727.0,2593.6 L728.5,2593.6 L730.0,2593.6 L731.5,2593.6 L733.0,2593.6 L734.5,2593.6 L736.0,2593.6 L737.5,2593.6 L739.0,2593.6 L740.5,2593.6 L742.0,2593.6 L743.5,2593.6 L745.0,2593.6 L746.5,2593.6 L748.0,2592.0 L749.5,2589.6 L751.0,2586.9 L752.5,2584.8 L754.0,2585.1 L755.5,2585.7 L757.0,2586.2 L758.5,2586.0 L760.0,2585.9 L761.5,2585.8 L763.0,2586.1 L764.5,2586.3 L766.0,2586.6 L767.5,2586.6 L769.0,2586.6 L770.5,2587.0 L772.0,2587.4 L773.5,2587.3 L775.0,2587.0 L776.5,2586.9 L778.0,2586.7 L779.5,2586.7 L781.0,2586.4 L782.5,2586.6 L784.0,2586.3 L785.5,2585.8 L787.0,2585.1 L788.5,2584.9 L790.0,2585.3 L791.5,2585.3 L793.0,2585.1 L794.5,2585.0 L796.0,2585.6 L797.5,2586.2 L799.0,2585.9 L800.5,2586.0 L802.0,2585.9 L803.5,2586.3 L805.0,2586.3 L806.5,2586.5 L808.0,2586.8 L809.5,2586.9 L811.0,2570.6 L812.5,2570.1 L814.0,2569.3 L815.5,2569.6 L817.0,2569.1 L818.5,2570.0 L820.0,2570.5 L821.5,2570.2 L823.0,2569.1 L824.5,2568.7 L826.0,2568.7 L827.5,2568.9 L829.0,2568.5 L830.5,2569.3 L832.0,2570.7 L833.5,2571.2 L835.0,2570.5 L836.5,2570.1 L838.0,2570.4 L839.5,2571.9 L841.0,2572.0 L842.5,2572.6 L844.0,2571.3 L845.5,2570.2 L847.0,2568.9 L848.5,2569.2 L850.0,2569.9 L851.5,2570.7 L853.0,2571.3 L854.5,2570.9 L856.0,2571.4 L857.5,2570.4 L859.0,2571.0 L860.5,2570.5 L862.0,2570.6 L863.5,2570.4 L865.0,2569.4 L866.5,2569.7 L868.0,2569.0 L869.5,2569.6 L871.0,2568.8 L872.5,2568.0 L874.0,2566.5 L875.5,2571.2 L877.0,2575.1 L878.5,2576.2 L880.0,2577.4 L881.5,2578.8 L883.0,2579.8 L884.5,2580.7 L886.0,2581.1 L887.5,2581.4 L889.0,2582.4 L890.5,2583.8 L892.0,2585.2 L893.5,2586.4 L895.0,2587.1 L896.5,2587.8 L898.0,2588.4 L899.5,2589.3 L901.0,2590.2 L902.5,2591.2 L904.0,2591.7 L905.5,2591.8 L907.0,2591.8 L908.5,2591.7 L910.0,2591.8 L911.5,2591.7 L913.0,2591.8 L914.5,2591.8 L916.0,2591.7 L917.5,2591.7 L919.0,2591.6 L920.5,2568.4 L922.0,2561.7 L923.5,2561.8 L925.0,2562.8 L926.5,2564.3 L928.0,2566.1 L929.5,2565.9 L931.0,2565.9 L932.5,2565.3 L934.0,2565.6 L935.5,2565.8 L937.0,2567.0 L938.5,2567.4 L940.0,2567.5 L941.5,2567.6 L943.0,2568.8 L944.5,2570.1 L946.0,2569.6 L947.5,2568.4 L949.0,2567.8 L950.5,2568.2 L952.0,2568.6 L953.5,2568.4 L955.0,2568.2 L956.5,2569.1 L958.0,2569.5 L959.5,2568.8 L961.0,2570.0 L962.5,2573.2 L964.0,2576.6 L965.5,2578.7 L967.0,2580.8 L968.5,2583.1 L970.0,2585.8 L971.5,2582.4 L973.0,2578.4 L974.5,2574.3 L976.0,2572.0 L977.5,2569.4 L979.0,2567.3 L980.5,2567.0 L982.0,2567.7 L983.5,2568.1 L985.0,2568.9 L986.5,2569.1 L988.0,2569.5 L989.5,2569.9 L991.0,2571.0 L992.5,2570.5 L994.0,2570.8 L995.5,2572.3 L997.0,2577.8 L998.5,2582.4 L1000.0,2587.3 L1001.5,2587.8 L1003.0,2588.0 L1004.5,2588.1 L1006.0,2588.4 L1007.5,2588.8 L1009.0,2589.3 L1010.5,2589.6 L1012.0,2589.9 L1013.5,2590.1 L1015.0,2590.3 L1016.5,2590.9 L1018.0,2591.3 L1019.5,2591.8 L1021.0,2592.0 L1022.5,2592.4 L1024.0,2592.7 L1025.5,2567.3 L1027.0,2558.0 L1028.5,2560.0 L1030.0,2563.1 L1031.5,2565.7 L1033.0,2566.8 L1034.5,2565.7 L1036.0,2566.1 L1037.5,2567.3 L1039.0,2568.1 L1040.5,2569.7 L1042.0,2569.7 L1043.5,2570.4 L1045.0,2570.4 L1046.5,2571.1 L1048.0,2571.1 L1049.5,2570.5 L1051.0,2571.3 L1052.5,2571.7 L1054.0,2573.0 L1055.5,2572.9 L1057.0,2573.6 L1058.5,2573.9 L1060.0,2574.2 L1061.5,2574.9 L1063.0,2575.8 L1064.5,2580.2 L1066.0,2591.8 L1067.5,2591.7 L1069.0,2591.6 L1070.5,2591.7 L1072.0,2591.7 L1073.5,2591.7 L1075.0,2591.7 L1076.5,2591.8 L1078.0,2591.8 L1079.5,2591.8 L1081.0,2591.8 L1082.5,2587.3 L1084.0,2573.3 L1085.5,2573.8 L1087.0,2574.0 L1088.5,2574.8 L1090.0,2574.4 L1091.5,2573.9 L1093.0,2573.5 L1094.5,2574.2 L1096.0,2573.7 L1097.5,2573.8 L1099.0,2573.2 L1100.5,2574.6 L1102.0,2575.5 L1103.5,2575.2 L1105.0,2575.2 L1106.5,2575.0 L1108.0,2576.1 L1109.5,2576.1 L1111.0,2575.6 L1112.5,2575.2 L1114.0,2574.4 L1115.5,2575.3 L1117.0,2575.3 L1118.5,2576.5 L1120.0,2577.4 L1121.5,2578.4 L1123.0,2579.7 L1124.5,2580.6 L1126.0,2581.2 L1127.5,2580.7 L1129.0,2580.1 L1130.5,2579.7 L1132.0,2579.6 L1133.5,2580.2 L1135.0,2576.9 L1136.5,2573.5 L1138.0,2573.6 L1139.5,2574.5 L1141.0,2574.5 L1142.5,2573.6 L1144.0,2573.6 L1145.5,2574.4 L1147.0,2575.0 L1148.5,2574.5 L1150.0,2574.2 L1151.5,2574.5 L1153.0,2575.4 L1154.5,2575.2 L1156.0,2575.1 L1157.5,2574.1 L1159.0,2575.2 L1160.5,2575.4 L1162.0,2575.5 L1163.5,2575.8 L1165.0,2576.3 L1166.5,2577.4 L1168.0,2577.7 L1169.5,2578.0 L1171.0,2577.7 L1172.5,2576.8 L1174.0,2576.3 L1175.5,2576.3 L1177.0,2577.7 L1178.5,2577.9 L1180.0,2578.2 L1181.5,2578.4 L1183.0,2579.0 L1184.5,2579.7 L1186.0,2579.3 L1187.5,2579.8 L1189.0,2580.1 L1190.5,2580.5 L1192.0,2580.0 L1193.5,2580.1 L1195.0,2580.6 L1196.5,2581.0 L1198.0,2581.3 L1199.5,2581.3 L1201.0,2581.9 L1202.5,2582.2 L1204.0,2582.7 L1205.5,2583.5 L1207.0,2584.4 L1208.5,2585.0 L1210.0,2585.1 L1211.5,2585.2 L1213.0,2585.8 L1214.5,2586.7 L1216.0,2587.6 L1217.5,2588.2 L1219.0,2588.5 L1220.5,2588.8 L1222.0,2589.0 L1223.5,2589.6 L1225.0,2590.0 L1226.5,2590.7 L1228.0,2591.3 L1229.5,2592.0 L1231.0,2592.6 L1232.5,2592.7 L1234.0,2592.5 L1235.5,2592.4 L1237.0,2592.4 L1238.5,2592.3 L1240.0,2592.1 L1241.5,2591.8 L1243.0,2587.5 L1244.5,2583.1 L1246.0,2583.5 L1247.5,2583.2 L1249.0,2583.0 L1250.5,2582.9 L1252.0,2583.4 L1253.5,2584.1 L1255.0,2584.3 L1256.5,2583.9 L1258.0,2583.3 L1259.5,2583.1 L1261.0,2583.6 L1262.5,2584.1 L1264.0,2583.9 L1265.5,2583.9 L1267.0,2583.7 L1268.5,2587.1 L1270.0,2589.9 L1271.5,2589.8 L1273.0,2589.7 L1274.5,2590.0 L1276.0,2590.2 L1277.5,2590.1 L1279.0,2590.1 L1280.5,2590.2 L1282.0,2590.3 L1283.5,2590.2 L1285.0,2590.0 L1286.5,2589.9 L1288.0,2590.0 L1289.5,2589.9 L1291.0,2589.8 L1292.5,2589.6 L1294.0,2589.6 L1295.5,2589.7 L1297.0,2589.7 L1298.5,2586.6 L1300.0,2577.2 L1301.5,2578.1 L1303.0,2577.8 L1304.5,2577.3 L1306.0,2577.2 L1307.5,2577.4 L1309.0,2577.3 L1310.5,2577.4 L1312.0,2577.7 L1313.5,2577.7 L1315.0,2577.8 L1316.5,2577.1 L1318.0,2577.6 L1319.5,2577.4 L1321.0,2578.3 L1322.5,2578.4 L1324.0,2578.7 L1325.5,2578.4 L1327.0,2578.2 L1328.5,2577.1 L1330.0,2577.1 L1331.5,2577.5 L1333.0,2577.4 L1334.5,2577.3 L1336.0,2576.7 L1337.5,2577.4 L1339.0,2577.3 L1340.5,2577.1 L1342.0,2576.9 L1343.5,2576.6 L1345.0,2576.9 L1346.5,2577.5 L1348.0,2578.3 L1349.5,2577.8 L1351.0,2577.4 L1352.5,2577.6 L1354.0,2577.7 L1355.5,2577.5 L1357.0,2577.2 L1358.5,2578.2 L1360.0,2578.5 L1361.5,2578.3 L1363.0,2577.4 L1364.5,2576.8 L1366.0,2576.5 L1367.5,2588.7 L1369.0,2592.6 L1370.5,2592.6 L1372.0,2592.5 L1373.5,2592.4 L1375.0,2592.1 L1376.5,2592.0 L1378.0,2591.8 L1379.5,2591.6 L1381.0,2591.2 L1382.5,2590.6 L1384.0,2590.1 L1385.5,2589.3 L1387.0,2589.0 L1388.5,2589.6 L1390.0,2590.6 L1391.5,2591.2 L1393.0,2591.9 L1394.5,2584.7 L1396.0,2577.8 L1397.5,2577.3 L1399.0,2577.2 L1400.5,2577.3 L1402.0,2576.7 L1403.5,2576.8 L1405.0,2576.5 L1406.5,2577.4 L1408.0,2577.4 L1409.5,2576.7 L1411.0,2576.1 L1412.5,2576.1 L1414.0,2576.3 L1415.5,2577.1 L1417.0,2576.6 L1418.5,2576.6 L1420.0,2576.0 L1421.5,2575.9 L1423.0,2576.8 L1424.5,2577.6 L1426.0,2578.5 L1427.5,2578.1 L1429.0,2578.3 L1430.5,2578.9 L1432.0,2579.6 L1433.5,2580.0 L1435.0,2579.8 L1436.5,2580.3 L1438.0,2580.1 L1439.5,2581.3 L1441.0,2581.0 L1442.5,2580.7 L1444.0,2579.5 L1445.5,2579.3 L1447.0,2579.3 L1448.5,2578.9 L1450.0,2578.7 L1451.5,2578.4 L1453.0,2578.6 L1454.5,2577.8 L1456.0,2577.8 L1457.5,2577.3 L1459.0,2576.5 L1460.5,2576.2 L1462.0,2576.8 L1463.5,2578.0 L1465.0,2578.6 L1466.5,2580.0 L1468.0,2581.5 L1469.5,2583.1 L1471.0,2584.0 L1472.5,2584.9 L1474.0,2585.9 L1475.5,2586.9 L1477.0,2588.1 L1478.5,2588.9 L1480.0,2590.1 L1481.5,2590.9 L1483.0,2592.1 L1484.5,2592.7 L1486.0,2592.8 L1487.5,2592.7 L1489.0,2592.7 L1490.5,2592.7 L1492.0,2592.8 L1493.5,2592.8 L1495.0,2592.8 L1496.5,2592.8 L1498.0,2592.7 L1499.5,2592.7 L1501.0,2592.6 L1502.5,2592.6 L1504.0,2592.6 L1505.5,2592.6 L1507.0,2592.7 L1508.5,2592.8 L1510.0,2592.8 L1511.5,2592.8 L1513.0,2592.8 L1514.5,2592.8 L1516.0,2592.7 L1517.5,2592.8 L1519.0,2592.8 L1520.5,2592.8 L1522.0,2592.8 L1523.5,2592.8 L1525.0,2592.8 L1526.5,2592.8 L1528.0,2592.8 L1529.5,2592.7 L1531.0,2592.7 L1532.5,2592.8 L1534.0,2592.8 L1535.5,2592.8 L1537.0,2592.7 L1538.5,2592.7 L1540.0,2592.6 L1541.5,2592.6 L1543.0,2592.7 L1544.5,2592.7 L1546.0,2592.7 L1547.5,2592.7 L1549.0,2592.7 L1550.5,2592.8 L1552.0,2592.8 L1553.5,2592.7 L1555.0,2592.6 L1556.5,2592.7 L1558.0,2592.7 L1559.5,2592.7 L1561.0,2592.7 L1562.5,2592.8 L1564.0,2592.9 L1565.5,2592.9 L1567.0,2592.8 L1568.5,2592.7 L1570.0,2592.7 L1571.5,2592.7 L1573.0,2592.7 L1574.5,2592.7 L1576.0,2592.6 L1577.5,2592.7 L1579.0,2592.7 L1580.5,2592.8 L1582.0,2592.8 L1583.5,2592.7 L1585.0,2592.6 L1586.5,2592.6 L1588.0,2592.7 L1589.5,2592.8 L1591.0,2592.8 L1592.5,2592.8 L1594.0,2592.8 L1595.5,2592.8 L1597.0,2592.9 L1598.5,2592.8 L1600.0,2592.7 L1601.5,2592.6 L1603.0,2592.7 L1604.5,2592.7 L1606.0,2587.0 L1607.5,2577.9 L1609.0,2569.1 L1610.5,2561.8 L1612.0,2554.1 L1613.5,2559.5 L1615.0,2564.3 L1616.5,2568.7 L1618.0,2569.7 L1619.5,2572.8 L1621.0,2574.9 L1622.5,2577.9 L1624.0,2579.8 L1625.5,2582.6 L1627.0,2585.2 L1628.5,2585.6 L1630.0,2585.5 L1631.5,2585.2 L1633.0,2584.6 L1634.5,2584.7 L1636.0,2584.8 L1637.5,2585.0 L1639.0,2585.0 L1640.5,2585.4 L1642.0,2585.2 L1643.5,2585.1 L1645.0,2584.7 L1646.5,2585.2 L1648.0,2585.4 L1649.5,2585.7 L1651.0,2585.6 L1652.5,2585.8 L1654.0,2585.6 L1655.5,2585.3 L1657.0,2585.2 L1658.5,2585.0 L1660.0,2579.2 L1661.5,2572.5 L1663.0,2573.0 L1664.5,2572.5 L1666.0,2572.0 L1667.5,2572.8 L1669.0,2572.8 L1670.5,2573.5 L1672.0,2572.3 L1673.5,2572.9 L1675.0,2572.5 L1676.5,2573.6 L1678.0,2573.6 L1679.5,2573.8 L1681.0,2573.8 L1682.5,2573.5 L1684.0,2573.3 L1685.5,2573.2 L1687.0,2573.2 L1688.5,2573.5 L1690.0,2573.0 L1691.5,2573.2 L1693.0,2574.0 L1694.5,2573.8 L1696.0,2573.4 L1697.5,2573.1 L1699.0,2574.1 L1700.5,2575.1 L1702.0,2574.4 L1703.5,2573.5 L1705.0,2572.5 L1706.5,2572.8 L1708.0,2573.5 L1709.5,2573.4 L1711.0,2578.8 L1712.5,2587.0 L1714.0,2584.6 L1715.5,2576.5 L1717.0,2568.2 L1718.5,2568.0 L1720.0,2569.2 L1721.5,2570.0 L1723.0,2571.6 L1724.5,2570.2 L1726.0,2569.7 L1727.5,2569.4 L1729.0,2570.8 L1730.5,2570.6 L1732.0,2570.1 L1733.5,2570.5 L1735.0,2571.6 L1736.5,2571.2 L1738.0,2570.4 L1739.5,2570.1 L1741.0,2570.0 L1742.5,2569.8 L1744.0,2569.2 L1745.5,2569.9 L1747.0,2570.1 L1748.5,2571.5 L1750.0,2571.4 L1751.5,2572.5 L1753.0,2572.8 L1754.5,2574.8 L1756.0,2576.2 L1757.5,2577.5 L1759.0,2578.9 L1760.5,2580.9 L1762.0,2582.7 L1763.5,2583.9 L1765.0,2585.3 L1766.5,2586.7 L1768.0,2588.0 L1769.5,2589.4 L1771.0,2578.1 L1772.5,2569.3 L1774.0,2571.9 L1775.5,2575.9 L1777.0,2577.0 L1778.5,2577.1 L1780.0,2576.0 L1781.5,2575.2 L1783.0,2574.8 L1784.5,2575.9 L1786.0,2576.3 L1787.5,2576.4 L1789.0,2576.2 L1790.5,2576.5 L1792.0,2576.6 L1793.5,2575.9 L1795.0,2576.0 L1796.5,2575.7 L1798.0,2576.1 L1799.5,2575.3 L1801.0,2575.8 L1802.5,2575.5 L1804.0,2576.3 L1805.5,2576.8 L1807.0,2576.7 L1808.5,2576.8 L1810.0,2576.6 L1811.5,2577.1 L1813.0,2576.7 L1814.5,2576.0 L1816.0,2576.0 L1817.5,2575.4 L1819.0,2576.4 L1820.5,2576.4 L1822.0,2576.5 L1823.5,2576.6 L1825.0,2576.9 L1826.5,2577.0 L1828.0,2577.1 L1829.5,2577.1 L1831.0,2577.5 L1832.5,2576.7 L1834.0,2580.1 L1835.5,2584.9 L1837.0,2582.8 L1838.5,2577.0 L1840.0,2571.8 L1841.5,2572.1 L1843.0,2572.7 L1844.5,2573.3 L1846.0,2575.0 L1847.5,2574.6 L1849.0,2575.8 L1850.5,2575.6 L1852.0,2576.7 L1853.5,2576.4 L1855.0,2577.7 L1856.5,2577.5 L1858.0,2577.5 L1859.5,2576.6 L1861.0,2576.4 L1862.5,2575.6 L1864.0,2575.5 L1865.5,2574.5 L1867.0,2574.5 L1868.5,2574.0 L1870.0,2574.2 L1871.5,2573.9 L1873.0,2573.3 L1874.5,2573.1 L1876.0,2572.5 L1877.5,2568.7 L1879.0,2560.1 L1880.5,2553.5 L1882.0,2548.3 L1883.5,2549.7 L1885.0,2548.9 L1886.5,2547.3 L1888.0,2548.2 L1889.5,2547.8 L1891.0,2549.1 L1892.5,2549.4 L1894.0,2556.5 L1895.5,2561.3 L1897.0,2566.8 L1898.5,2570.6 L1900.0,2576.4 L1901.5,2578.2 L1903.0,2580.3 L1904.5,2581.3 L1906.0,2582.6 L1907.5,2583.8 L1909.0,2585.8 L1910.5,2588.0 L1912.0,2589.9 L1913.5,2590.1 L1915.0,2589.9 L1916.5,2589.8 L1918.0,2589.8 L1919.5,2589.8 L1921.0,2590.0 L1922.5,2590.0 L1924.0,2589.8 L1925.5,2589.8 L1927.0,2589.8 L1928.5,2588.2 L1930.0,2583.1 L1931.5,2577.8 L1933.0,2572.2 L1934.5,2568.1 L1936.0,2567.6 L1937.5,2568.7 L1939.0,2568.0 L1940.5,2567.8 L1942.0,2569.1 L1943.5,2570.7 L1945.0,2570.6 L1946.5,2570.9 L1948.0,2577.7 L1949.5,2589.0 L1951.0,2592.7 L1952.5,2592.8 L1954.0,2592.8 L1955.5,2592.7 L1957.0,2592.6 L1958.5,2592.6 L1960.0,2592.7 L1961.5,2592.6 L1963.0,2592.7 L1964.5,2592.7 L1966.0,2592.8 L1967.5,2592.8 L1969.0,2592.8 L1970.5,2592.8 L1972.0,2592.8 L1973.5,2590.5 L1975.0,2583.8 L1976.5,2579.5 L1978.0,2579.0 L1979.5,2578.3 L1981.0,2578.2 L1982.5,2578.2 L1984.0,2578.3 L1985.5,2577.9 L1987.0,2577.9 L1988.5,2578.4 L1990.0,2578.7 L1991.5,2579.0 L1993.0,2579.2 L1994.5,2578.9 L1996.0,2578.9 L1997.5,2579.2 L1999.0,2579.3 L2000.5,2579.0 L2002.0,2578.6 L2003.5,2578.6 L2005.0,2579.5 L2006.5,2579.6 L2008.0,2580.1 L2009.5,2580.0 L2011.0,2579.6 L2012.5,2579.8 L2014.0,2579.1 L2015.5,2579.2 L2017.0,2579.2 L2018.5,2585.7 L2020.0,2591.8 L2021.5,2591.8 L2023.0,2591.7 L2024.5,2591.8 L2026.0,2591.9 L2027.5,2590.0 L2029.0,2584.0 L2030.5,2579.5 L2032.0,2579.3 L2033.5,2579.2 L2035.0,2580.0 L2036.5,2580.5 L2038.0,2580.5 L2039.5,2580.4 L2041.0,2579.7 L2042.5,2579.9 L2044.0,2579.3 L2045.5,2580.0 L2047.0,2580.4 L2048.5,2581.2 L2050.0,2580.8 L2051.5,2580.4 L2053.0,2580.3 L2054.5,2580.3 L2056.0,2580.4 L2057.5,2580.0 L2059.0,2580.7 L2060.5,2580.9 L2062.0,2581.0 L2063.5,2580.5 L2065.0,2580.8 L2066.5,2581.3 L2068.0,2581.5 L2069.5,2581.4 L2071.0,2580.7 L2072.5,2581.4 L2074.0,2581.6 L2075.5,2581.8 L2077.0,2581.3 L2078.5,2582.6 L2080.0,2587.1 L2081.5,2591.4 L2083.0,2592.8 L2084.5,2592.7 L2086.0,2592.7 L2087.5,2583.7 L2089.0,2558.2 L2090.5,2543.6 L2092.0,2547.7 L2093.5,2549.3 L2095.0,2549.5 L2096.5,2549.9 L2098.0,2554.2 L2099.5,2558.0 L2101.0,2560.3 L2102.5,2562.7 L2104.0,2565.5 L2105.5,2568.9 L2107.0,2570.2 L2108.5,2573.2 L2110.0,2576.0 L2111.5,2579.7 L2113.0,2581.6 L2114.5,2584.7 L2116.0,2587.1 L2117.5,2587.4 L2119.0,2587.1 L2120.5,2587.0 L2122.0,2587.0 L2123.5,2587.5 L2125.0,2588.0 L2126.5,2588.3 L2128.0,2588.4 L2129.5,2588.5 L2131.0,2588.8 L2132.5,2588.7 L2134.0,2588.8 L2135.5,2588.7 L2137.0,2589.1 L2138.5,2589.4 L2140.0,2589.7 L2141.5,2589.9 L2143.0,2590.0 L2144.5,2590.1 L2146.0,2587.8 L2147.5,2583.9 L2149.0,2584.1 L2150.5,2586.2 L2152.0,2587.3 L2153.5,2587.6 L2155.0,2587.9 L2156.5,2587.8 L2158.0,2587.9 L2159.5,2587.9 L2161.0,2587.9 L2162.5,2587.8 L2164.0,2587.9 L2165.5,2588.3 L2167.0,2588.5 L2168.5,2588.6 L2170.0,2588.4 L2171.5,2588.7 L2173.0,2588.6 L2174.5,2588.8 L2176.0,2589.0 L2177.5,2589.2 L2179.0,2589.3 L2180.5,2589.3 L2182.0,2589.6 L2183.5,2589.5 L2185.0,2589.5 L2186.5,2589.7 L2188.0,2590.0 L2189.5,2589.6 L2191.0,2587.5 L2192.5,2585.0 L2194.0,2582.7 L2195.5,2580.2 L2197.0,2578.0 L2198.5,2575.8 L2200.0,2572.6 L2201.5,2569.4 L2203.0,2565.5 L2204.5,2565.6 L2206.0,2567.0 L2207.5,2568.7 L2209.0,2570.9 L2210.5,2570.8 L2212.0,2571.2 L2213.5,2571.0 L2215.0,2570.0 L2216.5,2568.4 L2218.0,2567.7 L2219.5,2567.8 L2221.0,2569.0 L2222.5,2569.8 L2224.0,2569.6 L2225.5,2569.7 L2227.0,2569.4 L2228.5,2569.5 L2230.0,2569.8 L2231.5,2569.7 L2233.0,2571.1 L2234.5,2570.4 L2236.0,2570.0 L2237.5,2569.7 L2239.0,2569.5 L2240.5,2570.3 L2242.0,2569.8 L2243.5,2569.7 L2245.0,2568.9 L2246.5,2569.0 L2248.0,2569.1 L2249.5,2569.9 L2251.0,2569.3 L2252.5,2569.1 L2254.0,2568.1 L2255.5,2568.6 L2257.0,2569.8 L2258.5,2570.0 L2260.0,2571.0 L2261.5,2571.0 L2263.0,2572.3 L2264.5,2571.8 L2266.0,2570.9 L2267.5,2569.9 L2269.0,2569.5 L2270.5,2577.5 L2272.0,2585.3 L2273.5,2585.2 L2275.0,2584.5 L2276.5,2584.1 L2278.0,2583.5 L2279.5,2581.7 L2281.0,2575.3 L2282.5,2569.5 L2284.0,2563.4 L2285.5,2565.0 L2287.0,2564.3 L2288.5,2563.5 L2290.0,2563.4 L2291.5,2564.6 L2293.0,2565.5 L2294.5,2565.4 L2296.0,2565.2 L2297.5,2572.2 L2299.0,2592.7 L2300.5,2592.7 L2302.0,2592.8 L2303.5,2592.7 L2305.0,2592.7 L2306.5,2592.8 L2308.0,2592.8 L2309.5,2592.8 L2311.0,2592.7 L2312.5,2592.7 L2314.0,2592.7 L2315.5,2592.8 L2317.0,2592.8 L2318.5,2592.8 L2320.0,2592.7 L2321.5,2592.8 L2323.0,2592.7 L2324.5,2591.7 L2326.0,2590.6 L2327.5,2589.7 L2329.0,2588.6 L2330.5,2588.0 L2332.0,2588.1 L2333.5,2588.3 L2335.0,2588.3 L2336.5,2588.5 L2338.0,2588.9 L2339.5,2588.9 L2341.0,2588.9 L2342.5,2589.5 L2344.0,2590.9 L2345.5,2591.8 L2347.0,2591.8 L2348.5,2591.7 L2350.0,2591.9 L2351.5,2591.9 L2353.0,2592.0 L2354.5,2591.9 L2356.0,2587.9 L2357.5,2582.2 L2359.0,2580.5 L2360.5,2580.6 L2362.0,2580.3 L2363.5,2580.4 L2365.0,2580.3 L2366.5,2580.7 L2368.0,2581.0 L2369.5,2581.7 L2371.0,2581.6 L2372.5,2581.4 L2374.0,2581.1 L2375.5,2581.1 L2377.0,2581.4 L2378.5,2581.3 L2380.0,2581.3 L2381.5,2581.3 L2383.0,2581.8 L2384.5,2581.7 L2386.0,2581.1 L2387.5,2580.8 L2389.0,2580.9 L2390.5,2581.2 L2392.0,2581.1 L2393.5,2581.5 L2395.0,2582.0 L2396.5,2583.3 L2398.0,2587.8 L2399.5,2590.8 L2401.0,2590.8 L2402.5,2590.7 L2404.0,2590.8 L2405.5,2590.9 L2407.0,2590.9 L2408.5,2590.7 L2410.0,2590.6 L2411.5,2590.8 L2413.0,2590.9 L2414.5,2590.9 L2416.0,2590.7 L2417.5,2590.8 L2419.0,2590.8 L2420.5,2590.8 L2422.0,2590.7 L2423.5,2590.7 L2425.0,2590.7 L2426.5,2590.8 L2428.0,2590.8 L2429.5,2590.9 L2431.0,2591.0 L2432.5,2590.9 L2434.0,2590.9 L2435.5,2590.7 L2437.0,2590.8 L2438.5,2590.9 L2440.0,2591.1 L2441.5,2591.1 L2443.0,2591.1 L2444.5,2589.1 L2446.0,2583.4 L2447.5,2576.6 L2449.0,2570.2 L2450.5,2564.2 L2452.0,2561.9 L2453.5,2560.0 L2455.0,2557.7 L2456.5,2555.9 L2458.0,2554.6 L2459.5,2556.6 L2461.0,2557.2 L2462.5,2558.2 L2464.0,2556.7 L2465.5,2555.7 L2467.0,2554.1 L2468.5,2553.2 L2470.0,2554.4 L2471.5,2555.1 L2473.0,2555.1 L2474.5,2555.0 L2476.0,2555.0 L2477.5,2554.9 L2479.0,2552.1 L2480.5,2551.3 L2482.0,2550.1 L2483.5,2552.4 L2485.0,2552.5 L2486.5,2552.2 L2488.0,2550.6 L2489.5,2550.0 L2491.0,2550.7 L2492.5,2550.7 L2494.0,2552.1 L2495.5,2551.9 L2497.0,2551.8 L2498.5,2551.8 L2500.0,2553.8 L2501.5,2562.8 L2503.0,2572.3 L2504.5,2581.9 L2506.0,2583.4 L2507.5,2580.2 L2509.0,2576.3 L2510.5,2568.3 L2512.0,2558.0 L2513.5,2550.2 L2515.0,2540.9 L2516.5,2544.2 L2518.0,2546.6 L2519.5,2549.2 L2521.0,2553.5 L2522.5,2557.1 L2524.0,2559.3 L2525.5,2561.6 L2527.0,2564.0 L2528.5,2568.1 L2530.0,2572.3 L2531.5,2576.0 L2533.0,2579.0 L2534.5,2581.6 L2536.0,2582.6 L2537.5,2582.8 L2539.0,2583.2 L2540.5,2583.4 L2542.0,2583.2 L2543.5,2583.8 L2545.0,2584.4 L2546.5,2584.5 L2548.0,2584.6 L2549.5,2584.4 L2551.0,2585.0 L2552.5,2584.6 L2554.0,2585.1 L2555.5,2584.9 L2557.0,2585.2 L2558.5,2585.2 L2560.0,2585.7 L2561.5,2578.6 L2563.0,2570.5 L2564.5,2571.7 L2566.0,2573.1 L2567.5,2574.6 L2569.0,2575.6 L2570.5,2575.7 L2572.0,2575.9 L2573.5,2576.0 L2575.0,2576.7 L2576.5,2576.8 L2578.0,2576.1 L2579.5,2576.5 L2581.0,2577.6 L2582.5,2578.6 L2584.0,2577.9 L2585.5,2577.4 L2587.0,2577.4 L2588.5,2581.6 L2590.0,2593.2 L2591.5,2593.1 L2593.0,2593.2 L2594.5,2593.2 L2596.0,2593.2 L2597.5,2593.2 L2599.0,2593.2 L2600.5,2593.3 L2602.0,2593.3 L2603.5,2593.3 L2605.0,2593.2 L2606.5,2593.2 L2608.0,2593.2 L2609.5,2590.2 L2611.0,2580.9 L2612.5,2580.9 L2614.0,2581.5 L2615.5,2581.8 L2617.0,2582.1 L2618.5,2582.0 L2620.0,2582.2 L2621.5,2582.3 L2623.0,2581.9 L2624.5,2581.7 L2626.0,2581.0 L2627.5,2581.2 L2629.0,2581.3 L2630.5,2581.4 L2632.0,2581.0 L2633.5,2580.5 L2635.0,2580.7 L2636.5,2580.7 L2638.0,2581.0 L2639.5,2581.2 L2641.0,2581.3 L2642.5,2580.7 L2644.0,2580.4 L2645.5,2580.8 L2647.0,2581.4 L2648.5,2581.6 L2650.0,2581.2 L2651.5,2581.1 L2653.0,2580.7 L2654.5,2581.2 L2656.0,2580.8 L2657.5,2581.0 L2659.0,2580.8 L2660.5,2581.1 L2662.0,2581.2 L2663.5,2581.5 L2665.0,2581.6 L2666.5,2581.9 L2668.0,2584.5 L2669.5,2587.8 L2671.0,2589.1 L2672.5,2589.2 L2674.0,2589.0 L2675.5,2589.2 L2677.0,2589.4 L2678.5,2589.6 L2680.0,2589.6 L2681.5,2589.8 L2683.0,2590.1 L2684.5,2590.4 L2686.0,2590.5 L2687.5,2590.6 L2689.0,2590.7 L2690.5,2591.2 L2692.0,2591.9 L2693.5,2592.8 L2695.0,2589.2 L2696.5,2583.5 L2698.0,2581.7 L2699.5,2581.8 L2701.0,2582.2 L2702.5,2582.2 L2704.0,2581.9 L2705.5,2581.7 L2707.0,2581.6 L2708.5,2581.9 L2710.0,2581.4 L2711.5,2581.3 L2713.0,2581.0 L2714.5,2580.8 L2716.0,2580.9 L2717.5,2580.6 L2719.0,2581.1 L2720.5,2580.5 L2722.0,2580.8 L2723.5,2580.6 L2725.0,2580.5 L2726.5,2579.9 L2728.0,2580.2 L2729.5,2580.3 L2731.0,2580.4 L2732.5,2580.5 L2734.0,2584.9 L2735.5,2590.9 L2737.0,2592.8 L2738.5,2592.8 L2740.0,2592.9 L2741.5,2592.8 L2743.0,2592.8 L2744.5,2592.7 L2746.0,2592.8 L2747.5,2592.2 L2749.0,2590.7 L2750.5,2589.1 L2752.0,2587.7 L2753.5,2588.0 L2755.0,2588.4 L2756.5,2588.9 L2758.0,2589.3 L2759.5,2589.6 L2761.0,2589.3 L2762.5,2588.5 L2764.0,2587.8 L2765.5,2587.1 L2767.0,2586.7 L2768.5,2585.9 L2770.0,2584.8 L2771.5,2583.9 L2773.0,2583.3 L2774.5,2582.8 L2776.0,2582.4 L2777.5,2582.3 L2779.0,2582.5 L2780.5,2582.2 L2782.0,2582.7 L2783.5,2582.4 L2785.0,2582.6 L2786.5,2582.5 L2788.0,2582.5 L2789.5,2583.0 L2791.0,2583.4 L2792.5,2583.7 L2794.0,2583.2 L2795.5,2583.1 L2797.0,2583.4 L2798.5,2583.8 L2800.0,2583.9 L2801.5,2583.7 L2803.0,2583.8 L2804.5,2583.8 L2806.0,2583.9 L2807.5,2583.7 L2809.0,2583.5 L2810.5,2583.6 L2812.0,2584.0 L2813.5,2584.4 L2815.0,2585.0 L2816.5,2585.3 L2818.0,2585.6 L2819.5,2585.6 L2821.0,2585.9 L2822.5,2586.3 L2824.0,2586.6 L2825.5,2586.8 L2827.0,2587.2 L2828.5,2587.3 L2830.0,2587.6 L2831.5,2587.9 L2833.0,2588.4 L2834.5,2588.8 L2836.0,2589.2 L2837.5,2589.3 L2839.0,2589.3 L2840.5,2589.6 L2842.0,2590.0 L2843.5,2590.4 L2845.0,2590.7 L2846.5,2591.1 L2848.0,2591.5 L2849.5,2591.6 L2851.0,2591.7 L2852.5,2592.0 L2854.0,2592.4 L2855.5,2592.7 L2857.0,2592.8 L2858.5,2592.7 L2860.0,2592.7 L2861.5,2592.8 L2863.0,2592.8 L2864.5,2592.8 L2866.0,2592.7 L2867.5,2592.7 L2869.0,2592.6 L2870.5,2592.5 L2872.0,2592.5 L2873.5,2592.5 L2875.0,2592.6 L2876.5,2592.6 L2878.0,2592.7 L2879.5,2592.6 L2881.0,2592.5 L2882.5,2592.4 L2884.0,2592.4 L2885.5,2592.4 L2887.0,2592.5 L2888.5,2592.5 L2890.0,2592.5 L2891.5,2592.5 L2893.0,2592.4 L2894.5,2592.4 L2896.0,2592.4 L2897.5,2592.5 L2899.0,2592.5 L2900.5,2592.5 L2902.0,2592.4 L2903.5,2592.3 L2905.0,2592.3 L2906.5,2592.4 L2908.0,2592.4 L2909.5,2592.4 L2911.0,2592.3 L2912.5,2592.3 L2914.0,2592.2 L2915.5,2592.2 L2917.0,2592.2 L2918.5,2592.2 L2920.0,2592.2 L2921.5,2592.4 L2923.0,2592.5 L2924.5,2592.7 L2926.0,2592.8 L2927.5,2585.4 L2929.0,2576.9 L2930.5,2571.7 L2932.0,2572.4 L2933.5,2573.5 L2935.0,2575.0 L2936.5,2576.1 L2938.0,2576.9 L2939.5,2578.0 L2941.0,2579.1 L2942.5,2580.6 L2944.0,2581.4 L2945.5,2582.0 L2947.0,2583.0 L2948.5,2584.3 L2950.0,2585.7 L2951.5,2586.9 L2953.0,2587.9 L2954.5,2588.8 L2956.0,2590.1 L2957.5,2591.2 L2959.0,2591.8 L2960.5,2591.9 L2962.0,2592.0 L2963.5,2592.0 L2965.0,2592.1 L2966.5,2592.1 L2968.0,2592.2 L2969.5,2592.2 L2971.0,2592.2 L2972.5,2592.2 L2974.0,2592.3 L2975.5,2592.4 L2977.0,2592.4 L2978.5,2592.4 L2980.0,2592.5 L2981.5,2592.6 L2983.0,2592.7 L2984.5,2592.8 L2986.0,2590.2 L2987.5,2585.9 L2989.0,2581.7 L2990.5,2578.6 L2992.0,2574.6 L2993.5,2574.8 L2995.0,2573.5 L2996.5,2574.2 L2998.0,2574.2 L2999.5,2574.4 L3001.0,2574.6 L3002.5,2573.7 L3004.0,2574.1 L3005.5,2574.4 L3007.0,2574.4 L3008.5,2575.0 L3010.0,2575.2 L3011.5,2576.1 L3013.0,2575.1 L3014.5,2573.9 L3016.0,2573.6 L3017.5,2574.1 L3019.0,2574.2 L3020.5,2573.6 L3022.0,2574.0 L3023.5,2574.8 L3025.0,2575.8 L3026.5,2575.9 L3028.0,2575.8 L3029.5,2575.0 L3031.0,2574.8 L3032.5,2575.1 L3034.0,2574.9 L3035.5,2575.0 L3037.0,2575.2 L3038.5,2575.9 L3040.0,2575.5 L3041.5,2575.5 L3043.0,2575.6 L3044.5,2576.6 L3046.0,2576.5 L3047.5,2576.5 L3049.0,2575.5 L3050.5,2575.7 L3052.0,2575.2 L3053.5,2575.6 L3055.0,2575.2 L3056.5,2575.7 L3058.0,2578.7 L3059.5,2582.7 L3061.0,2586.2 L3062.5,2589.4 L3064.0,2592.7 L3065.5,2592.7 L3067.0,2592.6 L3068.5,2592.7 L3070.0,2592.7 L3071.5,2592.8 L3073.0,2592.8 L3074.5,2592.7 L3076.0,2592.7 L3077.5,2592.7 L3079.0,2592.6 L3080.5,2592.7 L3082.0,2592.6 L3083.5,2592.7 L3085.0,2592.7 L3086.5,2592.7 L3088.0,2592.6 L3089.5,2592.6 L3091.0,2592.7 L3092.5,2589.0 L3094.0,2578.2 L3095.5,2569.9 L3097.0,2571.2 L3098.5,2572.2 L3100.0,2572.9 L3101.5,2572.5 L3103.0,2571.7 L3104.5,2571.3 L3106.0,2572.0 L3107.5,2572.7 L3109.0,2572.5 L3110.5,2572.5 L3112.0,2572.4 L3113.5,2573.5 L3115.0,2573.5 L3116.5,2573.9 L3118.0,2574.0 L3119.5,2573.9 L3121.0,2573.6 L3122.5,2573.6 L3124.0,2572.8 L3125.5,2573.2 L3127.0,2573.0 L3128.5,2570.3 L3130.0,2567.5 L3131.5,2567.8 L3133.0,2567.2 L3134.5,2565.6 L3136.0,2564.5 L3137.5,2564.4 L3139.0,2565.0 L3140.5,2565.1 L3142.0,2566.8 L3143.5,2567.6 L3145.0,2568.7 L3146.5,2568.5 L3148.0,2567.8 L3149.5,2567.8 L3151.0,2567.9 L3152.5,2568.5 L3154.0,2567.8 L3155.5,2567.0 L3157.0,2567.7 L3158.5,2567.9 L3160.0,2569.0 L3161.5,2568.7 L3163.0,2568.9 L3164.5,2568.8 L3166.0,2568.8 L3167.5,2570.0 L3169.0,2570.6 L3170.5,2572.6 L3172.0,2574.2 L3173.5,2576.4 L3175.0,2577.7 L3176.5,2578.5 L3178.0,2579.6 L3179.5,2581.1 L3181.0,2583.0 L3182.5,2584.5 L3184.0,2585.2 L3185.5,2586.5 L3187.0,2587.6 L3188.5,2589.4 L3190.0,2590.8 L3191.5,2591.8 L3193.0,2591.8 L3194.5,2591.8 L3196.0,2591.8 L3197.5,2591.8 L3199.0,2591.9 L3200.5,2591.9 L3202.0,2591.9 L3203.5,2591.8 L3205.0,2592.0 L3206.5,2592.0 L3208.0,2592.1 L3209.5,2592.1 L3211.0,2592.0 L3212.5,2592.1 L3214.0,2592.0 L3215.5,2592.2 L3217.0,2592.1 L3218.5,2592.1 L3220.0,2592.1 L3221.5,2592.2 L3223.0,2592.1 L3224.5,2592.0 L3226.0,2592.1 L3227.5,2592.1 L3229.0,2592.3 L3230.5,2592.2 L3232.0,2592.1 L3233.5,2592.2 L3235.0,2592.2 L3236.5,2592.3 L3238.0,2592.2 L3239.5,2592.3 L3241.0,2592.2 L3242.5,2592.3 L3244.0,2592.3 L3245.5,2592.3 L3247.0,2592.3 L3248.5,2592.4 L3250.0,2592.4 L3251.5,2592.4 L3253.0,2592.3 L3254.5,2592.2 L3256.0,2592.3 L3257.5,2592.3 L3259.0,2592.4 L3260.5,2592.4 L3262.0,2592.4 L3263.5,2592.4 L3265.0,2592.4 L3266.5,2592.4 L3268.0,2592.4 L3269.5,2592.4 L3271.0,2592.5 L3272.5,2592.5 L3274.0,2592.6 L3275.5,2592.6 L3277.0,2592.6 L3278.5,2592.6 L3280.0,2592.6 L3281.5,2592.7 L3283.0,2592.7 L3284.5,2592.6 L3286.0,2592.5 L3287.5,2592.5 L3289.0,2592.6 L3290.5,2592.6 L3292.0,2592.7 L3293.5,2592.6 L3295.0,2592.0 L3296.5,2591.6 L3298.0,2591.1 L3299.5,2590.8 L3301.0,2590.4 L3302.5,2589.9 L3304.0,2589.3 L3305.5,2588.8 L3307.0,2588.5 L3308.5,2588.1 L3310.0,2587.4 L3311.5,2587.0 L3313.0,2586.4 L3314.5,2586.2 L3316.0,2585.6 L3317.5,2585.0 L3319.0,2584.2 L3320.5,2583.3 L3322.0,2583.5 L3323.5,2582.8 L3325.0,2583.0 L3325.0,2606.2 L3323.5,2606.4 L3322.0,2605.7 L3320.5,2605.9 L3319.0,2605.0 L3317.5,2604.2 L3316.0,2603.6 L3314.5,2603.0 L3313.0,2602.8 L3311.5,2602.2 L3310.0,2601.8 L3308.5,2601.1 L3307.0,2600.7 L3305.5,2600.4 L3304.0,2599.9 L3302.5,2599.3 L3301.0,2598.8 L3299.5,2598.4 L3298.0,2598.1 L3296.5,2597.6 L3295.0,2597.2 L3293.5,2596.6 L3292.0,2596.5 L3290.5,2596.6 L3289.0,2596.6 L3287.5,2596.7 L3286.0,2596.7 L3284.5,2596.6 L3283.0,2596.5 L3281.5,2596.5 L3280.0,2596.6 L3278.5,2596.6 L3277.0,2596.6 L3275.5,2596.6 L3274.0,2596.6 L3272.5,2596.7 L3271.0,2596.7 L3269.5,2596.8 L3268.0,2596.8 L3266.5,2596.8 L3265.0,2596.8 L3263.5,2596.8 L3262.0,2596.8 L3260.5,2596.8 L3259.0,2596.8 L3257.5,2596.9 L3256.0,2596.9 L3254.5,2597.0 L3253.0,2596.9 L3251.5,2596.8 L3250.0,2596.8 L3248.5,2596.8 L3247.0,2596.9 L3245.5,2596.9 L3244.0,2596.9 L3242.5,2596.9 L3241.0,2597.0 L3239.5,2596.9 L3238.0,2597.0 L3236.5,2596.9 L3235.0,2597.0 L3233.5,2597.0 L3232.0,2597.1 L3230.5,2597.0 L3229.0,2596.9 L3227.5,2597.1 L3226.0,2597.1 L3224.5,2597.2 L3223.0,2597.1 L3221.5,2597.0 L3220.0,2597.1 L3218.5,2597.1 L3217.0,2597.1 L3215.5,2597.0 L3214.0,2597.2 L3212.5,2597.1 L3211.0,2597.2 L3209.5,2597.1 L3208.0,2597.1 L3206.5,2597.2 L3205.0,2597.2 L3203.5,2597.4 L3202.0,2597.3 L3200.5,2597.3 L3199.0,2597.3 L3197.5,2597.4 L3196.0,2597.4 L3194.5,2597.4 L3193.0,2597.4 L3191.5,2597.4 L3190.0,2598.4 L3188.5,2599.8 L3187.0,2601.6 L3185.5,2602.7 L3184.0,2604.0 L3182.5,2604.7 L3181.0,2606.2 L3179.5,2608.1 L3178.0,2609.6 L3176.5,2610.7 L3175.0,2611.5 L3173.5,2612.8 L3172.0,2615.0 L3170.5,2616.6 L3169.0,2618.6 L3167.5,2619.2 L3166.0,2620.4 L3164.5,2620.4 L3163.0,2620.3 L3161.5,2620.5 L3160.0,2620.2 L3158.5,2621.3 L3157.0,2621.5 L3155.5,2622.2 L3154.0,2621.4 L3152.5,2620.7 L3151.0,2621.3 L3149.5,2621.4 L3148.0,2621.4 L3146.5,2620.7 L3145.0,2620.5 L3143.5,2621.6 L3142.0,2622.4 L3140.5,2624.1 L3139.0,2624.2 L3137.5,2624.8 L3136.0,2624.7 L3134.5,2623.6 L3133.0,2622.0 L3131.5,2621.4 L3130.0,2621.7 L3128.5,2618.9 L3127.0,2616.2 L3125.5,2616.0 L3124.0,2616.4 L3122.5,2615.6 L3121.0,2615.6 L3119.5,2615.3 L3118.0,2615.2 L3116.5,2615.3 L3115.0,2615.7 L3113.5,2615.7 L3112.0,2616.8 L3110.5,2616.7 L3109.0,2616.7 L3107.5,2616.5 L3106.0,2617.2 L3104.5,2617.9 L3103.0,2617.5 L3101.5,2616.7 L3100.0,2616.3 L3098.5,2617.0 L3097.0,2618.0 L3095.5,2619.3 L3094.0,2611.0 L3092.5,2600.2 L3091.0,2596.5 L3089.5,2596.6 L3088.0,2596.6 L3086.5,2596.5 L3085.0,2596.5 L3083.5,2596.5 L3082.0,2596.6 L3080.5,2596.5 L3079.0,2596.6 L3077.5,2596.5 L3076.0,2596.5 L3074.5,2596.5 L3073.0,2596.4 L3071.5,2596.4 L3070.0,2596.5 L3068.5,2596.5 L3067.0,2596.6 L3065.5,2596.5 L3064.0,2596.5 L3062.5,2599.8 L3061.0,2603.0 L3059.5,2606.5 L3058.0,2610.5 L3056.5,2613.5 L3055.0,2614.0 L3053.5,2613.6 L3052.0,2614.0 L3050.5,2613.5 L3049.0,2613.7 L3047.5,2612.7 L3046.0,2612.7 L3044.5,2612.6 L3043.0,2613.6 L3041.5,2613.7 L3040.0,2613.7 L3038.5,2613.3 L3037.0,2614.0 L3035.5,2614.2 L3034.0,2614.3 L3032.5,2614.1 L3031.0,2614.4 L3029.5,2614.2 L3028.0,2613.4 L3026.5,2613.3 L3025.0,2613.4 L3023.5,2614.4 L3022.0,2615.2 L3020.5,2615.6 L3019.0,2615.0 L3017.5,2615.1 L3016.0,2615.6 L3014.5,2615.3 L3013.0,2614.1 L3011.5,2613.1 L3010.0,2614.0 L3008.5,2614.2 L3007.0,2614.8 L3005.5,2614.8 L3004.0,2615.1 L3002.5,2615.5 L3001.0,2614.6 L2999.5,2614.8 L2998.0,2615.0 L2996.5,2615.0 L2995.0,2615.7 L2993.5,2614.4 L2992.0,2614.6 L2990.5,2610.6 L2989.0,2607.5 L2987.5,2603.3 L2986.0,2599.0 L2984.5,2596.4 L2983.0,2596.5 L2981.5,2596.6 L2980.0,2596.7 L2978.5,2596.8 L2977.0,2596.8 L2975.5,2596.8 L2974.0,2596.9 L2972.5,2597.0 L2971.0,2597.0 L2969.5,2597.0 L2968.0,2597.0 L2966.5,2597.1 L2965.0,2597.1 L2963.5,2597.2 L2962.0,2597.2 L2960.5,2597.3 L2959.0,2597.4 L2957.5,2598.0 L2956.0,2599.1 L2954.5,2600.4 L2953.0,2601.3 L2951.5,2602.3 L2950.0,2603.5 L2948.5,2604.9 L2947.0,2606.2 L2945.5,2607.2 L2944.0,2607.8 L2942.5,2608.6 L2941.0,2610.1 L2939.5,2611.2 L2938.0,2612.3 L2936.5,2613.1 L2935.0,2614.2 L2933.5,2615.7 L2932.0,2616.8 L2930.5,2617.5 L2929.0,2612.3 L2927.5,2603.8 L2926.0,2596.4 L2924.5,2596.5 L2923.0,2596.7 L2921.5,2596.8 L2920.0,2597.0 L2918.5,2597.0 L2917.0,2597.0 L2915.5,2597.0 L2914.0,2597.0 L2912.5,2596.9 L2911.0,2596.9 L2909.5,2596.8 L2908.0,2596.8 L2906.5,2596.8 L2905.0,2596.9 L2903.5,2596.9 L2902.0,2596.8 L2900.5,2596.7 L2899.0,2596.7 L2897.5,2596.7 L2896.0,2596.8 L2894.5,2596.8 L2893.0,2596.8 L2891.5,2596.7 L2890.0,2596.7 L2888.5,2596.7 L2887.0,2596.7 L2885.5,2596.8 L2884.0,2596.8 L2882.5,2596.8 L2881.0,2596.7 L2879.5,2596.6 L2878.0,2596.5 L2876.5,2596.6 L2875.0,2596.6 L2873.5,2596.7 L2872.0,2596.7 L2870.5,2596.7 L2869.0,2596.6 L2867.5,2596.5 L2866.0,2596.5 L2864.5,2596.4 L2863.0,2596.4 L2861.5,2596.4 L2860.0,2596.5 L2858.5,2596.5 L2857.0,2596.4 L2855.5,2596.5 L2854.0,2596.8 L2852.5,2597.2 L2851.0,2597.5 L2849.5,2597.6 L2848.0,2597.7 L2846.5,2598.1 L2845.0,2598.5 L2843.5,2598.8 L2842.0,2599.2 L2840.5,2599.6 L2839.0,2599.9 L2837.5,2599.9 L2836.0,2600.0 L2834.5,2600.4 L2833.0,2600.8 L2831.5,2601.3 L2830.0,2601.6 L2828.5,2601.9 L2827.0,2602.0 L2825.5,2602.4 L2824.0,2602.6 L2822.5,2602.9 L2821.0,2603.3 L2819.5,2603.6 L2818.0,2603.6 L2816.5,2603.9 L2815.0,2604.2 L2813.5,2604.8 L2812.0,2605.2 L2810.5,2605.6 L2809.0,2605.7 L2807.5,2605.5 L2806.0,2605.3 L2804.5,2605.4 L2803.0,2605.4 L2801.5,2605.5 L2800.0,2605.3 L2798.5,2605.4 L2797.0,2605.8 L2795.5,2606.1 L2794.0,2606.0 L2792.5,2605.5 L2791.0,2605.8 L2789.5,2606.2 L2788.0,2606.7 L2786.5,2606.7 L2785.0,2606.6 L2783.5,2606.8 L2782.0,2606.5 L2780.5,2607.0 L2779.0,2606.7 L2777.5,2606.9 L2776.0,2606.8 L2774.5,2606.4 L2773.0,2605.9 L2771.5,2605.3 L2770.0,2604.4 L2768.5,2603.3 L2767.0,2602.5 L2765.5,2602.1 L2764.0,2601.4 L2762.5,2600.7 L2761.0,2599.9 L2759.5,2599.6 L2758.0,2599.9 L2756.5,2600.3 L2755.0,2600.8 L2753.5,2601.2 L2752.0,2601.5 L2750.5,2600.1 L2749.0,2598.5 L2747.5,2597.0 L2746.0,2596.4 L2744.5,2596.5 L2743.0,2596.4 L2741.5,2596.4 L2740.0,2596.3 L2738.5,2596.4 L2737.0,2596.4 L2735.5,2598.3 L2734.0,2604.3 L2732.5,2608.7 L2731.0,2608.8 L2729.5,2608.9 L2728.0,2609.0 L2726.5,2609.3 L2725.0,2608.7 L2723.5,2608.6 L2722.0,2608.4 L2720.5,2608.7 L2719.0,2608.1 L2717.5,2608.6 L2716.0,2608.3 L2714.5,2608.4 L2713.0,2608.2 L2711.5,2607.9 L2710.0,2607.8 L2708.5,2607.3 L2707.0,2607.6 L2705.5,2607.5 L2704.0,2607.3 L2702.5,2607.0 L2701.0,2607.0 L2699.5,2607.4 L2698.0,2607.5 L2696.5,2605.7 L2695.0,2600.0 L2693.5,2596.4 L2692.0,2597.3 L2690.5,2598.0 L2689.0,2598.5 L2687.5,2598.6 L2686.0,2598.7 L2684.5,2598.8 L2683.0,2599.1 L2681.5,2599.4 L2680.0,2599.6 L2678.5,2599.6 L2677.0,2599.8 L2675.5,2600.0 L2674.0,2600.2 L2672.5,2600.0 L2671.0,2600.1 L2669.5,2601.4 L2668.0,2604.7 L2666.5,2607.3 L2665.0,2607.6 L2663.5,2607.7 L2662.0,2608.0 L2660.5,2608.1 L2659.0,2608.4 L2657.5,2608.2 L2656.0,2608.4 L2654.5,2608.0 L2653.0,2608.5 L2651.5,2608.1 L2650.0,2608.0 L2648.5,2607.6 L2647.0,2607.8 L2645.5,2608.4 L2644.0,2608.8 L2642.5,2608.5 L2641.0,2607.9 L2639.5,2608.0 L2638.0,2608.2 L2636.5,2608.5 L2635.0,2608.5 L2633.5,2608.7 L2632.0,2608.2 L2630.5,2607.8 L2629.0,2607.9 L2627.5,2608.0 L2626.0,2608.2 L2624.5,2607.5 L2623.0,2607.3 L2621.5,2606.9 L2620.0,2607.0 L2618.5,2607.2 L2617.0,2607.1 L2615.5,2607.4 L2614.0,2607.7 L2612.5,2608.3 L2611.0,2608.3 L2609.5,2599.0 L2608.0,2596.0 L2606.5,2596.0 L2605.0,2596.0 L2603.5,2595.9 L2602.0,2595.9 L2600.5,2595.9 L2599.0,2596.0 L2597.5,2596.0 L2596.0,2596.0 L2594.5,2596.0 L2593.0,2596.0 L2591.5,2596.1 L2590.0,2596.0 L2588.5,2607.6 L2587.0,2611.8 L2585.5,2611.8 L2584.0,2611.3 L2582.5,2610.6 L2581.0,2611.6 L2579.5,2612.7 L2578.0,2613.1 L2576.5,2612.4 L2575.0,2612.5 L2573.5,2613.2 L2572.0,2613.3 L2570.5,2613.5 L2569.0,2613.6 L2567.5,2614.6 L2566.0,2616.1 L2564.5,2617.5 L2563.0,2618.7 L2561.5,2610.6 L2560.0,2603.5 L2558.5,2604.0 L2557.0,2604.0 L2555.5,2604.3 L2554.0,2604.1 L2552.5,2604.6 L2551.0,2604.2 L2549.5,2604.8 L2548.0,2604.6 L2546.5,2604.7 L2545.0,2604.8 L2543.5,2605.4 L2542.0,2606.0 L2540.5,2605.8 L2539.0,2606.0 L2537.5,2606.4 L2536.0,2606.6 L2534.5,2607.6 L2533.0,2610.2 L2531.5,2613.2 L2530.0,2616.9 L2528.5,2621.1 L2527.0,2625.2 L2525.5,2627.6 L2524.0,2629.9 L2522.5,2632.1 L2521.0,2635.7 L2519.5,2640.0 L2518.0,2642.6 L2516.5,2645.0 L2515.0,2648.3 L2513.5,2639.0 L2512.0,2631.2 L2510.5,2620.9 L2509.0,2612.9 L2507.5,2609.0 L2506.0,2605.8 L2504.5,2607.3 L2503.0,2616.9 L2501.5,2626.4 L2500.0,2635.4 L2498.5,2637.4 L2497.0,2637.4 L2495.5,2637.3 L2494.0,2637.1 L2492.5,2638.5 L2491.0,2638.5 L2489.5,2639.2 L2488.0,2638.6 L2486.5,2637.0 L2485.0,2636.7 L2483.5,2636.8 L2482.0,2639.1 L2480.5,2637.9 L2479.0,2637.1 L2477.5,2634.3 L2476.0,2634.2 L2474.5,2634.2 L2473.0,2634.1 L2471.5,2634.1 L2470.0,2634.8 L2468.5,2636.0 L2467.0,2635.1 L2465.5,2633.5 L2464.0,2632.5 L2462.5,2631.0 L2461.0,2632.0 L2459.5,2632.6 L2458.0,2634.6 L2456.5,2633.3 L2455.0,2631.5 L2453.5,2629.2 L2452.0,2627.3 L2450.5,2625.0 L2449.0,2619.0 L2447.5,2612.6 L2446.0,2605.8 L2444.5,2600.1 L2443.0,2598.1 L2441.5,2598.1 L2440.0,2598.1 L2438.5,2598.3 L2437.0,2598.4 L2435.5,2598.5 L2434.0,2598.3 L2432.5,2598.3 L2431.0,2598.2 L2429.5,2598.3 L2428.0,2598.4 L2426.5,2598.4 L2425.0,2598.5 L2423.5,2598.5 L2422.0,2598.5 L2420.5,2598.4 L2419.0,2598.4 L2417.5,2598.4 L2416.0,2598.5 L2414.5,2598.3 L2413.0,2598.3 L2411.5,2598.4 L2410.0,2598.6 L2408.5,2598.5 L2407.0,2598.3 L2405.5,2598.3 L2404.0,2598.4 L2402.5,2598.5 L2401.0,2598.4 L2399.5,2598.4 L2398.0,2601.4 L2396.5,2605.9 L2395.0,2607.2 L2393.5,2607.7 L2392.0,2608.1 L2390.5,2608.0 L2389.0,2608.3 L2387.5,2608.4 L2386.0,2608.1 L2384.5,2607.5 L2383.0,2607.4 L2381.5,2607.9 L2380.0,2607.9 L2378.5,2607.9 L2377.0,2607.8 L2375.5,2608.1 L2374.0,2608.1 L2372.5,2607.8 L2371.0,2607.6 L2369.5,2607.5 L2368.0,2608.2 L2366.5,2608.5 L2365.0,2608.9 L2363.5,2608.8 L2362.0,2608.9 L2360.5,2608.6 L2359.0,2608.7 L2357.5,2607.0 L2356.0,2601.3 L2354.5,2597.3 L2353.0,2597.2 L2351.5,2597.3 L2350.0,2597.3 L2348.5,2597.5 L2347.0,2597.4 L2345.5,2597.4 L2344.0,2598.3 L2342.5,2599.7 L2341.0,2600.3 L2339.5,2600.3 L2338.0,2600.3 L2336.5,2600.7 L2335.0,2600.9 L2333.5,2600.9 L2332.0,2601.1 L2330.5,2601.2 L2329.0,2600.6 L2327.5,2599.5 L2326.0,2598.6 L2324.5,2597.5 L2323.0,2596.5 L2321.5,2596.4 L2320.0,2596.5 L2318.5,2596.4 L2317.0,2596.4 L2315.5,2596.4 L2314.0,2596.5 L2312.5,2596.5 L2311.0,2596.5 L2309.5,2596.4 L2308.0,2596.4 L2306.5,2596.4 L2305.0,2596.5 L2303.5,2596.5 L2302.0,2596.4 L2300.5,2596.5 L2299.0,2596.5 L2297.5,2617.0 L2296.0,2624.0 L2294.5,2623.8 L2293.0,2623.7 L2291.5,2624.6 L2290.0,2625.8 L2288.5,2625.7 L2287.0,2624.9 L2285.5,2624.2 L2284.0,2625.8 L2282.5,2619.7 L2281.0,2613.9 L2279.5,2607.5 L2278.0,2605.7 L2276.5,2605.1 L2275.0,2604.7 L2273.5,2604.0 L2272.0,2603.9 L2270.5,2611.7 L2269.0,2619.7 L2267.5,2619.3 L2266.0,2618.3 L2264.5,2617.4 L2263.0,2616.9 L2261.5,2618.2 L2260.0,2618.2 L2258.5,2619.2 L2257.0,2619.4 L2255.5,2620.6 L2254.0,2621.1 L2252.5,2620.1 L2251.0,2619.9 L2249.5,2619.3 L2248.0,2620.1 L2246.5,2620.2 L2245.0,2620.3 L2243.5,2619.5 L2242.0,2619.4 L2240.5,2618.9 L2239.0,2619.7 L2237.5,2619.5 L2236.0,2619.2 L2234.5,2618.8 L2233.0,2618.1 L2231.5,2619.5 L2230.0,2619.4 L2228.5,2619.7 L2227.0,2619.8 L2225.5,2619.5 L2224.0,2619.6 L2222.5,2619.4 L2221.0,2620.2 L2219.5,2621.4 L2218.0,2621.5 L2216.5,2620.8 L2215.0,2619.2 L2213.5,2618.2 L2212.0,2618.0 L2210.5,2618.4 L2209.0,2618.3 L2207.5,2620.5 L2206.0,2622.2 L2204.5,2623.6 L2203.0,2623.7 L2201.5,2619.8 L2200.0,2616.6 L2198.5,2613.4 L2197.0,2611.2 L2195.5,2609.0 L2194.0,2606.5 L2192.5,2604.2 L2191.0,2601.7 L2189.5,2599.6 L2188.0,2599.2 L2186.5,2599.5 L2185.0,2599.7 L2183.5,2599.7 L2182.0,2599.6 L2180.5,2599.9 L2179.0,2599.9 L2177.5,2600.0 L2176.0,2600.2 L2174.5,2600.4 L2173.0,2600.6 L2171.5,2600.5 L2170.0,2600.8 L2168.5,2600.6 L2167.0,2600.7 L2165.5,2600.9 L2164.0,2601.3 L2162.5,2601.4 L2161.0,2601.3 L2159.5,2601.3 L2158.0,2601.3 L2156.5,2601.4 L2155.0,2601.3 L2153.5,2601.6 L2152.0,2601.9 L2150.5,2603.0 L2149.0,2605.1 L2147.5,2605.3 L2146.0,2601.4 L2144.5,2599.1 L2143.0,2599.2 L2141.5,2599.3 L2140.0,2599.5 L2138.5,2599.8 L2137.0,2600.1 L2135.5,2600.5 L2134.0,2600.4 L2132.5,2600.5 L2131.0,2600.4 L2129.5,2600.7 L2128.0,2600.8 L2126.5,2600.9 L2125.0,2601.2 L2123.5,2601.7 L2122.0,2602.2 L2120.5,2602.2 L2119.0,2602.1 L2117.5,2601.8 L2116.0,2602.1 L2114.5,2604.5 L2113.0,2607.6 L2111.5,2609.5 L2110.0,2613.2 L2108.5,2616.0 L2107.0,2619.0 L2105.5,2620.3 L2104.0,2623.7 L2102.5,2626.5 L2101.0,2628.9 L2099.5,2631.2 L2098.0,2635.0 L2096.5,2639.3 L2095.0,2639.7 L2093.5,2639.9 L2092.0,2641.5 L2090.5,2645.6 L2089.0,2631.0 L2087.5,2605.5 L2086.0,2596.5 L2084.5,2596.5 L2083.0,2596.4 L2081.5,2597.8 L2080.0,2602.1 L2078.5,2606.6 L2077.0,2607.9 L2075.5,2607.4 L2074.0,2607.6 L2072.5,2607.8 L2071.0,2608.5 L2069.5,2607.8 L2068.0,2607.7 L2066.5,2607.9 L2065.0,2608.4 L2063.5,2608.7 L2062.0,2608.2 L2060.5,2608.3 L2059.0,2608.5 L2057.5,2609.2 L2056.0,2608.8 L2054.5,2608.9 L2053.0,2608.9 L2051.5,2608.8 L2050.0,2608.4 L2048.5,2608.0 L2047.0,2608.8 L2045.5,2609.2 L2044.0,2609.9 L2042.5,2609.3 L2041.0,2609.5 L2039.5,2608.8 L2038.0,2608.7 L2036.5,2608.7 L2035.0,2609.2 L2033.5,2610.0 L2032.0,2609.9 L2030.5,2609.7 L2029.0,2605.2 L2027.5,2599.2 L2026.0,2597.3 L2024.5,2597.4 L2023.0,2597.5 L2021.5,2597.4 L2020.0,2597.4 L2018.5,2603.5 L2017.0,2610.0 L2015.5,2610.0 L2014.0,2610.1 L2012.5,2609.4 L2011.0,2609.6 L2009.5,2609.2 L2008.0,2609.1 L2006.5,2609.6 L2005.0,2609.7 L2003.5,2610.6 L2002.0,2610.6 L2000.5,2610.2 L1999.0,2609.9 L1997.5,2610.0 L1996.0,2610.3 L1994.5,2610.3 L1993.0,2610.0 L1991.5,2610.2 L1990.0,2610.5 L1988.5,2610.8 L1987.0,2611.3 L1985.5,2611.3 L1984.0,2610.9 L1982.5,2611.0 L1981.0,2611.0 L1979.5,2610.9 L1978.0,2610.2 L1976.5,2609.7 L1975.0,2605.4 L1973.5,2598.7 L1972.0,2596.4 L1970.5,2596.4 L1969.0,2596.4 L1967.5,2596.4 L1966.0,2596.4 L1964.5,2596.5 L1963.0,2596.5 L1961.5,2596.6 L1960.0,2596.5 L1958.5,2596.6 L1957.0,2596.6 L1955.5,2596.5 L1954.0,2596.4 L1952.5,2596.4 L1951.0,2596.5 L1949.5,2600.2 L1948.0,2611.5 L1946.5,2618.3 L1945.0,2618.6 L1943.5,2618.5 L1942.0,2620.1 L1940.5,2621.4 L1939.0,2621.2 L1937.5,2620.5 L1936.0,2621.6 L1934.5,2621.1 L1933.0,2617.0 L1931.5,2611.4 L1930.0,2606.1 L1928.5,2601.0 L1927.0,2599.4 L1925.5,2599.4 L1924.0,2599.4 L1922.5,2599.2 L1921.0,2599.2 L1919.5,2599.4 L1918.0,2599.4 L1916.5,2599.4 L1915.0,2599.3 L1913.5,2599.1 L1912.0,2599.3 L1910.5,2601.2 L1909.0,2603.4 L1907.5,2605.4 L1906.0,2606.6 L1904.5,2607.9 L1903.0,2608.9 L1901.5,2611.0 L1900.0,2612.8 L1898.5,2618.6 L1897.0,2622.4 L1895.5,2627.9 L1894.0,2632.7 L1892.5,2639.8 L1891.0,2640.1 L1889.5,2641.4 L1888.0,2641.0 L1886.5,2641.9 L1885.0,2640.3 L1883.5,2639.5 L1882.0,2640.9 L1880.5,2635.7 L1879.0,2629.1 L1877.5,2620.5 L1876.0,2616.7 L1874.5,2616.1 L1873.0,2615.9 L1871.5,2615.3 L1870.0,2615.0 L1868.5,2615.2 L1867.0,2614.7 L1865.5,2614.7 L1864.0,2613.7 L1862.5,2613.6 L1861.0,2612.8 L1859.5,2612.6 L1858.0,2611.7 L1856.5,2611.7 L1855.0,2611.5 L1853.5,2612.8 L1852.0,2612.5 L1850.5,2613.6 L1849.0,2613.4 L1847.5,2614.6 L1846.0,2614.2 L1844.5,2615.9 L1843.0,2616.5 L1841.5,2617.1 L1840.0,2617.4 L1838.5,2612.2 L1837.0,2606.4 L1835.5,2604.3 L1834.0,2609.1 L1832.5,2612.5 L1831.0,2611.7 L1829.5,2612.1 L1828.0,2612.1 L1826.5,2612.2 L1825.0,2612.3 L1823.5,2612.6 L1822.0,2612.7 L1820.5,2612.8 L1819.0,2612.8 L1817.5,2613.8 L1816.0,2613.2 L1814.5,2613.2 L1813.0,2612.5 L1811.5,2612.1 L1810.0,2612.6 L1808.5,2612.4 L1807.0,2612.5 L1805.5,2612.4 L1804.0,2612.9 L1802.5,2613.7 L1801.0,2613.4 L1799.5,2613.9 L1798.0,2613.1 L1796.5,2613.5 L1795.0,2613.2 L1793.5,2613.3 L1792.0,2612.6 L1790.5,2612.7 L1789.0,2613.0 L1787.5,2612.8 L1786.0,2612.9 L1784.5,2613.3 L1783.0,2614.4 L1781.5,2614.0 L1780.0,2613.2 L1778.5,2612.1 L1777.0,2612.2 L1775.5,2613.3 L1774.0,2617.3 L1772.5,2619.9 L1771.0,2611.1 L1769.5,2599.8 L1768.0,2601.2 L1766.5,2602.5 L1765.0,2603.9 L1763.5,2605.3 L1762.0,2606.5 L1760.5,2608.3 L1759.0,2610.3 L1757.5,2611.7 L1756.0,2613.0 L1754.5,2614.4 L1753.0,2616.4 L1751.5,2616.7 L1750.0,2617.8 L1748.5,2617.7 L1747.0,2619.1 L1745.5,2619.3 L1744.0,2620.0 L1742.5,2619.4 L1741.0,2619.2 L1739.5,2619.1 L1738.0,2618.8 L1736.5,2618.0 L1735.0,2617.6 L1733.5,2618.7 L1732.0,2619.1 L1730.5,2618.6 L1729.0,2618.4 L1727.5,2619.8 L1726.0,2619.5 L1724.5,2619.0 L1723.0,2617.6 L1721.5,2619.2 L1720.0,2620.0 L1718.5,2621.2 L1717.0,2621.0 L1715.5,2612.7 L1714.0,2604.6 L1712.5,2602.2 L1711.0,2610.4 L1709.5,2615.8 L1708.0,2615.7 L1706.5,2616.4 L1705.0,2616.7 L1703.5,2615.7 L1702.0,2614.8 L1700.5,2614.1 L1699.0,2615.1 L1697.5,2616.1 L1696.0,2615.8 L1694.5,2615.4 L1693.0,2615.2 L1691.5,2616.0 L1690.0,2616.2 L1688.5,2615.7 L1687.0,2616.0 L1685.5,2616.0 L1684.0,2615.9 L1682.5,2615.7 L1681.0,2615.4 L1679.5,2615.4 L1678.0,2615.6 L1676.5,2615.6 L1675.0,2616.7 L1673.5,2616.3 L1672.0,2616.9 L1670.5,2615.7 L1669.0,2616.4 L1667.5,2616.4 L1666.0,2617.2 L1664.5,2616.7 L1663.0,2616.2 L1661.5,2616.7 L1660.0,2610.0 L1658.5,2604.2 L1657.0,2604.0 L1655.5,2603.9 L1654.0,2603.6 L1652.5,2603.4 L1651.0,2603.6 L1649.5,2603.5 L1648.0,2603.8 L1646.5,2604.0 L1645.0,2604.5 L1643.5,2604.1 L1642.0,2604.0 L1640.5,2603.8 L1639.0,2604.2 L1637.5,2604.2 L1636.0,2604.4 L1634.5,2604.5 L1633.0,2604.6 L1631.5,2604.0 L1630.0,2603.7 L1628.5,2603.6 L1627.0,2604.0 L1625.5,2606.6 L1624.0,2609.4 L1622.5,2611.3 L1621.0,2614.3 L1619.5,2616.4 L1618.0,2619.5 L1616.5,2620.5 L1615.0,2624.9 L1613.5,2629.7 L1612.0,2635.1 L1610.5,2627.4 L1609.0,2620.1 L1607.5,2611.3 L1606.0,2602.2 L1604.5,2596.5 L1603.0,2596.5 L1601.5,2596.6 L1600.0,2596.5 L1598.5,2596.4 L1597.0,2596.3 L1595.5,2596.4 L1594.0,2596.4 L1592.5,2596.4 L1591.0,2596.4 L1589.5,2596.4 L1588.0,2596.5 L1586.5,2596.6 L1585.0,2596.6 L1583.5,2596.5 L1582.0,2596.4 L1580.5,2596.4 L1579.0,2596.5 L1577.5,2596.5 L1576.0,2596.6 L1574.5,2596.5 L1573.0,2596.5 L1571.5,2596.5 L1570.0,2596.5 L1568.5,2596.5 L1567.0,2596.4 L1565.5,2596.3 L1564.0,2596.3 L1562.5,2596.4 L1561.0,2596.5 L1559.5,2596.5 L1558.0,2596.5 L1556.5,2596.5 L1555.0,2596.6 L1553.5,2596.5 L1552.0,2596.4 L1550.5,2596.4 L1549.0,2596.5 L1547.5,2596.5 L1546.0,2596.5 L1544.5,2596.5 L1543.0,2596.5 L1541.5,2596.6 L1540.0,2596.6 L1538.5,2596.5 L1537.0,2596.5 L1535.5,2596.4 L1534.0,2596.4 L1532.5,2596.4 L1531.0,2596.5 L1529.5,2596.5 L1528.0,2596.4 L1526.5,2596.4 L1525.0,2596.4 L1523.5,2596.4 L1522.0,2596.4 L1520.5,2596.4 L1519.0,2596.4 L1517.5,2596.4 L1516.0,2596.5 L1514.5,2596.4 L1513.0,2596.4 L1511.5,2596.4 L1510.0,2596.4 L1508.5,2596.4 L1507.0,2596.5 L1505.5,2596.6 L1504.0,2596.6 L1502.5,2596.6 L1501.0,2596.6 L1499.5,2596.5 L1498.0,2596.5 L1496.5,2596.4 L1495.0,2596.4 L1493.5,2596.4 L1492.0,2596.4 L1490.5,2596.5 L1489.0,2596.5 L1487.5,2596.5 L1486.0,2596.4 L1484.5,2596.5 L1483.0,2597.1 L1481.5,2598.3 L1480.0,2599.1 L1478.5,2600.3 L1477.0,2601.1 L1475.5,2602.3 L1474.0,2603.3 L1472.5,2604.3 L1471.0,2605.2 L1469.5,2606.1 L1468.0,2607.7 L1466.5,2609.2 L1465.0,2610.6 L1463.5,2611.2 L1462.0,2612.4 L1460.5,2613.0 L1459.0,2612.7 L1457.5,2611.9 L1456.0,2611.4 L1454.5,2611.4 L1453.0,2610.6 L1451.5,2610.8 L1450.0,2610.5 L1448.5,2610.3 L1447.0,2609.9 L1445.5,2609.9 L1444.0,2609.7 L1442.5,2608.5 L1441.0,2608.2 L1439.5,2607.9 L1438.0,2609.1 L1436.5,2608.9 L1435.0,2609.4 L1433.5,2609.2 L1432.0,2609.6 L1430.5,2610.3 L1429.0,2610.9 L1427.5,2611.1 L1426.0,2610.7 L1424.5,2611.6 L1423.0,2612.4 L1421.5,2613.3 L1420.0,2613.2 L1418.5,2612.6 L1417.0,2612.6 L1415.5,2612.1 L1414.0,2612.9 L1412.5,2613.1 L1411.0,2613.1 L1409.5,2612.5 L1408.0,2611.8 L1406.5,2611.8 L1405.0,2612.7 L1403.5,2612.4 L1402.0,2612.5 L1400.5,2611.9 L1399.0,2612.0 L1397.5,2611.9 L1396.0,2611.4 L1394.5,2604.5 L1393.0,2597.3 L1391.5,2598.0 L1390.0,2598.6 L1388.5,2599.6 L1387.0,2600.2 L1385.5,2599.9 L1384.0,2599.1 L1382.5,2598.6 L1381.0,2598.0 L1379.5,2597.6 L1378.0,2597.4 L1376.5,2597.2 L1375.0,2597.1 L1373.5,2596.8 L1372.0,2596.7 L1370.5,2596.6 L1369.0,2596.6 L1367.5,2600.5 L1366.0,2612.7 L1364.5,2612.4 L1363.0,2611.8 L1361.5,2610.9 L1360.0,2610.7 L1358.5,2611.0 L1357.0,2612.0 L1355.5,2611.7 L1354.0,2611.5 L1352.5,2611.6 L1351.0,2611.8 L1349.5,2611.4 L1348.0,2610.9 L1346.5,2611.7 L1345.0,2612.3 L1343.5,2612.6 L1342.0,2612.3 L1340.5,2612.1 L1339.0,2611.9 L1337.5,2611.8 L1336.0,2612.5 L1334.5,2611.9 L1333.0,2611.8 L1331.5,2611.7 L1330.0,2612.1 L1328.5,2612.1 L1327.0,2611.0 L1325.5,2610.8 L1324.0,2610.5 L1322.5,2610.8 L1321.0,2610.9 L1319.5,2611.8 L1318.0,2611.6 L1316.5,2612.1 L1315.0,2611.4 L1313.5,2611.5 L1312.0,2611.5 L1310.5,2611.8 L1309.0,2611.9 L1307.5,2611.8 L1306.0,2612.0 L1304.5,2611.9 L1303.0,2611.4 L1301.5,2611.1 L1300.0,2612.0 L1298.5,2602.6 L1297.0,2599.5 L1295.5,2599.5 L1294.0,2599.6 L1292.5,2599.6 L1291.0,2599.4 L1289.5,2599.3 L1288.0,2599.2 L1286.5,2599.3 L1285.0,2599.2 L1283.5,2599.0 L1282.0,2598.9 L1280.5,2599.0 L1279.0,2599.1 L1277.5,2599.1 L1276.0,2599.0 L1274.5,2599.2 L1273.0,2599.5 L1271.5,2599.4 L1270.0,2599.3 L1268.5,2602.1 L1267.0,2605.5 L1265.5,2605.3 L1264.0,2605.3 L1262.5,2605.1 L1261.0,2605.6 L1259.5,2606.1 L1258.0,2605.9 L1256.5,2605.3 L1255.0,2604.9 L1253.5,2605.1 L1252.0,2605.8 L1250.5,2606.3 L1249.0,2606.2 L1247.5,2606.0 L1246.0,2605.7 L1244.5,2606.1 L1243.0,2601.7 L1241.5,2597.4 L1240.0,2597.1 L1238.5,2596.9 L1237.0,2596.8 L1235.5,2596.8 L1234.0,2596.7 L1232.5,2596.5 L1231.0,2596.6 L1229.5,2597.2 L1228.0,2597.9 L1226.5,2598.5 L1225.0,2599.2 L1223.5,2599.6 L1222.0,2600.2 L1220.5,2600.4 L1219.0,2600.7 L1217.5,2601.0 L1216.0,2601.6 L1214.5,2602.5 L1213.0,2603.4 L1211.5,2604.0 L1210.0,2604.1 L1208.5,2604.2 L1207.0,2604.8 L1205.5,2605.7 L1204.0,2606.5 L1202.5,2607.0 L1201.0,2607.3 L1199.5,2607.9 L1198.0,2607.9 L1196.5,2608.2 L1195.0,2608.6 L1193.5,2609.1 L1192.0,2609.2 L1190.5,2608.7 L1189.0,2609.1 L1187.5,2609.4 L1186.0,2609.9 L1184.5,2609.5 L1183.0,2610.2 L1181.5,2610.8 L1180.0,2611.0 L1178.5,2611.3 L1177.0,2611.5 L1175.5,2612.9 L1174.0,2612.9 L1172.5,2612.4 L1171.0,2611.5 L1169.5,2611.2 L1168.0,2611.5 L1166.5,2611.8 L1165.0,2612.9 L1163.5,2613.4 L1162.0,2613.7 L1160.5,2613.8 L1159.0,2614.0 L1157.5,2615.1 L1156.0,2614.1 L1154.5,2614.0 L1153.0,2613.8 L1151.5,2614.7 L1150.0,2615.0 L1148.5,2614.7 L1147.0,2614.2 L1145.5,2614.8 L1144.0,2615.6 L1142.5,2615.6 L1141.0,2614.7 L1139.5,2614.7 L1138.0,2615.6 L1136.5,2615.7 L1135.0,2612.3 L1133.5,2609.0 L1132.0,2609.6 L1130.5,2609.5 L1129.0,2609.1 L1127.5,2608.5 L1126.0,2608.0 L1124.5,2608.6 L1123.0,2609.5 L1121.5,2610.8 L1120.0,2611.8 L1118.5,2612.7 L1117.0,2613.9 L1115.5,2613.9 L1114.0,2614.8 L1112.5,2614.0 L1111.0,2613.6 L1109.5,2613.1 L1108.0,2613.1 L1106.5,2614.2 L1105.0,2614.0 L1103.5,2614.0 L1102.0,2613.7 L1100.5,2614.6 L1099.0,2616.0 L1097.5,2615.4 L1096.0,2615.5 L1094.5,2615.0 L1093.0,2615.7 L1091.5,2615.3 L1090.0,2614.8 L1088.5,2614.4 L1087.0,2615.2 L1085.5,2615.4 L1084.0,2615.9 L1082.5,2601.9 L1081.0,2597.4 L1079.5,2597.4 L1078.0,2597.4 L1076.5,2597.4 L1075.0,2597.5 L1073.5,2597.5 L1072.0,2597.5 L1070.5,2597.5 L1069.0,2597.6 L1067.5,2597.5 L1066.0,2597.4 L1064.5,2609.0 L1063.0,2613.4 L1061.5,2614.3 L1060.0,2615.0 L1058.5,2615.3 L1057.0,2615.6 L1055.5,2616.3 L1054.0,2616.2 L1052.5,2617.5 L1051.0,2617.9 L1049.5,2618.7 L1048.0,2618.1 L1046.5,2618.1 L1045.0,2618.8 L1043.5,2618.8 L1042.0,2619.5 L1040.5,2619.5 L1039.0,2621.1 L1037.5,2621.9 L1036.0,2623.1 L1034.5,2623.5 L1033.0,2622.4 L1031.5,2623.5 L1030.0,2626.1 L1028.5,2629.2 L1027.0,2631.2 L1025.5,2621.9 L1024.0,2596.5 L1022.5,2596.8 L1021.0,2597.2 L1019.5,2597.4 L1018.0,2597.9 L1016.5,2598.3 L1015.0,2598.9 L1013.5,2599.1 L1012.0,2599.3 L1010.5,2599.6 L1009.0,2599.9 L1007.5,2600.4 L1006.0,2600.8 L1004.5,2601.1 L1003.0,2601.2 L1001.5,2601.4 L1000.0,2601.9 L998.5,2606.8 L997.0,2611.4 L995.5,2616.9 L994.0,2618.4 L992.5,2618.7 L991.0,2618.2 L989.5,2619.3 L988.0,2619.7 L986.5,2620.1 L985.0,2620.3 L983.5,2621.1 L982.0,2621.5 L980.5,2622.2 L979.0,2621.9 L977.5,2619.8 L976.0,2617.2 L974.5,2614.9 L973.0,2610.8 L971.5,2606.8 L970.0,2603.4 L968.5,2606.1 L967.0,2608.4 L965.5,2610.5 L964.0,2612.6 L962.5,2616.0 L961.0,2619.2 L959.5,2620.4 L958.0,2619.7 L956.5,2620.1 L955.0,2621.0 L953.5,2620.8 L952.0,2620.6 L950.5,2621.0 L949.0,2621.4 L947.5,2620.8 L946.0,2619.6 L944.5,2619.1 L943.0,2620.4 L941.5,2621.6 L940.0,2621.7 L938.5,2621.8 L937.0,2622.2 L935.5,2623.4 L934.0,2623.6 L932.5,2623.9 L931.0,2623.3 L929.5,2623.3 L928.0,2623.1 L926.5,2624.9 L925.0,2626.4 L923.5,2627.4 L922.0,2627.5 L920.5,2620.8 L919.0,2597.6 L917.5,2597.5 L916.0,2597.5 L914.5,2597.4 L913.0,2597.4 L911.5,2597.5 L910.0,2597.4 L908.5,2597.5 L907.0,2597.4 L905.5,2597.4 L904.0,2597.5 L902.5,2598.0 L901.0,2599.0 L899.5,2599.9 L898.0,2600.8 L896.5,2601.4 L895.0,2602.1 L893.5,2602.8 L892.0,2604.0 L890.5,2605.4 L889.0,2606.8 L887.5,2607.8 L886.0,2608.1 L884.5,2608.5 L883.0,2609.4 L881.5,2610.4 L880.0,2611.8 L878.5,2613.0 L877.0,2614.1 L875.5,2618.0 L874.0,2622.7 L872.5,2621.2 L871.0,2620.4 L869.5,2619.6 L868.0,2620.2 L866.5,2619.5 L865.0,2619.8 L863.5,2618.8 L862.0,2618.6 L860.5,2618.7 L859.0,2618.2 L857.5,2618.8 L856.0,2617.8 L854.5,2618.3 L853.0,2617.9 L851.5,2618.5 L850.0,2619.3 L848.5,2620.0 L847.0,2620.3 L845.5,2619.0 L844.0,2617.9 L842.5,2616.6 L841.0,2617.2 L839.5,2617.3 L838.0,2618.8 L836.5,2619.1 L835.0,2618.7 L833.5,2618.0 L832.0,2618.5 L830.5,2619.9 L829.0,2620.7 L827.5,2620.3 L826.0,2620.5 L824.5,2620.5 L823.0,2620.1 L821.5,2619.0 L820.0,2618.7 L818.5,2619.2 L817.0,2620.1 L815.5,2619.6 L814.0,2619.9 L812.5,2619.1 L811.0,2618.6 L809.5,2602.3 L808.0,2602.4 L806.5,2602.7 L805.0,2602.9 L803.5,2602.9 L802.0,2603.3 L800.5,2603.2 L799.0,2603.3 L797.5,2603.0 L796.0,2603.6 L794.5,2604.2 L793.0,2604.1 L791.5,2603.9 L790.0,2603.9 L788.5,2604.3 L787.0,2604.1 L785.5,2603.4 L784.0,2602.9 L782.5,2602.6 L781.0,2602.8 L779.5,2602.5 L778.0,2602.5 L776.5,2602.3 L775.0,2602.2 L773.5,2601.9 L772.0,2601.8 L770.5,2602.2 L769.0,2602.6 L767.5,2602.6 L766.0,2602.6 L764.5,2602.9 L763.0,2603.1 L761.5,2603.4 L760.0,2603.3 L758.5,2603.2 L757.0,2603.0 L755.5,2603.5 L754.0,2604.1 L752.5,2604.4 L751.0,2602.3 L749.5,2599.6 L748.0,2597.2 L746.5,2595.6 L745.0,2595.6 L743.5,2595.6 L742.0,2595.6 L740.5,2595.6 L739.0,2595.6 L737.5,2595.6 L736.0,2595.6 L734.5,2595.6 L733.0,2595.6 L731.5,2595.6 L730.0,2595.6 L728.5,2595.6 L727.0,2595.6 L725.5,2595.6 L724.0,2595.6 L722.5,2595.6 L721.0,2595.6 L719.5,2595.6 L718.0,2595.6 L716.5,2595.6 L715.0,2595.6 L713.5,2595.6 L712.0,2595.6 L710.5,2595.6 L709.0,2595.6 L707.5,2595.6 L706.0,2595.6 L704.5,2595.6 L703.0,2595.6 L701.5,2595.6 L700.0,2595.6 L698.5,2595.6 L697.0,2595.6 L695.5,2595.6 L694.0,2595.6 L692.5,2595.6 L691.0,2595.6 L689.5,2595.6 L688.0,2595.6 L686.5,2595.6 L685.0,2595.6 L683.5,2595.6 L682.0,2595.6 L680.5,2595.6 L679.0,2595.6 L677.5,2595.6 L676.0,2595.6 L674.5,2595.6 L673.0,2595.6 L671.5,2595.6 L670.0,2595.6 L668.5,2596.1 L667.0,2596.6 L665.5,2597.1 L664.0,2597.5 L662.5,2598.0 L661.0,2598.3 L659.5,2599.1 L658.0,2599.6 L656.5,2600.5 L655.0,2601.1 L653.5,2601.3 L652.0,2601.5 L650.5,2601.8 L649.0,2602.6 L647.5,2603.4 L646.0,2603.7 L644.5,2604.2 L643.0,2604.1 L641.5,2605.3 L640.0,2606.1 L638.5,2607.3 L637.0,2607.4 L635.5,2607.8 L634.0,2608.4 L632.5,2609.6 L631.0,2610.1 L629.5,2610.5 L628.0,2610.3 L626.5,2611.5 L625.0,2612.8 L623.5,2613.7 L622.0,2613.7 L620.5,2613.9 L619.0,2614.8 L617.5,2615.9 L616.0,2616.8 L614.5,2617.4 L613.0,2618.5 L611.5,2619.8 L610.0,2621.4 L608.5,2621.4 L607.0,2620.2 L605.5,2619.0 L604.0,2617.8 L602.5,2618.9 L601.0,2619.2 L599.5,2620.0 L598.0,2618.9 L596.5,2618.9 L595.0,2618.8 L593.5,2620.3 L592.0,2620.5 L590.5,2620.7 L589.0,2620.1 L587.5,2620.3 L586.0,2620.5 L584.5,2620.0 L583.0,2620.1 L581.5,2620.4 L580.0,2620.9 L578.5,2619.8 L577.0,2618.9 L575.5,2618.2 L574.0,2618.2 L572.5,2618.2 L571.0,2617.2 L569.5,2618.1 L568.0,2618.8 L566.5,2619.3 L565.0,2619.9 L563.5,2619.3 L562.0,2621.1 L560.5,2620.3 L559.0,2621.2 L557.5,2621.5 L556.0,2622.7 L554.5,2622.3 L553.0,2622.6 L551.5,2622.3 L550.0,2622.1 L548.5,2622.4 L547.0,2609.7 L545.5,2597.6 L544.0,2597.8 L542.5,2598.2 L541.0,2598.3 L539.5,2598.4 L538.0,2598.2 L536.5,2598.4 L535.0,2598.5 L533.5,2598.5 L532.0,2598.5 L530.5,2598.4 L529.0,2598.3 L527.5,2598.3 L526.0,2598.3 L524.5,2609.3 L523.0,2612.6 L521.5,2613.4 L520.0,2613.7 L518.5,2614.1 L517.0,2614.2 L515.5,2614.1 L514.0,2613.9 L512.5,2613.3 L511.0,2613.5 L509.5,2613.5 L508.0,2613.8 L506.5,2614.6 L505.0,2615.1 L503.5,2615.7 L502.0,2615.6 L500.5,2615.6 L499.0,2614.8 L497.5,2614.6 L496.0,2615.0 L494.5,2614.9 L493.0,2615.0 L491.5,2614.3 L490.0,2614.3 L488.5,2614.6 L487.0,2615.6 L485.5,2616.6 L484.0,2616.0 L482.5,2615.0 L481.0,2614.0 L479.5,2614.6 L478.0,2615.1 L476.5,2615.7 L475.0,2614.9 L473.5,2614.7 L472.0,2614.6 L470.5,2614.7 L469.0,2614.3 L467.5,2614.0 L466.0,2614.5 L464.5,2615.0 L463.0,2615.6 L461.5,2615.1 L460.0,2615.5 L458.5,2616.1 L457.0,2617.0 L455.5,2617.1 L454.0,2617.2 L452.5,2618.2 L451.0,2618.1 L449.5,2614.6 L448.0,2606.5 L446.5,2598.9 L445.0,2596.7 L443.5,2596.9 L442.0,2597.2 L440.5,2597.5 L439.0,2598.1 L437.5,2599.0 L436.0,2599.8 L434.5,2600.3 L433.0,2600.7 L431.5,2601.5 L430.0,2602.0 L428.5,2603.1 L427.0,2603.7 L425.5,2604.5 L424.0,2605.2 L422.5,2605.5 L421.0,2606.1 L419.5,2606.9 L418.0,2607.9 L416.5,2608.9 L415.0,2609.2 L413.5,2609.9 L412.0,2610.5 L410.5,2611.0 L409.0,2610.9 L407.5,2611.6 L406.0,2611.6 L404.5,2612.6 L403.0,2612.7 L401.5,2613.4 L400.0,2612.5 L398.5,2612.2 L397.0,2612.0 L395.5,2613.2 L394.0,2613.1 L392.5,2611.4 L391.0,2606.6 L389.5,2602.3 L388.0,2597.5 L386.5,2597.3 L385.0,2597.1 L383.5,2597.0 L382.0,2596.8 L380.5,2596.6 L379.0,2596.4 L377.5,2596.3 L376.0,2596.1 L374.5,2596.0 L373.0,2595.8 L371.5,2595.6 L370.0,2595.6 L368.5,2595.6 L367.0,2595.6 L365.5,2595.6 L364.0,2595.6 L362.5,2595.6 L361.0,2595.6 L359.5,2595.6 L358.0,2595.6 L356.5,2595.6 L355.0,2595.6 L353.5,2595.6 L352.0,2595.6 L350.5,2595.6 L349.0,2595.6 L347.5,2595.6 L346.0,2595.6 L344.5,2595.6 L343.0,2595.6 L341.5,2595.6 L340.0,2595.6 L338.5,2595.6 L337.0,2595.6 L335.5,2595.6 L334.0,2595.6 L332.5,2595.6 L331.0,2595.6 L329.5,2595.6 L328.0,2595.6 L326.5,2595.6 L325.0,2595.6 L323.5,2595.6 L322.0,2595.6 L320.5,2595.6 L319.0,2595.6 L317.5,2595.6 L316.0,2595.6 L314.5,2595.6 L313.0,2595.6 L311.5,2595.6 L310.0,2595.6 L308.5,2595.6 L307.0,2595.6 L305.5,2595.6 L304.0,2595.6 L302.5,2595.6 L301.0,2595.6 L299.5,2595.6 L298.0,2595.6 L296.5,2595.6 L295.0,2595.6 L293.5,2595.6 L292.0,2595.6 L290.5,2595.6 L289.0,2595.6 L287.5,2595.6 L286.0,2595.6 Z" fill="#6a6189" clip-path="url(#ovsel)"/>
<rect x="377.5" y="2500.4" width="1580.5" height="188.6" rx="15" fill="none" stroke="#7e6bff" stroke-width="4"/>
<rect x="370.0" y="2558" width="18.4" height="74" rx="9" fill="#7e6bff" />
<rect x="377.2" y="2570" width="4" height="50" rx="2" fill="#ffffff" />
<rect x="1948.3" y="2558" width="18.4" height="74" rx="9" fill="#7e6bff" />
<rect x="1955.5" y="2570" width="4" height="50" rx="2" fill="#ffffff" />
<g fill="none" stroke="#8e8c94" stroke-width="4.6" stroke-linecap="round" stroke-linejoin="round"><path d="M120.7,2530.8 H160.8"/><path d="M131.6,2530 V2527 A5,5 0 0 1 136.6,2522.2 H144.4 A5,5 0 0 1 149.4,2527 V2530"/><path d="M125.3,2531 V2559.8 A6,6 0 0 0 131.3,2565.8 H150.2 A6,6 0 0 0 156.2,2559.8 V2531"/><path d="M136.2,2541.7 V2555.5 M145,2541.7 V2555.5"/><path d="M129.8,2623.8 L140.7,2638.2 L151.6,2623.8 M121.2,2646 H160.3 M129.8,2668 L140.7,2653.6 L151.6,2668"/></g>
</g>
<defs><clipPath id="rp"><path d="M3358,218 A14,14 0 0 1 3372,204 H4073 A14,14 0 0 1 4087,218 V2666 A30,30 0 0 1 4057,2696 H3388 A30,30 0 0 1 3358,2666 Z"/></clipPath></defs>
<g clip-path="url(#rp)">
<rect x="3358" y="204" width="729" height="2492" rx="0" fill="#17141f" />
<path d="M3358,218 A14,14 0 0 1 3372,204 H3601 V310 H3358 Z" fill="#7e6bff"/>
<rect x="3358" y="310" width="729" height="3" rx="0" fill="#221f33" />
</g>
<line x1="3981" y1="401.5" x2="4018.6" y2="401.5" stroke="#8e8c94" stroke-width="4" stroke-linecap="round"/>
<line x1="3980.7" y1="969.6" x2="4019" y2="969.6" stroke="#8e8c94" stroke-width="4" stroke-linecap="round"/>
<rect x="3418.7" y="476.6" width="608" height="97.4" rx="14" fill="#302c40" stroke="#7e6bff" stroke-width="4"/>
<rect x="3418.2" y="600.3" width="609" height="98.2" rx="14" fill="#17141f" stroke="#3e3b48" stroke-width="3"/>
<rect x="3418.2" y="724.1" width="609" height="98.2" rx="14" fill="#17141f" stroke="#3e3b48" stroke-width="3"/>
<circle cx="3890.4" cy="525.2" r="14.8" fill="#8e8c94"/>
<g transform="translate(0,0)"><path d="M3951,503.5 H3976.5 L3970.5,509.5 V528 L3976.5,532 H3951 L3956.5,528 V509.5 Z" fill="none" stroke="#8e8c94" stroke-width="4" stroke-linejoin="round"/><line x1="3963.6" y1="532" x2="3963.6" y2="548" stroke="#8e8c94" stroke-width="4" stroke-linecap="round"/></g>
<circle cx="3890.4" cy="649.0" r="14.8" fill="#8e8c94"/>
<g transform="translate(0,123.8)"><path d="M3951,503.5 H3976.5 L3970.5,509.5 V528 L3976.5,532 H3951 L3956.5,528 V509.5 Z" fill="none" stroke="#8e8c94" stroke-width="4" stroke-linejoin="round"/><line x1="3963.6" y1="532" x2="3963.6" y2="548" stroke="#8e8c94" stroke-width="4" stroke-linecap="round"/></g>
<circle cx="3890.4" cy="772.8000000000001" r="14.8" fill="#8e8c94"/>
<g transform="translate(0,247.6)"><path d="M3951,503.5 H3976.5 L3970.5,509.5 V528 L3976.5,532 H3951 L3956.5,528 V509.5 Z" fill="none" stroke="#8e8c94" stroke-width="4" stroke-linejoin="round"/><line x1="3963.6" y1="532" x2="3963.6" y2="548" stroke="#8e8c94" stroke-width="4" stroke-linecap="round"/></g>
<rect x="3416.7" y="879" width="612" height="3" rx="0" fill="#3a3744" />
<rect x="3416.7" y="1042.9" width="612.3" height="86.9" rx="8" fill="#302c40" />
<path d="M3949,1075.5 L3970.5,1096 L3992,1075.5" fill="none" stroke="#8e8c94" stroke-width="4" stroke-linecap="round" stroke-linejoin="round"/>
<rect x="3941" y="1181.6" width="88" height="43" rx="21.5" fill="#2c2939" />
<circle cx="3963" cy="1203" r="15" fill="#fff"/>
<rect x="3416.7" y="1287" width="612" height="3" rx="0" fill="#3a3744" />
<rect x="3941" y="1356" width="88" height="43" rx="21.5" fill="#7e6bff" />
<circle cx="4006.5" cy="1377.5" r="15" fill="#fff"/>
<rect x="3416.7" y="1451" width="612.3" height="94" rx="8" fill="#302c40" />
<rect x="3416.7" y="1600.5" width="612" height="3" rx="0" fill="#3a3744" />
<rect x="3417" y="2551" width="87" height="87.5" rx="8" fill="#302c40" />
<path d="M3449.5,2574 L3472.5,2595 L3449.5,2616" fill="none" stroke="#fff" stroke-width="4.6" stroke-linecap="round" stroke-linejoin="round"/>
<g transform="translate(0,0)" fill="#fff"><rect x="151.5" y="578.9" width="3.3" height="31.1"/><rect x="160.3" y="574.1" width="3.4" height="31.6"/><path d="M147.2,588 L167.7,578.9 L167.7,582.7 L147.2,591.8 Z"/><path d="M147.2,601.4 L167.7,592.8 L167.7,596.6 L147.2,605.2 Z"/></g>
<g transform="translate(-3.7,294)" fill="#fff"><rect x="151.5" y="578.9" width="3.3" height="31.1"/><rect x="160.3" y="574.1" width="3.4" height="31.6"/><path d="M147.2,588 L167.7,578.9 L167.7,582.7 L147.2,591.8 Z"/><path d="M147.2,601.4 L167.7,592.8 L167.7,596.6 L147.2,605.2 Z"/></g>
<g transform="translate(-3.4,735)" fill="#fff"><rect x="151.5" y="578.9" width="3.3" height="31.1"/><rect x="160.3" y="574.1" width="3.4" height="31.6"/><path d="M147.2,588 L167.7,578.9 L167.7,582.7 L147.2,591.8 Z"/><path d="M147.2,601.4 L167.7,592.8 L167.7,596.6 L147.2,605.2 Z"/></g>
<g transform="translate(0.1,1029)" fill="#fff"><rect x="151.5" y="578.9" width="3.3" height="31.1"/><rect x="160.3" y="574.1" width="3.4" height="31.6"/><path d="M147.2,588 L167.7,578.9 L167.7,582.7 L147.2,591.8 Z"/><path d="M147.2,601.4 L167.7,592.8 L167.7,596.6 L147.2,605.2 Z"/></g>
<g transform="translate(-0.4,1470)" fill="#fff"><rect x="151.5" y="578.9" width="3.3" height="31.1"/><rect x="160.3" y="574.1" width="3.4" height="31.6"/><path d="M147.2,588 L167.7,578.9 L167.7,582.7 L147.2,591.8 Z"/><path d="M147.2,601.4 L167.7,592.8 L167.7,596.6 L147.2,605.2 Z"/></g>
<g transform="translate(1.5,1764)" fill="#fff"><rect x="151.5" y="578.9" width="3.3" height="31.1"/><rect x="160.3" y="574.1" width="3.4" height="31.6"/><path d="M147.2,588 L167.7,578.9 L167.7,582.7 L147.2,591.8 Z"/><path d="M147.2,601.4 L167.7,592.8 L167.7,596.6 L147.2,605.2 Z"/></g>
</svg>
<div class="t" style="left:114.8px;top:424.6px;font-weight:400;font-size:54px;line-height:54px;color:#fff;letter-spacing:0px;transform:scaleX(0.93);transform-origin:0 0">A</div>
<div class="t" style="left:149.8px;top:447.2px;font-weight:700;font-size:35px;line-height:35px;color:#fff;letter-spacing:0px">4</div>
<div class="t" style="left:103.6px;top:576.6px;font-weight:400;font-size:54px;line-height:54px;color:#fff;letter-spacing:0px;transform:scaleX(0.97);transform-origin:0 0">G</div>
<div class="t" style="left:161.2px;top:605.0px;font-weight:400;font-size:33px;line-height:33px;color:#fff;letter-spacing:0px">4</div>
<div class="t" style="left:111.4px;top:718.6px;font-weight:400;font-size:54px;line-height:54px;color:#fff;letter-spacing:0px;transform:scaleX(0.97);transform-origin:0 0">G</div>
<div class="t" style="left:151.4px;top:741.2px;font-weight:700;font-size:35px;line-height:35px;color:#fff;letter-spacing:0px">4</div>
<div class="t" style="left:103.4px;top:870.6px;font-weight:400;font-size:54px;line-height:54px;color:#fff;letter-spacing:0px;transform:scaleX(0.97);transform-origin:0 0">F</div>
<div class="t" style="left:160.7px;top:899.0px;font-weight:400;font-size:33px;line-height:33px;color:#fff;letter-spacing:0px">4</div>
<div class="t" style="left:114.8px;top:1012.6px;font-weight:400;font-size:54px;line-height:54px;color:#fff;letter-spacing:0px;transform:scaleX(0.97);transform-origin:0 0">F</div>
<div class="t" style="left:145.9px;top:1035.2px;font-weight:700;font-size:35px;line-height:35px;color:#fff;letter-spacing:0px">4</div>
<div class="t" style="left:113.8px;top:1159.6px;font-weight:400;font-size:54px;line-height:54px;color:#fff;letter-spacing:0px;transform:scaleX(0.97);transform-origin:0 0">E</div>
<div class="t" style="left:145.9px;top:1182.2px;font-weight:700;font-size:35px;line-height:35px;color:#fff;letter-spacing:0px">4</div>
<div class="t" style="left:101.9px;top:1311.6px;font-weight:400;font-size:54px;line-height:54px;color:#fff;letter-spacing:0px;transform:scaleX(0.97);transform-origin:0 0">D</div>
<div class="t" style="left:162.0px;top:1340.0px;font-weight:400;font-size:33px;line-height:33px;color:#fff;letter-spacing:0px">4</div>
<div class="t" style="left:111.5px;top:1453.6px;font-weight:400;font-size:54px;line-height:54px;color:#fff;letter-spacing:0px;transform:scaleX(0.97);transform-origin:0 0">D</div>
<div class="t" style="left:149.9px;top:1476.2px;font-weight:700;font-size:35px;line-height:35px;color:#fff;letter-spacing:0px">4</div>
<div class="t" style="left:99.2px;top:1605.6px;font-weight:400;font-size:54px;line-height:54px;color:#fff;letter-spacing:0px;transform:scaleX(0.97);transform-origin:0 0">C</div>
<div class="t" style="left:165.6px;top:1634.0px;font-weight:400;font-size:33px;line-height:33px;color:#fff;letter-spacing:0px">4</div>
<div class="t" style="left:111.4px;top:1747.6px;font-weight:400;font-size:54px;line-height:54px;color:#fff;letter-spacing:0px;transform:scaleX(0.97);transform-origin:0 0">C</div>
<div class="t" style="left:149.9px;top:1770.2px;font-weight:700;font-size:35px;line-height:35px;color:#fff;letter-spacing:0px">4</div>
<div class="t" style="left:112.8px;top:1894.6px;font-weight:400;font-size:54px;line-height:54px;color:#fff;letter-spacing:0px;transform:scaleX(0.97);transform-origin:0 0">B</div>
<div class="t" style="left:148.8px;top:1917.2px;font-weight:700;font-size:35px;line-height:35px;color:#fff;letter-spacing:0px">3</div>
<div class="t" style="left:101.5px;top:2046.6px;font-weight:400;font-size:54px;line-height:54px;color:#fff;letter-spacing:0px;transform:scaleX(0.93);transform-origin:0 0">A</div>
<div class="t" style="left:165.0px;top:2074.9px;font-weight:400;font-size:33px;line-height:33px;color:#fff;letter-spacing:0px">3</div>
<div class="t" style="left:115.0px;top:2188.6px;font-weight:400;font-size:54px;line-height:54px;color:#fff;letter-spacing:0px;transform:scaleX(0.93);transform-origin:0 0">A</div>
<div class="t" style="left:149.9px;top:2211.2px;font-weight:700;font-size:35px;line-height:35px;color:#fff;letter-spacing:0px">3</div>
<div class="t" style="left:98.1px;top:2340.6px;font-weight:400;font-size:54px;line-height:54px;color:#fff;letter-spacing:0px;transform:scaleX(0.97);transform-origin:0 0">G</div>
<div class="t" style="left:165.6px;top:2368.9px;font-weight:400;font-size:33px;line-height:33px;color:#fff;letter-spacing:0px">3</div>
<div class="t" style="left:61.1px;top:51.2px;font-weight:700;font-size:87px;line-height:87px;color:#fff;letter-spacing:-2.3px">RePitch</div>
<div class="t" style="left:380.0px;top:51.2px;font-weight:400;font-size:87px;line-height:87px;color:#8b8991;letter-spacing:0px">Standard</div>
<div class="t" style="left:1183.0px;top:69.2px;font-weight:400;font-size:48px;line-height:48px;color:#fff;letter-spacing:0.4px">Select a macro</div>
<div class="t" style="left:2455.6px;top:70.2px;font-weight:400;font-size:48px;line-height:48px;color:#fff;letter-spacing:0.4px">Capture</div>
<div class="t" style="left:307.6px;top:231.1px;font-weight:400;font-size:47px;line-height:47px;color:#fff;letter-spacing:1.5px">0:00:16.000</div>
<div class="t" style="left:1080.7px;top:231.1px;font-weight:400;font-size:47px;line-height:47px;color:#fff;letter-spacing:1.5px">0:00:18.000</div>
<div class="t" style="left:1853.4px;top:231.1px;font-weight:400;font-size:47px;line-height:47px;color:#fff;letter-spacing:1.5px">0:00:20.000</div>
<div class="t" style="left:2632.6px;top:231.1px;font-weight:400;font-size:47px;line-height:47px;color:#fff;letter-spacing:1.5px">0:00:22.000</div>
<div class="t" style="left:3421.4px;top:235.1px;font-weight:700;font-size:47px;line-height:47px;color:#fff;letter-spacing:0px">Pitch</div>
<div class="t" style="left:3662.3px;top:235.1px;font-weight:700;font-size:47px;line-height:47px;color:#8e8c94;letter-spacing:0px">Level</div>
<div class="t" style="left:3892.6px;top:235.1px;font-weight:700;font-size:47px;line-height:47px;color:#8e8c94;letter-spacing:0px">Attack</div>
<div class="t" style="left:3417.5px;top:376.6px;font-weight:700;font-size:47px;line-height:47px;color:#fff;letter-spacing:0.3px">TRACKS</div>
<div class="t" style="left:3450.2px;top:500.1px;font-weight:400;font-size:47px;line-height:47px;color:#fff;letter-spacing:1px">Lead vocal</div>
<div class="t" style="left:3451.2px;top:625.5px;font-weight:400;font-size:47px;line-height:47px;color:#fff;letter-spacing:0.7px">Lead vocal - 1</div>
<div class="t" style="left:3451.2px;top:749.3px;font-weight:400;font-size:47px;line-height:47px;color:#fff;letter-spacing:0.7px">Lead vocal - 2</div>
<div class="t" style="left:3416.6px;top:945.0px;font-weight:700;font-size:47px;line-height:47px;color:#fff;letter-spacing:0.3px">SCALE</div>
<div class="t" style="left:3444.7px;top:1061.0px;font-weight:400;font-size:47px;line-height:47px;color:#fff;letter-spacing:1.2px">Chromatic</div>
<div class="t" style="left:3415.7px;top:1178.0px;font-weight:400;font-size:47px;line-height:47px;color:#fff;letter-spacing:0.8px">Snap to scale notes</div>
<div class="t" style="left:3414.7px;top:1354.0px;font-weight:700;font-size:47px;line-height:47px;color:#fff;letter-spacing:0.8px">FORMANT SHIFT</div>
<div class="t" style="left:3445.2px;top:1477.6px;font-weight:400;font-size:44px;line-height:44px;color:#fff;letter-spacing:0px">0</div>
<div class="t" style="left:3959.6px;top:1481.1px;font-weight:700;font-size:34px;line-height:34px;color:#8e8c94;letter-spacing:1px">CT</div>
</body></html>
